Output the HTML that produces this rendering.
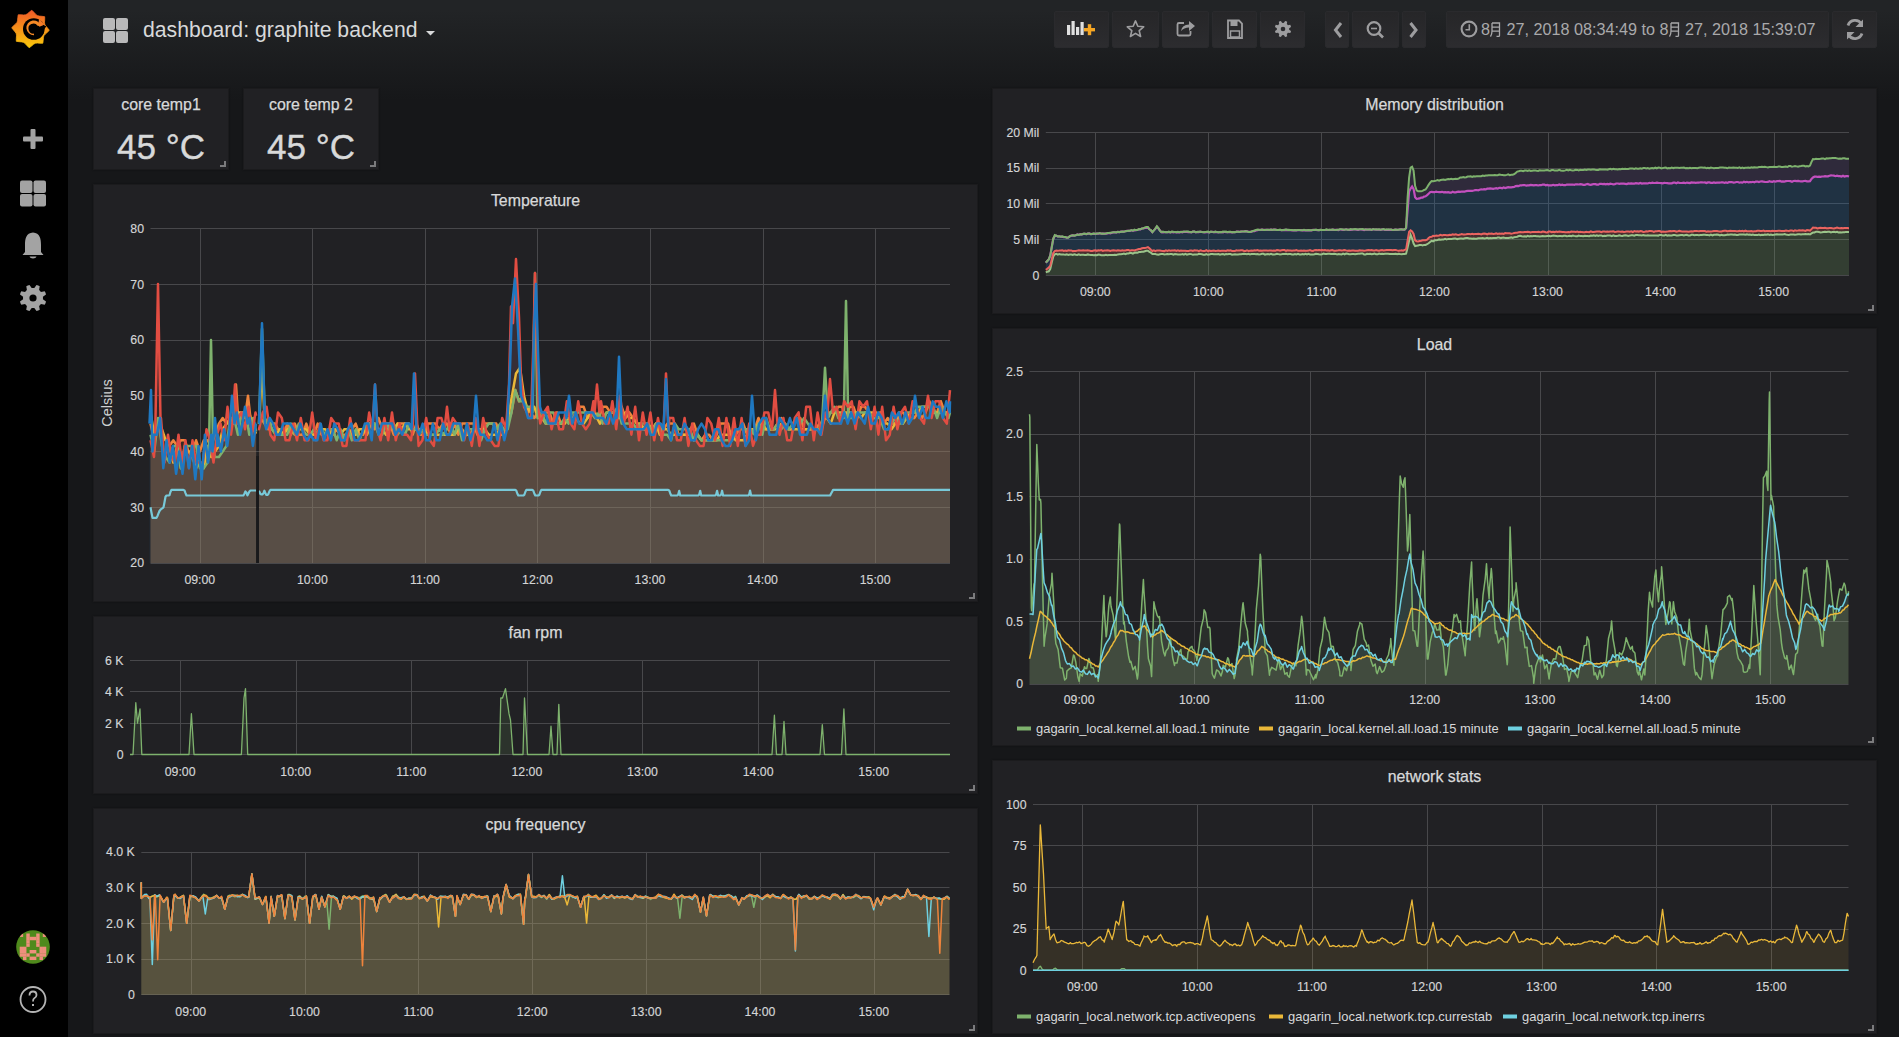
<!DOCTYPE html><html><head><meta charset="utf-8"><style>
html,body{margin:0;padding:0;width:1899px;height:1037px;overflow:hidden;background:#161719;font-family:"Liberation Sans", sans-serif;color:#d8d9da}
#bg{position:absolute;left:68px;top:0;width:1831px;height:1037px;background:linear-gradient(180deg,#222426 10px,#161719 100px)}
#side{position:absolute;left:0;top:0;width:68px;height:1037px;background:#000}
.panel{position:absolute;background:#212124;border:1px solid #1b1b1d;box-sizing:border-box;box-shadow:0 0 2px rgba(0,0,0,0.35)}
.ptitle{position:absolute;text-align:center;font-size:15.9px;line-height:20px;color:#d8d9da;-webkit-text-stroke:0.25px #d8d9da;white-space:nowrap}
.rh{position:absolute;width:6px;height:6px;box-sizing:border-box;border-right:2px solid #7b7b7d;border-bottom:2px solid #7b7b7d}
.btn{position:absolute;top:11px;height:37px;box-sizing:border-box;background:linear-gradient(180deg,#262628,#2c2c2f);border:1px solid #2a2a2d;border-radius:2px}
svg{position:absolute;left:0;top:0}
.tk{font-family:"Liberation Sans", sans-serif;font-size:12.3px;fill:#d4d5d6;stroke:#d4d5d6;stroke-width:0.15px}
.lg{font-family:"Liberation Sans", sans-serif;font-size:12.95px;fill:#d8d9da}
</style></head><body>
<div id="bg"></div>
<div id="side"></div>

<svg width="1899" height="1037" style="z-index:1">
<defs><linearGradient id="lg1" x1="0" y1="0" x2="0" y2="1"><stop offset="0" stop-color="#F05A28"/><stop offset="1" stop-color="#FBCA0A"/></linearGradient></defs>
<polygon points="31.8,10.2 33.9,12.3 35.6,14.2 37.2,15.6 39.2,16.1 41.8,16.3 44.7,16.7 44.7,19.6 44.5,22.2 44.7,24.2 45.8,26.0 47.5,28.0 49.3,30.3 47.2,32.4 45.3,34.1 43.9,35.7 43.4,37.7 43.2,40.3 42.8,43.2 39.9,43.2 37.3,43.0 35.3,43.2 33.5,44.3 31.5,46.0 29.2,47.8 27.1,45.7 25.4,43.8 23.8,42.4 21.8,41.9 19.2,41.7 16.3,41.3 16.3,38.4 16.5,35.8 16.3,33.8 15.2,32.0 13.5,30.0 11.7,27.7 13.8,25.6 15.7,23.9 17.1,22.3 17.6,20.3 17.8,17.7 18.2,14.8 21.1,14.8 23.7,15.0 25.7,14.8 27.5,13.7 29.5,12.0" fill="url(#lg1)" stroke="url(#lg1)" stroke-width="0.8" stroke-linejoin="round"/>
<circle cx="33.8" cy="29.0" r="10.8" fill="#000"/>
<path d="M39.2 18.8 L44.5 24.7 L39.4 26.8 L38.0 24.8 Z" fill="#F37A2A"/>
<path d="M41.0 26.1 A7.4 7.4 0 1 0 34.0 35.2 L34.0 33.6 A5 5 0 1 1 37.6 25.8 Z" fill="#F68A26"/>
<path d="M42.9 24.8 L46.3 26.3 L43.8 29.9 Z" fill="#000"/>
<rect x="23" y="136.5" width="20" height="5" rx="1" fill="#a3a3a3"/><rect x="30.5" y="129" width="5" height="20" rx="1" fill="#a3a3a3"/>
<rect x="20.0" y="180.5" width="12.5" height="12.5" rx="2" fill="#a3a3a3"/>
<rect x="33.5" y="180.5" width="12.5" height="12.5" rx="2" fill="#a3a3a3"/>
<rect x="20.0" y="194.0" width="12.5" height="12.5" rx="2" fill="#a3a3a3"/>
<rect x="33.5" y="194.0" width="12.5" height="12.5" rx="2" fill="#a3a3a3"/>
<path d="M33 232.5 C26 233 25 239 25 245 L25 252 L22.5 255 L43.5 255 L41 252 L41 245 C41 239 40 233 33 232.5 Z" fill="#a3a3a3"/>
<path d="M29.5 256.5 L36.5 256.5 C36 259 30 259 29.5 256.5 Z" fill="#a3a3a3"/>
<polygon points="45.5,303.2 44.7,304.8 40.9,304.1 40.1,305.1 39.1,305.9 39.8,309.7 38.2,310.5 36.5,311.0 34.3,307.9 33.0,308.0 31.7,307.9 29.5,311.0 27.8,310.5 26.2,309.7 26.9,305.9 25.9,305.1 25.1,304.1 21.3,304.8 20.5,303.2 20.0,301.5 23.1,299.3 23.0,298.0 23.1,296.7 20.0,294.5 20.5,292.8 21.3,291.2 25.1,291.9 25.9,290.9 26.9,290.1 26.3,286.3 27.8,285.5 29.5,285.0 31.7,288.1 33.0,288.0 34.3,288.1 36.5,285.0 38.2,285.5 39.7,286.3 39.1,290.1 40.1,290.9 40.9,291.9 44.7,291.2 45.5,292.8 46.0,294.5 42.9,296.7 43.0,298.0 42.9,299.3 46.0,301.5" fill="#a3a3a3"/>
<circle cx="33" cy="298" r="3.6" fill="#000"/>
<defs><clipPath id="avc"><circle cx="33" cy="947" r="16.8"/></clipPath></defs>
<circle cx="33" cy="947" r="16.8" fill="#4f8a1c"/>
<g clip-path="url(#avc)">
<rect x="19.70" y="933.50" width="3.45" height="3.45" fill="#ee8f7c"/>
<rect x="26.30" y="933.50" width="3.45" height="3.45" fill="#ee8f7c"/>
<rect x="36.20" y="933.50" width="3.45" height="3.45" fill="#ee8f7c"/>
<rect x="42.80" y="933.50" width="3.45" height="3.45" fill="#ee8f7c"/>
<rect x="26.30" y="936.80" width="3.45" height="3.45" fill="#ee8f7c"/>
<rect x="29.60" y="936.80" width="3.45" height="3.45" fill="#ee8f7c"/>
<rect x="32.90" y="936.80" width="3.45" height="3.45" fill="#ee8f7c"/>
<rect x="36.20" y="936.80" width="3.45" height="3.45" fill="#ee8f7c"/>
<rect x="26.30" y="940.10" width="3.45" height="3.45" fill="#ee8f7c"/>
<rect x="36.20" y="940.10" width="3.45" height="3.45" fill="#ee8f7c"/>
<rect x="26.30" y="943.40" width="3.45" height="3.45" fill="#ee8f7c"/>
<rect x="36.20" y="943.40" width="3.45" height="3.45" fill="#ee8f7c"/>
<rect x="19.70" y="946.70" width="3.45" height="3.45" fill="#ee8f7c"/>
<rect x="23.00" y="946.70" width="3.45" height="3.45" fill="#ee8f7c"/>
<rect x="39.50" y="946.70" width="3.45" height="3.45" fill="#ee8f7c"/>
<rect x="42.80" y="946.70" width="3.45" height="3.45" fill="#ee8f7c"/>
<rect x="19.70" y="950.00" width="3.45" height="3.45" fill="#ee8f7c"/>
<rect x="23.00" y="950.00" width="3.45" height="3.45" fill="#ee8f7c"/>
<rect x="29.60" y="950.00" width="3.45" height="3.45" fill="#ee8f7c"/>
<rect x="32.90" y="950.00" width="3.45" height="3.45" fill="#ee8f7c"/>
<rect x="39.50" y="950.00" width="3.45" height="3.45" fill="#ee8f7c"/>
<rect x="42.80" y="950.00" width="3.45" height="3.45" fill="#ee8f7c"/>
<rect x="19.70" y="953.30" width="3.45" height="3.45" fill="#ee8f7c"/>
<rect x="23.00" y="953.30" width="3.45" height="3.45" fill="#ee8f7c"/>
<rect x="26.30" y="953.30" width="3.45" height="3.45" fill="#ee8f7c"/>
<rect x="36.20" y="953.30" width="3.45" height="3.45" fill="#ee8f7c"/>
<rect x="39.50" y="953.30" width="3.45" height="3.45" fill="#ee8f7c"/>
<rect x="42.80" y="953.30" width="3.45" height="3.45" fill="#ee8f7c"/>
<rect x="23.00" y="956.60" width="3.45" height="3.45" fill="#ee8f7c"/>
<rect x="29.60" y="956.60" width="3.45" height="3.45" fill="#ee8f7c"/>
<rect x="32.90" y="956.60" width="3.45" height="3.45" fill="#ee8f7c"/>
<rect x="39.50" y="956.60" width="3.45" height="3.45" fill="#ee8f7c"/>
</g>
<circle cx="33" cy="999.5" r="12.5" fill="none" stroke="#b4b4b4" stroke-width="1.8"/>
<path d="M29.5 995.5 Q29.5 991.5 33 991.5 Q36.5 991.5 36.5 995 Q36.5 997.2 34.3 998.3 Q33 999 33 1001.5" fill="none" stroke="#b4b4b4" stroke-width="1.8"/><rect x="32" y="1004" width="2" height="2" fill="#b4b4b4"/>
<rect x="103.0" y="18.0" width="12" height="12" rx="2" fill="#b9b9ba"/>
<rect x="116.0" y="18.0" width="12" height="12" rx="2" fill="#b9b9ba"/>
<rect x="103.0" y="31.0" width="12" height="12" rx="2" fill="#b9b9ba"/>
<rect x="116.0" y="31.0" width="12" height="12" rx="2" fill="#b9b9ba"/>
</svg>
<div style="position:absolute;left:143px;top:17px;font-size:21.2px;line-height:26px;color:#d8d9da;white-space:nowrap">dashboard: graphite backend</div>
<svg width="1899" height="60" style="z-index:2"><path d="M426 31 L435 31 L430.5 35.5 Z" fill="#d8d9da"/></svg>
<div class="btn" style="left:1054px;width:55px"></div>
<div class="btn" style="left:1112px;width:47px"></div>
<div class="btn" style="left:1162px;width:47px"></div>
<div class="btn" style="left:1212px;width:45px"></div>
<div class="btn" style="left:1260px;width:45px"></div>
<div class="btn" style="left:1325px;width:24px"></div>
<div class="btn" style="left:1352px;width:47px"></div>
<div class="btn" style="left:1402px;width:24px"></div>
<div class="btn" style="left:1446px;width:383px"></div>
<div class="btn" style="left:1832px;width:45px"></div>
<svg width="1899" height="60" style="z-index:3">
<rect x="1067" y="25" width="3.2" height="10" fill="#e0e0e0"/><rect x="1071.5" y="21" width="3.2" height="14" fill="#e0e0e0"/><rect x="1076" y="27" width="3.2" height="8" fill="#e0e0e0"/><rect x="1080.5" y="22" width="3.2" height="13" fill="#e0e0e0"/>
<rect x="1084" y="28" width="11" height="3.4" fill="#f5a623"/><rect x="1087.8" y="24.2" width="3.4" height="11" fill="#f5a623"/>
<polygon points="1135.5,20.9 1137.8,26.3 1143.7,26.8 1139.2,30.7 1140.6,36.5 1135.5,33.4 1130.4,36.5 1131.8,30.7 1127.3,26.8 1133.2,26.3" fill="none" stroke="#9d9d9f" stroke-width="1.6" stroke-linejoin="round"/>
<path d="M1184 23 L1179 23 Q1177.5 23 1177.5 24.5 L1177.5 34 Q1177.5 35.5 1179 35.5 L1189 35.5 Q1190.5 35.5 1190.5 34 L1190.5 31" fill="none" stroke="#9d9d9f" stroke-width="1.8"/>
<path d="M1181 31 Q1182 24.5 1189 24.5 L1189 21 L1195 26 L1189 31 L1189 27.5 Q1184 27.5 1181 31 Z" fill="#9d9d9f"/>
<path d="M1228 20.5 L1239 20.5 L1242 23.5 L1242 38 L1228 38 Z" fill="none" stroke="#9d9d9f" stroke-width="1.8"/>
<rect x="1230.5" y="21" width="7" height="5" fill="#9d9d9f"/><rect x="1230.5" y="31" width="9" height="6" fill="none" stroke="#9d9d9f" stroke-width="1.5"/>
<polygon points="1290.7,32.2 1290.2,33.1 1287.9,32.8 1287.4,33.4 1286.8,33.9 1287.2,36.2 1286.2,36.7 1285.1,37.0 1283.8,35.1 1283.0,35.2 1282.2,35.1 1280.9,37.0 1279.8,36.7 1278.8,36.2 1279.2,33.9 1278.6,33.4 1278.1,32.8 1275.8,33.1 1275.3,32.2 1275.0,31.1 1276.9,29.8 1276.8,29.0 1276.9,28.2 1275.0,26.9 1275.3,25.8 1275.8,24.8 1278.1,25.2 1278.6,24.6 1279.2,24.1 1278.8,21.8 1279.8,21.3 1280.9,21.0 1282.2,22.9 1283.0,22.8 1283.8,22.9 1285.1,21.0 1286.2,21.3 1287.2,21.8 1286.8,24.1 1287.4,24.6 1287.9,25.2 1290.2,24.8 1290.7,25.8 1291.0,26.9 1289.1,28.2 1289.2,29.0 1289.1,29.8 1291.0,31.1" fill="#9d9d9f"/><circle cx="1283" cy="29" r="2.3" fill="#29292c"/>
<path d="M1341 23 L1335.5 30 L1341 37" fill="none" stroke="#9d9d9f" stroke-width="3"/>
<path d="M1410.5 23 L1416 30 L1410.5 37" fill="none" stroke="#9d9d9f" stroke-width="3"/>
<circle cx="1374" cy="28.5" r="6.3" fill="none" stroke="#9d9d9f" stroke-width="2.2"/><path d="M1378.5 33 L1383 37.5" stroke="#9d9d9f" stroke-width="2.6"/><path d="M1371 28.5 L1377 28.5" stroke="#9d9d9f" stroke-width="1.6"/>
<circle cx="1469" cy="29" r="7.4" fill="none" stroke="#9d9d9f" stroke-width="2.1"/><path d="M1469.3 24.2 L1469.3 29.8 L1465.5 29.8" fill="none" stroke="#9d9d9f" stroke-width="1.6"/>
<path d="M1848 25.5 A7.5 7.5 0 0 1 1861.5 24" fill="none" stroke="#9d9d9f" stroke-width="2.8"/><path d="M1863 19.5 L1863 27 L1855.5 27 Z" fill="#9d9d9f"/>
<path d="M1862 33.5 A7.5 7.5 0 0 1 1848.5 35" fill="none" stroke="#9d9d9f" stroke-width="2.8"/><path d="M1847 39.5 L1847 32 L1854.5 32 Z" fill="#9d9d9f"/>
</svg>
<div style="position:absolute;left:1481px;top:20px;font-size:16.2px;line-height:18px;color:#a9a9ab;white-space:nowrap;z-index:4">8<svg width="11" height="15" viewBox="0 0 11 15" style="position:relative;display:inline-block;vertical-align:-2px;margin:0 1px 0 0"><path d="M2 1 L9.5 1 L9.5 13.5 Q9.5 14.5 8 14.5 L6.5 14.5 M2 1 L2 9 Q2 12.5 0.5 14.5 M2 5.2 L9.5 5.2 M2 9.2 L9.5 9.2" fill="none" stroke="#a9a9ab" stroke-width="1.3"/></svg> 27, 2018 08:34:49 to 8<svg width="11" height="15" viewBox="0 0 11 15" style="position:relative;display:inline-block;vertical-align:-2px;margin:0 1px 0 0"><path d="M2 1 L9.5 1 L9.5 13.5 Q9.5 14.5 8 14.5 L6.5 14.5 M2 1 L2 9 Q2 12.5 0.5 14.5 M2 5.2 L9.5 5.2 M2 9.2 L9.5 9.2" fill="none" stroke="#a9a9ab" stroke-width="1.3"/></svg> 27, 2018 15:39:07</div>
<div class="panel" style="left:93px;top:88px;width:136px;height:82px"></div>
<div class="ptitle" style="left:93px;top:94.6px;width:136px">core temp1</div>
<div class="rh" style="left:220px;top:161px"></div>
<div class="panel" style="left:243px;top:88px;width:136px;height:82px"></div>
<div class="ptitle" style="left:243px;top:94.6px;width:136px">core temp 2</div>
<div class="rh" style="left:370px;top:161px"></div>
<div style="position:absolute;left:93px;top:126px;width:136px;text-align:center;font-size:35px;line-height:42px;color:#d8d9da;white-space:nowrap;-webkit-text-stroke:0.4px #d8d9da">45 °C</div>
<div style="position:absolute;left:243px;top:126px;width:136px;text-align:center;font-size:35px;line-height:42px;color:#d8d9da;white-space:nowrap;-webkit-text-stroke:0.4px #d8d9da">45 °C</div>
<div class="panel" style="left:93px;top:184px;width:885px;height:418px"></div>
<div class="ptitle" style="left:93px;top:190.6px;width:885px">Temperature</div>
<div class="rh" style="left:969px;top:593px"></div>
<div class="panel" style="left:93px;top:616px;width:885px;height:178px"></div>
<div class="ptitle" style="left:93px;top:622.6px;width:885px">fan rpm</div>
<div class="rh" style="left:969px;top:785px"></div>
<div class="panel" style="left:93px;top:808px;width:885px;height:226px"></div>
<div class="ptitle" style="left:93px;top:814.6px;width:885px">cpu frequency</div>
<div class="rh" style="left:969px;top:1025px"></div>
<div class="panel" style="left:992px;top:88px;width:885px;height:226px"></div>
<div class="ptitle" style="left:992px;top:94.6px;width:885px">Memory distribution</div>
<div class="rh" style="left:1868px;top:305px"></div>
<div class="panel" style="left:992px;top:328px;width:885px;height:418px"></div>
<div class="ptitle" style="left:992px;top:334.6px;width:885px">Load</div>
<div class="rh" style="left:1868px;top:737px"></div>
<div class="panel" style="left:992px;top:760px;width:885px;height:274px"></div>
<div class="ptitle" style="left:992px;top:766.6px;width:885px">network stats</div>
<div class="rh" style="left:1868px;top:1025px"></div>
<svg width="1899" height="1037" style="z-index:5">
<path d="M150.5 228.5 H950.0" stroke="#48484b" stroke-width="1"/>
<path d="M150.5 284.5 H950.0" stroke="#48484b" stroke-width="1"/>
<path d="M150.5 340.5 H950.0" stroke="#48484b" stroke-width="1"/>
<path d="M150.5 395.5 H950.0" stroke="#48484b" stroke-width="1"/>
<path d="M150.5 451.5 H950.0" stroke="#48484b" stroke-width="1"/>
<path d="M150.5 507.5 H950.0" stroke="#48484b" stroke-width="1"/>
<path d="M150.5 563.5 H950.0" stroke="#48484b" stroke-width="1"/>
<path d="M200.5 228.4 V563.0" stroke="#48484b" stroke-width="1"/>
<path d="M312.5 228.4 V563.0" stroke="#48484b" stroke-width="1"/>
<path d="M425.5 228.4 V563.0" stroke="#48484b" stroke-width="1"/>
<path d="M537.5 228.4 V563.0" stroke="#48484b" stroke-width="1"/>
<path d="M650.5 228.4 V563.0" stroke="#48484b" stroke-width="1"/>
<path d="M763.5 228.4 V563.0" stroke="#48484b" stroke-width="1"/>
<path d="M875.5 228.4 V563.0" stroke="#48484b" stroke-width="1"/>
<path d="M150.5 563.0 L150.5 423.6 L154.3 440.3 L158.1 423.6 L161.9 434.7 L165.7 440.3 L169.5 445.9 L173.3 440.3 L177.1 445.9 L180.9 440.3 L184.7 440.3 L188.5 451.5 L192.3 451.5 L196.1 440.3 L199.9 451.5 L203.7 440.3 L207.5 440.3 L211.3 445.9 L215.1 434.7 L218.9 423.6 L222.7 418.0 L226.5 423.6 L230.3 423.6 L233.5 423.6 L236.0 384.5 L238.5 423.6 L241.7 412.4 L245.0 418.0 L248.0 395.7 L251.0 423.6 L253.1 429.2 L256.2 424.6 L256.2 563.0 Z" fill="#EF843C" fill-opacity="0.1"/>
<path d="M258.9 563.0 L258.9 420.6 L260.7 418.0 L264.5 423.6 L268.3 429.2 L272.0 423.6 L275.0 423.6 L278.0 429.2 L279.7 429.2 L283.5 434.7 L287.3 423.6 L291.1 434.7 L294.9 423.6 L298.7 434.7 L302.5 434.7 L306.3 423.6 L310.1 434.7 L313.9 434.7 L317.7 423.6 L321.5 434.7 L325.3 434.7 L329.1 429.2 L332.9 434.7 L336.7 429.2 L340.5 434.7 L344.3 434.7 L348.1 434.7 L351.9 429.2 L355.7 423.6 L359.5 434.7 L363.3 434.7 L367.1 423.6 L370.9 423.6 L374.7 429.2 L378.5 418.0 L382.3 429.2 L386.1 423.6 L389.9 423.6 L393.7 434.7 L397.5 423.6 L401.3 423.6 L405.1 423.6 L408.9 423.6 L412.7 434.7 L416.5 423.6 L420.3 434.7 L424.1 434.7 L427.9 423.6 L431.7 423.6 L435.5 423.6 L439.3 429.2 L443.1 423.6 L446.9 423.6 L450.7 434.7 L454.5 423.6 L458.3 434.7 L462.1 423.6 L465.9 423.6 L469.7 423.6 L473.5 423.6 L477.3 434.7 L481.1 434.7 L484.9 423.6 L488.7 423.6 L492.5 423.6 L496.3 423.6 L500.1 434.7 L503.9 434.7 L507.7 423.6 L511.5 412.4 L515.3 390.1 L519.1 401.3 L522.9 395.7 L526.7 406.8 L530.5 412.4 L534.3 418.0 L538.1 412.4 L541.9 418.0 L545.7 412.4 L549.5 412.4 L553.3 423.6 L557.1 412.4 L560.9 423.6 L564.7 423.6 L568.5 418.0 L572.3 418.0 L576.1 412.4 L579.9 406.8 L583.7 406.8 L587.5 418.0 L591.3 412.4 L595.1 418.0 L598.9 418.0 L602.7 406.8 L606.5 406.8 L610.3 412.4 L614.1 412.4 L617.9 418.0 L621.7 406.8 L625.5 418.0 L629.3 412.4 L633.1 418.0 L636.9 423.6 L640.7 429.2 L644.5 429.2 L648.3 429.2 L652.1 429.2 L655.9 423.6 L659.7 429.2 L663.5 429.2 L667.3 423.6 L671.1 423.6 L674.9 423.6 L678.7 434.7 L682.5 434.7 L686.3 434.7 L690.1 429.2 L693.9 423.6 L697.7 434.7 L701.5 440.3 L705.3 434.7 L709.1 434.7 L712.9 440.3 L716.7 434.7 L720.5 423.6 L724.3 423.6 L728.1 423.6 L731.9 440.3 L735.7 434.7 L739.5 429.2 L743.3 423.6 L747.1 434.7 L750.9 434.7 L754.7 429.2 L758.5 418.0 L762.3 429.2 L766.1 429.2 L769.9 429.2 L773.7 429.2 L777.5 423.6 L781.3 418.0 L785.1 429.2 L788.9 429.2 L792.7 429.2 L796.5 418.0 L800.3 418.0 L804.1 429.2 L807.9 429.2 L811.7 429.2 L815.5 429.2 L819.3 423.6 L823.1 423.6 L826.9 412.4 L830.7 412.4 L834.5 412.4 L838.3 406.8 L842.1 406.8 L845.9 418.0 L849.7 406.8 L853.5 406.8 L857.3 418.0 L861.1 406.8 L864.9 406.8 L868.7 412.4 L872.5 418.0 L876.3 418.0 L880.1 412.4 L883.9 423.6 L887.7 418.0 L891.5 423.6 L895.3 423.6 L899.1 412.4 L902.9 412.4 L906.7 418.0 L910.5 418.0 L914.3 418.0 L918.1 412.4 L921.9 418.0 L925.7 412.4 L929.5 401.3 L933.3 412.4 L937.1 412.4 L940.9 401.3 L944.7 412.4 L948.5 412.4 L950.0 412.4 L950.0 563.0 Z" fill="#EF843C" fill-opacity="0.1"/>
<path d="M150.5 563.0 L150.5 412.4 L154.3 434.7 L158.1 429.2 L161.9 429.2 L165.7 440.3 L169.5 445.9 L173.3 462.6 L177.1 445.9 L180.9 468.2 L184.7 451.5 L188.5 451.5 L192.3 457.0 L196.1 468.2 L199.9 462.6 L203.7 468.2 L207.5 445.9 L211.3 457.0 L215.1 451.5 L218.9 445.9 L222.7 429.2 L226.5 423.6 L230.3 418.0 L234.1 423.6 L237.9 412.4 L241.7 412.4 L245.5 418.0 L249.3 412.4 L253.1 429.2 L256.2 433.7 L256.2 563.0 Z" fill="#EAB839" fill-opacity="0.1"/>
<path d="M258.9 563.0 L258.9 424.1 L259.0 423.6 L262.0 367.8 L265.0 423.6 L268.3 423.6 L272.1 429.2 L275.9 434.7 L279.7 429.2 L283.5 434.7 L287.3 429.2 L291.1 429.2 L294.9 434.7 L298.7 429.2 L302.5 429.2 L306.3 429.2 L310.1 434.7 L313.9 434.7 L317.7 434.7 L321.5 429.2 L325.3 429.2 L329.1 434.7 L332.9 429.2 L336.7 429.2 L340.5 434.7 L344.3 429.2 L348.1 429.2 L351.9 434.7 L355.7 434.7 L359.5 429.2 L363.3 429.2 L367.1 434.7 L370.9 423.6 L374.7 423.6 L378.5 429.2 L382.3 429.2 L386.1 434.7 L389.9 423.6 L393.7 429.2 L397.5 423.6 L401.3 429.2 L405.1 423.6 L408.9 429.2 L412.7 429.2 L416.5 429.2 L420.3 429.2 L424.1 429.2 L427.9 434.7 L431.7 434.7 L435.5 434.7 L439.3 434.7 L443.1 434.7 L446.9 434.7 L450.7 434.7 L454.5 434.7 L458.3 429.2 L462.1 429.2 L465.9 434.7 L469.7 434.7 L473.5 429.2 L477.3 429.2 L481.1 429.2 L484.9 429.2 L488.7 434.7 L492.5 434.7 L496.3 434.7 L500.1 429.2 L503.9 429.2 L506.0 429.2 L512.0 395.7 L516.0 373.4 L520.0 367.8 L524.0 395.7 L528.0 412.4 L530.5 406.8 L534.3 406.8 L538.1 418.0 L541.9 418.0 L545.7 423.6 L549.5 423.6 L553.3 423.6 L557.1 423.6 L560.9 423.6 L564.7 423.6 L568.5 418.0 L572.3 418.0 L576.1 418.0 L579.9 423.6 L583.7 423.6 L587.5 418.0 L591.3 412.4 L595.1 412.4 L597.0 418.0 L600.0 423.6 L603.0 418.0 L606.5 412.4 L610.3 412.4 L614.1 412.4 L617.9 418.0 L621.7 418.0 L625.5 412.4 L629.3 418.0 L633.1 418.0 L636.9 423.6 L640.7 423.6 L644.5 429.2 L648.3 423.6 L652.1 429.2 L655.9 423.6 L659.7 434.7 L663.5 429.2 L667.3 429.2 L671.1 434.7 L674.9 434.7 L678.7 434.7 L682.5 434.7 L686.3 434.7 L690.1 434.7 L693.9 440.3 L697.7 434.7 L701.5 440.3 L705.3 440.3 L709.1 440.3 L712.9 440.3 L716.7 440.3 L720.5 434.7 L724.3 434.7 L728.1 434.7 L731.9 434.7 L735.7 440.3 L739.5 440.3 L743.3 440.3 L747.1 434.7 L750.9 429.2 L754.7 429.2 L758.5 423.6 L762.3 423.6 L766.1 429.2 L769.9 429.2 L773.7 429.2 L777.5 429.2 L781.3 423.6 L785.1 423.6 L788.9 429.2 L792.7 429.2 L796.5 429.2 L800.3 429.2 L804.1 429.2 L807.9 429.2 L811.7 429.2 L815.5 429.2 L819.3 429.2 L823.1 418.0 L826.9 418.0 L830.7 423.6 L834.5 412.4 L838.3 412.4 L842.1 412.4 L845.9 412.4 L849.7 412.4 L853.5 412.4 L857.3 412.4 L861.1 418.0 L864.9 412.4 L868.7 412.4 L872.5 412.4 L876.3 412.4 L880.1 418.0 L883.9 423.6 L887.7 423.6 L891.5 429.2 L895.3 423.6 L899.1 418.0 L902.9 423.6 L906.7 418.0 L910.5 412.4 L914.3 412.4 L918.1 412.4 L921.9 406.8 L925.7 406.8 L929.5 406.8 L933.3 412.4 L937.1 412.4 L940.9 412.4 L944.7 412.4 L948.5 412.4 L950.0 412.4 L950.0 563.0 Z" fill="#EAB839" fill-opacity="0.1"/>
<path d="M150.5 563.0 L150.5 434.7 L154.3 451.5 L158.1 418.0 L161.9 445.9 L165.7 457.0 L169.5 462.6 L173.3 445.9 L177.1 445.9 L180.9 468.2 L184.7 445.9 L188.5 445.9 L192.3 445.9 L196.1 445.9 L199.9 468.2 L203.7 468.2 L207.5 462.6 L208.8 457.0 L211.0 339.9 L213.2 451.5 L215.1 457.0 L218.9 457.0 L222.7 451.5 L226.5 445.9 L230.3 418.0 L234.1 418.0 L237.9 434.7 L241.7 412.4 L245.5 412.4 L249.3 434.7 L253.1 418.0 L256.2 431.6 L256.2 563.0 Z" fill="#7EB26D" fill-opacity="0.1"/>
<path d="M258.9 563.0 L258.9 424.1 L259.0 423.6 L262.0 328.8 L265.0 423.6 L268.3 418.0 L272.1 429.2 L275.9 434.7 L279.7 434.7 L283.5 434.7 L287.3 434.7 L291.1 423.6 L294.9 434.7 L298.7 423.6 L302.5 429.2 L306.3 434.7 L310.1 434.7 L313.9 429.2 L317.7 434.7 L321.5 429.2 L325.3 434.7 L329.1 429.2 L332.9 429.2 L336.7 440.3 L340.5 429.2 L344.3 440.3 L348.1 429.2 L351.9 440.3 L355.7 429.2 L359.5 440.3 L363.3 429.2 L367.1 423.6 L370.9 423.6 L374.7 423.6 L378.5 434.7 L382.3 434.7 L386.1 423.6 L389.9 429.2 L393.7 423.6 L397.5 434.7 L401.3 429.2 L405.1 434.7 L408.9 423.6 L412.7 429.2 L416.5 429.2 L420.3 429.2 L424.1 434.7 L427.9 434.7 L431.7 434.7 L435.5 434.7 L439.3 429.2 L443.1 434.7 L446.9 429.2 L450.7 423.6 L454.5 434.7 L458.3 423.6 L462.1 440.3 L465.9 434.7 L469.7 429.2 L473.5 429.2 L477.3 429.2 L481.1 440.3 L484.9 429.2 L488.7 423.6 L492.5 423.6 L496.3 429.2 L500.1 423.6 L503.9 429.2 L507.7 429.2 L511.5 412.4 L515.3 390.1 L519.1 401.3 L522.9 401.3 L526.7 406.8 L530.5 406.8 L532.5 412.4 L535.0 273.0 L537.5 418.0 L538.1 412.4 L541.9 412.4 L545.7 423.6 L549.5 412.4 L553.3 412.4 L557.1 423.6 L560.9 423.6 L564.7 418.0 L568.5 423.6 L572.3 412.4 L576.1 412.4 L579.9 412.4 L583.7 412.4 L587.5 412.4 L591.3 412.4 L595.1 418.0 L598.9 412.4 L602.7 423.6 L606.5 412.4 L610.3 412.4 L614.1 412.4 L617.9 406.8 L621.7 423.6 L625.5 423.6 L629.3 423.6 L633.1 423.6 L636.9 429.2 L640.7 423.6 L644.5 423.6 L648.3 423.6 L652.1 434.7 L655.9 423.6 L659.7 423.6 L663.5 434.7 L667.3 434.7 L671.1 440.3 L674.9 423.6 L678.7 429.2 L682.5 429.2 L686.3 429.2 L690.1 429.2 L693.9 440.3 L697.7 434.7 L701.5 440.3 L705.3 440.3 L709.1 440.3 L712.9 440.3 L716.7 440.3 L720.5 440.3 L724.3 440.3 L728.1 440.3 L731.9 440.3 L735.7 429.2 L739.5 429.2 L743.3 429.2 L747.1 429.2 L750.9 429.2 L754.7 434.7 L758.5 423.6 L762.3 434.7 L766.1 418.0 L769.9 429.2 L773.7 429.2 L777.5 423.6 L781.3 429.2 L785.1 423.6 L788.9 429.2 L792.7 423.6 L796.5 418.0 L800.3 423.6 L804.1 418.0 L807.9 423.6 L811.7 429.2 L815.5 429.2 L819.3 429.2 L822.0 423.6 L825.0 367.8 L828.0 418.0 L830.7 412.4 L834.5 406.8 L838.3 418.0 L842.1 412.4 L843.8 418.0 L846.0 300.9 L848.2 418.0 L849.7 418.0 L853.5 418.0 L857.3 412.4 L861.1 412.4 L864.9 412.4 L868.7 412.4 L872.5 418.0 L876.3 418.0 L880.1 418.0 L883.9 429.2 L887.7 429.2 L891.5 423.6 L895.3 418.0 L899.1 423.6 L902.9 423.6 L906.7 412.4 L910.5 412.4 L914.3 412.4 L918.1 406.8 L921.9 406.8 L925.7 406.8 L929.5 406.8 L933.3 406.8 L937.1 418.0 L940.9 406.8 L944.7 412.4 L948.5 418.0 L950.0 412.4 L950.0 563.0 Z" fill="#7EB26D" fill-opacity="0.1"/>
<path d="M150.5 563.0 L150.5 440.3 L154.0 457.0 L155.2 434.7 L158.0 284.1 L160.8 434.7 L161.0 418.0 L164.5 462.6 L168.0 434.7 L171.5 457.0 L175.0 462.6 L178.5 434.7 L182.0 462.6 L185.5 440.3 L189.0 468.2 L192.5 440.3 L196.0 462.6 L199.5 462.6 L203.0 462.6 L206.5 429.2 L210.0 440.3 L213.5 462.6 L217.0 434.7 L220.5 423.6 L224.0 440.3 L227.5 406.8 L231.0 434.7 L232.5 423.6 L235.0 384.5 L237.5 423.6 L238.0 418.0 L241.5 412.4 L245.0 429.2 L248.5 406.8 L252.0 434.7 L255.5 412.4 L256.2 415.8 L256.2 563.0 Z" fill="#E24D42" fill-opacity="0.13"/>
<path d="M258.9 563.0 L258.9 428.7 L259.0 429.2 L262.8 412.4 L266.6 406.8 L270.4 434.7 L274.2 440.3 L278.0 412.4 L281.8 418.0 L285.6 440.3 L289.4 440.3 L293.2 423.6 L297.0 440.3 L300.8 418.0 L304.6 440.3 L308.4 440.3 L312.2 412.4 L316.0 440.3 L319.8 423.6 L323.6 440.3 L327.4 440.3 L331.2 418.0 L335.0 423.6 L338.8 423.6 L342.6 445.9 L346.4 445.9 L350.2 418.0 L354.0 440.3 L357.8 440.3 L361.6 440.3 L365.4 440.3 L369.2 412.4 L372.5 429.2 L375.0 384.5 L377.5 429.2 L380.6 440.3 L384.4 418.0 L388.2 440.3 L392.0 412.4 L395.8 440.3 L399.6 423.6 L403.4 434.7 L407.2 434.7 L411.0 440.3 L412.5 429.2 L415.0 373.4 L417.5 429.2 L418.6 445.9 L422.4 440.3 L426.2 418.0 L430.0 440.3 L433.8 445.9 L437.6 418.0 L441.4 418.0 L444.5 429.2 L447.0 406.8 L449.5 429.2 L452.8 418.0 L456.6 423.6 L460.4 423.6 L464.2 440.3 L468.0 423.6 L471.8 445.9 L475.6 418.0 L479.4 445.9 L483.2 418.0 L487.0 434.7 L490.8 440.3 L494.6 445.9 L498.4 445.9 L502.2 418.0 L506.0 429.2 L509.0 384.5 L511.0 306.5 L513.0 323.2 L516.0 259.1 L519.0 317.6 L521.0 379.0 L524.0 406.8 L527.0 412.4 L528.8 418.0 L531.0 418.0 L533.5 339.9 L535.0 273.0 L537.0 351.1 L539.0 412.4 L540.2 423.6 L544.0 412.4 L547.8 406.8 L551.6 429.2 L555.4 412.4 L559.2 429.2 L563.0 429.2 L566.8 401.3 L570.6 423.6 L574.4 429.2 L578.2 401.3 L582.0 423.6 L585.8 429.2 L589.6 423.6 L593.4 401.3 L594.5 412.4 L597.0 384.5 L599.5 412.4 L601.0 401.3 L604.8 423.6 L608.6 423.6 L612.4 401.3 L616.2 429.2 L620.0 395.7 L623.8 423.6 L627.6 406.8 L631.4 434.7 L635.2 406.8 L639.0 440.3 L642.8 412.4 L646.6 434.7 L650.4 412.4 L654.2 440.3 L658.0 418.0 L661.8 440.3 L663.5 429.2 L666.0 373.4 L668.5 429.2 L669.4 418.0 L673.2 418.0 L677.0 440.3 L680.8 440.3 L684.6 418.0 L688.4 445.9 L692.2 423.6 L696.0 440.3 L699.8 445.9 L703.6 445.9 L707.4 418.0 L711.2 423.6 L715.0 440.3 L718.8 418.0 L722.6 445.9 L726.4 418.0 L730.2 445.9 L734.0 418.0 L737.8 445.9 L741.6 418.0 L745.4 445.9 L749.2 423.6 L753.0 445.9 L756.8 434.7 L760.6 434.7 L764.4 412.4 L768.2 412.4 L772.0 429.2 L772.5 423.6 L775.0 390.1 L777.5 423.6 L779.6 434.7 L783.4 418.0 L787.2 440.3 L791.0 440.3 L794.8 418.0 L798.6 412.4 L802.4 440.3 L806.2 406.8 L810.0 406.8 L813.8 440.3 L817.6 412.4 L821.4 434.7 L825.2 412.4 L827.0 418.0 L830.0 379.0 L833.0 412.4 L836.6 406.8 L840.4 423.6 L844.2 401.3 L848.0 406.8 L851.8 401.3 L855.6 429.2 L859.4 401.3 L863.2 406.8 L867.0 401.3 L870.8 429.2 L874.6 406.8 L878.4 434.7 L882.2 406.8 L886.0 440.3 L889.8 434.7 L893.6 406.8 L897.4 429.2 L901.2 412.4 L905.0 406.8 L908.8 423.6 L912.6 401.3 L916.4 406.8 L920.2 418.0 L924.0 423.6 L925.5 412.4 L928.0 395.7 L930.5 412.4 L931.6 418.0 L935.4 401.3 L939.2 401.3 L943.0 418.0 L946.8 423.6 L950.0 390.1 L950.0 563.0 Z" fill="#E24D42" fill-opacity="0.13"/>
<path d="M149.5 563.0 L149.5 423.6 L151.0 390.1 L152.5 451.5 L153.7 434.7 L156.9 434.7 L160.1 418.0 L163.3 468.2 L166.5 440.3 L169.7 462.6 L172.9 445.9 L176.1 473.8 L179.3 451.5 L182.5 473.8 L185.7 445.9 L188.9 468.2 L192.1 445.9 L195.3 479.3 L198.5 445.9 L201.7 479.3 L204.9 434.7 L208.1 462.6 L211.3 434.7 L212.5 451.5 L215.0 418.0 L217.5 445.9 L217.7 434.7 L220.9 451.5 L224.1 429.2 L227.3 445.9 L229.5 429.2 L232.0 395.7 L234.5 423.6 L236.9 412.4 L240.1 434.7 L242.5 423.6 L245.0 406.8 L247.5 423.6 L249.7 418.0 L252.9 445.9 L256.1 423.6 L256.2 423.6 L256.2 563.0 Z" fill="#1F78C1" fill-opacity="0.1"/>
<path d="M258.9 563.0 L258.9 423.6 L259.0 423.6 L262.0 323.2 L265.0 423.6 L266.3 429.2 L269.7 418.0 L273.1 423.6 L276.5 434.7 L279.9 434.7 L283.3 423.6 L286.7 423.6 L290.1 423.6 L293.5 429.2 L296.9 434.7 L300.3 423.6 L303.7 434.7 L307.1 440.3 L310.5 434.7 L313.9 440.3 L317.3 440.3 L320.7 423.6 L324.1 440.3 L327.5 429.2 L330.9 440.3 L334.3 423.6 L337.7 429.2 L341.1 440.3 L344.5 440.3 L347.9 429.2 L351.3 423.6 L354.7 440.3 L358.1 440.3 L361.5 434.7 L364.9 423.6 L368.3 423.6 L371.7 440.3 L372.5 429.2 L375.0 384.5 L377.5 429.2 L378.5 434.7 L381.9 423.6 L385.3 423.6 L388.7 423.6 L392.1 423.6 L395.5 434.7 L398.9 429.2 L402.3 434.7 L405.7 423.6 L409.1 423.6 L411.5 429.2 L414.0 373.4 L416.5 429.2 L419.3 434.7 L422.7 423.6 L426.1 440.3 L429.5 440.3 L432.9 423.6 L436.3 440.3 L439.7 440.3 L443.1 423.6 L446.5 434.7 L449.9 434.7 L453.3 423.6 L456.7 423.6 L460.1 423.6 L463.5 440.3 L466.9 423.6 L470.3 440.3 L473.5 429.2 L476.0 395.7 L478.5 429.2 L480.5 434.7 L483.9 434.7 L487.3 440.3 L490.7 440.3 L494.1 423.6 L497.5 440.3 L500.9 423.6 L504.3 440.3 L507.0 429.2 L510.0 367.8 L512.0 306.5 L515.0 278.6 L518.0 328.8 L521.0 395.7 L525.0 406.8 L528.0 418.0 L528.1 418.0 L531.5 418.0 L532.0 418.0 L534.0 328.8 L536.0 284.1 L538.0 351.1 L540.0 406.8 L541.7 412.4 L545.1 412.4 L548.5 423.6 L551.9 423.6 L555.3 423.6 L558.7 412.4 L562.1 412.4 L565.5 412.4 L566.5 418.0 L569.0 395.7 L571.5 418.0 L572.3 423.6 L575.7 412.4 L579.1 423.6 L582.5 423.6 L585.9 412.4 L589.3 412.4 L592.7 412.4 L596.1 418.0 L599.5 418.0 L602.9 418.0 L606.3 423.6 L609.7 412.4 L613.1 423.6 L616.5 412.4 L616.5 418.0 L619.0 356.7 L621.5 418.0 L623.3 423.6 L626.7 429.2 L630.1 429.2 L633.5 429.2 L636.9 429.2 L640.3 429.2 L643.7 429.2 L647.1 423.6 L650.5 434.7 L653.9 434.7 L657.3 423.6 L660.7 423.6 L663.5 429.2 L666.0 379.0 L668.5 429.2 L670.9 440.3 L674.3 423.6 L677.7 434.7 L681.1 434.7 L684.5 423.6 L687.9 429.2 L691.3 440.3 L694.7 440.3 L698.1 429.2 L701.5 423.6 L704.9 429.2 L708.3 440.3 L711.7 440.3 L715.1 429.2 L718.5 429.2 L721.9 440.3 L725.3 445.9 L728.7 445.9 L732.1 440.3 L735.5 429.2 L738.9 429.2 L742.3 423.6 L745.7 445.9 L749.1 440.3 L749.5 434.7 L752.0 395.7 L754.5 429.2 L755.9 440.3 L759.3 423.6 L762.7 418.0 L766.1 418.0 L769.5 434.7 L772.9 434.7 L776.3 434.7 L779.7 418.0 L783.1 423.6 L786.5 429.2 L789.9 418.0 L793.3 429.2 L796.7 418.0 L800.1 434.7 L803.5 434.7 L806.9 434.7 L810.3 423.6 L813.7 429.2 L817.1 429.2 L820.5 434.7 L822.5 423.6 L825.0 395.7 L827.5 418.0 L830.7 423.6 L834.1 423.6 L837.5 423.6 L840.9 423.6 L844.3 412.4 L847.7 423.6 L851.1 412.4 L854.5 423.6 L857.9 412.4 L861.3 418.0 L864.7 423.6 L868.1 406.8 L871.5 423.6 L874.9 423.6 L878.3 412.4 L881.7 418.0 L885.1 429.2 L888.5 429.2 L891.9 412.4 L895.3 418.0 L898.7 412.4 L902.1 423.6 L905.5 412.4 L908.9 423.6 L912.3 418.0 L912.5 418.0 L915.0 395.7 L917.5 412.4 L919.1 418.0 L922.5 406.8 L925.9 418.0 L929.3 418.0 L932.7 401.3 L936.1 406.8 L939.5 406.8 L942.9 418.0 L946.3 401.3 L949.7 412.4 L950.0 401.3 L950.0 563.0 Z" fill="#1F78C1" fill-opacity="0.1"/>
<path d="M150.5 563.0 L150.5 507.2 L151.5 512.8 L152.5 517.8 L153.5 517.8 L154.5 517.8 L155.5 517.8 L156.5 517.8 L157.5 515.9 L158.5 513.4 L159.5 511.0 L160.5 509.6 L161.5 508.8 L162.5 508.1 L163.5 507.3 L164.5 502.3 L165.5 496.7 L166.5 495.5 L167.5 495.5 L168.5 495.5 L169.5 495.2 L170.5 491.7 L171.5 489.9 L172.5 489.9 L173.5 489.9 L174.5 489.9 L175.5 489.9 L176.5 489.9 L177.5 489.9 L178.5 489.9 L179.5 489.9 L180.5 489.9 L181.5 489.9 L182.5 489.9 L183.5 489.9 L184.5 490.4 L185.5 493.1 L186.5 495.5 L187.5 495.5 L188.5 495.5 L189.5 495.5 L190.5 495.5 L191.5 495.5 L192.5 495.5 L193.5 495.5 L194.5 495.5 L195.5 495.5 L196.5 495.5 L197.5 495.5 L198.5 495.5 L199.5 495.5 L200.5 495.5 L201.5 495.5 L202.5 495.5 L203.5 495.5 L204.5 495.5 L205.5 495.5 L206.5 495.5 L207.5 495.5 L208.5 495.5 L209.5 495.5 L210.5 495.5 L211.5 495.5 L212.5 495.5 L213.5 495.5 L214.5 495.5 L215.5 495.5 L216.5 495.5 L217.5 495.5 L218.5 495.5 L219.5 495.5 L220.5 495.5 L221.5 495.5 L222.5 495.5 L223.5 495.5 L224.5 495.5 L225.5 495.5 L226.5 495.5 L227.5 495.5 L228.5 495.5 L229.5 495.5 L230.4 495.5 L231.4 495.5 L232.4 495.5 L233.4 495.5 L234.4 495.5 L235.4 495.5 L236.4 495.5 L237.4 495.5 L238.4 495.5 L239.4 495.5 L240.4 495.5 L241.4 495.5 L242.4 495.5 L243.4 495.5 L244.4 493.7 L245.4 491.4 L246.4 492.5 L247.4 495.4 L248.4 493.5 L249.4 491.6 L250.4 490.5 L251.4 490.5 L252.4 490.5 L253.4 490.5 L254.4 490.5 L255.4 490.5 L256.2 490.5 L256.2 563.0 Z" fill="#6ED0E0" fill-opacity="0.04"/>
<path d="M258.9 563.0 L258.9 491.0 L259.4 491.6 L260.4 494.0 L261.4 494.4 L262.4 494.4 L263.4 493.3 L264.4 490.7 L265.4 493.3 L266.4 495.0 L267.4 495.0 L268.4 493.9 L269.4 491.4 L270.4 489.9 L271.4 489.9 L272.4 489.9 L273.4 489.9 L274.4 489.9 L275.4 489.9 L276.4 489.9 L277.4 489.9 L278.4 489.9 L279.4 489.9 L280.4 489.9 L281.4 489.9 L282.4 489.9 L283.4 489.9 L284.4 489.9 L285.4 489.9 L286.4 489.9 L287.4 489.9 L288.4 489.9 L289.4 489.9 L290.4 489.9 L291.4 489.9 L292.4 489.9 L293.4 489.9 L294.4 489.9 L295.4 489.9 L296.4 489.9 L297.4 489.9 L298.4 489.9 L299.4 489.9 L300.4 489.9 L301.4 489.9 L302.4 489.9 L303.4 489.9 L304.4 489.9 L305.4 489.9 L306.4 489.9 L307.4 489.9 L308.4 489.9 L309.4 489.9 L310.4 489.9 L311.4 489.9 L312.4 489.9 L313.4 489.9 L314.4 489.9 L315.4 489.9 L316.4 489.9 L317.4 489.9 L318.4 489.9 L319.4 489.9 L320.4 489.9 L321.4 489.9 L322.4 489.9 L323.4 489.9 L324.4 489.9 L325.4 489.9 L326.4 489.9 L327.4 489.9 L328.4 489.9 L329.4 489.9 L330.4 489.9 L331.4 489.9 L332.4 489.9 L333.4 489.9 L334.4 489.9 L335.4 489.9 L336.4 489.9 L337.4 489.9 L338.4 489.9 L339.4 489.9 L340.4 489.9 L341.4 489.9 L342.4 489.9 L343.4 489.9 L344.4 489.9 L345.4 489.9 L346.4 489.9 L347.4 489.9 L348.4 489.9 L349.4 489.9 L350.4 489.9 L351.4 489.9 L352.4 489.9 L353.4 489.9 L354.4 489.9 L355.4 489.9 L356.4 489.9 L357.4 489.9 L358.4 489.9 L359.4 489.9 L360.4 489.9 L361.4 489.9 L362.4 489.9 L363.4 489.9 L364.4 489.9 L365.4 489.9 L366.4 489.9 L367.4 489.9 L368.4 489.9 L369.4 489.9 L370.4 489.9 L371.4 489.9 L372.4 489.9 L373.4 489.9 L374.4 489.9 L375.4 489.9 L376.4 489.9 L377.4 489.9 L378.4 489.9 L379.4 489.9 L380.4 489.9 L381.4 489.9 L382.4 489.9 L383.4 489.9 L384.4 489.9 L385.4 489.9 L386.4 489.9 L387.4 489.9 L388.4 489.9 L389.4 489.9 L390.4 489.9 L391.3 489.9 L392.3 489.9 L393.3 489.9 L394.3 489.9 L395.3 489.9 L396.3 489.9 L397.3 489.9 L398.3 489.9 L399.3 489.9 L400.3 489.9 L401.3 489.9 L402.3 489.9 L403.3 489.9 L404.3 489.9 L405.3 489.9 L406.3 489.9 L407.3 489.9 L408.3 489.9 L409.3 489.9 L410.3 489.9 L411.3 489.9 L412.3 489.9 L413.3 489.9 L414.3 489.9 L415.3 489.9 L416.3 489.9 L417.3 489.9 L418.3 489.9 L419.3 489.9 L420.3 489.9 L421.3 489.9 L422.3 489.9 L423.3 489.9 L424.3 489.9 L425.3 489.9 L426.3 489.9 L427.3 489.9 L428.3 489.9 L429.3 489.9 L430.3 489.9 L431.3 489.9 L432.3 489.9 L433.3 489.9 L434.3 489.9 L435.3 489.9 L436.3 489.9 L437.3 489.9 L438.3 489.9 L439.3 489.9 L440.3 489.9 L441.3 489.9 L442.3 489.9 L443.3 489.9 L444.3 489.9 L445.3 489.9 L446.3 489.9 L447.3 489.9 L448.3 489.9 L449.3 489.9 L450.3 489.9 L451.3 489.9 L452.3 489.9 L453.3 489.9 L454.3 489.9 L455.3 489.9 L456.3 489.9 L457.3 489.9 L458.3 489.9 L459.3 489.9 L460.3 489.9 L461.3 489.9 L462.3 489.9 L463.3 489.9 L464.3 489.9 L465.3 489.9 L466.3 489.9 L467.3 489.9 L468.3 489.9 L469.3 489.9 L470.3 489.9 L471.3 489.9 L472.3 489.9 L473.3 489.9 L474.3 489.9 L475.3 489.9 L476.3 489.9 L477.3 489.9 L478.3 489.9 L479.3 489.9 L480.3 489.9 L481.3 489.9 L482.3 489.9 L483.3 489.9 L484.3 489.9 L485.3 489.9 L486.3 489.9 L487.3 489.9 L488.3 489.9 L489.3 489.9 L490.3 489.9 L491.3 489.9 L492.3 489.9 L493.3 489.9 L494.3 489.9 L495.3 489.9 L496.3 489.9 L497.3 489.9 L498.3 489.9 L499.3 489.9 L500.3 489.9 L501.3 489.9 L502.3 489.9 L503.3 489.9 L504.3 489.9 L505.3 489.9 L506.3 489.9 L507.3 489.9 L508.3 489.9 L509.3 489.9 L510.3 489.9 L511.3 489.9 L512.3 489.9 L513.3 489.9 L514.3 489.9 L515.3 489.9 L516.3 490.7 L517.3 493.5 L518.3 495.5 L519.3 495.5 L520.3 495.5 L521.3 495.5 L522.3 495.5 L523.3 495.5 L524.3 494.8 L525.3 492.0 L526.3 489.9 L527.3 489.9 L528.3 489.9 L529.3 489.9 L530.3 489.9 L531.3 489.9 L532.3 489.9 L533.3 490.7 L534.3 493.5 L535.3 495.5 L536.3 495.5 L537.3 495.5 L538.3 495.5 L539.3 494.8 L540.3 492.0 L541.3 489.9 L542.3 489.9 L543.3 489.9 L544.3 489.9 L545.3 489.9 L546.3 489.9 L547.3 489.9 L548.3 489.9 L549.3 489.9 L550.2 489.9 L551.2 489.9 L552.2 489.9 L553.2 489.9 L554.2 489.9 L555.2 489.9 L556.2 489.9 L557.2 489.9 L558.2 489.9 L559.2 489.9 L560.2 489.9 L561.2 489.9 L562.2 489.9 L563.2 489.9 L564.2 489.9 L565.2 489.9 L566.2 489.9 L567.2 489.9 L568.2 489.9 L569.2 489.9 L570.2 489.9 L571.2 489.9 L572.2 489.9 L573.2 489.9 L574.2 489.9 L575.2 489.9 L576.2 489.9 L577.2 489.9 L578.2 489.9 L579.2 489.9 L580.2 489.9 L581.2 489.9 L582.2 489.9 L583.2 489.9 L584.2 489.9 L585.2 489.9 L586.2 489.9 L587.2 489.9 L588.2 489.9 L589.2 489.9 L590.2 489.9 L591.2 489.9 L592.2 489.9 L593.2 489.9 L594.2 489.9 L595.2 489.9 L596.2 489.9 L597.2 489.9 L598.2 489.9 L599.2 489.9 L600.2 489.9 L601.2 489.9 L602.2 489.9 L603.2 489.9 L604.2 489.9 L605.2 489.9 L606.2 489.9 L607.2 489.9 L608.2 489.9 L609.2 489.9 L610.2 489.9 L611.2 489.9 L612.2 489.9 L613.2 489.9 L614.2 489.9 L615.2 489.9 L616.2 489.9 L617.2 489.9 L618.2 489.9 L619.2 489.9 L620.2 489.9 L621.2 489.9 L622.2 489.9 L623.2 489.9 L624.2 489.9 L625.2 489.9 L626.2 489.9 L627.2 489.9 L628.2 489.9 L629.2 489.9 L630.2 489.9 L631.2 489.9 L632.2 489.9 L633.2 489.9 L634.2 489.9 L635.2 489.9 L636.2 489.9 L637.2 489.9 L638.2 489.9 L639.2 489.9 L640.2 489.9 L641.2 489.9 L642.2 489.9 L643.2 489.9 L644.2 489.9 L645.2 489.9 L646.2 489.9 L647.2 489.9 L648.2 489.9 L649.2 489.9 L650.2 489.9 L651.2 489.9 L652.2 489.9 L653.2 489.9 L654.2 489.9 L655.2 489.9 L656.2 489.9 L657.2 489.9 L658.2 489.9 L659.2 489.9 L660.2 489.9 L661.2 489.9 L662.2 489.9 L663.2 489.9 L664.2 489.9 L665.2 489.9 L666.2 489.9 L667.2 489.9 L668.2 489.9 L669.2 490.4 L670.2 493.2 L671.2 495.5 L672.2 495.5 L673.2 495.5 L674.2 495.5 L675.2 495.5 L676.2 495.5 L677.2 495.5 L678.2 494.6 L679.2 490.9 L680.2 495.5 L681.2 495.5 L682.2 495.5 L683.2 495.5 L684.2 495.5 L685.2 495.5 L686.2 495.5 L687.2 495.5 L688.2 495.5 L689.2 495.5 L690.2 495.5 L691.2 495.5 L692.2 495.5 L693.2 495.5 L694.2 495.5 L695.2 495.5 L696.2 495.5 L697.2 495.5 L698.2 495.5 L699.2 494.6 L700.2 490.8 L701.2 495.5 L702.2 495.5 L703.2 495.5 L704.2 495.5 L705.2 495.5 L706.2 495.5 L707.2 495.5 L708.2 495.5 L709.2 495.5 L710.1 495.5 L711.1 495.5 L712.1 495.5 L713.1 495.5 L714.1 495.5 L715.1 495.5 L716.1 494.7 L717.1 490.8 L718.1 495.5 L719.1 495.5 L720.1 495.5 L721.1 494.7 L722.1 490.7 L723.1 495.5 L724.1 495.5 L725.1 495.5 L726.1 495.5 L727.1 495.5 L728.1 495.5 L729.1 495.5 L730.1 495.5 L731.1 495.5 L732.1 495.5 L733.1 495.5 L734.1 495.5 L735.1 495.5 L736.1 495.5 L737.1 495.5 L738.1 495.5 L739.1 495.5 L740.1 495.5 L741.1 495.5 L742.1 495.5 L743.1 495.5 L744.1 495.5 L745.1 495.5 L746.1 495.5 L747.1 495.5 L748.1 495.5 L749.1 494.8 L750.1 490.6 L751.1 495.5 L752.1 495.5 L753.1 495.5 L754.1 495.5 L755.1 495.5 L756.1 495.5 L757.1 495.5 L758.1 495.5 L759.1 495.5 L760.1 495.5 L761.1 495.5 L762.1 495.5 L763.1 495.5 L764.1 495.5 L765.1 495.5 L766.1 495.5 L767.1 495.5 L768.1 495.5 L769.1 495.5 L770.1 495.5 L771.1 495.5 L772.1 495.5 L773.1 495.5 L774.1 495.5 L775.1 495.5 L776.1 495.5 L777.1 495.5 L778.1 495.5 L779.1 495.5 L780.1 495.5 L781.1 495.5 L782.1 495.5 L783.1 495.5 L784.1 495.5 L785.1 495.5 L786.1 495.5 L787.1 495.5 L788.1 495.5 L789.1 495.5 L790.1 495.5 L791.1 495.5 L792.1 495.5 L793.1 495.5 L794.1 495.5 L795.1 495.5 L796.1 495.5 L797.1 495.5 L798.1 495.5 L799.1 495.5 L800.1 495.5 L801.1 495.5 L802.1 495.5 L803.1 495.5 L804.1 495.5 L805.1 495.5 L806.1 495.5 L807.1 495.5 L808.1 495.5 L809.1 495.5 L810.1 495.5 L811.1 495.5 L812.1 495.5 L813.1 495.5 L814.1 495.5 L815.1 495.5 L816.1 495.5 L817.1 495.5 L818.1 495.5 L819.1 495.5 L820.1 495.5 L821.1 495.5 L822.1 495.5 L823.1 495.5 L824.1 495.5 L825.1 495.5 L826.1 495.5 L827.1 495.5 L828.1 495.5 L829.1 495.5 L830.1 495.4 L831.1 493.5 L832.1 491.7 L833.1 489.9 L834.1 489.9 L835.1 489.9 L836.1 489.9 L837.1 489.9 L838.1 489.9 L839.1 489.9 L840.1 489.9 L841.1 489.9 L842.1 489.9 L843.1 489.9 L844.1 489.9 L845.1 489.9 L846.1 489.9 L847.1 489.9 L848.1 489.9 L849.1 489.9 L850.1 489.9 L851.1 489.9 L852.1 489.9 L853.1 489.9 L854.1 489.9 L855.1 489.9 L856.1 489.9 L857.1 489.9 L858.1 489.9 L859.1 489.9 L860.1 489.9 L861.1 489.9 L862.1 489.9 L863.1 489.9 L864.1 489.9 L865.1 489.9 L866.1 489.9 L867.1 489.9 L868.1 489.9 L869.1 489.9 L870.0 489.9 L871.0 489.9 L872.0 489.9 L873.0 489.9 L874.0 489.9 L875.0 489.9 L876.0 489.9 L877.0 489.9 L878.0 489.9 L879.0 489.9 L880.0 489.9 L881.0 489.9 L882.0 489.9 L883.0 489.9 L884.0 489.9 L885.0 489.9 L886.0 489.9 L887.0 489.9 L888.0 489.9 L889.0 489.9 L890.0 489.9 L891.0 489.9 L892.0 489.9 L893.0 489.9 L894.0 489.9 L895.0 489.9 L896.0 489.9 L897.0 489.9 L898.0 489.9 L899.0 489.9 L900.0 489.9 L901.0 489.9 L902.0 489.9 L903.0 489.9 L904.0 489.9 L905.0 489.9 L906.0 489.9 L907.0 489.9 L908.0 489.9 L909.0 489.9 L910.0 489.9 L911.0 489.9 L912.0 489.9 L913.0 489.9 L914.0 489.9 L915.0 489.9 L916.0 489.9 L917.0 489.9 L918.0 489.9 L919.0 489.9 L920.0 489.9 L921.0 489.9 L922.0 489.9 L923.0 489.9 L924.0 489.9 L925.0 489.9 L926.0 489.9 L927.0 489.9 L928.0 489.9 L929.0 489.9 L930.0 489.9 L931.0 489.9 L932.0 489.9 L933.0 489.9 L934.0 489.9 L935.0 489.9 L936.0 489.9 L937.0 489.9 L938.0 489.9 L939.0 489.9 L940.0 489.9 L941.0 489.9 L942.0 489.9 L943.0 489.9 L944.0 489.9 L945.0 489.9 L946.0 489.9 L947.0 489.9 L948.0 489.9 L949.0 489.9 L950.0 489.9 L950.0 563.0 Z" fill="#6ED0E0" fill-opacity="0.04"/>
<path d="M150.5 507.2 L151.5 512.8 L152.5 517.8 L153.5 517.8 L154.5 517.8 L155.5 517.8 L156.5 517.8 L157.5 515.9 L158.5 513.4 L159.5 511.0 L160.5 509.6 L161.5 508.8 L162.5 508.1 L163.5 507.3 L164.5 502.3 L165.5 496.7 L166.5 495.5 L167.5 495.5 L168.5 495.5 L169.5 495.2 L170.5 491.7 L171.5 489.9 L172.5 489.9 L173.5 489.9 L174.5 489.9 L175.5 489.9 L176.5 489.9 L177.5 489.9 L178.5 489.9 L179.5 489.9 L180.5 489.9 L181.5 489.9 L182.5 489.9 L183.5 489.9 L184.5 490.4 L185.5 493.1 L186.5 495.5 L187.5 495.5 L188.5 495.5 L189.5 495.5 L190.5 495.5 L191.5 495.5 L192.5 495.5 L193.5 495.5 L194.5 495.5 L195.5 495.5 L196.5 495.5 L197.5 495.5 L198.5 495.5 L199.5 495.5 L200.5 495.5 L201.5 495.5 L202.5 495.5 L203.5 495.5 L204.5 495.5 L205.5 495.5 L206.5 495.5 L207.5 495.5 L208.5 495.5 L209.5 495.5 L210.5 495.5 L211.5 495.5 L212.5 495.5 L213.5 495.5 L214.5 495.5 L215.5 495.5 L216.5 495.5 L217.5 495.5 L218.5 495.5 L219.5 495.5 L220.5 495.5 L221.5 495.5 L222.5 495.5 L223.5 495.5 L224.5 495.5 L225.5 495.5 L226.5 495.5 L227.5 495.5 L228.5 495.5 L229.5 495.5 L230.4 495.5 L231.4 495.5 L232.4 495.5 L233.4 495.5 L234.4 495.5 L235.4 495.5 L236.4 495.5 L237.4 495.5 L238.4 495.5 L239.4 495.5 L240.4 495.5 L241.4 495.5 L242.4 495.5 L243.4 495.5 L244.4 493.7 L245.4 491.4 L246.4 492.5 L247.4 495.4 L248.4 493.5 L249.4 491.6 L250.4 490.5 L251.4 490.5 L252.4 490.5 L253.4 490.5 L254.4 490.5 L255.4 490.5 L256.2 490.5" fill="none" stroke="#78c9d8" stroke-width="2.2" stroke-linejoin="round"/>
<path d="M258.9 491.0 L259.4 491.6 L260.4 494.0 L261.4 494.4 L262.4 494.4 L263.4 493.3 L264.4 490.7 L265.4 493.3 L266.4 495.0 L267.4 495.0 L268.4 493.9 L269.4 491.4 L270.4 489.9 L271.4 489.9 L272.4 489.9 L273.4 489.9 L274.4 489.9 L275.4 489.9 L276.4 489.9 L277.4 489.9 L278.4 489.9 L279.4 489.9 L280.4 489.9 L281.4 489.9 L282.4 489.9 L283.4 489.9 L284.4 489.9 L285.4 489.9 L286.4 489.9 L287.4 489.9 L288.4 489.9 L289.4 489.9 L290.4 489.9 L291.4 489.9 L292.4 489.9 L293.4 489.9 L294.4 489.9 L295.4 489.9 L296.4 489.9 L297.4 489.9 L298.4 489.9 L299.4 489.9 L300.4 489.9 L301.4 489.9 L302.4 489.9 L303.4 489.9 L304.4 489.9 L305.4 489.9 L306.4 489.9 L307.4 489.9 L308.4 489.9 L309.4 489.9 L310.4 489.9 L311.4 489.9 L312.4 489.9 L313.4 489.9 L314.4 489.9 L315.4 489.9 L316.4 489.9 L317.4 489.9 L318.4 489.9 L319.4 489.9 L320.4 489.9 L321.4 489.9 L322.4 489.9 L323.4 489.9 L324.4 489.9 L325.4 489.9 L326.4 489.9 L327.4 489.9 L328.4 489.9 L329.4 489.9 L330.4 489.9 L331.4 489.9 L332.4 489.9 L333.4 489.9 L334.4 489.9 L335.4 489.9 L336.4 489.9 L337.4 489.9 L338.4 489.9 L339.4 489.9 L340.4 489.9 L341.4 489.9 L342.4 489.9 L343.4 489.9 L344.4 489.9 L345.4 489.9 L346.4 489.9 L347.4 489.9 L348.4 489.9 L349.4 489.9 L350.4 489.9 L351.4 489.9 L352.4 489.9 L353.4 489.9 L354.4 489.9 L355.4 489.9 L356.4 489.9 L357.4 489.9 L358.4 489.9 L359.4 489.9 L360.4 489.9 L361.4 489.9 L362.4 489.9 L363.4 489.9 L364.4 489.9 L365.4 489.9 L366.4 489.9 L367.4 489.9 L368.4 489.9 L369.4 489.9 L370.4 489.9 L371.4 489.9 L372.4 489.9 L373.4 489.9 L374.4 489.9 L375.4 489.9 L376.4 489.9 L377.4 489.9 L378.4 489.9 L379.4 489.9 L380.4 489.9 L381.4 489.9 L382.4 489.9 L383.4 489.9 L384.4 489.9 L385.4 489.9 L386.4 489.9 L387.4 489.9 L388.4 489.9 L389.4 489.9 L390.4 489.9 L391.3 489.9 L392.3 489.9 L393.3 489.9 L394.3 489.9 L395.3 489.9 L396.3 489.9 L397.3 489.9 L398.3 489.9 L399.3 489.9 L400.3 489.9 L401.3 489.9 L402.3 489.9 L403.3 489.9 L404.3 489.9 L405.3 489.9 L406.3 489.9 L407.3 489.9 L408.3 489.9 L409.3 489.9 L410.3 489.9 L411.3 489.9 L412.3 489.9 L413.3 489.9 L414.3 489.9 L415.3 489.9 L416.3 489.9 L417.3 489.9 L418.3 489.9 L419.3 489.9 L420.3 489.9 L421.3 489.9 L422.3 489.9 L423.3 489.9 L424.3 489.9 L425.3 489.9 L426.3 489.9 L427.3 489.9 L428.3 489.9 L429.3 489.9 L430.3 489.9 L431.3 489.9 L432.3 489.9 L433.3 489.9 L434.3 489.9 L435.3 489.9 L436.3 489.9 L437.3 489.9 L438.3 489.9 L439.3 489.9 L440.3 489.9 L441.3 489.9 L442.3 489.9 L443.3 489.9 L444.3 489.9 L445.3 489.9 L446.3 489.9 L447.3 489.9 L448.3 489.9 L449.3 489.9 L450.3 489.9 L451.3 489.9 L452.3 489.9 L453.3 489.9 L454.3 489.9 L455.3 489.9 L456.3 489.9 L457.3 489.9 L458.3 489.9 L459.3 489.9 L460.3 489.9 L461.3 489.9 L462.3 489.9 L463.3 489.9 L464.3 489.9 L465.3 489.9 L466.3 489.9 L467.3 489.9 L468.3 489.9 L469.3 489.9 L470.3 489.9 L471.3 489.9 L472.3 489.9 L473.3 489.9 L474.3 489.9 L475.3 489.9 L476.3 489.9 L477.3 489.9 L478.3 489.9 L479.3 489.9 L480.3 489.9 L481.3 489.9 L482.3 489.9 L483.3 489.9 L484.3 489.9 L485.3 489.9 L486.3 489.9 L487.3 489.9 L488.3 489.9 L489.3 489.9 L490.3 489.9 L491.3 489.9 L492.3 489.9 L493.3 489.9 L494.3 489.9 L495.3 489.9 L496.3 489.9 L497.3 489.9 L498.3 489.9 L499.3 489.9 L500.3 489.9 L501.3 489.9 L502.3 489.9 L503.3 489.9 L504.3 489.9 L505.3 489.9 L506.3 489.9 L507.3 489.9 L508.3 489.9 L509.3 489.9 L510.3 489.9 L511.3 489.9 L512.3 489.9 L513.3 489.9 L514.3 489.9 L515.3 489.9 L516.3 490.7 L517.3 493.5 L518.3 495.5 L519.3 495.5 L520.3 495.5 L521.3 495.5 L522.3 495.5 L523.3 495.5 L524.3 494.8 L525.3 492.0 L526.3 489.9 L527.3 489.9 L528.3 489.9 L529.3 489.9 L530.3 489.9 L531.3 489.9 L532.3 489.9 L533.3 490.7 L534.3 493.5 L535.3 495.5 L536.3 495.5 L537.3 495.5 L538.3 495.5 L539.3 494.8 L540.3 492.0 L541.3 489.9 L542.3 489.9 L543.3 489.9 L544.3 489.9 L545.3 489.9 L546.3 489.9 L547.3 489.9 L548.3 489.9 L549.3 489.9 L550.2 489.9 L551.2 489.9 L552.2 489.9 L553.2 489.9 L554.2 489.9 L555.2 489.9 L556.2 489.9 L557.2 489.9 L558.2 489.9 L559.2 489.9 L560.2 489.9 L561.2 489.9 L562.2 489.9 L563.2 489.9 L564.2 489.9 L565.2 489.9 L566.2 489.9 L567.2 489.9 L568.2 489.9 L569.2 489.9 L570.2 489.9 L571.2 489.9 L572.2 489.9 L573.2 489.9 L574.2 489.9 L575.2 489.9 L576.2 489.9 L577.2 489.9 L578.2 489.9 L579.2 489.9 L580.2 489.9 L581.2 489.9 L582.2 489.9 L583.2 489.9 L584.2 489.9 L585.2 489.9 L586.2 489.9 L587.2 489.9 L588.2 489.9 L589.2 489.9 L590.2 489.9 L591.2 489.9 L592.2 489.9 L593.2 489.9 L594.2 489.9 L595.2 489.9 L596.2 489.9 L597.2 489.9 L598.2 489.9 L599.2 489.9 L600.2 489.9 L601.2 489.9 L602.2 489.9 L603.2 489.9 L604.2 489.9 L605.2 489.9 L606.2 489.9 L607.2 489.9 L608.2 489.9 L609.2 489.9 L610.2 489.9 L611.2 489.9 L612.2 489.9 L613.2 489.9 L614.2 489.9 L615.2 489.9 L616.2 489.9 L617.2 489.9 L618.2 489.9 L619.2 489.9 L620.2 489.9 L621.2 489.9 L622.2 489.9 L623.2 489.9 L624.2 489.9 L625.2 489.9 L626.2 489.9 L627.2 489.9 L628.2 489.9 L629.2 489.9 L630.2 489.9 L631.2 489.9 L632.2 489.9 L633.2 489.9 L634.2 489.9 L635.2 489.9 L636.2 489.9 L637.2 489.9 L638.2 489.9 L639.2 489.9 L640.2 489.9 L641.2 489.9 L642.2 489.9 L643.2 489.9 L644.2 489.9 L645.2 489.9 L646.2 489.9 L647.2 489.9 L648.2 489.9 L649.2 489.9 L650.2 489.9 L651.2 489.9 L652.2 489.9 L653.2 489.9 L654.2 489.9 L655.2 489.9 L656.2 489.9 L657.2 489.9 L658.2 489.9 L659.2 489.9 L660.2 489.9 L661.2 489.9 L662.2 489.9 L663.2 489.9 L664.2 489.9 L665.2 489.9 L666.2 489.9 L667.2 489.9 L668.2 489.9 L669.2 490.4 L670.2 493.2 L671.2 495.5 L672.2 495.5 L673.2 495.5 L674.2 495.5 L675.2 495.5 L676.2 495.5 L677.2 495.5 L678.2 494.6 L679.2 490.9 L680.2 495.5 L681.2 495.5 L682.2 495.5 L683.2 495.5 L684.2 495.5 L685.2 495.5 L686.2 495.5 L687.2 495.5 L688.2 495.5 L689.2 495.5 L690.2 495.5 L691.2 495.5 L692.2 495.5 L693.2 495.5 L694.2 495.5 L695.2 495.5 L696.2 495.5 L697.2 495.5 L698.2 495.5 L699.2 494.6 L700.2 490.8 L701.2 495.5 L702.2 495.5 L703.2 495.5 L704.2 495.5 L705.2 495.5 L706.2 495.5 L707.2 495.5 L708.2 495.5 L709.2 495.5 L710.1 495.5 L711.1 495.5 L712.1 495.5 L713.1 495.5 L714.1 495.5 L715.1 495.5 L716.1 494.7 L717.1 490.8 L718.1 495.5 L719.1 495.5 L720.1 495.5 L721.1 494.7 L722.1 490.7 L723.1 495.5 L724.1 495.5 L725.1 495.5 L726.1 495.5 L727.1 495.5 L728.1 495.5 L729.1 495.5 L730.1 495.5 L731.1 495.5 L732.1 495.5 L733.1 495.5 L734.1 495.5 L735.1 495.5 L736.1 495.5 L737.1 495.5 L738.1 495.5 L739.1 495.5 L740.1 495.5 L741.1 495.5 L742.1 495.5 L743.1 495.5 L744.1 495.5 L745.1 495.5 L746.1 495.5 L747.1 495.5 L748.1 495.5 L749.1 494.8 L750.1 490.6 L751.1 495.5 L752.1 495.5 L753.1 495.5 L754.1 495.5 L755.1 495.5 L756.1 495.5 L757.1 495.5 L758.1 495.5 L759.1 495.5 L760.1 495.5 L761.1 495.5 L762.1 495.5 L763.1 495.5 L764.1 495.5 L765.1 495.5 L766.1 495.5 L767.1 495.5 L768.1 495.5 L769.1 495.5 L770.1 495.5 L771.1 495.5 L772.1 495.5 L773.1 495.5 L774.1 495.5 L775.1 495.5 L776.1 495.5 L777.1 495.5 L778.1 495.5 L779.1 495.5 L780.1 495.5 L781.1 495.5 L782.1 495.5 L783.1 495.5 L784.1 495.5 L785.1 495.5 L786.1 495.5 L787.1 495.5 L788.1 495.5 L789.1 495.5 L790.1 495.5 L791.1 495.5 L792.1 495.5 L793.1 495.5 L794.1 495.5 L795.1 495.5 L796.1 495.5 L797.1 495.5 L798.1 495.5 L799.1 495.5 L800.1 495.5 L801.1 495.5 L802.1 495.5 L803.1 495.5 L804.1 495.5 L805.1 495.5 L806.1 495.5 L807.1 495.5 L808.1 495.5 L809.1 495.5 L810.1 495.5 L811.1 495.5 L812.1 495.5 L813.1 495.5 L814.1 495.5 L815.1 495.5 L816.1 495.5 L817.1 495.5 L818.1 495.5 L819.1 495.5 L820.1 495.5 L821.1 495.5 L822.1 495.5 L823.1 495.5 L824.1 495.5 L825.1 495.5 L826.1 495.5 L827.1 495.5 L828.1 495.5 L829.1 495.5 L830.1 495.4 L831.1 493.5 L832.1 491.7 L833.1 489.9 L834.1 489.9 L835.1 489.9 L836.1 489.9 L837.1 489.9 L838.1 489.9 L839.1 489.9 L840.1 489.9 L841.1 489.9 L842.1 489.9 L843.1 489.9 L844.1 489.9 L845.1 489.9 L846.1 489.9 L847.1 489.9 L848.1 489.9 L849.1 489.9 L850.1 489.9 L851.1 489.9 L852.1 489.9 L853.1 489.9 L854.1 489.9 L855.1 489.9 L856.1 489.9 L857.1 489.9 L858.1 489.9 L859.1 489.9 L860.1 489.9 L861.1 489.9 L862.1 489.9 L863.1 489.9 L864.1 489.9 L865.1 489.9 L866.1 489.9 L867.1 489.9 L868.1 489.9 L869.1 489.9 L870.0 489.9 L871.0 489.9 L872.0 489.9 L873.0 489.9 L874.0 489.9 L875.0 489.9 L876.0 489.9 L877.0 489.9 L878.0 489.9 L879.0 489.9 L880.0 489.9 L881.0 489.9 L882.0 489.9 L883.0 489.9 L884.0 489.9 L885.0 489.9 L886.0 489.9 L887.0 489.9 L888.0 489.9 L889.0 489.9 L890.0 489.9 L891.0 489.9 L892.0 489.9 L893.0 489.9 L894.0 489.9 L895.0 489.9 L896.0 489.9 L897.0 489.9 L898.0 489.9 L899.0 489.9 L900.0 489.9 L901.0 489.9 L902.0 489.9 L903.0 489.9 L904.0 489.9 L905.0 489.9 L906.0 489.9 L907.0 489.9 L908.0 489.9 L909.0 489.9 L910.0 489.9 L911.0 489.9 L912.0 489.9 L913.0 489.9 L914.0 489.9 L915.0 489.9 L916.0 489.9 L917.0 489.9 L918.0 489.9 L919.0 489.9 L920.0 489.9 L921.0 489.9 L922.0 489.9 L923.0 489.9 L924.0 489.9 L925.0 489.9 L926.0 489.9 L927.0 489.9 L928.0 489.9 L929.0 489.9 L930.0 489.9 L931.0 489.9 L932.0 489.9 L933.0 489.9 L934.0 489.9 L935.0 489.9 L936.0 489.9 L937.0 489.9 L938.0 489.9 L939.0 489.9 L940.0 489.9 L941.0 489.9 L942.0 489.9 L943.0 489.9 L944.0 489.9 L945.0 489.9 L946.0 489.9 L947.0 489.9 L948.0 489.9 L949.0 489.9 L950.0 489.9" fill="none" stroke="#78c9d8" stroke-width="2.2" stroke-linejoin="round"/>
<path d="M150.5 423.6 L154.3 440.3 L158.1 423.6 L161.9 434.7 L165.7 440.3 L169.5 445.9 L173.3 440.3 L177.1 445.9 L180.9 440.3 L184.7 440.3 L188.5 451.5 L192.3 451.5 L196.1 440.3 L199.9 451.5 L203.7 440.3 L207.5 440.3 L211.3 445.9 L215.1 434.7 L218.9 423.6 L222.7 418.0 L226.5 423.6 L230.3 423.6 L233.5 423.6 L236.0 384.5 L238.5 423.6 L241.7 412.4 L245.0 418.0 L248.0 395.7 L251.0 423.6 L253.1 429.2 L256.2 424.6" fill="none" stroke="#EF843C" stroke-width="2.5" stroke-linejoin="round" stroke-linecap="butt"/>
<path d="M258.9 420.6 L260.7 418.0 L264.5 423.6 L268.3 429.2 L272.0 423.6 L275.0 423.6 L278.0 429.2 L279.7 429.2 L283.5 434.7 L287.3 423.6 L291.1 434.7 L294.9 423.6 L298.7 434.7 L302.5 434.7 L306.3 423.6 L310.1 434.7 L313.9 434.7 L317.7 423.6 L321.5 434.7 L325.3 434.7 L329.1 429.2 L332.9 434.7 L336.7 429.2 L340.5 434.7 L344.3 434.7 L348.1 434.7 L351.9 429.2 L355.7 423.6 L359.5 434.7 L363.3 434.7 L367.1 423.6 L370.9 423.6 L374.7 429.2 L378.5 418.0 L382.3 429.2 L386.1 423.6 L389.9 423.6 L393.7 434.7 L397.5 423.6 L401.3 423.6 L405.1 423.6 L408.9 423.6 L412.7 434.7 L416.5 423.6 L420.3 434.7 L424.1 434.7 L427.9 423.6 L431.7 423.6 L435.5 423.6 L439.3 429.2 L443.1 423.6 L446.9 423.6 L450.7 434.7 L454.5 423.6 L458.3 434.7 L462.1 423.6 L465.9 423.6 L469.7 423.6 L473.5 423.6 L477.3 434.7 L481.1 434.7 L484.9 423.6 L488.7 423.6 L492.5 423.6 L496.3 423.6 L500.1 434.7 L503.9 434.7 L507.7 423.6 L511.5 412.4 L515.3 390.1 L519.1 401.3 L522.9 395.7 L526.7 406.8 L530.5 412.4 L534.3 418.0 L538.1 412.4 L541.9 418.0 L545.7 412.4 L549.5 412.4 L553.3 423.6 L557.1 412.4 L560.9 423.6 L564.7 423.6 L568.5 418.0 L572.3 418.0 L576.1 412.4 L579.9 406.8 L583.7 406.8 L587.5 418.0 L591.3 412.4 L595.1 418.0 L598.9 418.0 L602.7 406.8 L606.5 406.8 L610.3 412.4 L614.1 412.4 L617.9 418.0 L621.7 406.8 L625.5 418.0 L629.3 412.4 L633.1 418.0 L636.9 423.6 L640.7 429.2 L644.5 429.2 L648.3 429.2 L652.1 429.2 L655.9 423.6 L659.7 429.2 L663.5 429.2 L667.3 423.6 L671.1 423.6 L674.9 423.6 L678.7 434.7 L682.5 434.7 L686.3 434.7 L690.1 429.2 L693.9 423.6 L697.7 434.7 L701.5 440.3 L705.3 434.7 L709.1 434.7 L712.9 440.3 L716.7 434.7 L720.5 423.6 L724.3 423.6 L728.1 423.6 L731.9 440.3 L735.7 434.7 L739.5 429.2 L743.3 423.6 L747.1 434.7 L750.9 434.7 L754.7 429.2 L758.5 418.0 L762.3 429.2 L766.1 429.2 L769.9 429.2 L773.7 429.2 L777.5 423.6 L781.3 418.0 L785.1 429.2 L788.9 429.2 L792.7 429.2 L796.5 418.0 L800.3 418.0 L804.1 429.2 L807.9 429.2 L811.7 429.2 L815.5 429.2 L819.3 423.6 L823.1 423.6 L826.9 412.4 L830.7 412.4 L834.5 412.4 L838.3 406.8 L842.1 406.8 L845.9 418.0 L849.7 406.8 L853.5 406.8 L857.3 418.0 L861.1 406.8 L864.9 406.8 L868.7 412.4 L872.5 418.0 L876.3 418.0 L880.1 412.4 L883.9 423.6 L887.7 418.0 L891.5 423.6 L895.3 423.6 L899.1 412.4 L902.9 412.4 L906.7 418.0 L910.5 418.0 L914.3 418.0 L918.1 412.4 L921.9 418.0 L925.7 412.4 L929.5 401.3 L933.3 412.4 L937.1 412.4 L940.9 401.3 L944.7 412.4 L948.5 412.4 L950.0 412.4" fill="none" stroke="#EF843C" stroke-width="2.5" stroke-linejoin="round" stroke-linecap="butt"/>
<path d="M150.5 412.4 L154.3 434.7 L158.1 429.2 L161.9 429.2 L165.7 440.3 L169.5 445.9 L173.3 462.6 L177.1 445.9 L180.9 468.2 L184.7 451.5 L188.5 451.5 L192.3 457.0 L196.1 468.2 L199.9 462.6 L203.7 468.2 L207.5 445.9 L211.3 457.0 L215.1 451.5 L218.9 445.9 L222.7 429.2 L226.5 423.6 L230.3 418.0 L234.1 423.6 L237.9 412.4 L241.7 412.4 L245.5 418.0 L249.3 412.4 L253.1 429.2 L256.2 433.7" fill="none" stroke="#EAB839" stroke-width="2.5" stroke-linejoin="round" stroke-linecap="butt"/>
<path d="M258.9 424.1 L259.0 423.6 L262.0 367.8 L265.0 423.6 L268.3 423.6 L272.1 429.2 L275.9 434.7 L279.7 429.2 L283.5 434.7 L287.3 429.2 L291.1 429.2 L294.9 434.7 L298.7 429.2 L302.5 429.2 L306.3 429.2 L310.1 434.7 L313.9 434.7 L317.7 434.7 L321.5 429.2 L325.3 429.2 L329.1 434.7 L332.9 429.2 L336.7 429.2 L340.5 434.7 L344.3 429.2 L348.1 429.2 L351.9 434.7 L355.7 434.7 L359.5 429.2 L363.3 429.2 L367.1 434.7 L370.9 423.6 L374.7 423.6 L378.5 429.2 L382.3 429.2 L386.1 434.7 L389.9 423.6 L393.7 429.2 L397.5 423.6 L401.3 429.2 L405.1 423.6 L408.9 429.2 L412.7 429.2 L416.5 429.2 L420.3 429.2 L424.1 429.2 L427.9 434.7 L431.7 434.7 L435.5 434.7 L439.3 434.7 L443.1 434.7 L446.9 434.7 L450.7 434.7 L454.5 434.7 L458.3 429.2 L462.1 429.2 L465.9 434.7 L469.7 434.7 L473.5 429.2 L477.3 429.2 L481.1 429.2 L484.9 429.2 L488.7 434.7 L492.5 434.7 L496.3 434.7 L500.1 429.2 L503.9 429.2 L506.0 429.2 L512.0 395.7 L516.0 373.4 L520.0 367.8 L524.0 395.7 L528.0 412.4 L530.5 406.8 L534.3 406.8 L538.1 418.0 L541.9 418.0 L545.7 423.6 L549.5 423.6 L553.3 423.6 L557.1 423.6 L560.9 423.6 L564.7 423.6 L568.5 418.0 L572.3 418.0 L576.1 418.0 L579.9 423.6 L583.7 423.6 L587.5 418.0 L591.3 412.4 L595.1 412.4 L597.0 418.0 L600.0 423.6 L603.0 418.0 L606.5 412.4 L610.3 412.4 L614.1 412.4 L617.9 418.0 L621.7 418.0 L625.5 412.4 L629.3 418.0 L633.1 418.0 L636.9 423.6 L640.7 423.6 L644.5 429.2 L648.3 423.6 L652.1 429.2 L655.9 423.6 L659.7 434.7 L663.5 429.2 L667.3 429.2 L671.1 434.7 L674.9 434.7 L678.7 434.7 L682.5 434.7 L686.3 434.7 L690.1 434.7 L693.9 440.3 L697.7 434.7 L701.5 440.3 L705.3 440.3 L709.1 440.3 L712.9 440.3 L716.7 440.3 L720.5 434.7 L724.3 434.7 L728.1 434.7 L731.9 434.7 L735.7 440.3 L739.5 440.3 L743.3 440.3 L747.1 434.7 L750.9 429.2 L754.7 429.2 L758.5 423.6 L762.3 423.6 L766.1 429.2 L769.9 429.2 L773.7 429.2 L777.5 429.2 L781.3 423.6 L785.1 423.6 L788.9 429.2 L792.7 429.2 L796.5 429.2 L800.3 429.2 L804.1 429.2 L807.9 429.2 L811.7 429.2 L815.5 429.2 L819.3 429.2 L823.1 418.0 L826.9 418.0 L830.7 423.6 L834.5 412.4 L838.3 412.4 L842.1 412.4 L845.9 412.4 L849.7 412.4 L853.5 412.4 L857.3 412.4 L861.1 418.0 L864.9 412.4 L868.7 412.4 L872.5 412.4 L876.3 412.4 L880.1 418.0 L883.9 423.6 L887.7 423.6 L891.5 429.2 L895.3 423.6 L899.1 418.0 L902.9 423.6 L906.7 418.0 L910.5 412.4 L914.3 412.4 L918.1 412.4 L921.9 406.8 L925.7 406.8 L929.5 406.8 L933.3 412.4 L937.1 412.4 L940.9 412.4 L944.7 412.4 L948.5 412.4 L950.0 412.4" fill="none" stroke="#EAB839" stroke-width="2.5" stroke-linejoin="round" stroke-linecap="butt"/>
<path d="M150.5 434.7 L154.3 451.5 L158.1 418.0 L161.9 445.9 L165.7 457.0 L169.5 462.6 L173.3 445.9 L177.1 445.9 L180.9 468.2 L184.7 445.9 L188.5 445.9 L192.3 445.9 L196.1 445.9 L199.9 468.2 L203.7 468.2 L207.5 462.6 L208.8 457.0 L211.0 339.9 L213.2 451.5 L215.1 457.0 L218.9 457.0 L222.7 451.5 L226.5 445.9 L230.3 418.0 L234.1 418.0 L237.9 434.7 L241.7 412.4 L245.5 412.4 L249.3 434.7 L253.1 418.0 L256.2 431.6" fill="none" stroke="#7EB26D" stroke-width="2.5" stroke-linejoin="round" stroke-linecap="butt"/>
<path d="M258.9 424.1 L259.0 423.6 L262.0 328.8 L265.0 423.6 L268.3 418.0 L272.1 429.2 L275.9 434.7 L279.7 434.7 L283.5 434.7 L287.3 434.7 L291.1 423.6 L294.9 434.7 L298.7 423.6 L302.5 429.2 L306.3 434.7 L310.1 434.7 L313.9 429.2 L317.7 434.7 L321.5 429.2 L325.3 434.7 L329.1 429.2 L332.9 429.2 L336.7 440.3 L340.5 429.2 L344.3 440.3 L348.1 429.2 L351.9 440.3 L355.7 429.2 L359.5 440.3 L363.3 429.2 L367.1 423.6 L370.9 423.6 L374.7 423.6 L378.5 434.7 L382.3 434.7 L386.1 423.6 L389.9 429.2 L393.7 423.6 L397.5 434.7 L401.3 429.2 L405.1 434.7 L408.9 423.6 L412.7 429.2 L416.5 429.2 L420.3 429.2 L424.1 434.7 L427.9 434.7 L431.7 434.7 L435.5 434.7 L439.3 429.2 L443.1 434.7 L446.9 429.2 L450.7 423.6 L454.5 434.7 L458.3 423.6 L462.1 440.3 L465.9 434.7 L469.7 429.2 L473.5 429.2 L477.3 429.2 L481.1 440.3 L484.9 429.2 L488.7 423.6 L492.5 423.6 L496.3 429.2 L500.1 423.6 L503.9 429.2 L507.7 429.2 L511.5 412.4 L515.3 390.1 L519.1 401.3 L522.9 401.3 L526.7 406.8 L530.5 406.8 L532.5 412.4 L535.0 273.0 L537.5 418.0 L538.1 412.4 L541.9 412.4 L545.7 423.6 L549.5 412.4 L553.3 412.4 L557.1 423.6 L560.9 423.6 L564.7 418.0 L568.5 423.6 L572.3 412.4 L576.1 412.4 L579.9 412.4 L583.7 412.4 L587.5 412.4 L591.3 412.4 L595.1 418.0 L598.9 412.4 L602.7 423.6 L606.5 412.4 L610.3 412.4 L614.1 412.4 L617.9 406.8 L621.7 423.6 L625.5 423.6 L629.3 423.6 L633.1 423.6 L636.9 429.2 L640.7 423.6 L644.5 423.6 L648.3 423.6 L652.1 434.7 L655.9 423.6 L659.7 423.6 L663.5 434.7 L667.3 434.7 L671.1 440.3 L674.9 423.6 L678.7 429.2 L682.5 429.2 L686.3 429.2 L690.1 429.2 L693.9 440.3 L697.7 434.7 L701.5 440.3 L705.3 440.3 L709.1 440.3 L712.9 440.3 L716.7 440.3 L720.5 440.3 L724.3 440.3 L728.1 440.3 L731.9 440.3 L735.7 429.2 L739.5 429.2 L743.3 429.2 L747.1 429.2 L750.9 429.2 L754.7 434.7 L758.5 423.6 L762.3 434.7 L766.1 418.0 L769.9 429.2 L773.7 429.2 L777.5 423.6 L781.3 429.2 L785.1 423.6 L788.9 429.2 L792.7 423.6 L796.5 418.0 L800.3 423.6 L804.1 418.0 L807.9 423.6 L811.7 429.2 L815.5 429.2 L819.3 429.2 L822.0 423.6 L825.0 367.8 L828.0 418.0 L830.7 412.4 L834.5 406.8 L838.3 418.0 L842.1 412.4 L843.8 418.0 L846.0 300.9 L848.2 418.0 L849.7 418.0 L853.5 418.0 L857.3 412.4 L861.1 412.4 L864.9 412.4 L868.7 412.4 L872.5 418.0 L876.3 418.0 L880.1 418.0 L883.9 429.2 L887.7 429.2 L891.5 423.6 L895.3 418.0 L899.1 423.6 L902.9 423.6 L906.7 412.4 L910.5 412.4 L914.3 412.4 L918.1 406.8 L921.9 406.8 L925.7 406.8 L929.5 406.8 L933.3 406.8 L937.1 418.0 L940.9 406.8 L944.7 412.4 L948.5 418.0 L950.0 412.4" fill="none" stroke="#7EB26D" stroke-width="2.5" stroke-linejoin="round" stroke-linecap="butt"/>
<path d="M150.5 440.3 L154.0 457.0 L155.2 434.7 L158.0 284.1 L160.8 434.7 L161.0 418.0 L164.5 462.6 L168.0 434.7 L171.5 457.0 L175.0 462.6 L178.5 434.7 L182.0 462.6 L185.5 440.3 L189.0 468.2 L192.5 440.3 L196.0 462.6 L199.5 462.6 L203.0 462.6 L206.5 429.2 L210.0 440.3 L213.5 462.6 L217.0 434.7 L220.5 423.6 L224.0 440.3 L227.5 406.8 L231.0 434.7 L232.5 423.6 L235.0 384.5 L237.5 423.6 L238.0 418.0 L241.5 412.4 L245.0 429.2 L248.5 406.8 L252.0 434.7 L255.5 412.4 L256.2 415.8" fill="none" stroke="#E24D42" stroke-width="2.5" stroke-linejoin="round" stroke-linecap="butt"/>
<path d="M258.9 428.7 L259.0 429.2 L262.8 412.4 L266.6 406.8 L270.4 434.7 L274.2 440.3 L278.0 412.4 L281.8 418.0 L285.6 440.3 L289.4 440.3 L293.2 423.6 L297.0 440.3 L300.8 418.0 L304.6 440.3 L308.4 440.3 L312.2 412.4 L316.0 440.3 L319.8 423.6 L323.6 440.3 L327.4 440.3 L331.2 418.0 L335.0 423.6 L338.8 423.6 L342.6 445.9 L346.4 445.9 L350.2 418.0 L354.0 440.3 L357.8 440.3 L361.6 440.3 L365.4 440.3 L369.2 412.4 L372.5 429.2 L375.0 384.5 L377.5 429.2 L380.6 440.3 L384.4 418.0 L388.2 440.3 L392.0 412.4 L395.8 440.3 L399.6 423.6 L403.4 434.7 L407.2 434.7 L411.0 440.3 L412.5 429.2 L415.0 373.4 L417.5 429.2 L418.6 445.9 L422.4 440.3 L426.2 418.0 L430.0 440.3 L433.8 445.9 L437.6 418.0 L441.4 418.0 L444.5 429.2 L447.0 406.8 L449.5 429.2 L452.8 418.0 L456.6 423.6 L460.4 423.6 L464.2 440.3 L468.0 423.6 L471.8 445.9 L475.6 418.0 L479.4 445.9 L483.2 418.0 L487.0 434.7 L490.8 440.3 L494.6 445.9 L498.4 445.9 L502.2 418.0 L506.0 429.2 L509.0 384.5 L511.0 306.5 L513.0 323.2 L516.0 259.1 L519.0 317.6 L521.0 379.0 L524.0 406.8 L527.0 412.4 L528.8 418.0 L531.0 418.0 L533.5 339.9 L535.0 273.0 L537.0 351.1 L539.0 412.4 L540.2 423.6 L544.0 412.4 L547.8 406.8 L551.6 429.2 L555.4 412.4 L559.2 429.2 L563.0 429.2 L566.8 401.3 L570.6 423.6 L574.4 429.2 L578.2 401.3 L582.0 423.6 L585.8 429.2 L589.6 423.6 L593.4 401.3 L594.5 412.4 L597.0 384.5 L599.5 412.4 L601.0 401.3 L604.8 423.6 L608.6 423.6 L612.4 401.3 L616.2 429.2 L620.0 395.7 L623.8 423.6 L627.6 406.8 L631.4 434.7 L635.2 406.8 L639.0 440.3 L642.8 412.4 L646.6 434.7 L650.4 412.4 L654.2 440.3 L658.0 418.0 L661.8 440.3 L663.5 429.2 L666.0 373.4 L668.5 429.2 L669.4 418.0 L673.2 418.0 L677.0 440.3 L680.8 440.3 L684.6 418.0 L688.4 445.9 L692.2 423.6 L696.0 440.3 L699.8 445.9 L703.6 445.9 L707.4 418.0 L711.2 423.6 L715.0 440.3 L718.8 418.0 L722.6 445.9 L726.4 418.0 L730.2 445.9 L734.0 418.0 L737.8 445.9 L741.6 418.0 L745.4 445.9 L749.2 423.6 L753.0 445.9 L756.8 434.7 L760.6 434.7 L764.4 412.4 L768.2 412.4 L772.0 429.2 L772.5 423.6 L775.0 390.1 L777.5 423.6 L779.6 434.7 L783.4 418.0 L787.2 440.3 L791.0 440.3 L794.8 418.0 L798.6 412.4 L802.4 440.3 L806.2 406.8 L810.0 406.8 L813.8 440.3 L817.6 412.4 L821.4 434.7 L825.2 412.4 L827.0 418.0 L830.0 379.0 L833.0 412.4 L836.6 406.8 L840.4 423.6 L844.2 401.3 L848.0 406.8 L851.8 401.3 L855.6 429.2 L859.4 401.3 L863.2 406.8 L867.0 401.3 L870.8 429.2 L874.6 406.8 L878.4 434.7 L882.2 406.8 L886.0 440.3 L889.8 434.7 L893.6 406.8 L897.4 429.2 L901.2 412.4 L905.0 406.8 L908.8 423.6 L912.6 401.3 L916.4 406.8 L920.2 418.0 L924.0 423.6 L925.5 412.4 L928.0 395.7 L930.5 412.4 L931.6 418.0 L935.4 401.3 L939.2 401.3 L943.0 418.0 L946.8 423.6 L950.0 390.1" fill="none" stroke="#E24D42" stroke-width="2.5" stroke-linejoin="round" stroke-linecap="butt"/>
<path d="M149.5 423.6 L151.0 390.1 L152.5 451.5 L153.7 434.7 L156.9 434.7 L160.1 418.0 L163.3 468.2 L166.5 440.3 L169.7 462.6 L172.9 445.9 L176.1 473.8 L179.3 451.5 L182.5 473.8 L185.7 445.9 L188.9 468.2 L192.1 445.9 L195.3 479.3 L198.5 445.9 L201.7 479.3 L204.9 434.7 L208.1 462.6 L211.3 434.7 L212.5 451.5 L215.0 418.0 L217.5 445.9 L217.7 434.7 L220.9 451.5 L224.1 429.2 L227.3 445.9 L229.5 429.2 L232.0 395.7 L234.5 423.6 L236.9 412.4 L240.1 434.7 L242.5 423.6 L245.0 406.8 L247.5 423.6 L249.7 418.0 L252.9 445.9 L256.1 423.6 L256.2 423.6" fill="none" stroke="#1F78C1" stroke-width="2.5" stroke-linejoin="round" stroke-linecap="butt"/>
<path d="M258.9 423.6 L259.0 423.6 L262.0 323.2 L265.0 423.6 L266.3 429.2 L269.7 418.0 L273.1 423.6 L276.5 434.7 L279.9 434.7 L283.3 423.6 L286.7 423.6 L290.1 423.6 L293.5 429.2 L296.9 434.7 L300.3 423.6 L303.7 434.7 L307.1 440.3 L310.5 434.7 L313.9 440.3 L317.3 440.3 L320.7 423.6 L324.1 440.3 L327.5 429.2 L330.9 440.3 L334.3 423.6 L337.7 429.2 L341.1 440.3 L344.5 440.3 L347.9 429.2 L351.3 423.6 L354.7 440.3 L358.1 440.3 L361.5 434.7 L364.9 423.6 L368.3 423.6 L371.7 440.3 L372.5 429.2 L375.0 384.5 L377.5 429.2 L378.5 434.7 L381.9 423.6 L385.3 423.6 L388.7 423.6 L392.1 423.6 L395.5 434.7 L398.9 429.2 L402.3 434.7 L405.7 423.6 L409.1 423.6 L411.5 429.2 L414.0 373.4 L416.5 429.2 L419.3 434.7 L422.7 423.6 L426.1 440.3 L429.5 440.3 L432.9 423.6 L436.3 440.3 L439.7 440.3 L443.1 423.6 L446.5 434.7 L449.9 434.7 L453.3 423.6 L456.7 423.6 L460.1 423.6 L463.5 440.3 L466.9 423.6 L470.3 440.3 L473.5 429.2 L476.0 395.7 L478.5 429.2 L480.5 434.7 L483.9 434.7 L487.3 440.3 L490.7 440.3 L494.1 423.6 L497.5 440.3 L500.9 423.6 L504.3 440.3 L507.0 429.2 L510.0 367.8 L512.0 306.5 L515.0 278.6 L518.0 328.8 L521.0 395.7 L525.0 406.8 L528.0 418.0 L528.1 418.0 L531.5 418.0 L532.0 418.0 L534.0 328.8 L536.0 284.1 L538.0 351.1 L540.0 406.8 L541.7 412.4 L545.1 412.4 L548.5 423.6 L551.9 423.6 L555.3 423.6 L558.7 412.4 L562.1 412.4 L565.5 412.4 L566.5 418.0 L569.0 395.7 L571.5 418.0 L572.3 423.6 L575.7 412.4 L579.1 423.6 L582.5 423.6 L585.9 412.4 L589.3 412.4 L592.7 412.4 L596.1 418.0 L599.5 418.0 L602.9 418.0 L606.3 423.6 L609.7 412.4 L613.1 423.6 L616.5 412.4 L616.5 418.0 L619.0 356.7 L621.5 418.0 L623.3 423.6 L626.7 429.2 L630.1 429.2 L633.5 429.2 L636.9 429.2 L640.3 429.2 L643.7 429.2 L647.1 423.6 L650.5 434.7 L653.9 434.7 L657.3 423.6 L660.7 423.6 L663.5 429.2 L666.0 379.0 L668.5 429.2 L670.9 440.3 L674.3 423.6 L677.7 434.7 L681.1 434.7 L684.5 423.6 L687.9 429.2 L691.3 440.3 L694.7 440.3 L698.1 429.2 L701.5 423.6 L704.9 429.2 L708.3 440.3 L711.7 440.3 L715.1 429.2 L718.5 429.2 L721.9 440.3 L725.3 445.9 L728.7 445.9 L732.1 440.3 L735.5 429.2 L738.9 429.2 L742.3 423.6 L745.7 445.9 L749.1 440.3 L749.5 434.7 L752.0 395.7 L754.5 429.2 L755.9 440.3 L759.3 423.6 L762.7 418.0 L766.1 418.0 L769.5 434.7 L772.9 434.7 L776.3 434.7 L779.7 418.0 L783.1 423.6 L786.5 429.2 L789.9 418.0 L793.3 429.2 L796.7 418.0 L800.1 434.7 L803.5 434.7 L806.9 434.7 L810.3 423.6 L813.7 429.2 L817.1 429.2 L820.5 434.7 L822.5 423.6 L825.0 395.7 L827.5 418.0 L830.7 423.6 L834.1 423.6 L837.5 423.6 L840.9 423.6 L844.3 412.4 L847.7 423.6 L851.1 412.4 L854.5 423.6 L857.9 412.4 L861.3 418.0 L864.7 423.6 L868.1 406.8 L871.5 423.6 L874.9 423.6 L878.3 412.4 L881.7 418.0 L885.1 429.2 L888.5 429.2 L891.9 412.4 L895.3 418.0 L898.7 412.4 L902.1 423.6 L905.5 412.4 L908.9 423.6 L912.3 418.0 L912.5 418.0 L915.0 395.7 L917.5 412.4 L919.1 418.0 L922.5 406.8 L925.9 418.0 L929.3 418.0 L932.7 401.3 L936.1 406.8 L939.5 406.8 L942.9 418.0 L946.3 401.3 L949.7 412.4 L950.0 401.3" fill="none" stroke="#1F78C1" stroke-width="2.5" stroke-linejoin="round" stroke-linecap="butt"/>
<rect x="256.2" y="456" width="2.7" height="107" fill="#19191b"/>
<text x="144.0" y="232.8" text-anchor="end" class="tk">80</text>
<text x="144.0" y="288.5" text-anchor="end" class="tk">70</text>
<text x="144.0" y="344.3" text-anchor="end" class="tk">60</text>
<text x="144.0" y="400.1" text-anchor="end" class="tk">50</text>
<text x="144.0" y="455.9" text-anchor="end" class="tk">40</text>
<text x="144.0" y="511.6" text-anchor="end" class="tk">30</text>
<text x="144.0" y="567.4" text-anchor="end" class="tk">20</text>
<text x="199.8" y="583.7" text-anchor="middle" class="tk">09:00</text>
<text x="312.4" y="583.7" text-anchor="middle" class="tk">10:00</text>
<text x="424.9" y="583.7" text-anchor="middle" class="tk">11:00</text>
<text x="537.5" y="583.7" text-anchor="middle" class="tk">12:00</text>
<text x="650.0" y="583.7" text-anchor="middle" class="tk">13:00</text>
<text x="762.5" y="583.7" text-anchor="middle" class="tk">14:00</text>
<text x="875.1" y="583.7" text-anchor="middle" class="tk">15:00</text>
<text x="0" y="0" transform="translate(111.5 403) rotate(-90)" text-anchor="middle" style="font-family:'Liberation Sans';font-size:14.5px;fill:#d0d1d2">Celsius</text>
<path d="M130.0 660.5 H950.0" stroke="#48484b" stroke-width="1"/>
<path d="M130.0 691.5 H950.0" stroke="#48484b" stroke-width="1"/>
<path d="M130.0 723.5 H950.0" stroke="#48484b" stroke-width="1"/>
<path d="M130.0 754.5 H950.0" stroke="#48484b" stroke-width="1"/>
<path d="M180.5 660.3 V754.5" stroke="#48484b" stroke-width="1"/>
<path d="M296.5 660.3 V754.5" stroke="#48484b" stroke-width="1"/>
<path d="M411.5 660.3 V754.5" stroke="#48484b" stroke-width="1"/>
<path d="M527.5 660.3 V754.5" stroke="#48484b" stroke-width="1"/>
<path d="M642.5 660.3 V754.5" stroke="#48484b" stroke-width="1"/>
<path d="M758.5 660.3 V754.5" stroke="#48484b" stroke-width="1"/>
<path d="M874.5 660.3 V754.5" stroke="#48484b" stroke-width="1"/>
<path d="M130.0 754.5 L130.0 754.5 L133.0 754.5 L135.8 702.7 L137.5 723.1 L140.0 709.0 L141.8 754.5 L189.0 754.5 L191.4 713.7 L194.0 754.5 L241.4 754.5 L244.0 698.0 L245.5 688.6 L247.7 754.5 L499.5 754.5 L500.8 698.0 L502.5 698.0 L505.5 688.6 L509.0 713.7 L510.5 720.0 L513.0 754.5 L517.0 754.5 L523.0 754.5 L524.5 698.0 L527.5 754.5 L549.0 754.5 L551.0 726.2 L553.0 754.5 L557.0 754.5 L558.8 704.3 L561.0 754.5 L772.0 754.5 L774.4 715.2 L776.5 754.5 L782.0 754.5 L784.0 721.5 L786.0 754.5 L820.0 754.5 L822.3 724.7 L824.5 754.5 L841.5 754.5 L843.9 709.0 L846.0 754.5 L950.0 754.5 L950.0 754.5 Z" fill="#7EB26D" fill-opacity="0.12"/>
<path d="M130.0 754.5 L133.0 754.5 L135.8 702.7 L137.5 723.1 L140.0 709.0 L141.8 754.5 L189.0 754.5 L191.4 713.7 L194.0 754.5 L241.4 754.5 L244.0 698.0 L245.5 688.6 L247.7 754.5 L499.5 754.5 L500.8 698.0 L502.5 698.0 L505.5 688.6 L509.0 713.7 L510.5 720.0 L513.0 754.5 L517.0 754.5 L523.0 754.5 L524.5 698.0 L527.5 754.5 L549.0 754.5 L551.0 726.2 L553.0 754.5 L557.0 754.5 L558.8 704.3 L561.0 754.5 L772.0 754.5 L774.4 715.2 L776.5 754.5 L782.0 754.5 L784.0 721.5 L786.0 754.5 L820.0 754.5 L822.3 724.7 L824.5 754.5 L841.5 754.5 L843.9 709.0 L846.0 754.5 L950.0 754.5" fill="none" stroke="#7EB26D" stroke-width="1.3" stroke-linejoin="round"/>
<text x="123.5" y="664.7" text-anchor="end" class="tk">6 K</text>
<text x="123.5" y="696.1" text-anchor="end" class="tk">4 K</text>
<text x="123.5" y="727.5" text-anchor="end" class="tk">2 K</text>
<text x="123.5" y="758.9" text-anchor="end" class="tk">0</text>
<text x="180.1" y="775.8" text-anchor="middle" class="tk">09:00</text>
<text x="295.7" y="775.8" text-anchor="middle" class="tk">10:00</text>
<text x="411.3" y="775.8" text-anchor="middle" class="tk">11:00</text>
<text x="526.9" y="775.8" text-anchor="middle" class="tk">12:00</text>
<text x="642.5" y="775.8" text-anchor="middle" class="tk">13:00</text>
<text x="758.1" y="775.8" text-anchor="middle" class="tk">14:00</text>
<text x="873.7" y="775.8" text-anchor="middle" class="tk">15:00</text>
<path d="M141.3 852.5 H949.5" stroke="#48484b" stroke-width="1"/>
<path d="M141.3 887.5 H949.5" stroke="#48484b" stroke-width="1"/>
<path d="M141.3 923.5 H949.5" stroke="#48484b" stroke-width="1"/>
<path d="M141.3 959.5 H949.5" stroke="#48484b" stroke-width="1"/>
<path d="M141.3 994.5 H949.5" stroke="#48484b" stroke-width="1"/>
<path d="M191.5 851.9 V994.7" stroke="#48484b" stroke-width="1"/>
<path d="M305.5 851.9 V994.7" stroke="#48484b" stroke-width="1"/>
<path d="M418.5 851.9 V994.7" stroke="#48484b" stroke-width="1"/>
<path d="M532.5 851.9 V994.7" stroke="#48484b" stroke-width="1"/>
<path d="M646.5 851.9 V994.7" stroke="#48484b" stroke-width="1"/>
<path d="M760.5 851.9 V994.7" stroke="#48484b" stroke-width="1"/>
<path d="M874.5 851.9 V994.7" stroke="#48484b" stroke-width="1"/>
<path d="M141.3 994.7 L141.3 882.2 L141.3 898.3 L144.5 895.5 L146.5 895.6 L149.1 898.3 L151.7 896.4 L154.3 895.3 L156.9 896.9 L159.5 895.8 L160.4 896.9 L163.6 902.2 L166.8 897.8 L167.3 898.5 L167.5 898.4 L170.7 930.4 L173.9 895.4 L175.1 894.8 L177.7 898.4 L180.3 897.5 L182.9 895.6 L183.5 895.4 L186.7 923.3 L189.9 895.9 L190.7 895.9 L193.3 896.0 L195.7 897.7 L198.9 901.0 L202.1 896.3 L203.7 894.3 L206.3 896.3 L208.9 897.8 L211.5 897.9 L214.1 897.0 L216.7 895.4 L219.3 898.3 L221.6 897.3 L224.8 909.2 L228.0 895.9 L229.7 895.3 L232.3 895.5 L234.9 896.8 L237.5 895.7 L240.1 895.7 L242.6 894.2 L245.2 896.4 L247.8 897.2 L248.7 896.9 L251.9 873.9 L255.1 898.9 L255.6 898.8 L258.2 897.5 L259.3 896.7 L262.5 904.5 L265.7 897.1 L265.9 897.0 L269.1 923.3 L271.1 896.3 L274.3 916.3 L277.5 896.1 L279.0 896.5 L281.6 896.0 L281.7 896.0 L284.9 918.6 L288.1 894.6 L289.4 894.4 L291.8 896.2 L295.0 919.8 L298.2 897.6 L299.8 897.8 L302.4 899.3 L305.0 896.2 L306.4 896.0 L309.6 923.3 L312.8 897.1 L312.8 897.2 L315.4 894.8 L315.8 894.9 L319.0 909.2 L321.7 897.1 L324.9 906.9 L326.7 899.9 L329.1 929.2 L331.5 897.0 L333.6 896.2 L336.2 898.6 L337.0 898.5 L340.2 909.2 L343.4 896.3 L344.0 896.6 L346.6 897.9 L349.2 896.4 L351.8 897.9 L354.4 896.5 L357.0 897.2 L359.6 897.8 L362.2 896.0 L364.8 895.7 L367.4 896.2 L370.0 897.8 L372.6 897.8 L373.5 897.0 L376.7 911.6 L379.9 897.4 L380.4 898.0 L383.0 895.8 L385.6 894.4 L386.4 895.1 L389.6 902.2 L392.8 896.1 L393.4 896.4 L396.0 894.6 L398.6 897.1 L401.2 898.3 L403.8 897.0 L406.4 899.4 L409.0 898.9 L411.6 898.6 L414.2 894.2 L416.8 894.5 L419.4 898.9 L422.0 897.4 L424.1 896.9 L427.3 901.0 L430.5 895.3 L432.4 896.6 L435.0 897.2 L437.6 899.0 L440.2 896.2 L442.8 896.5 L445.3 897.6 L447.9 897.4 L450.5 897.0 L452.3 896.3 L455.5 916.3 L457.0 895.9 L460.2 904.5 L463.4 895.2 L463.5 895.2 L466.1 894.6 L468.7 899.4 L471.3 895.5 L473.9 895.1 L476.5 897.6 L479.1 896.3 L481.7 898.4 L484.3 897.3 L486.9 895.6 L487.6 895.8 L490.8 911.6 L494.0 896.0 L494.7 896.2 L497.3 896.0 L498.2 896.0 L501.4 913.9 L502.9 898.7 L506.1 884.5 L509.3 896.3 L510.3 897.1 L512.9 898.8 L515.5 895.9 L518.1 894.7 L520.4 894.3 L523.6 924.3 L524.8 898.7 L525.3 899.0 L528.5 874.6 L531.7 896.8 L533.7 896.7 L536.3 896.4 L538.9 895.6 L541.5 897.6 L544.1 895.4 L546.7 899.3 L549.3 894.8 L551.9 899.2 L554.5 898.3 L557.1 897.8 L559.7 896.6 L562.3 895.6 L564.9 896.1 L567.5 894.4 L570.1 894.4 L572.7 897.5 L575.3 896.7 L577.4 896.3 L580.6 907.3 L583.8 896.5 L585.7 897.4 L588.3 894.2 L590.9 897.2 L593.5 896.6 L596.1 895.5 L598.7 898.2 L601.3 898.7 L603.9 894.6 L606.5 897.4 L609.1 896.7 L611.7 895.2 L614.3 898.0 L616.9 896.5 L619.5 897.8 L622.1 897.3 L624.7 897.2 L627.3 896.6 L629.9 897.9 L632.5 898.7 L635.1 894.8 L637.7 896.2 L640.3 897.2 L642.9 898.2 L645.5 896.1 L648.0 897.3 L650.6 899.4 L653.2 897.8 L655.8 897.8 L658.4 895.2 L661.0 896.4 L663.6 897.2 L666.2 897.9 L668.8 898.7 L671.4 899.1 L674.0 895.5 L676.6 897.9 L677.5 897.6 L679.9 918.2 L682.3 895.2 L684.4 897.1 L687.0 896.9 L689.6 896.5 L692.2 898.6 L694.8 894.5 L697.3 897.4 L700.5 912.2 L703.3 897.7 L706.5 915.8 L709.7 896.3 L710.4 895.8 L713.0 896.3 L715.6 895.8 L718.2 897.8 L720.8 896.5 L723.4 896.1 L726.0 895.7 L728.6 894.4 L731.2 895.8 L733.8 897.9 L735.5 896.2 L738.8 904.9 L742.0 897.7 L744.2 899.0 L746.8 896.2 L749.4 895.4 L751.4 895.4 L753.8 907.3 L756.2 895.5 L757.2 895.5 L759.8 897.6 L762.4 898.5 L765.0 897.0 L767.6 895.0 L770.2 897.2 L772.8 895.6 L775.4 896.9 L778.0 897.0 L780.6 898.1 L783.2 894.7 L785.8 896.3 L788.4 898.5 L791.0 896.8 L793.6 899.2 L796.2 899.2 L798.8 895.3 L801.4 896.9 L804.0 895.7 L806.6 895.8 L809.2 899.3 L811.8 899.1 L814.4 896.8 L817.0 898.1 L819.6 897.2 L822.2 895.0 L824.8 896.8 L827.4 897.4 L830.0 898.2 L832.6 895.7 L835.2 894.5 L837.8 896.3 L840.4 899.2 L843.0 894.5 L845.6 898.4 L848.2 896.7 L850.7 897.2 L853.3 897.6 L855.9 895.8 L858.5 895.5 L861.1 897.9 L863.7 897.1 L866.3 897.6 L868.9 896.8 L870.5 898.3 L873.7 907.3 L876.9 898.7 L877.7 898.0 L880.9 904.9 L884.1 897.4 L884.5 897.5 L887.1 897.9 L889.7 898.6 L892.3 897.0 L894.9 894.3 L897.5 896.5 L900.1 899.3 L902.7 897.5 L904.4 897.1 L907.6 889.2 L910.8 895.2 L913.1 895.3 L915.7 894.5 L918.3 897.0 L920.9 899.5 L923.5 895.5 L926.1 897.0 L928.7 898.7 L931.3 898.6 L933.9 897.3 L936.5 898.2 L939.1 899.1 L941.7 898.7 L944.3 898.6 L946.9 896.2 L949.5 898.3 L949.5 994.7 Z" fill="#7EB26D" fill-opacity="0.1"/>
<path d="M141.3 994.7 L141.3 882.2 L141.3 897.0 L144.5 895.4 L146.5 895.3 L149.1 897.6 L151.7 896.4 L154.3 895.6 L156.9 896.7 L159.5 895.1 L160.4 896.4 L163.6 902.2 L166.8 897.2 L167.3 897.8 L167.5 897.6 L170.7 930.4 L173.9 895.6 L175.1 894.3 L177.7 898.1 L180.3 897.1 L182.9 895.7 L183.5 895.4 L186.7 923.3 L189.9 896.4 L190.7 896.6 L193.3 896.8 L195.7 897.8 L198.9 901.0 L202.1 896.4 L203.7 895.1 L206.3 895.5 L208.9 899.5 L211.5 898.4 L214.1 897.0 L216.7 895.7 L219.3 898.0 L221.6 897.7 L224.8 909.2 L228.0 896.6 L229.7 895.9 L232.3 895.1 L234.9 895.6 L237.5 895.3 L240.1 896.8 L242.6 894.6 L245.2 896.7 L247.8 897.1 L248.7 897.3 L251.9 873.9 L255.1 899.2 L255.6 899.1 L258.2 898.1 L259.3 897.4 L262.5 904.5 L265.7 896.4 L265.9 896.3 L269.1 923.3 L271.1 897.4 L274.3 916.3 L277.5 896.3 L279.0 896.9 L281.6 894.9 L281.7 895.0 L284.9 918.6 L288.1 895.0 L289.4 894.9 L291.8 896.9 L295.0 919.8 L298.2 896.5 L299.8 896.1 L302.4 899.1 L305.0 897.8 L306.4 896.4 L309.6 923.3 L312.8 897.0 L312.8 897.0 L315.4 895.5 L315.8 895.4 L319.0 909.2 L321.7 896.7 L324.9 906.9 L328.1 894.9 L328.4 894.5 L331.0 896.3 L333.6 896.6 L336.2 899.4 L337.0 899.1 L340.2 909.2 L343.4 895.9 L344.0 895.8 L346.6 898.0 L349.2 896.1 L351.8 899.2 L354.4 896.7 L357.0 897.4 L359.6 899.0 L362.2 897.2 L364.8 896.9 L367.4 897.0 L370.0 898.5 L372.6 899.5 L373.5 898.3 L376.7 911.6 L379.9 898.5 L380.4 899.4 L383.0 896.2 L385.6 894.9 L386.4 895.4 L389.6 902.2 L392.8 896.2 L393.4 896.3 L396.0 894.3 L398.6 898.1 L401.2 899.2 L403.8 896.9 L406.4 899.3 L409.0 897.9 L411.6 898.2 L414.2 894.7 L416.8 895.0 L419.4 898.1 L422.0 896.8 L424.1 896.1 L427.3 901.0 L430.5 896.3 L432.4 897.3 L435.0 897.6 L436.2 897.9 L438.6 926.9 L441.0 897.5 L442.8 896.9 L445.3 897.3 L447.9 896.7 L450.5 895.6 L452.3 896.4 L455.5 916.3 L457.0 896.2 L460.2 904.5 L463.4 895.0 L463.5 895.0 L466.1 895.2 L468.7 899.3 L471.3 894.8 L473.9 895.2 L476.5 896.5 L479.1 896.7 L481.7 896.7 L484.3 897.2 L486.9 897.0 L487.6 896.7 L490.8 911.6 L494.0 896.6 L494.7 897.1 L497.3 895.7 L498.2 896.2 L501.4 913.9 L502.9 897.9 L506.1 884.5 L509.3 897.0 L510.3 897.6 L512.9 898.0 L515.5 895.4 L518.1 894.4 L520.4 894.3 L523.6 924.3 L524.8 897.8 L525.3 897.9 L528.5 874.6 L531.7 896.4 L533.7 896.2 L536.3 897.0 L538.9 894.8 L541.5 896.9 L544.1 895.7 L546.7 898.1 L549.3 894.5 L551.9 898.4 L554.5 899.0 L557.1 897.0 L559.7 896.1 L562.3 896.5 L564.8 897.5 L567.2 904.9 L569.6 895.6 L570.1 895.6 L572.7 896.0 L575.3 897.5 L577.4 896.4 L580.6 907.3 L583.8 896.6 L584.2 896.7 L586.6 923.1 L589.0 895.4 L590.9 897.2 L593.5 896.5 L596.1 895.3 L598.7 898.5 L601.3 898.3 L603.9 895.8 L606.5 897.2 L609.1 896.9 L611.7 895.2 L614.3 898.4 L616.9 896.2 L619.5 897.8 L622.1 896.9 L624.7 898.0 L627.3 897.0 L629.9 898.3 L632.5 899.0 L635.1 895.1 L637.7 897.0 L640.3 896.1 L642.9 898.2 L645.5 897.0 L648.0 897.3 L650.6 898.3 L653.2 897.8 L655.8 896.9 L658.4 894.3 L661.0 895.4 L663.6 897.4 L666.2 898.1 L668.8 898.6 L671.4 898.9 L674.0 894.2 L676.6 897.9 L679.2 896.8 L681.8 895.1 L684.4 897.4 L687.0 896.7 L689.6 896.4 L692.2 897.9 L694.8 895.0 L697.3 896.3 L700.5 912.2 L703.3 897.7 L706.5 915.8 L709.7 895.2 L710.4 894.6 L713.0 896.7 L715.6 896.1 L718.2 897.1 L720.8 897.0 L723.4 896.1 L726.0 896.1 L728.6 895.1 L731.2 896.6 L733.8 899.4 L735.5 897.6 L738.8 904.9 L742.0 898.2 L744.2 899.0 L746.8 896.8 L749.4 895.5 L752.0 895.4 L754.6 895.7 L757.2 895.8 L759.8 897.4 L762.4 898.9 L765.0 896.8 L767.6 895.9 L770.2 897.8 L772.8 894.2 L775.4 896.5 L778.0 897.3 L780.6 898.5 L783.2 894.5 L785.8 897.0 L788.4 897.9 L791.0 897.2 L793.6 899.5 L796.2 899.1 L798.8 895.0 L801.4 896.9 L804.0 897.0 L806.6 895.5 L809.2 898.1 L811.8 898.4 L814.4 896.4 L817.0 899.0 L819.6 897.2 L822.2 895.9 L824.8 896.6 L827.4 897.2 L830.0 899.3 L832.6 894.5 L835.2 895.4 L837.8 895.6 L840.4 898.8 L843.0 894.7 L845.6 898.4 L848.2 897.7 L850.7 897.5 L853.3 896.8 L855.9 895.3 L858.5 895.8 L861.1 898.1 L863.7 896.7 L866.3 897.2 L868.9 897.0 L870.5 898.5 L873.7 907.3 L876.9 899.2 L877.7 898.9 L880.9 904.9 L884.1 896.3 L884.5 896.0 L887.1 897.6 L889.7 897.8 L892.3 896.4 L894.9 895.5 L897.5 895.7 L900.1 897.8 L902.7 897.0 L904.4 896.9 L907.6 889.2 L910.8 895.1 L913.1 895.8 L915.7 894.9 L918.3 895.5 L920.9 899.2 L923.5 896.7 L926.1 896.9 L928.7 897.9 L931.3 898.1 L933.9 897.4 L936.5 898.8 L939.1 898.2 L941.7 899.2 L944.3 899.3 L946.9 896.9 L949.5 899.4 L949.5 994.7 Z" fill="#EAB839" fill-opacity="0.1"/>
<path d="M141.3 994.7 L141.3 882.2 L141.3 898.4 L144.5 894.4 L146.5 894.2 L149.1 898.5 L149.9 897.8 L152.3 964.5 L154.7 894.7 L156.9 896.4 L159.5 894.8 L160.4 896.4 L163.6 902.2 L166.8 898.6 L167.3 899.5 L167.5 899.2 L170.7 930.4 L173.9 896.4 L175.1 895.9 L177.7 897.9 L180.3 898.4 L182.9 896.5 L183.5 896.0 L186.7 923.3 L189.9 896.2 L190.7 896.3 L193.3 895.8 L195.7 897.0 L198.9 901.0 L202.1 897.0 L202.9 896.4 L205.3 913.9 L207.7 898.2 L208.9 899.5 L211.5 898.8 L214.1 898.0 L216.7 895.3 L219.3 898.2 L221.6 897.8 L224.8 909.2 L228.0 897.2 L229.7 897.0 L232.3 895.4 L234.9 895.5 L237.5 896.8 L240.1 896.5 L242.6 894.5 L245.2 895.4 L247.8 897.7 L248.7 897.1 L251.9 873.9 L255.1 898.8 L255.6 898.7 L258.2 897.6 L259.3 897.0 L262.5 904.5 L265.7 897.7 L265.9 897.6 L269.1 923.3 L271.1 896.6 L274.3 916.3 L277.5 895.4 L279.0 896.3 L281.6 895.2 L281.7 895.2 L284.9 918.6 L288.1 895.3 L289.4 895.1 L291.8 895.4 L295.0 919.8 L298.2 897.1 L299.8 896.8 L302.4 898.5 L305.0 897.7 L306.4 896.7 L309.6 923.3 L312.8 896.7 L312.8 896.7 L315.4 894.4 L315.8 894.6 L319.0 909.2 L321.7 896.2 L324.9 906.9 L328.1 895.1 L328.4 894.8 L331.0 896.6 L333.6 896.3 L336.2 897.8 L337.0 898.1 L340.2 909.2 L343.4 896.5 L344.0 896.4 L346.6 898.1 L349.2 897.2 L351.8 897.9 L354.4 896.0 L357.0 898.2 L359.6 899.4 L362.2 896.8 L364.8 896.8 L367.4 896.2 L370.0 898.7 L372.6 898.8 L373.5 897.9 L376.7 911.6 L379.9 898.0 L380.4 898.6 L383.0 896.6 L385.6 895.4 L386.4 895.8 L389.6 902.2 L392.8 897.1 L393.4 897.5 L396.0 895.3 L398.6 898.4 L401.2 897.8 L403.8 896.9 L406.4 898.9 L409.0 898.4 L411.6 898.1 L414.2 895.4 L416.8 895.0 L419.4 898.3 L422.0 896.8 L424.1 897.0 L427.3 901.0 L430.5 895.0 L432.4 896.4 L435.0 897.2 L437.6 899.3 L440.2 896.3 L442.8 896.5 L445.3 896.2 L447.9 897.5 L450.5 895.6 L452.3 895.8 L455.5 916.3 L457.0 896.2 L460.2 904.5 L463.4 894.4 L463.5 894.3 L466.1 894.9 L468.7 899.3 L471.3 894.3 L473.9 894.6 L476.5 896.9 L479.1 896.0 L481.7 898.0 L484.3 897.3 L486.9 896.1 L487.6 896.2 L490.8 911.6 L494.0 896.0 L494.7 896.5 L497.3 894.3 L498.2 895.3 L501.4 913.9 L502.9 897.9 L506.1 884.5 L509.3 895.8 L510.3 896.1 L512.9 898.7 L515.5 896.4 L518.1 894.3 L520.4 895.0 L523.6 924.3 L524.8 898.1 L525.3 898.6 L528.5 874.6 L531.7 896.7 L533.7 897.8 L536.3 897.5 L538.9 894.6 L541.5 896.9 L544.1 895.5 L546.7 898.4 L549.3 895.8 L551.9 899.2 L554.5 897.8 L557.1 896.7 L559.7 897.1 L560.0 897.0 L562.4 875.8 L564.8 897.4 L564.9 897.4 L567.5 895.8 L570.1 895.2 L572.7 896.6 L575.3 898.2 L577.4 897.2 L580.6 907.3 L583.8 896.4 L585.7 896.3 L588.3 895.7 L590.9 896.9 L593.5 897.2 L596.1 896.7 L598.7 899.5 L601.3 898.1 L603.9 894.9 L606.5 898.3 L609.1 897.4 L611.7 894.9 L614.3 897.9 L616.9 896.3 L619.5 897.0 L622.1 896.1 L624.7 897.4 L627.3 895.7 L629.9 898.7 L632.5 899.5 L635.1 894.5 L637.7 897.0 L640.3 897.5 L642.9 897.8 L645.5 896.2 L648.0 898.1 L650.6 897.8 L653.2 897.7 L655.8 897.9 L658.4 895.6 L661.0 896.8 L663.6 896.2 L666.2 896.8 L668.8 898.1 L671.4 898.7 L674.0 895.9 L676.6 898.3 L679.2 896.7 L681.8 895.3 L684.4 898.0 L687.0 896.6 L689.6 897.7 L692.2 899.5 L694.8 895.5 L697.3 897.5 L700.5 912.2 L703.3 897.3 L706.5 915.8 L709.7 895.1 L710.4 894.6 L713.0 896.1 L715.6 896.9 L718.2 896.5 L720.8 895.3 L723.4 896.6 L726.0 895.5 L728.6 895.0 L731.2 895.9 L733.8 898.1 L735.5 896.8 L738.8 904.9 L742.0 897.6 L744.2 899.2 L746.8 895.8 L749.4 895.2 L752.0 895.8 L754.6 897.0 L757.2 894.9 L759.8 896.8 L762.4 899.5 L765.0 896.2 L767.6 894.6 L770.2 896.2 L772.8 894.6 L775.4 896.5 L778.0 896.9 L780.6 897.9 L783.2 896.0 L785.8 897.5 L788.4 898.0 L791.0 897.6 L793.0 898.9 L795.4 950.9 L797.8 895.9 L798.8 894.3 L801.4 897.3 L804.0 896.0 L806.6 895.8 L809.2 898.8 L811.8 898.6 L814.4 896.4 L817.0 897.9 L819.6 897.9 L822.2 895.7 L824.8 897.2 L827.4 897.3 L830.0 898.3 L832.6 894.2 L835.2 894.3 L837.8 895.5 L840.4 898.6 L843.0 895.6 L845.6 898.2 L848.2 896.8 L850.7 897.8 L853.3 897.1 L855.9 894.2 L858.5 896.9 L861.1 898.8 L863.7 896.5 L866.3 897.1 L868.9 897.9 L870.5 898.8 L871.3 901.0 L873.7 909.7 L876.1 900.7 L876.9 898.4 L877.7 898.2 L880.9 904.9 L884.1 896.8 L884.5 896.7 L887.1 898.3 L889.7 898.8 L892.3 896.7 L894.9 894.7 L897.5 896.8 L900.1 899.2 L902.7 896.4 L904.4 897.2 L907.6 889.2 L910.8 895.2 L913.1 895.3 L915.7 894.6 L918.3 896.3 L920.9 898.4 L923.5 896.7 L926.1 896.7 L926.5 897.1 L928.9 936.4 L931.3 898.8 L933.9 897.1 L936.5 898.5 L939.1 898.0 L941.7 899.1 L944.3 897.8 L946.9 896.4 L949.5 898.3 L949.5 994.7 Z" fill="#6ED0E0" fill-opacity="0.1"/>
<path d="M141.3 994.7 L141.3 882.2 L141.3 898.4 L144.5 895.9 L146.5 895.8 L149.1 896.8 L149.9 896.9 L152.3 939.8 L154.7 895.2 L155.3 895.5 L157.7 959.8 L160.1 895.3 L160.4 895.7 L163.6 902.2 L166.8 897.6 L167.3 898.2 L167.5 898.0 L170.7 930.4 L173.9 895.1 L175.1 894.4 L177.7 898.0 L180.3 897.5 L182.9 896.2 L183.5 896.0 L186.7 923.3 L189.9 895.2 L190.7 895.4 L193.3 896.7 L195.7 897.7 L198.9 901.0 L202.1 897.0 L203.7 895.9 L206.3 895.9 L208.9 899.1 L211.5 898.4 L214.1 897.7 L216.7 895.4 L219.3 898.3 L221.6 896.3 L224.8 909.2 L228.0 896.9 L229.7 896.3 L232.3 895.0 L234.9 896.4 L237.5 895.6 L240.1 895.6 L242.6 894.8 L245.2 896.7 L247.8 897.0 L248.7 896.8 L251.9 873.9 L255.1 897.9 L255.6 897.8 L258.2 897.2 L259.3 896.8 L262.5 904.5 L265.7 896.8 L265.9 896.7 L269.1 923.3 L271.1 896.5 L274.3 916.3 L277.5 895.9 L279.0 896.3 L281.6 894.7 L281.7 894.7 L284.9 918.6 L288.1 895.5 L289.4 895.5 L291.8 896.6 L295.0 919.8 L298.2 897.7 L299.8 897.6 L302.4 898.8 L305.0 897.7 L306.4 896.0 L309.6 923.3 L312.8 896.1 L312.8 896.1 L315.4 894.9 L315.8 894.8 L319.0 909.2 L321.7 897.0 L324.9 906.9 L328.1 896.0 L328.4 895.6 L331.0 897.7 L333.6 897.0 L336.2 899.5 L337.0 899.4 L340.2 909.2 L343.4 896.8 L344.0 897.0 L346.6 898.4 L349.2 896.3 L351.8 897.9 L354.4 896.1 L357.0 897.0 L359.6 899.4 L360.1 899.1 L362.5 965.7 L364.9 895.6 L367.4 895.5 L370.0 898.7 L372.6 898.1 L373.5 897.1 L376.7 911.6 L379.9 897.7 L380.4 898.2 L383.0 896.0 L385.6 895.8 L386.4 896.1 L389.6 902.2 L392.8 897.0 L393.4 897.6 L396.0 895.7 L398.6 898.3 L401.2 899.0 L403.8 896.7 L406.4 899.0 L409.0 899.3 L411.6 898.9 L414.2 894.6 L416.8 894.7 L419.4 898.5 L422.0 898.1 L424.1 896.6 L427.3 901.0 L430.5 895.8 L432.4 896.2 L435.0 897.8 L437.6 898.4 L440.2 897.0 L442.8 897.5 L445.3 896.4 L447.9 898.4 L450.5 895.4 L452.3 896.0 L455.5 916.3 L457.0 895.4 L460.2 904.5 L463.4 895.1 L463.5 895.0 L466.1 895.0 L468.7 899.1 L471.3 894.2 L473.9 894.9 L476.5 897.4 L479.1 895.5 L481.7 898.3 L484.3 896.3 L486.9 896.5 L487.6 896.4 L490.8 911.6 L494.0 896.3 L494.7 896.7 L497.3 894.3 L498.2 895.4 L501.4 913.9 L502.9 898.3 L506.1 884.5 L509.3 896.3 L510.3 897.0 L512.9 898.7 L515.5 895.8 L518.1 895.8 L520.4 894.5 L523.6 924.3 L524.8 898.9 L525.3 899.1 L528.5 874.6 L531.7 896.8 L533.7 897.2 L536.3 897.1 L538.9 894.7 L541.5 896.6 L544.1 895.9 L546.7 898.3 L549.3 895.9 L551.9 898.4 L554.5 898.5 L557.1 896.7 L559.7 897.5 L562.3 896.1 L564.9 897.0 L567.5 894.7 L570.1 894.7 L572.7 896.1 L575.3 897.1 L577.4 896.6 L580.6 907.3 L583.8 896.7 L585.7 896.2 L588.3 895.0 L590.9 896.2 L593.5 897.0 L596.1 896.1 L598.7 899.3 L601.3 898.2 L603.9 895.7 L606.5 897.1 L609.1 897.8 L611.7 895.3 L614.3 896.8 L616.9 897.4 L619.5 897.2 L622.1 896.6 L624.7 897.0 L627.3 896.8 L629.9 897.9 L632.5 899.1 L635.1 894.9 L637.7 897.2 L640.3 896.5 L642.9 896.8 L645.5 896.9 L648.0 897.9 L650.6 898.1 L653.2 897.7 L655.8 898.3 L658.4 894.5 L661.0 895.3 L663.6 897.1 L666.2 896.9 L668.8 899.1 L671.4 898.6 L674.0 895.5 L676.6 897.7 L679.2 897.4 L681.8 895.7 L684.4 897.8 L687.0 897.0 L689.6 896.6 L692.2 898.0 L694.8 894.4 L697.3 897.3 L700.5 912.2 L703.3 897.0 L706.5 915.8 L709.7 895.7 L710.4 895.2 L713.0 897.5 L715.6 896.1 L718.2 896.6 L720.8 896.4 L723.4 897.3 L726.0 896.9 L728.6 894.8 L731.2 896.9 L733.8 899.5 L735.5 897.9 L738.8 904.9 L742.0 897.6 L744.2 899.2 L746.8 896.8 L749.4 894.3 L752.0 894.9 L754.6 896.6 L757.2 895.6 L759.8 897.7 L762.4 898.1 L765.0 896.0 L767.6 894.3 L770.2 896.6 L772.8 895.0 L775.4 897.5 L778.0 897.8 L780.6 898.5 L783.2 894.6 L785.8 896.5 L788.4 899.0 L791.0 897.5 L793.0 898.0 L795.4 949.7 L797.8 896.7 L798.8 895.2 L801.4 898.4 L804.0 896.2 L806.6 895.3 L809.2 898.5 L811.8 898.9 L814.4 896.9 L817.0 899.5 L819.6 897.9 L822.2 895.0 L824.8 896.1 L827.4 898.2 L830.0 898.5 L832.6 894.9 L835.2 894.3 L837.8 895.3 L840.4 898.5 L843.0 896.0 L845.6 899.1 L848.2 897.3 L850.7 897.9 L853.3 896.5 L855.9 894.5 L858.5 896.4 L861.1 897.9 L863.7 897.0 L866.3 897.6 L868.9 897.7 L870.5 897.9 L873.7 907.3 L876.9 898.5 L877.7 898.0 L880.9 904.9 L884.1 896.7 L884.5 896.5 L887.1 897.8 L889.7 899.1 L892.3 896.4 L894.9 895.2 L897.5 895.6 L900.1 898.4 L902.7 897.7 L904.4 897.4 L907.6 889.2 L910.8 895.1 L913.1 895.2 L915.7 895.6 L918.3 895.8 L920.9 899.5 L923.5 895.3 L926.1 897.4 L928.7 898.8 L931.3 899.4 L933.9 897.0 L936.5 899.0 L937.4 899.2 L939.8 953.3 L942.2 898.8 L944.3 898.0 L946.9 896.9 L949.5 899.5 L949.5 994.7 Z" fill="#EF843C" fill-opacity="0.13"/>
<path d="M141.3 882.2 L141.3 898.3 L144.5 895.5 L146.5 895.6 L149.1 898.3 L151.7 896.4 L154.3 895.3 L156.9 896.9 L159.5 895.8 L160.4 896.9 L163.6 902.2 L166.8 897.8 L167.3 898.5 L167.5 898.4 L170.7 930.4 L173.9 895.4 L175.1 894.8 L177.7 898.4 L180.3 897.5 L182.9 895.6 L183.5 895.4 L186.7 923.3 L189.9 895.9 L190.7 895.9 L193.3 896.0 L195.7 897.7 L198.9 901.0 L202.1 896.3 L203.7 894.3 L206.3 896.3 L208.9 897.8 L211.5 897.9 L214.1 897.0 L216.7 895.4 L219.3 898.3 L221.6 897.3 L224.8 909.2 L228.0 895.9 L229.7 895.3 L232.3 895.5 L234.9 896.8 L237.5 895.7 L240.1 895.7 L242.6 894.2 L245.2 896.4 L247.8 897.2 L248.7 896.9 L251.9 873.9 L255.1 898.9 L255.6 898.8 L258.2 897.5 L259.3 896.7 L262.5 904.5 L265.7 897.1 L265.9 897.0 L269.1 923.3 L271.1 896.3 L274.3 916.3 L277.5 896.1 L279.0 896.5 L281.6 896.0 L281.7 896.0 L284.9 918.6 L288.1 894.6 L289.4 894.4 L291.8 896.2 L295.0 919.8 L298.2 897.6 L299.8 897.8 L302.4 899.3 L305.0 896.2 L306.4 896.0 L309.6 923.3 L312.8 897.1 L312.8 897.2 L315.4 894.8 L315.8 894.9 L319.0 909.2 L321.7 897.1 L324.9 906.9 L326.7 899.9 L329.1 929.2 L331.5 897.0 L333.6 896.2 L336.2 898.6 L337.0 898.5 L340.2 909.2 L343.4 896.3 L344.0 896.6 L346.6 897.9 L349.2 896.4 L351.8 897.9 L354.4 896.5 L357.0 897.2 L359.6 897.8 L362.2 896.0 L364.8 895.7 L367.4 896.2 L370.0 897.8 L372.6 897.8 L373.5 897.0 L376.7 911.6 L379.9 897.4 L380.4 898.0 L383.0 895.8 L385.6 894.4 L386.4 895.1 L389.6 902.2 L392.8 896.1 L393.4 896.4 L396.0 894.6 L398.6 897.1 L401.2 898.3 L403.8 897.0 L406.4 899.4 L409.0 898.9 L411.6 898.6 L414.2 894.2 L416.8 894.5 L419.4 898.9 L422.0 897.4 L424.1 896.9 L427.3 901.0 L430.5 895.3 L432.4 896.6 L435.0 897.2 L437.6 899.0 L440.2 896.2 L442.8 896.5 L445.3 897.6 L447.9 897.4 L450.5 897.0 L452.3 896.3 L455.5 916.3 L457.0 895.9 L460.2 904.5 L463.4 895.2 L463.5 895.2 L466.1 894.6 L468.7 899.4 L471.3 895.5 L473.9 895.1 L476.5 897.6 L479.1 896.3 L481.7 898.4 L484.3 897.3 L486.9 895.6 L487.6 895.8 L490.8 911.6 L494.0 896.0 L494.7 896.2 L497.3 896.0 L498.2 896.0 L501.4 913.9 L502.9 898.7 L506.1 884.5 L509.3 896.3 L510.3 897.1 L512.9 898.8 L515.5 895.9 L518.1 894.7 L520.4 894.3 L523.6 924.3 L524.8 898.7 L525.3 899.0 L528.5 874.6 L531.7 896.8 L533.7 896.7 L536.3 896.4 L538.9 895.6 L541.5 897.6 L544.1 895.4 L546.7 899.3 L549.3 894.8 L551.9 899.2 L554.5 898.3 L557.1 897.8 L559.7 896.6 L562.3 895.6 L564.9 896.1 L567.5 894.4 L570.1 894.4 L572.7 897.5 L575.3 896.7 L577.4 896.3 L580.6 907.3 L583.8 896.5 L585.7 897.4 L588.3 894.2 L590.9 897.2 L593.5 896.6 L596.1 895.5 L598.7 898.2 L601.3 898.7 L603.9 894.6 L606.5 897.4 L609.1 896.7 L611.7 895.2 L614.3 898.0 L616.9 896.5 L619.5 897.8 L622.1 897.3 L624.7 897.2 L627.3 896.6 L629.9 897.9 L632.5 898.7 L635.1 894.8 L637.7 896.2 L640.3 897.2 L642.9 898.2 L645.5 896.1 L648.0 897.3 L650.6 899.4 L653.2 897.8 L655.8 897.8 L658.4 895.2 L661.0 896.4 L663.6 897.2 L666.2 897.9 L668.8 898.7 L671.4 899.1 L674.0 895.5 L676.6 897.9 L677.5 897.6 L679.9 918.2 L682.3 895.2 L684.4 897.1 L687.0 896.9 L689.6 896.5 L692.2 898.6 L694.8 894.5 L697.3 897.4 L700.5 912.2 L703.3 897.7 L706.5 915.8 L709.7 896.3 L710.4 895.8 L713.0 896.3 L715.6 895.8 L718.2 897.8 L720.8 896.5 L723.4 896.1 L726.0 895.7 L728.6 894.4 L731.2 895.8 L733.8 897.9 L735.5 896.2 L738.8 904.9 L742.0 897.7 L744.2 899.0 L746.8 896.2 L749.4 895.4 L751.4 895.4 L753.8 907.3 L756.2 895.5 L757.2 895.5 L759.8 897.6 L762.4 898.5 L765.0 897.0 L767.6 895.0 L770.2 897.2 L772.8 895.6 L775.4 896.9 L778.0 897.0 L780.6 898.1 L783.2 894.7 L785.8 896.3 L788.4 898.5 L791.0 896.8 L793.6 899.2 L796.2 899.2 L798.8 895.3 L801.4 896.9 L804.0 895.7 L806.6 895.8 L809.2 899.3 L811.8 899.1 L814.4 896.8 L817.0 898.1 L819.6 897.2 L822.2 895.0 L824.8 896.8 L827.4 897.4 L830.0 898.2 L832.6 895.7 L835.2 894.5 L837.8 896.3 L840.4 899.2 L843.0 894.5 L845.6 898.4 L848.2 896.7 L850.7 897.2 L853.3 897.6 L855.9 895.8 L858.5 895.5 L861.1 897.9 L863.7 897.1 L866.3 897.6 L868.9 896.8 L870.5 898.3 L873.7 907.3 L876.9 898.7 L877.7 898.0 L880.9 904.9 L884.1 897.4 L884.5 897.5 L887.1 897.9 L889.7 898.6 L892.3 897.0 L894.9 894.3 L897.5 896.5 L900.1 899.3 L902.7 897.5 L904.4 897.1 L907.6 889.2 L910.8 895.2 L913.1 895.3 L915.7 894.5 L918.3 897.0 L920.9 899.5 L923.5 895.5 L926.1 897.0 L928.7 898.7 L931.3 898.6 L933.9 897.3 L936.5 898.2 L939.1 899.1 L941.7 898.7 L944.3 898.6 L946.9 896.2 L949.5 898.3" fill="none" stroke="#7EB26D" stroke-width="1.5" stroke-linejoin="round"/>
<path d="M141.3 882.2 L141.3 897.0 L144.5 895.4 L146.5 895.3 L149.1 897.6 L151.7 896.4 L154.3 895.6 L156.9 896.7 L159.5 895.1 L160.4 896.4 L163.6 902.2 L166.8 897.2 L167.3 897.8 L167.5 897.6 L170.7 930.4 L173.9 895.6 L175.1 894.3 L177.7 898.1 L180.3 897.1 L182.9 895.7 L183.5 895.4 L186.7 923.3 L189.9 896.4 L190.7 896.6 L193.3 896.8 L195.7 897.8 L198.9 901.0 L202.1 896.4 L203.7 895.1 L206.3 895.5 L208.9 899.5 L211.5 898.4 L214.1 897.0 L216.7 895.7 L219.3 898.0 L221.6 897.7 L224.8 909.2 L228.0 896.6 L229.7 895.9 L232.3 895.1 L234.9 895.6 L237.5 895.3 L240.1 896.8 L242.6 894.6 L245.2 896.7 L247.8 897.1 L248.7 897.3 L251.9 873.9 L255.1 899.2 L255.6 899.1 L258.2 898.1 L259.3 897.4 L262.5 904.5 L265.7 896.4 L265.9 896.3 L269.1 923.3 L271.1 897.4 L274.3 916.3 L277.5 896.3 L279.0 896.9 L281.6 894.9 L281.7 895.0 L284.9 918.6 L288.1 895.0 L289.4 894.9 L291.8 896.9 L295.0 919.8 L298.2 896.5 L299.8 896.1 L302.4 899.1 L305.0 897.8 L306.4 896.4 L309.6 923.3 L312.8 897.0 L312.8 897.0 L315.4 895.5 L315.8 895.4 L319.0 909.2 L321.7 896.7 L324.9 906.9 L328.1 894.9 L328.4 894.5 L331.0 896.3 L333.6 896.6 L336.2 899.4 L337.0 899.1 L340.2 909.2 L343.4 895.9 L344.0 895.8 L346.6 898.0 L349.2 896.1 L351.8 899.2 L354.4 896.7 L357.0 897.4 L359.6 899.0 L362.2 897.2 L364.8 896.9 L367.4 897.0 L370.0 898.5 L372.6 899.5 L373.5 898.3 L376.7 911.6 L379.9 898.5 L380.4 899.4 L383.0 896.2 L385.6 894.9 L386.4 895.4 L389.6 902.2 L392.8 896.2 L393.4 896.3 L396.0 894.3 L398.6 898.1 L401.2 899.2 L403.8 896.9 L406.4 899.3 L409.0 897.9 L411.6 898.2 L414.2 894.7 L416.8 895.0 L419.4 898.1 L422.0 896.8 L424.1 896.1 L427.3 901.0 L430.5 896.3 L432.4 897.3 L435.0 897.6 L436.2 897.9 L438.6 926.9 L441.0 897.5 L442.8 896.9 L445.3 897.3 L447.9 896.7 L450.5 895.6 L452.3 896.4 L455.5 916.3 L457.0 896.2 L460.2 904.5 L463.4 895.0 L463.5 895.0 L466.1 895.2 L468.7 899.3 L471.3 894.8 L473.9 895.2 L476.5 896.5 L479.1 896.7 L481.7 896.7 L484.3 897.2 L486.9 897.0 L487.6 896.7 L490.8 911.6 L494.0 896.6 L494.7 897.1 L497.3 895.7 L498.2 896.2 L501.4 913.9 L502.9 897.9 L506.1 884.5 L509.3 897.0 L510.3 897.6 L512.9 898.0 L515.5 895.4 L518.1 894.4 L520.4 894.3 L523.6 924.3 L524.8 897.8 L525.3 897.9 L528.5 874.6 L531.7 896.4 L533.7 896.2 L536.3 897.0 L538.9 894.8 L541.5 896.9 L544.1 895.7 L546.7 898.1 L549.3 894.5 L551.9 898.4 L554.5 899.0 L557.1 897.0 L559.7 896.1 L562.3 896.5 L564.8 897.5 L567.2 904.9 L569.6 895.6 L570.1 895.6 L572.7 896.0 L575.3 897.5 L577.4 896.4 L580.6 907.3 L583.8 896.6 L584.2 896.7 L586.6 923.1 L589.0 895.4 L590.9 897.2 L593.5 896.5 L596.1 895.3 L598.7 898.5 L601.3 898.3 L603.9 895.8 L606.5 897.2 L609.1 896.9 L611.7 895.2 L614.3 898.4 L616.9 896.2 L619.5 897.8 L622.1 896.9 L624.7 898.0 L627.3 897.0 L629.9 898.3 L632.5 899.0 L635.1 895.1 L637.7 897.0 L640.3 896.1 L642.9 898.2 L645.5 897.0 L648.0 897.3 L650.6 898.3 L653.2 897.8 L655.8 896.9 L658.4 894.3 L661.0 895.4 L663.6 897.4 L666.2 898.1 L668.8 898.6 L671.4 898.9 L674.0 894.2 L676.6 897.9 L679.2 896.8 L681.8 895.1 L684.4 897.4 L687.0 896.7 L689.6 896.4 L692.2 897.9 L694.8 895.0 L697.3 896.3 L700.5 912.2 L703.3 897.7 L706.5 915.8 L709.7 895.2 L710.4 894.6 L713.0 896.7 L715.6 896.1 L718.2 897.1 L720.8 897.0 L723.4 896.1 L726.0 896.1 L728.6 895.1 L731.2 896.6 L733.8 899.4 L735.5 897.6 L738.8 904.9 L742.0 898.2 L744.2 899.0 L746.8 896.8 L749.4 895.5 L752.0 895.4 L754.6 895.7 L757.2 895.8 L759.8 897.4 L762.4 898.9 L765.0 896.8 L767.6 895.9 L770.2 897.8 L772.8 894.2 L775.4 896.5 L778.0 897.3 L780.6 898.5 L783.2 894.5 L785.8 897.0 L788.4 897.9 L791.0 897.2 L793.6 899.5 L796.2 899.1 L798.8 895.0 L801.4 896.9 L804.0 897.0 L806.6 895.5 L809.2 898.1 L811.8 898.4 L814.4 896.4 L817.0 899.0 L819.6 897.2 L822.2 895.9 L824.8 896.6 L827.4 897.2 L830.0 899.3 L832.6 894.5 L835.2 895.4 L837.8 895.6 L840.4 898.8 L843.0 894.7 L845.6 898.4 L848.2 897.7 L850.7 897.5 L853.3 896.8 L855.9 895.3 L858.5 895.8 L861.1 898.1 L863.7 896.7 L866.3 897.2 L868.9 897.0 L870.5 898.5 L873.7 907.3 L876.9 899.2 L877.7 898.9 L880.9 904.9 L884.1 896.3 L884.5 896.0 L887.1 897.6 L889.7 897.8 L892.3 896.4 L894.9 895.5 L897.5 895.7 L900.1 897.8 L902.7 897.0 L904.4 896.9 L907.6 889.2 L910.8 895.1 L913.1 895.8 L915.7 894.9 L918.3 895.5 L920.9 899.2 L923.5 896.7 L926.1 896.9 L928.7 897.9 L931.3 898.1 L933.9 897.4 L936.5 898.8 L939.1 898.2 L941.7 899.2 L944.3 899.3 L946.9 896.9 L949.5 899.4" fill="none" stroke="#EAB839" stroke-width="1.5" stroke-linejoin="round"/>
<path d="M141.3 882.2 L141.3 898.4 L144.5 894.4 L146.5 894.2 L149.1 898.5 L149.9 897.8 L152.3 964.5 L154.7 894.7 L156.9 896.4 L159.5 894.8 L160.4 896.4 L163.6 902.2 L166.8 898.6 L167.3 899.5 L167.5 899.2 L170.7 930.4 L173.9 896.4 L175.1 895.9 L177.7 897.9 L180.3 898.4 L182.9 896.5 L183.5 896.0 L186.7 923.3 L189.9 896.2 L190.7 896.3 L193.3 895.8 L195.7 897.0 L198.9 901.0 L202.1 897.0 L202.9 896.4 L205.3 913.9 L207.7 898.2 L208.9 899.5 L211.5 898.8 L214.1 898.0 L216.7 895.3 L219.3 898.2 L221.6 897.8 L224.8 909.2 L228.0 897.2 L229.7 897.0 L232.3 895.4 L234.9 895.5 L237.5 896.8 L240.1 896.5 L242.6 894.5 L245.2 895.4 L247.8 897.7 L248.7 897.1 L251.9 873.9 L255.1 898.8 L255.6 898.7 L258.2 897.6 L259.3 897.0 L262.5 904.5 L265.7 897.7 L265.9 897.6 L269.1 923.3 L271.1 896.6 L274.3 916.3 L277.5 895.4 L279.0 896.3 L281.6 895.2 L281.7 895.2 L284.9 918.6 L288.1 895.3 L289.4 895.1 L291.8 895.4 L295.0 919.8 L298.2 897.1 L299.8 896.8 L302.4 898.5 L305.0 897.7 L306.4 896.7 L309.6 923.3 L312.8 896.7 L312.8 896.7 L315.4 894.4 L315.8 894.6 L319.0 909.2 L321.7 896.2 L324.9 906.9 L328.1 895.1 L328.4 894.8 L331.0 896.6 L333.6 896.3 L336.2 897.8 L337.0 898.1 L340.2 909.2 L343.4 896.5 L344.0 896.4 L346.6 898.1 L349.2 897.2 L351.8 897.9 L354.4 896.0 L357.0 898.2 L359.6 899.4 L362.2 896.8 L364.8 896.8 L367.4 896.2 L370.0 898.7 L372.6 898.8 L373.5 897.9 L376.7 911.6 L379.9 898.0 L380.4 898.6 L383.0 896.6 L385.6 895.4 L386.4 895.8 L389.6 902.2 L392.8 897.1 L393.4 897.5 L396.0 895.3 L398.6 898.4 L401.2 897.8 L403.8 896.9 L406.4 898.9 L409.0 898.4 L411.6 898.1 L414.2 895.4 L416.8 895.0 L419.4 898.3 L422.0 896.8 L424.1 897.0 L427.3 901.0 L430.5 895.0 L432.4 896.4 L435.0 897.2 L437.6 899.3 L440.2 896.3 L442.8 896.5 L445.3 896.2 L447.9 897.5 L450.5 895.6 L452.3 895.8 L455.5 916.3 L457.0 896.2 L460.2 904.5 L463.4 894.4 L463.5 894.3 L466.1 894.9 L468.7 899.3 L471.3 894.3 L473.9 894.6 L476.5 896.9 L479.1 896.0 L481.7 898.0 L484.3 897.3 L486.9 896.1 L487.6 896.2 L490.8 911.6 L494.0 896.0 L494.7 896.5 L497.3 894.3 L498.2 895.3 L501.4 913.9 L502.9 897.9 L506.1 884.5 L509.3 895.8 L510.3 896.1 L512.9 898.7 L515.5 896.4 L518.1 894.3 L520.4 895.0 L523.6 924.3 L524.8 898.1 L525.3 898.6 L528.5 874.6 L531.7 896.7 L533.7 897.8 L536.3 897.5 L538.9 894.6 L541.5 896.9 L544.1 895.5 L546.7 898.4 L549.3 895.8 L551.9 899.2 L554.5 897.8 L557.1 896.7 L559.7 897.1 L560.0 897.0 L562.4 875.8 L564.8 897.4 L564.9 897.4 L567.5 895.8 L570.1 895.2 L572.7 896.6 L575.3 898.2 L577.4 897.2 L580.6 907.3 L583.8 896.4 L585.7 896.3 L588.3 895.7 L590.9 896.9 L593.5 897.2 L596.1 896.7 L598.7 899.5 L601.3 898.1 L603.9 894.9 L606.5 898.3 L609.1 897.4 L611.7 894.9 L614.3 897.9 L616.9 896.3 L619.5 897.0 L622.1 896.1 L624.7 897.4 L627.3 895.7 L629.9 898.7 L632.5 899.5 L635.1 894.5 L637.7 897.0 L640.3 897.5 L642.9 897.8 L645.5 896.2 L648.0 898.1 L650.6 897.8 L653.2 897.7 L655.8 897.9 L658.4 895.6 L661.0 896.8 L663.6 896.2 L666.2 896.8 L668.8 898.1 L671.4 898.7 L674.0 895.9 L676.6 898.3 L679.2 896.7 L681.8 895.3 L684.4 898.0 L687.0 896.6 L689.6 897.7 L692.2 899.5 L694.8 895.5 L697.3 897.5 L700.5 912.2 L703.3 897.3 L706.5 915.8 L709.7 895.1 L710.4 894.6 L713.0 896.1 L715.6 896.9 L718.2 896.5 L720.8 895.3 L723.4 896.6 L726.0 895.5 L728.6 895.0 L731.2 895.9 L733.8 898.1 L735.5 896.8 L738.8 904.9 L742.0 897.6 L744.2 899.2 L746.8 895.8 L749.4 895.2 L752.0 895.8 L754.6 897.0 L757.2 894.9 L759.8 896.8 L762.4 899.5 L765.0 896.2 L767.6 894.6 L770.2 896.2 L772.8 894.6 L775.4 896.5 L778.0 896.9 L780.6 897.9 L783.2 896.0 L785.8 897.5 L788.4 898.0 L791.0 897.6 L793.0 898.9 L795.4 950.9 L797.8 895.9 L798.8 894.3 L801.4 897.3 L804.0 896.0 L806.6 895.8 L809.2 898.8 L811.8 898.6 L814.4 896.4 L817.0 897.9 L819.6 897.9 L822.2 895.7 L824.8 897.2 L827.4 897.3 L830.0 898.3 L832.6 894.2 L835.2 894.3 L837.8 895.5 L840.4 898.6 L843.0 895.6 L845.6 898.2 L848.2 896.8 L850.7 897.8 L853.3 897.1 L855.9 894.2 L858.5 896.9 L861.1 898.8 L863.7 896.5 L866.3 897.1 L868.9 897.9 L870.5 898.8 L871.3 901.0 L873.7 909.7 L876.1 900.7 L876.9 898.4 L877.7 898.2 L880.9 904.9 L884.1 896.8 L884.5 896.7 L887.1 898.3 L889.7 898.8 L892.3 896.7 L894.9 894.7 L897.5 896.8 L900.1 899.2 L902.7 896.4 L904.4 897.2 L907.6 889.2 L910.8 895.2 L913.1 895.3 L915.7 894.6 L918.3 896.3 L920.9 898.4 L923.5 896.7 L926.1 896.7 L926.5 897.1 L928.9 936.4 L931.3 898.8 L933.9 897.1 L936.5 898.5 L939.1 898.0 L941.7 899.1 L944.3 897.8 L946.9 896.4 L949.5 898.3" fill="none" stroke="#6ED0E0" stroke-width="1.5" stroke-linejoin="round"/>
<path d="M141.3 882.2 L141.3 898.4 L144.5 895.9 L146.5 895.8 L149.1 896.8 L149.9 896.9 L152.3 939.8 L154.7 895.2 L155.3 895.5 L157.7 959.8 L160.1 895.3 L160.4 895.7 L163.6 902.2 L166.8 897.6 L167.3 898.2 L167.5 898.0 L170.7 930.4 L173.9 895.1 L175.1 894.4 L177.7 898.0 L180.3 897.5 L182.9 896.2 L183.5 896.0 L186.7 923.3 L189.9 895.2 L190.7 895.4 L193.3 896.7 L195.7 897.7 L198.9 901.0 L202.1 897.0 L203.7 895.9 L206.3 895.9 L208.9 899.1 L211.5 898.4 L214.1 897.7 L216.7 895.4 L219.3 898.3 L221.6 896.3 L224.8 909.2 L228.0 896.9 L229.7 896.3 L232.3 895.0 L234.9 896.4 L237.5 895.6 L240.1 895.6 L242.6 894.8 L245.2 896.7 L247.8 897.0 L248.7 896.8 L251.9 873.9 L255.1 897.9 L255.6 897.8 L258.2 897.2 L259.3 896.8 L262.5 904.5 L265.7 896.8 L265.9 896.7 L269.1 923.3 L271.1 896.5 L274.3 916.3 L277.5 895.9 L279.0 896.3 L281.6 894.7 L281.7 894.7 L284.9 918.6 L288.1 895.5 L289.4 895.5 L291.8 896.6 L295.0 919.8 L298.2 897.7 L299.8 897.6 L302.4 898.8 L305.0 897.7 L306.4 896.0 L309.6 923.3 L312.8 896.1 L312.8 896.1 L315.4 894.9 L315.8 894.8 L319.0 909.2 L321.7 897.0 L324.9 906.9 L328.1 896.0 L328.4 895.6 L331.0 897.7 L333.6 897.0 L336.2 899.5 L337.0 899.4 L340.2 909.2 L343.4 896.8 L344.0 897.0 L346.6 898.4 L349.2 896.3 L351.8 897.9 L354.4 896.1 L357.0 897.0 L359.6 899.4 L360.1 899.1 L362.5 965.7 L364.9 895.6 L367.4 895.5 L370.0 898.7 L372.6 898.1 L373.5 897.1 L376.7 911.6 L379.9 897.7 L380.4 898.2 L383.0 896.0 L385.6 895.8 L386.4 896.1 L389.6 902.2 L392.8 897.0 L393.4 897.6 L396.0 895.7 L398.6 898.3 L401.2 899.0 L403.8 896.7 L406.4 899.0 L409.0 899.3 L411.6 898.9 L414.2 894.6 L416.8 894.7 L419.4 898.5 L422.0 898.1 L424.1 896.6 L427.3 901.0 L430.5 895.8 L432.4 896.2 L435.0 897.8 L437.6 898.4 L440.2 897.0 L442.8 897.5 L445.3 896.4 L447.9 898.4 L450.5 895.4 L452.3 896.0 L455.5 916.3 L457.0 895.4 L460.2 904.5 L463.4 895.1 L463.5 895.0 L466.1 895.0 L468.7 899.1 L471.3 894.2 L473.9 894.9 L476.5 897.4 L479.1 895.5 L481.7 898.3 L484.3 896.3 L486.9 896.5 L487.6 896.4 L490.8 911.6 L494.0 896.3 L494.7 896.7 L497.3 894.3 L498.2 895.4 L501.4 913.9 L502.9 898.3 L506.1 884.5 L509.3 896.3 L510.3 897.0 L512.9 898.7 L515.5 895.8 L518.1 895.8 L520.4 894.5 L523.6 924.3 L524.8 898.9 L525.3 899.1 L528.5 874.6 L531.7 896.8 L533.7 897.2 L536.3 897.1 L538.9 894.7 L541.5 896.6 L544.1 895.9 L546.7 898.3 L549.3 895.9 L551.9 898.4 L554.5 898.5 L557.1 896.7 L559.7 897.5 L562.3 896.1 L564.9 897.0 L567.5 894.7 L570.1 894.7 L572.7 896.1 L575.3 897.1 L577.4 896.6 L580.6 907.3 L583.8 896.7 L585.7 896.2 L588.3 895.0 L590.9 896.2 L593.5 897.0 L596.1 896.1 L598.7 899.3 L601.3 898.2 L603.9 895.7 L606.5 897.1 L609.1 897.8 L611.7 895.3 L614.3 896.8 L616.9 897.4 L619.5 897.2 L622.1 896.6 L624.7 897.0 L627.3 896.8 L629.9 897.9 L632.5 899.1 L635.1 894.9 L637.7 897.2 L640.3 896.5 L642.9 896.8 L645.5 896.9 L648.0 897.9 L650.6 898.1 L653.2 897.7 L655.8 898.3 L658.4 894.5 L661.0 895.3 L663.6 897.1 L666.2 896.9 L668.8 899.1 L671.4 898.6 L674.0 895.5 L676.6 897.7 L679.2 897.4 L681.8 895.7 L684.4 897.8 L687.0 897.0 L689.6 896.6 L692.2 898.0 L694.8 894.4 L697.3 897.3 L700.5 912.2 L703.3 897.0 L706.5 915.8 L709.7 895.7 L710.4 895.2 L713.0 897.5 L715.6 896.1 L718.2 896.6 L720.8 896.4 L723.4 897.3 L726.0 896.9 L728.6 894.8 L731.2 896.9 L733.8 899.5 L735.5 897.9 L738.8 904.9 L742.0 897.6 L744.2 899.2 L746.8 896.8 L749.4 894.3 L752.0 894.9 L754.6 896.6 L757.2 895.6 L759.8 897.7 L762.4 898.1 L765.0 896.0 L767.6 894.3 L770.2 896.6 L772.8 895.0 L775.4 897.5 L778.0 897.8 L780.6 898.5 L783.2 894.6 L785.8 896.5 L788.4 899.0 L791.0 897.5 L793.0 898.0 L795.4 949.7 L797.8 896.7 L798.8 895.2 L801.4 898.4 L804.0 896.2 L806.6 895.3 L809.2 898.5 L811.8 898.9 L814.4 896.9 L817.0 899.5 L819.6 897.9 L822.2 895.0 L824.8 896.1 L827.4 898.2 L830.0 898.5 L832.6 894.9 L835.2 894.3 L837.8 895.3 L840.4 898.5 L843.0 896.0 L845.6 899.1 L848.2 897.3 L850.7 897.9 L853.3 896.5 L855.9 894.5 L858.5 896.4 L861.1 897.9 L863.7 897.0 L866.3 897.6 L868.9 897.7 L870.5 897.9 L873.7 907.3 L876.9 898.5 L877.7 898.0 L880.9 904.9 L884.1 896.7 L884.5 896.5 L887.1 897.8 L889.7 899.1 L892.3 896.4 L894.9 895.2 L897.5 895.6 L900.1 898.4 L902.7 897.7 L904.4 897.4 L907.6 889.2 L910.8 895.1 L913.1 895.2 L915.7 895.6 L918.3 895.8 L920.9 899.5 L923.5 895.3 L926.1 897.4 L928.7 898.8 L931.3 899.4 L933.9 897.0 L936.5 899.0 L937.4 899.2 L939.8 953.3 L942.2 898.8 L944.3 898.0 L946.9 896.9 L949.5 899.5" fill="none" stroke="#EF843C" stroke-width="1.5" stroke-linejoin="round"/>
<text x="134.8" y="856.3" text-anchor="end" class="tk">4.0 K</text>
<text x="134.8" y="892.0" text-anchor="end" class="tk">3.0 K</text>
<text x="134.8" y="927.7" text-anchor="end" class="tk">2.0 K</text>
<text x="134.8" y="963.4" text-anchor="end" class="tk">1.0 K</text>
<text x="134.8" y="999.1" text-anchor="end" class="tk">0</text>
<text x="190.7" y="1016.0" text-anchor="middle" class="tk">09:00</text>
<text x="304.5" y="1016.0" text-anchor="middle" class="tk">10:00</text>
<text x="418.4" y="1016.0" text-anchor="middle" class="tk">11:00</text>
<text x="532.2" y="1016.0" text-anchor="middle" class="tk">12:00</text>
<text x="646.1" y="1016.0" text-anchor="middle" class="tk">13:00</text>
<text x="760.0" y="1016.0" text-anchor="middle" class="tk">14:00</text>
<text x="873.8" y="1016.0" text-anchor="middle" class="tk">15:00</text>
<path d="M1045.8 132.5 H1849.0" stroke="#48484b" stroke-width="1"/>
<path d="M1045.8 168.5 H1849.0" stroke="#48484b" stroke-width="1"/>
<path d="M1045.8 203.5 H1849.0" stroke="#48484b" stroke-width="1"/>
<path d="M1045.8 239.5 H1849.0" stroke="#48484b" stroke-width="1"/>
<path d="M1045.8 275.5 H1849.0" stroke="#48484b" stroke-width="1"/>
<path d="M1095.5 132.1 V275.1" stroke="#48484b" stroke-width="1"/>
<path d="M1208.5 132.1 V275.1" stroke="#48484b" stroke-width="1"/>
<path d="M1321.5 132.1 V275.1" stroke="#48484b" stroke-width="1"/>
<path d="M1434.5 132.1 V275.1" stroke="#48484b" stroke-width="1"/>
<path d="M1548.5 132.1 V275.1" stroke="#48484b" stroke-width="1"/>
<path d="M1661.5 132.1 V275.1" stroke="#48484b" stroke-width="1"/>
<path d="M1774.5 132.1 V275.1" stroke="#48484b" stroke-width="1"/>
<path d="M1045.8 275.1 L1045.8 272.4 L1047.3 271.7 L1048.8 271.3 L1050.3 268.9 L1051.8 262.3 L1053.3 256.5 L1054.8 254.4 L1056.3 253.9 L1057.8 254.6 L1059.3 254.1 L1060.8 254.4 L1062.3 254.4 L1063.8 254.6 L1065.3 254.7 L1066.8 254.4 L1068.3 254.9 L1069.8 254.5 L1071.3 254.6 L1072.8 255.0 L1074.3 254.4 L1075.8 254.8 L1077.3 255.0 L1078.8 254.3 L1080.3 254.9 L1081.8 254.8 L1083.3 254.7 L1084.8 255.0 L1086.3 255.0 L1087.8 254.4 L1089.3 254.7 L1090.8 254.9 L1092.3 255.0 L1093.8 255.2 L1095.3 255.1 L1096.8 255.2 L1098.3 254.5 L1099.8 254.8 L1101.3 255.3 L1102.8 255.3 L1104.4 255.2 L1105.9 254.8 L1107.4 255.2 L1108.9 255.0 L1110.4 255.1 L1111.9 255.0 L1113.4 255.1 L1114.9 254.8 L1116.4 254.9 L1117.9 254.4 L1119.4 254.3 L1120.9 254.3 L1122.4 254.1 L1123.9 253.5 L1125.4 254.2 L1126.9 253.5 L1128.4 253.5 L1129.9 253.0 L1131.4 253.0 L1132.9 253.6 L1134.4 252.8 L1135.9 252.6 L1137.4 252.8 L1138.9 252.0 L1140.4 252.1 L1141.9 251.8 L1143.4 251.8 L1144.9 251.2 L1146.4 250.8 L1147.9 250.7 L1149.4 251.9 L1150.9 252.7 L1152.4 254.0 L1153.9 254.0 L1155.4 254.1 L1156.9 254.6 L1158.4 254.7 L1159.9 254.2 L1161.4 254.1 L1162.9 254.1 L1164.4 254.4 L1165.9 254.3 L1167.4 254.0 L1168.9 254.3 L1170.4 254.1 L1171.9 254.0 L1173.4 254.6 L1174.9 254.0 L1176.4 254.3 L1177.9 254.6 L1179.4 254.4 L1180.9 254.6 L1182.4 254.1 L1183.9 254.7 L1185.4 253.9 L1186.9 254.7 L1188.4 254.2 L1189.9 253.9 L1191.4 254.1 L1192.9 254.8 L1194.4 254.5 L1195.9 254.5 L1197.4 254.6 L1198.9 253.9 L1200.4 254.1 L1201.9 254.3 L1203.4 254.7 L1204.9 254.7 L1206.4 254.0 L1207.9 254.8 L1209.4 254.4 L1210.9 254.1 L1212.4 253.9 L1213.9 254.2 L1215.4 254.3 L1216.9 254.3 L1218.5 254.1 L1220.0 254.7 L1221.5 254.3 L1223.0 254.1 L1224.5 254.6 L1226.0 254.1 L1227.5 254.2 L1229.0 254.0 L1230.5 254.1 L1232.0 254.7 L1233.5 254.4 L1235.0 254.3 L1236.5 254.4 L1238.0 254.4 L1239.5 254.3 L1241.0 254.2 L1242.5 254.0 L1244.0 253.8 L1245.5 253.9 L1247.0 254.2 L1248.5 253.8 L1250.0 254.4 L1251.5 254.1 L1253.0 254.0 L1254.5 254.1 L1256.0 254.2 L1257.5 254.0 L1259.0 254.5 L1260.5 254.2 L1262.0 253.8 L1263.5 253.8 L1265.0 254.6 L1266.5 254.3 L1268.0 254.0 L1269.5 254.4 L1271.0 253.8 L1272.5 254.5 L1274.0 254.6 L1275.5 254.3 L1277.0 253.8 L1278.5 254.1 L1280.0 254.5 L1281.5 254.3 L1283.0 253.9 L1284.5 253.9 L1286.0 253.8 L1287.5 254.2 L1289.0 253.9 L1290.5 254.1 L1292.0 254.5 L1293.5 254.5 L1295.0 254.1 L1296.5 254.4 L1298.0 253.8 L1299.5 254.5 L1301.0 254.4 L1302.5 254.1 L1304.0 254.5 L1305.5 253.9 L1307.0 254.5 L1308.5 253.9 L1310.0 254.5 L1311.5 254.4 L1313.0 254.5 L1314.5 254.3 L1316.0 253.7 L1317.5 253.9 L1319.0 254.2 L1320.5 254.4 L1322.0 254.2 L1323.5 253.6 L1325.0 253.9 L1326.5 253.9 L1328.0 253.8 L1329.5 253.8 L1331.0 254.1 L1332.5 253.9 L1334.1 253.8 L1335.6 253.9 L1337.1 254.4 L1338.6 254.1 L1340.1 254.2 L1341.6 254.4 L1343.1 253.6 L1344.6 254.3 L1346.1 253.6 L1347.6 253.7 L1349.1 254.2 L1350.6 254.2 L1352.1 254.1 L1353.6 254.0 L1355.1 254.2 L1356.6 253.9 L1358.1 253.7 L1359.6 253.7 L1361.1 253.6 L1362.6 253.5 L1364.1 254.4 L1365.6 254.4 L1367.1 253.8 L1368.6 253.9 L1370.1 253.7 L1371.6 254.2 L1373.1 253.9 L1374.6 253.6 L1376.1 254.3 L1377.6 254.3 L1379.1 253.5 L1380.6 253.9 L1382.1 253.7 L1383.6 254.0 L1385.1 253.8 L1386.6 253.7 L1388.1 253.7 L1389.6 254.0 L1391.1 253.9 L1392.6 253.9 L1394.1 254.0 L1395.6 253.8 L1397.1 254.3 L1398.6 253.8 L1400.1 254.1 L1401.6 254.2 L1403.1 254.0 L1404.6 253.9 L1406.1 253.7 L1407.6 247.4 L1409.1 240.7 L1410.6 234.7 L1412.1 238.6 L1413.6 243.5 L1415.1 246.1 L1416.6 245.7 L1418.1 245.4 L1419.6 245.1 L1421.1 244.9 L1422.6 245.4 L1424.1 244.9 L1425.6 244.9 L1427.1 244.2 L1428.6 243.3 L1430.1 242.0 L1431.6 240.9 L1433.1 241.3 L1434.6 240.3 L1436.1 240.3 L1437.6 240.0 L1439.1 239.4 L1440.6 239.7 L1442.1 239.4 L1443.6 239.4 L1445.1 238.9 L1446.6 239.4 L1448.2 238.9 L1449.7 239.1 L1451.2 239.1 L1452.7 238.7 L1454.2 238.6 L1455.7 238.6 L1457.2 239.1 L1458.7 238.8 L1460.2 238.6 L1461.7 238.6 L1463.2 238.7 L1464.7 238.3 L1466.2 238.1 L1467.7 238.1 L1469.2 238.5 L1470.7 238.5 L1472.2 238.8 L1473.7 238.5 L1475.2 238.7 L1476.7 238.8 L1478.2 238.3 L1479.7 238.2 L1481.2 238.2 L1482.7 238.1 L1484.2 238.4 L1485.7 238.2 L1487.2 237.8 L1488.7 238.5 L1490.2 238.1 L1491.7 238.3 L1493.2 238.1 L1494.7 238.1 L1496.2 238.1 L1497.7 237.6 L1499.2 237.6 L1500.7 238.1 L1502.2 237.8 L1503.7 237.5 L1505.2 238.1 L1506.7 238.0 L1508.2 238.0 L1509.7 237.7 L1511.2 237.4 L1512.7 238.0 L1514.2 237.2 L1515.7 237.1 L1517.2 236.7 L1518.7 236.0 L1520.2 235.8 L1521.7 236.3 L1523.2 236.5 L1524.7 236.3 L1526.2 236.6 L1527.7 235.9 L1529.2 236.4 L1530.7 236.1 L1532.2 236.2 L1533.7 236.0 L1535.2 235.9 L1536.7 236.2 L1538.2 236.2 L1539.7 236.5 L1541.2 236.2 L1542.7 236.1 L1544.2 236.2 L1545.7 236.2 L1547.2 236.0 L1548.7 235.8 L1550.2 236.2 L1551.7 235.9 L1553.2 235.6 L1554.7 235.7 L1556.2 235.9 L1557.7 236.2 L1559.2 236.1 L1560.7 236.0 L1562.3 236.2 L1563.8 235.8 L1565.3 235.8 L1566.8 236.2 L1568.3 236.1 L1569.8 235.8 L1571.3 236.2 L1572.8 235.5 L1574.3 235.9 L1575.8 236.2 L1577.3 236.2 L1578.8 235.6 L1580.3 236.1 L1581.8 235.9 L1583.3 236.2 L1584.8 235.7 L1586.3 235.9 L1587.8 235.9 L1589.3 236.2 L1590.8 235.6 L1592.3 235.7 L1593.8 235.4 L1595.3 235.9 L1596.8 235.3 L1598.3 236.0 L1599.8 235.4 L1601.3 235.4 L1602.8 236.1 L1604.3 235.7 L1605.8 235.9 L1607.3 235.5 L1608.8 235.4 L1610.3 235.5 L1611.8 236.1 L1613.3 235.3 L1614.8 236.0 L1616.3 235.9 L1617.8 235.7 L1619.3 235.4 L1620.8 235.8 L1622.3 235.9 L1623.8 235.6 L1625.3 235.3 L1626.8 235.6 L1628.3 235.9 L1629.8 235.6 L1631.3 235.2 L1632.8 235.2 L1634.3 235.6 L1635.8 235.1 L1637.3 235.0 L1638.8 235.3 L1640.3 235.2 L1641.8 235.4 L1643.3 235.0 L1644.8 235.5 L1646.3 235.6 L1647.8 235.2 L1649.3 235.4 L1650.8 235.4 L1652.3 235.6 L1653.8 235.4 L1655.3 235.5 L1656.8 235.4 L1658.3 235.6 L1659.8 234.9 L1661.3 234.9 L1662.8 235.6 L1664.3 235.6 L1665.8 234.8 L1667.3 235.6 L1668.8 235.3 L1670.3 235.6 L1671.8 235.4 L1673.3 235.1 L1674.8 234.9 L1676.3 235.4 L1677.9 235.4 L1679.4 235.2 L1680.9 235.0 L1682.4 235.0 L1683.9 235.5 L1685.4 235.1 L1686.9 234.9 L1688.4 235.6 L1689.9 235.6 L1691.4 234.8 L1692.9 234.8 L1694.4 235.3 L1695.9 235.0 L1697.4 235.1 L1698.9 235.2 L1700.4 234.9 L1701.9 235.1 L1703.4 234.8 L1704.9 234.8 L1706.4 235.1 L1707.9 234.9 L1709.4 235.4 L1710.9 234.7 L1712.4 235.4 L1713.9 234.8 L1715.4 234.8 L1716.9 234.6 L1718.4 234.8 L1719.9 235.4 L1721.4 234.8 L1722.9 235.2 L1724.4 235.3 L1725.9 235.1 L1727.4 234.6 L1728.9 234.8 L1730.4 234.6 L1731.9 234.6 L1733.4 234.7 L1734.9 234.6 L1736.4 235.0 L1737.9 234.9 L1739.4 234.6 L1740.9 234.6 L1742.4 234.5 L1743.9 234.4 L1745.4 234.7 L1746.9 234.4 L1748.4 234.8 L1749.9 234.5 L1751.4 235.0 L1752.9 234.5 L1754.4 235.1 L1755.9 235.1 L1757.4 235.1 L1758.9 234.5 L1760.4 235.1 L1761.9 234.7 L1763.4 235.0 L1764.9 234.6 L1766.4 234.7 L1767.9 234.4 L1769.4 234.9 L1770.9 234.5 L1772.4 235.0 L1773.9 234.8 L1775.4 234.5 L1776.9 234.2 L1778.4 234.4 L1779.9 234.5 L1781.4 234.5 L1782.9 234.6 L1784.4 234.1 L1785.9 234.5 L1787.4 234.8 L1788.9 234.9 L1790.4 234.6 L1792.0 234.6 L1793.5 234.5 L1795.0 234.8 L1796.5 234.6 L1798.0 234.3 L1799.5 234.3 L1801.0 234.6 L1802.5 234.3 L1804.0 234.3 L1805.5 234.0 L1807.0 234.3 L1808.5 234.1 L1810.0 234.5 L1811.5 233.4 L1813.0 232.6 L1814.5 232.5 L1816.0 231.7 L1817.5 231.8 L1819.0 232.0 L1820.5 232.4 L1822.0 232.2 L1823.5 231.9 L1825.0 231.8 L1826.5 231.9 L1828.0 231.8 L1829.5 231.8 L1831.0 232.4 L1832.5 231.9 L1834.0 231.8 L1835.5 232.2 L1837.0 231.8 L1838.5 232.4 L1840.0 232.3 L1841.5 232.5 L1843.0 232.3 L1844.5 232.3 L1846.0 231.9 L1847.5 232.1 L1849.0 232.0 L1849.0 275.1 Z" fill="#7EB26D" fill-opacity="0.2"/>
<path d="M1045.8 269.9 L1047.3 268.8 L1048.8 267.5 L1050.3 265.6 L1051.8 258.9 L1053.3 253.0 L1054.8 251.0 L1056.3 250.5 L1057.8 250.7 L1059.3 250.6 L1060.8 250.4 L1062.3 250.3 L1063.8 250.9 L1065.3 250.6 L1066.8 251.0 L1068.3 250.3 L1069.8 250.5 L1071.3 250.4 L1072.8 251.1 L1074.3 250.9 L1075.8 251.0 L1077.3 250.6 L1078.8 250.3 L1080.3 250.5 L1081.8 250.4 L1083.3 250.2 L1084.8 250.6 L1086.3 250.4 L1087.8 250.2 L1089.3 250.6 L1090.8 250.9 L1092.3 250.9 L1093.8 250.5 L1095.3 250.2 L1096.8 250.8 L1098.3 250.2 L1099.8 250.5 L1101.3 250.1 L1102.8 250.9 L1104.4 250.5 L1105.9 250.4 L1107.4 250.3 L1108.9 250.5 L1110.4 250.9 L1111.9 250.4 L1113.4 250.2 L1114.9 250.4 L1116.4 250.8 L1117.9 250.3 L1119.4 250.5 L1120.9 250.8 L1122.4 250.2 L1123.9 250.6 L1125.4 250.4 L1126.9 250.0 L1128.4 249.9 L1129.9 250.7 L1131.4 250.3 L1132.9 250.3 L1134.4 250.5 L1135.9 249.9 L1137.4 249.5 L1138.9 249.0 L1140.4 249.0 L1141.9 248.3 L1143.4 248.1 L1144.9 248.1 L1146.4 247.6 L1147.9 247.1 L1149.4 248.2 L1150.9 249.8 L1152.4 251.0 L1153.9 250.4 L1155.4 251.2 L1156.9 250.4 L1158.4 250.5 L1159.9 250.4 L1161.4 250.7 L1162.9 250.9 L1164.4 251.1 L1165.9 250.4 L1167.4 250.9 L1168.9 250.4 L1170.4 250.8 L1171.9 250.5 L1173.4 250.6 L1174.9 250.3 L1176.4 250.9 L1177.9 250.4 L1179.4 251.0 L1180.9 250.6 L1182.4 250.8 L1183.9 250.8 L1185.4 250.7 L1186.9 251.0 L1188.4 251.1 L1189.9 250.5 L1191.4 250.6 L1192.9 251.0 L1194.4 250.4 L1195.9 250.6 L1197.4 250.6 L1198.9 251.1 L1200.4 250.4 L1201.9 250.8 L1203.4 250.9 L1204.9 250.9 L1206.4 250.2 L1207.9 251.1 L1209.4 250.5 L1210.9 251.0 L1212.4 250.8 L1213.9 250.6 L1215.4 251.0 L1216.9 250.8 L1218.5 250.5 L1220.0 250.9 L1221.5 250.7 L1223.0 250.8 L1224.5 250.7 L1226.0 250.9 L1227.5 250.3 L1229.0 250.6 L1230.5 250.2 L1232.0 250.9 L1233.5 250.9 L1235.0 250.9 L1236.5 250.2 L1238.0 250.6 L1239.5 250.6 L1241.0 250.3 L1242.5 250.3 L1244.0 251.0 L1245.5 250.9 L1247.0 250.4 L1248.5 250.9 L1250.0 250.7 L1251.5 250.5 L1253.0 250.7 L1254.5 250.3 L1256.0 250.4 L1257.5 250.1 L1259.0 250.7 L1260.5 250.6 L1262.0 250.8 L1263.5 250.6 L1265.0 250.5 L1266.5 250.4 L1268.0 250.8 L1269.5 250.4 L1271.0 250.6 L1272.5 250.8 L1274.0 250.5 L1275.5 250.7 L1277.0 250.1 L1278.5 250.3 L1280.0 250.8 L1281.5 250.2 L1283.0 250.1 L1284.5 250.1 L1286.0 250.8 L1287.5 250.2 L1289.0 250.5 L1290.5 250.5 L1292.0 250.8 L1293.5 250.5 L1295.0 250.5 L1296.5 250.1 L1298.0 250.8 L1299.5 250.7 L1301.0 250.6 L1302.5 250.8 L1304.0 250.6 L1305.5 250.7 L1307.0 250.8 L1308.5 250.6 L1310.0 250.0 L1311.5 250.8 L1313.0 250.9 L1314.5 250.2 L1316.0 250.1 L1317.5 250.3 L1319.0 250.1 L1320.5 250.3 L1322.0 250.1 L1323.5 250.2 L1325.0 250.0 L1326.5 250.4 L1328.0 250.3 L1329.5 250.7 L1331.0 250.3 L1332.5 250.1 L1334.1 250.8 L1335.6 250.8 L1337.1 250.6 L1338.6 250.2 L1340.1 250.3 L1341.6 250.4 L1343.1 250.3 L1344.6 250.0 L1346.1 250.4 L1347.6 250.7 L1349.1 250.6 L1350.6 250.7 L1352.1 250.6 L1353.6 250.6 L1355.1 250.7 L1356.6 250.8 L1358.1 250.7 L1359.6 250.3 L1361.1 250.5 L1362.6 250.5 L1364.1 250.7 L1365.6 250.6 L1367.1 250.3 L1368.6 250.1 L1370.1 250.2 L1371.6 250.1 L1373.1 250.5 L1374.6 250.6 L1376.1 250.1 L1377.6 250.4 L1379.1 250.7 L1380.6 250.2 L1382.1 250.0 L1383.6 250.4 L1385.1 250.2 L1386.6 250.0 L1388.1 250.1 L1389.6 249.9 L1391.1 250.0 L1392.6 250.3 L1394.1 250.0 L1395.6 249.9 L1397.1 250.4 L1398.6 250.7 L1400.1 250.6 L1401.6 250.2 L1403.1 250.7 L1404.6 249.9 L1406.1 249.4 L1407.6 240.5 L1409.1 231.7 L1410.6 230.3 L1412.1 231.5 L1413.6 234.0 L1415.1 240.3 L1416.6 241.2 L1418.1 241.4 L1419.6 241.0 L1421.1 240.7 L1422.6 240.2 L1424.1 240.3 L1425.6 240.2 L1427.1 239.6 L1428.6 238.0 L1430.1 236.9 L1431.6 236.8 L1433.1 235.9 L1434.6 236.1 L1436.1 235.6 L1437.6 235.8 L1439.1 235.5 L1440.6 234.9 L1442.1 235.4 L1443.6 235.0 L1445.1 234.9 L1446.6 235.3 L1448.2 235.2 L1449.7 234.7 L1451.2 235.0 L1452.7 234.4 L1454.2 234.7 L1455.7 234.2 L1457.2 234.7 L1458.7 234.9 L1460.2 234.6 L1461.7 234.0 L1463.2 234.4 L1464.7 234.4 L1466.2 234.3 L1467.7 234.0 L1469.2 234.1 L1470.7 234.2 L1472.2 233.8 L1473.7 234.3 L1475.2 233.9 L1476.7 233.9 L1478.2 233.7 L1479.7 233.9 L1481.2 234.4 L1482.7 233.8 L1484.2 233.6 L1485.7 233.8 L1487.2 234.3 L1488.7 233.5 L1490.2 233.7 L1491.7 233.5 L1493.2 233.9 L1494.7 233.7 L1496.2 233.4 L1497.7 234.0 L1499.2 233.5 L1500.7 233.8 L1502.2 233.5 L1503.7 233.9 L1505.2 233.1 L1506.7 233.2 L1508.2 233.3 L1509.7 233.2 L1511.2 233.7 L1512.7 233.4 L1514.2 233.0 L1515.7 232.7 L1517.2 232.7 L1518.7 232.2 L1520.2 232.1 L1521.7 232.3 L1523.2 232.2 L1524.7 232.0 L1526.2 232.0 L1527.7 231.8 L1529.2 232.0 L1530.7 232.4 L1532.2 231.9 L1533.7 231.9 L1535.2 232.1 L1536.7 232.1 L1538.2 231.7 L1539.7 232.0 L1541.2 232.2 L1542.7 231.6 L1544.2 231.7 L1545.7 232.2 L1547.2 232.4 L1548.7 231.6 L1550.2 231.6 L1551.7 232.1 L1553.2 231.8 L1554.7 232.1 L1556.2 231.5 L1557.7 231.9 L1559.2 231.6 L1560.7 231.8 L1562.3 232.1 L1563.8 231.9 L1565.3 232.2 L1566.8 232.2 L1568.3 232.0 L1569.8 232.2 L1571.3 231.6 L1572.8 231.8 L1574.3 231.7 L1575.8 232.0 L1577.3 231.5 L1578.8 232.2 L1580.3 231.7 L1581.8 232.1 L1583.3 232.2 L1584.8 232.2 L1586.3 231.7 L1587.8 232.1 L1589.3 232.2 L1590.8 231.4 L1592.3 232.0 L1593.8 232.0 L1595.3 231.7 L1596.8 231.5 L1598.3 231.4 L1599.8 231.6 L1601.3 232.1 L1602.8 231.6 L1604.3 231.5 L1605.8 231.8 L1607.3 231.6 L1608.8 231.8 L1610.3 231.6 L1611.8 231.5 L1613.3 231.2 L1614.8 231.9 L1616.3 231.8 L1617.8 231.4 L1619.3 231.6 L1620.8 231.7 L1622.3 231.6 L1623.8 232.0 L1625.3 231.8 L1626.8 231.4 L1628.3 231.4 L1629.8 231.7 L1631.3 231.3 L1632.8 232.0 L1634.3 231.1 L1635.8 231.5 L1637.3 231.3 L1638.8 231.6 L1640.3 231.1 L1641.8 231.3 L1643.3 231.9 L1644.8 231.8 L1646.3 231.2 L1647.8 231.4 L1649.3 231.1 L1650.8 231.1 L1652.3 231.2 L1653.8 231.9 L1655.3 231.3 L1656.8 231.2 L1658.3 231.0 L1659.8 231.1 L1661.3 231.9 L1662.8 231.6 L1664.3 231.8 L1665.8 231.7 L1667.3 231.6 L1668.8 231.2 L1670.3 231.1 L1671.8 231.2 L1673.3 231.0 L1674.8 231.1 L1676.3 231.6 L1677.9 231.3 L1679.4 230.9 L1680.9 231.2 L1682.4 231.6 L1683.9 231.6 L1685.4 231.5 L1686.9 231.5 L1688.4 231.7 L1689.9 231.4 L1691.4 231.2 L1692.9 231.4 L1694.4 231.1 L1695.9 230.9 L1697.4 231.1 L1698.9 231.2 L1700.4 230.9 L1701.9 230.9 L1703.4 231.0 L1704.9 231.1 L1706.4 231.6 L1707.9 231.2 L1709.4 231.5 L1710.9 231.4 L1712.4 231.3 L1713.9 231.0 L1715.4 231.1 L1716.9 231.0 L1718.4 231.3 L1719.9 231.5 L1721.4 231.4 L1722.9 231.0 L1724.4 230.8 L1725.9 230.7 L1727.4 231.2 L1728.9 230.9 L1730.4 230.7 L1731.9 231.0 L1733.4 230.9 L1734.9 230.9 L1736.4 231.3 L1737.9 231.2 L1739.4 230.9 L1740.9 231.3 L1742.4 230.8 L1743.9 231.5 L1745.4 230.7 L1746.9 231.2 L1748.4 231.3 L1749.9 231.3 L1751.4 231.0 L1752.9 231.4 L1754.4 231.2 L1755.9 231.2 L1757.4 230.7 L1758.9 230.7 L1760.4 231.0 L1761.9 231.1 L1763.4 230.6 L1764.9 231.2 L1766.4 230.9 L1767.9 231.0 L1769.4 231.0 L1770.9 231.3 L1772.4 230.8 L1773.9 231.0 L1775.4 231.1 L1776.9 231.1 L1778.4 230.8 L1779.9 230.7 L1781.4 230.9 L1782.9 231.0 L1784.4 231.0 L1785.9 230.5 L1787.4 230.8 L1788.9 230.9 L1790.4 230.5 L1792.0 230.4 L1793.5 231.1 L1795.0 230.3 L1796.5 230.7 L1798.0 230.5 L1799.5 230.2 L1801.0 230.4 L1802.5 230.3 L1804.0 230.5 L1805.5 230.9 L1807.0 230.1 L1808.5 230.3 L1810.0 230.6 L1811.5 229.1 L1813.0 227.6 L1814.5 227.8 L1816.0 227.8 L1817.5 228.4 L1819.0 228.0 L1820.5 227.8 L1822.0 228.0 L1823.5 228.0 L1825.0 227.7 L1826.5 228.2 L1828.0 228.2 L1829.5 228.0 L1831.0 228.1 L1832.5 228.3 L1834.0 228.4 L1835.5 228.1 L1837.0 227.6 L1838.5 228.0 L1840.0 228.2 L1841.5 227.9 L1843.0 228.2 L1844.5 227.9 L1846.0 228.1 L1847.5 228.1 L1849.0 228.2 L1849.0 232.0 L1847.5 232.1 L1846.0 231.9 L1844.5 232.3 L1843.0 232.3 L1841.5 232.5 L1840.0 232.3 L1838.5 232.4 L1837.0 231.8 L1835.5 232.2 L1834.0 231.8 L1832.5 231.9 L1831.0 232.4 L1829.5 231.8 L1828.0 231.8 L1826.5 231.9 L1825.0 231.8 L1823.5 231.9 L1822.0 232.2 L1820.5 232.4 L1819.0 232.0 L1817.5 231.8 L1816.0 231.7 L1814.5 232.5 L1813.0 232.6 L1811.5 233.4 L1810.0 234.5 L1808.5 234.1 L1807.0 234.3 L1805.5 234.0 L1804.0 234.3 L1802.5 234.3 L1801.0 234.6 L1799.5 234.3 L1798.0 234.3 L1796.5 234.6 L1795.0 234.8 L1793.5 234.5 L1792.0 234.6 L1790.4 234.6 L1788.9 234.9 L1787.4 234.8 L1785.9 234.5 L1784.4 234.1 L1782.9 234.6 L1781.4 234.5 L1779.9 234.5 L1778.4 234.4 L1776.9 234.2 L1775.4 234.5 L1773.9 234.8 L1772.4 235.0 L1770.9 234.5 L1769.4 234.9 L1767.9 234.4 L1766.4 234.7 L1764.9 234.6 L1763.4 235.0 L1761.9 234.7 L1760.4 235.1 L1758.9 234.5 L1757.4 235.1 L1755.9 235.1 L1754.4 235.1 L1752.9 234.5 L1751.4 235.0 L1749.9 234.5 L1748.4 234.8 L1746.9 234.4 L1745.4 234.7 L1743.9 234.4 L1742.4 234.5 L1740.9 234.6 L1739.4 234.6 L1737.9 234.9 L1736.4 235.0 L1734.9 234.6 L1733.4 234.7 L1731.9 234.6 L1730.4 234.6 L1728.9 234.8 L1727.4 234.6 L1725.9 235.1 L1724.4 235.3 L1722.9 235.2 L1721.4 234.8 L1719.9 235.4 L1718.4 234.8 L1716.9 234.6 L1715.4 234.8 L1713.9 234.8 L1712.4 235.4 L1710.9 234.7 L1709.4 235.4 L1707.9 234.9 L1706.4 235.1 L1704.9 234.8 L1703.4 234.8 L1701.9 235.1 L1700.4 234.9 L1698.9 235.2 L1697.4 235.1 L1695.9 235.0 L1694.4 235.3 L1692.9 234.8 L1691.4 234.8 L1689.9 235.6 L1688.4 235.6 L1686.9 234.9 L1685.4 235.1 L1683.9 235.5 L1682.4 235.0 L1680.9 235.0 L1679.4 235.2 L1677.9 235.4 L1676.3 235.4 L1674.8 234.9 L1673.3 235.1 L1671.8 235.4 L1670.3 235.6 L1668.8 235.3 L1667.3 235.6 L1665.8 234.8 L1664.3 235.6 L1662.8 235.6 L1661.3 234.9 L1659.8 234.9 L1658.3 235.6 L1656.8 235.4 L1655.3 235.5 L1653.8 235.4 L1652.3 235.6 L1650.8 235.4 L1649.3 235.4 L1647.8 235.2 L1646.3 235.6 L1644.8 235.5 L1643.3 235.0 L1641.8 235.4 L1640.3 235.2 L1638.8 235.3 L1637.3 235.0 L1635.8 235.1 L1634.3 235.6 L1632.8 235.2 L1631.3 235.2 L1629.8 235.6 L1628.3 235.9 L1626.8 235.6 L1625.3 235.3 L1623.8 235.6 L1622.3 235.9 L1620.8 235.8 L1619.3 235.4 L1617.8 235.7 L1616.3 235.9 L1614.8 236.0 L1613.3 235.3 L1611.8 236.1 L1610.3 235.5 L1608.8 235.4 L1607.3 235.5 L1605.8 235.9 L1604.3 235.7 L1602.8 236.1 L1601.3 235.4 L1599.8 235.4 L1598.3 236.0 L1596.8 235.3 L1595.3 235.9 L1593.8 235.4 L1592.3 235.7 L1590.8 235.6 L1589.3 236.2 L1587.8 235.9 L1586.3 235.9 L1584.8 235.7 L1583.3 236.2 L1581.8 235.9 L1580.3 236.1 L1578.8 235.6 L1577.3 236.2 L1575.8 236.2 L1574.3 235.9 L1572.8 235.5 L1571.3 236.2 L1569.8 235.8 L1568.3 236.1 L1566.8 236.2 L1565.3 235.8 L1563.8 235.8 L1562.3 236.2 L1560.7 236.0 L1559.2 236.1 L1557.7 236.2 L1556.2 235.9 L1554.7 235.7 L1553.2 235.6 L1551.7 235.9 L1550.2 236.2 L1548.7 235.8 L1547.2 236.0 L1545.7 236.2 L1544.2 236.2 L1542.7 236.1 L1541.2 236.2 L1539.7 236.5 L1538.2 236.2 L1536.7 236.2 L1535.2 235.9 L1533.7 236.0 L1532.2 236.2 L1530.7 236.1 L1529.2 236.4 L1527.7 235.9 L1526.2 236.6 L1524.7 236.3 L1523.2 236.5 L1521.7 236.3 L1520.2 235.8 L1518.7 236.0 L1517.2 236.7 L1515.7 237.1 L1514.2 237.2 L1512.7 238.0 L1511.2 237.4 L1509.7 237.7 L1508.2 238.0 L1506.7 238.0 L1505.2 238.1 L1503.7 237.5 L1502.2 237.8 L1500.7 238.1 L1499.2 237.6 L1497.7 237.6 L1496.2 238.1 L1494.7 238.1 L1493.2 238.1 L1491.7 238.3 L1490.2 238.1 L1488.7 238.5 L1487.2 237.8 L1485.7 238.2 L1484.2 238.4 L1482.7 238.1 L1481.2 238.2 L1479.7 238.2 L1478.2 238.3 L1476.7 238.8 L1475.2 238.7 L1473.7 238.5 L1472.2 238.8 L1470.7 238.5 L1469.2 238.5 L1467.7 238.1 L1466.2 238.1 L1464.7 238.3 L1463.2 238.7 L1461.7 238.6 L1460.2 238.6 L1458.7 238.8 L1457.2 239.1 L1455.7 238.6 L1454.2 238.6 L1452.7 238.7 L1451.2 239.1 L1449.7 239.1 L1448.2 238.9 L1446.6 239.4 L1445.1 238.9 L1443.6 239.4 L1442.1 239.4 L1440.6 239.7 L1439.1 239.4 L1437.6 240.0 L1436.1 240.3 L1434.6 240.3 L1433.1 241.3 L1431.6 240.9 L1430.1 242.0 L1428.6 243.3 L1427.1 244.2 L1425.6 244.9 L1424.1 244.9 L1422.6 245.4 L1421.1 244.9 L1419.6 245.1 L1418.1 245.4 L1416.6 245.7 L1415.1 246.1 L1413.6 243.5 L1412.1 238.6 L1410.6 234.7 L1409.1 240.7 L1407.6 247.4 L1406.1 253.7 L1404.6 253.9 L1403.1 254.0 L1401.6 254.2 L1400.1 254.1 L1398.6 253.8 L1397.1 254.3 L1395.6 253.8 L1394.1 254.0 L1392.6 253.9 L1391.1 253.9 L1389.6 254.0 L1388.1 253.7 L1386.6 253.7 L1385.1 253.8 L1383.6 254.0 L1382.1 253.7 L1380.6 253.9 L1379.1 253.5 L1377.6 254.3 L1376.1 254.3 L1374.6 253.6 L1373.1 253.9 L1371.6 254.2 L1370.1 253.7 L1368.6 253.9 L1367.1 253.8 L1365.6 254.4 L1364.1 254.4 L1362.6 253.5 L1361.1 253.6 L1359.6 253.7 L1358.1 253.7 L1356.6 253.9 L1355.1 254.2 L1353.6 254.0 L1352.1 254.1 L1350.6 254.2 L1349.1 254.2 L1347.6 253.7 L1346.1 253.6 L1344.6 254.3 L1343.1 253.6 L1341.6 254.4 L1340.1 254.2 L1338.6 254.1 L1337.1 254.4 L1335.6 253.9 L1334.1 253.8 L1332.5 253.9 L1331.0 254.1 L1329.5 253.8 L1328.0 253.8 L1326.5 253.9 L1325.0 253.9 L1323.5 253.6 L1322.0 254.2 L1320.5 254.4 L1319.0 254.2 L1317.5 253.9 L1316.0 253.7 L1314.5 254.3 L1313.0 254.5 L1311.5 254.4 L1310.0 254.5 L1308.5 253.9 L1307.0 254.5 L1305.5 253.9 L1304.0 254.5 L1302.5 254.1 L1301.0 254.4 L1299.5 254.5 L1298.0 253.8 L1296.5 254.4 L1295.0 254.1 L1293.5 254.5 L1292.0 254.5 L1290.5 254.1 L1289.0 253.9 L1287.5 254.2 L1286.0 253.8 L1284.5 253.9 L1283.0 253.9 L1281.5 254.3 L1280.0 254.5 L1278.5 254.1 L1277.0 253.8 L1275.5 254.3 L1274.0 254.6 L1272.5 254.5 L1271.0 253.8 L1269.5 254.4 L1268.0 254.0 L1266.5 254.3 L1265.0 254.6 L1263.5 253.8 L1262.0 253.8 L1260.5 254.2 L1259.0 254.5 L1257.5 254.0 L1256.0 254.2 L1254.5 254.1 L1253.0 254.0 L1251.5 254.1 L1250.0 254.4 L1248.5 253.8 L1247.0 254.2 L1245.5 253.9 L1244.0 253.8 L1242.5 254.0 L1241.0 254.2 L1239.5 254.3 L1238.0 254.4 L1236.5 254.4 L1235.0 254.3 L1233.5 254.4 L1232.0 254.7 L1230.5 254.1 L1229.0 254.0 L1227.5 254.2 L1226.0 254.1 L1224.5 254.6 L1223.0 254.1 L1221.5 254.3 L1220.0 254.7 L1218.5 254.1 L1216.9 254.3 L1215.4 254.3 L1213.9 254.2 L1212.4 253.9 L1210.9 254.1 L1209.4 254.4 L1207.9 254.8 L1206.4 254.0 L1204.9 254.7 L1203.4 254.7 L1201.9 254.3 L1200.4 254.1 L1198.9 253.9 L1197.4 254.6 L1195.9 254.5 L1194.4 254.5 L1192.9 254.8 L1191.4 254.1 L1189.9 253.9 L1188.4 254.2 L1186.9 254.7 L1185.4 253.9 L1183.9 254.7 L1182.4 254.1 L1180.9 254.6 L1179.4 254.4 L1177.9 254.6 L1176.4 254.3 L1174.9 254.0 L1173.4 254.6 L1171.9 254.0 L1170.4 254.1 L1168.9 254.3 L1167.4 254.0 L1165.9 254.3 L1164.4 254.4 L1162.9 254.1 L1161.4 254.1 L1159.9 254.2 L1158.4 254.7 L1156.9 254.6 L1155.4 254.1 L1153.9 254.0 L1152.4 254.0 L1150.9 252.7 L1149.4 251.9 L1147.9 250.7 L1146.4 250.8 L1144.9 251.2 L1143.4 251.8 L1141.9 251.8 L1140.4 252.1 L1138.9 252.0 L1137.4 252.8 L1135.9 252.6 L1134.4 252.8 L1132.9 253.6 L1131.4 253.0 L1129.9 253.0 L1128.4 253.5 L1126.9 253.5 L1125.4 254.2 L1123.9 253.5 L1122.4 254.1 L1120.9 254.3 L1119.4 254.3 L1117.9 254.4 L1116.4 254.9 L1114.9 254.8 L1113.4 255.1 L1111.9 255.0 L1110.4 255.1 L1108.9 255.0 L1107.4 255.2 L1105.9 254.8 L1104.4 255.2 L1102.8 255.3 L1101.3 255.3 L1099.8 254.8 L1098.3 254.5 L1096.8 255.2 L1095.3 255.1 L1093.8 255.2 L1092.3 255.0 L1090.8 254.9 L1089.3 254.7 L1087.8 254.4 L1086.3 255.0 L1084.8 255.0 L1083.3 254.7 L1081.8 254.8 L1080.3 254.9 L1078.8 254.3 L1077.3 255.0 L1075.8 254.8 L1074.3 254.4 L1072.8 255.0 L1071.3 254.6 L1069.8 254.5 L1068.3 254.9 L1066.8 254.4 L1065.3 254.7 L1063.8 254.6 L1062.3 254.4 L1060.8 254.4 L1059.3 254.1 L1057.8 254.6 L1056.3 253.9 L1054.8 254.4 L1053.3 256.5 L1051.8 262.3 L1050.3 268.9 L1048.8 271.3 L1047.3 271.7 L1045.8 272.4 Z" fill="#EA6460" fill-opacity="0.2"/>
<path d="M1045.8 262.7 L1047.3 261.0 L1048.8 259.3 L1050.3 255.4 L1051.8 246.8 L1053.3 238.6 L1054.8 235.9 L1056.3 235.7 L1057.8 236.4 L1059.3 236.3 L1060.8 236.7 L1062.3 236.8 L1063.8 237.2 L1065.3 237.1 L1066.8 237.7 L1068.3 237.5 L1069.8 236.4 L1071.3 235.6 L1072.8 235.3 L1074.3 235.6 L1075.8 235.3 L1077.3 234.5 L1078.8 234.9 L1080.3 234.2 L1081.8 234.4 L1083.3 233.9 L1084.8 233.9 L1086.3 234.1 L1087.8 233.7 L1089.3 233.5 L1090.8 234.1 L1092.3 233.9 L1093.8 233.9 L1095.3 233.9 L1096.8 233.7 L1098.3 233.6 L1099.8 233.3 L1101.3 233.7 L1102.8 233.5 L1104.4 233.7 L1105.9 233.6 L1107.4 233.3 L1108.9 233.0 L1110.4 233.3 L1111.9 232.8 L1113.4 232.4 L1114.9 232.3 L1116.4 232.4 L1117.9 231.9 L1119.4 232.1 L1120.9 231.7 L1122.4 231.5 L1123.9 231.7 L1125.4 231.3 L1126.9 230.9 L1128.4 230.8 L1129.9 230.8 L1131.4 230.3 L1132.9 230.7 L1134.4 230.5 L1135.9 230.1 L1137.4 230.0 L1138.9 229.3 L1140.4 229.3 L1141.9 228.5 L1143.4 228.3 L1144.9 228.0 L1146.4 227.8 L1147.9 227.6 L1149.4 229.3 L1150.9 230.4 L1152.4 232.1 L1153.9 230.4 L1155.4 228.6 L1156.9 226.7 L1158.4 228.4 L1159.9 230.6 L1161.4 232.1 L1162.9 232.3 L1164.4 232.1 L1165.9 232.2 L1167.4 232.2 L1168.9 232.1 L1170.4 232.3 L1171.9 231.9 L1173.4 232.3 L1174.9 232.0 L1176.4 232.3 L1177.9 232.2 L1179.4 232.3 L1180.9 231.9 L1182.4 232.3 L1183.9 231.7 L1185.4 232.0 L1186.9 231.9 L1188.4 232.2 L1189.9 232.1 L1191.4 232.3 L1192.9 231.7 L1194.4 231.6 L1195.9 232.3 L1197.4 231.9 L1198.9 232.1 L1200.4 231.7 L1201.9 232.0 L1203.4 232.2 L1204.9 232.3 L1206.4 232.2 L1207.9 232.2 L1209.4 232.3 L1210.9 231.8 L1212.4 231.9 L1213.9 232.2 L1215.4 231.9 L1216.9 232.1 L1218.5 232.3 L1220.0 232.0 L1221.5 232.2 L1223.0 232.3 L1224.5 231.8 L1226.0 232.2 L1227.5 232.2 L1229.0 232.0 L1230.5 232.2 L1232.0 232.3 L1233.5 232.1 L1235.0 232.2 L1236.5 231.7 L1238.0 231.7 L1239.5 231.9 L1241.0 231.6 L1242.5 231.5 L1244.0 231.5 L1245.5 231.2 L1247.0 231.4 L1248.5 231.9 L1250.0 231.9 L1251.5 231.6 L1253.0 231.0 L1254.5 231.1 L1256.0 230.5 L1257.5 230.2 L1259.0 229.8 L1260.5 229.9 L1262.0 229.6 L1263.5 229.9 L1265.0 229.9 L1266.5 229.8 L1268.0 229.8 L1269.5 229.9 L1271.0 229.6 L1272.5 229.9 L1274.0 229.5 L1275.5 229.7 L1277.0 230.0 L1278.5 230.0 L1280.0 230.0 L1281.5 230.2 L1283.0 230.2 L1284.5 229.9 L1286.0 230.1 L1287.5 229.9 L1289.0 230.1 L1290.5 230.1 L1292.0 230.3 L1293.5 230.3 L1295.0 230.1 L1296.5 230.3 L1298.0 230.2 L1299.5 230.1 L1301.0 230.2 L1302.5 230.3 L1304.0 230.3 L1305.5 230.3 L1307.0 230.4 L1308.5 230.1 L1310.0 230.3 L1311.5 230.3 L1313.0 229.9 L1314.5 229.9 L1316.0 230.0 L1317.5 230.2 L1319.0 230.2 L1320.5 229.9 L1322.0 230.0 L1323.5 230.0 L1325.0 230.0 L1326.5 229.8 L1328.0 230.0 L1329.5 229.8 L1331.0 230.0 L1332.5 229.6 L1334.1 229.8 L1335.6 229.9 L1337.1 229.8 L1338.6 230.0 L1340.1 229.3 L1341.6 229.7 L1343.1 229.8 L1344.6 229.7 L1346.1 229.3 L1347.6 229.7 L1349.1 229.8 L1350.6 229.9 L1352.1 229.7 L1353.6 229.5 L1355.1 229.5 L1356.6 229.6 L1358.1 229.9 L1359.6 229.4 L1361.1 229.3 L1362.6 229.6 L1364.1 230.0 L1365.6 229.4 L1367.1 229.6 L1368.6 229.6 L1370.1 229.6 L1371.6 229.9 L1373.1 229.3 L1374.6 229.5 L1376.1 229.6 L1377.6 229.7 L1379.1 229.7 L1380.6 229.8 L1382.1 229.4 L1383.6 229.5 L1385.1 229.8 L1386.6 230.0 L1388.1 229.6 L1389.6 229.9 L1391.1 229.7 L1392.6 230.0 L1394.1 229.8 L1395.6 229.7 L1397.1 229.8 L1398.6 229.7 L1400.1 229.4 L1401.6 229.3 L1403.1 229.6 L1404.6 229.6 L1406.1 228.0 L1407.6 209.9 L1409.1 191.4 L1410.6 188.6 L1412.1 186.5 L1413.6 189.1 L1415.1 197.3 L1416.6 198.8 L1418.1 198.7 L1419.6 198.4 L1421.1 197.7 L1422.6 197.7 L1424.1 196.6 L1425.6 196.3 L1427.1 195.1 L1428.6 193.7 L1430.1 192.3 L1431.6 191.8 L1433.1 192.1 L1434.6 192.2 L1436.1 191.6 L1437.6 192.0 L1439.1 192.2 L1440.6 192.1 L1442.1 191.8 L1443.6 192.3 L1445.1 192.1 L1446.6 192.3 L1448.2 192.2 L1449.7 192.6 L1451.2 192.6 L1452.7 191.8 L1454.2 192.4 L1455.7 192.4 L1457.2 191.9 L1458.7 191.6 L1460.2 191.8 L1461.7 191.5 L1463.2 191.7 L1464.7 191.7 L1466.2 191.1 L1467.7 190.8 L1469.2 190.9 L1470.7 190.9 L1472.2 190.8 L1473.7 190.5 L1475.2 190.1 L1476.7 190.0 L1478.2 190.3 L1479.7 189.8 L1481.2 189.3 L1482.7 189.5 L1484.2 189.1 L1485.7 189.4 L1487.2 188.7 L1488.7 188.7 L1490.2 188.4 L1491.7 188.6 L1493.2 188.9 L1494.7 188.5 L1496.2 188.2 L1497.7 188.6 L1499.2 187.8 L1500.7 187.9 L1502.2 188.3 L1503.7 187.4 L1505.2 188.0 L1506.7 187.6 L1508.2 187.2 L1509.7 187.3 L1511.2 187.4 L1512.7 187.2 L1514.2 187.0 L1515.7 186.1 L1517.2 185.8 L1518.7 186.0 L1520.2 185.3 L1521.7 185.3 L1523.2 185.0 L1524.7 185.1 L1526.2 185.7 L1527.7 185.4 L1529.2 185.3 L1530.7 184.8 L1532.2 185.1 L1533.7 185.4 L1535.2 185.1 L1536.7 185.2 L1538.2 185.5 L1539.7 185.2 L1541.2 185.2 L1542.7 184.6 L1544.2 184.6 L1545.7 185.3 L1547.2 184.9 L1548.7 185.3 L1550.2 185.3 L1551.7 185.3 L1553.2 184.8 L1554.7 185.3 L1556.2 185.1 L1557.7 185.2 L1559.2 184.5 L1560.7 185.1 L1562.3 184.7 L1563.8 185.2 L1565.3 185.2 L1566.8 184.5 L1568.3 184.6 L1569.8 184.5 L1571.3 184.6 L1572.8 184.5 L1574.3 184.8 L1575.8 184.3 L1577.3 184.3 L1578.8 184.5 L1580.3 184.2 L1581.8 184.4 L1583.3 184.9 L1584.8 184.8 L1586.3 184.2 L1587.8 184.0 L1589.3 184.7 L1590.8 184.8 L1592.3 184.4 L1593.8 184.0 L1595.3 184.1 L1596.8 184.6 L1598.3 184.6 L1599.8 183.8 L1601.3 183.9 L1602.8 184.1 L1604.3 183.9 L1605.8 184.3 L1607.3 183.9 L1608.8 184.3 L1610.3 183.7 L1611.8 184.0 L1613.3 184.4 L1614.8 184.1 L1616.3 183.5 L1617.8 183.5 L1619.3 183.9 L1620.8 183.7 L1622.3 183.6 L1623.8 183.7 L1625.3 183.8 L1626.8 184.1 L1628.3 183.4 L1629.8 183.7 L1631.3 183.4 L1632.8 183.6 L1634.3 183.7 L1635.8 183.2 L1637.3 183.4 L1638.8 183.6 L1640.3 183.0 L1641.8 183.6 L1643.3 183.3 L1644.8 183.3 L1646.3 183.4 L1647.8 183.5 L1649.3 182.8 L1650.8 183.2 L1652.3 182.7 L1653.8 183.0 L1655.3 183.0 L1656.8 182.6 L1658.3 182.9 L1659.8 183.0 L1661.3 183.1 L1662.8 183.3 L1664.3 182.8 L1665.8 183.0 L1667.3 183.1 L1668.8 183.3 L1670.3 183.3 L1671.8 183.3 L1673.3 182.7 L1674.8 182.6 L1676.3 183.3 L1677.9 182.5 L1679.4 182.8 L1680.9 183.0 L1682.4 182.9 L1683.9 182.7 L1685.4 183.2 L1686.9 182.6 L1688.4 182.8 L1689.9 183.1 L1691.4 182.4 L1692.9 182.6 L1694.4 182.7 L1695.9 182.8 L1697.4 182.5 L1698.9 182.7 L1700.4 182.3 L1701.9 182.3 L1703.4 182.5 L1704.9 182.4 L1706.4 183.1 L1707.9 182.4 L1709.4 182.4 L1710.9 182.9 L1712.4 182.8 L1713.9 182.4 L1715.4 182.9 L1716.9 182.7 L1718.4 182.5 L1719.9 182.7 L1721.4 182.3 L1722.9 182.3 L1724.4 182.9 L1725.9 182.5 L1727.4 182.9 L1728.9 182.2 L1730.4 182.2 L1731.9 182.1 L1733.4 182.7 L1734.9 182.5 L1736.4 182.0 L1737.9 182.0 L1739.4 182.7 L1740.9 182.3 L1742.4 182.6 L1743.9 181.8 L1745.4 182.3 L1746.9 181.8 L1748.4 182.3 L1749.9 182.2 L1751.4 182.2 L1752.9 181.8 L1754.4 182.4 L1755.9 181.6 L1757.4 181.5 L1758.9 182.0 L1760.4 181.5 L1761.9 181.4 L1763.4 181.7 L1764.9 181.9 L1766.4 182.0 L1767.9 181.9 L1769.4 181.2 L1770.9 181.7 L1772.4 181.8 L1773.9 181.2 L1775.4 181.7 L1776.9 181.2 L1778.4 181.2 L1779.9 180.9 L1781.4 181.5 L1782.9 181.3 L1784.4 181.6 L1785.9 181.2 L1787.4 181.0 L1788.9 181.0 L1790.4 181.1 L1792.0 181.7 L1793.5 181.0 L1795.0 180.9 L1796.5 181.1 L1798.0 180.9 L1799.5 181.2 L1801.0 181.4 L1802.5 181.4 L1804.0 181.0 L1805.5 180.9 L1807.0 181.3 L1808.5 181.4 L1810.0 181.2 L1811.5 178.9 L1813.0 177.5 L1814.5 176.7 L1816.0 176.7 L1817.5 176.8 L1819.0 176.7 L1820.5 176.9 L1822.0 176.5 L1823.5 176.5 L1825.0 176.1 L1826.5 176.4 L1828.0 176.3 L1829.5 175.7 L1831.0 175.4 L1832.5 175.5 L1834.0 175.7 L1835.5 176.2 L1837.0 175.7 L1838.5 176.1 L1840.0 176.2 L1841.5 176.5 L1843.0 175.8 L1844.5 176.5 L1846.0 176.2 L1847.5 176.0 L1849.0 176.5 L1849.0 228.2 L1847.5 228.1 L1846.0 228.1 L1844.5 227.9 L1843.0 228.2 L1841.5 227.9 L1840.0 228.2 L1838.5 228.0 L1837.0 227.6 L1835.5 228.1 L1834.0 228.4 L1832.5 228.3 L1831.0 228.1 L1829.5 228.0 L1828.0 228.2 L1826.5 228.2 L1825.0 227.7 L1823.5 228.0 L1822.0 228.0 L1820.5 227.8 L1819.0 228.0 L1817.5 228.4 L1816.0 227.8 L1814.5 227.8 L1813.0 227.6 L1811.5 229.1 L1810.0 230.6 L1808.5 230.3 L1807.0 230.1 L1805.5 230.9 L1804.0 230.5 L1802.5 230.3 L1801.0 230.4 L1799.5 230.2 L1798.0 230.5 L1796.5 230.7 L1795.0 230.3 L1793.5 231.1 L1792.0 230.4 L1790.4 230.5 L1788.9 230.9 L1787.4 230.8 L1785.9 230.5 L1784.4 231.0 L1782.9 231.0 L1781.4 230.9 L1779.9 230.7 L1778.4 230.8 L1776.9 231.1 L1775.4 231.1 L1773.9 231.0 L1772.4 230.8 L1770.9 231.3 L1769.4 231.0 L1767.9 231.0 L1766.4 230.9 L1764.9 231.2 L1763.4 230.6 L1761.9 231.1 L1760.4 231.0 L1758.9 230.7 L1757.4 230.7 L1755.9 231.2 L1754.4 231.2 L1752.9 231.4 L1751.4 231.0 L1749.9 231.3 L1748.4 231.3 L1746.9 231.2 L1745.4 230.7 L1743.9 231.5 L1742.4 230.8 L1740.9 231.3 L1739.4 230.9 L1737.9 231.2 L1736.4 231.3 L1734.9 230.9 L1733.4 230.9 L1731.9 231.0 L1730.4 230.7 L1728.9 230.9 L1727.4 231.2 L1725.9 230.7 L1724.4 230.8 L1722.9 231.0 L1721.4 231.4 L1719.9 231.5 L1718.4 231.3 L1716.9 231.0 L1715.4 231.1 L1713.9 231.0 L1712.4 231.3 L1710.9 231.4 L1709.4 231.5 L1707.9 231.2 L1706.4 231.6 L1704.9 231.1 L1703.4 231.0 L1701.9 230.9 L1700.4 230.9 L1698.9 231.2 L1697.4 231.1 L1695.9 230.9 L1694.4 231.1 L1692.9 231.4 L1691.4 231.2 L1689.9 231.4 L1688.4 231.7 L1686.9 231.5 L1685.4 231.5 L1683.9 231.6 L1682.4 231.6 L1680.9 231.2 L1679.4 230.9 L1677.9 231.3 L1676.3 231.6 L1674.8 231.1 L1673.3 231.0 L1671.8 231.2 L1670.3 231.1 L1668.8 231.2 L1667.3 231.6 L1665.8 231.7 L1664.3 231.8 L1662.8 231.6 L1661.3 231.9 L1659.8 231.1 L1658.3 231.0 L1656.8 231.2 L1655.3 231.3 L1653.8 231.9 L1652.3 231.2 L1650.8 231.1 L1649.3 231.1 L1647.8 231.4 L1646.3 231.2 L1644.8 231.8 L1643.3 231.9 L1641.8 231.3 L1640.3 231.1 L1638.8 231.6 L1637.3 231.3 L1635.8 231.5 L1634.3 231.1 L1632.8 232.0 L1631.3 231.3 L1629.8 231.7 L1628.3 231.4 L1626.8 231.4 L1625.3 231.8 L1623.8 232.0 L1622.3 231.6 L1620.8 231.7 L1619.3 231.6 L1617.8 231.4 L1616.3 231.8 L1614.8 231.9 L1613.3 231.2 L1611.8 231.5 L1610.3 231.6 L1608.8 231.8 L1607.3 231.6 L1605.8 231.8 L1604.3 231.5 L1602.8 231.6 L1601.3 232.1 L1599.8 231.6 L1598.3 231.4 L1596.8 231.5 L1595.3 231.7 L1593.8 232.0 L1592.3 232.0 L1590.8 231.4 L1589.3 232.2 L1587.8 232.1 L1586.3 231.7 L1584.8 232.2 L1583.3 232.2 L1581.8 232.1 L1580.3 231.7 L1578.8 232.2 L1577.3 231.5 L1575.8 232.0 L1574.3 231.7 L1572.8 231.8 L1571.3 231.6 L1569.8 232.2 L1568.3 232.0 L1566.8 232.2 L1565.3 232.2 L1563.8 231.9 L1562.3 232.1 L1560.7 231.8 L1559.2 231.6 L1557.7 231.9 L1556.2 231.5 L1554.7 232.1 L1553.2 231.8 L1551.7 232.1 L1550.2 231.6 L1548.7 231.6 L1547.2 232.4 L1545.7 232.2 L1544.2 231.7 L1542.7 231.6 L1541.2 232.2 L1539.7 232.0 L1538.2 231.7 L1536.7 232.1 L1535.2 232.1 L1533.7 231.9 L1532.2 231.9 L1530.7 232.4 L1529.2 232.0 L1527.7 231.8 L1526.2 232.0 L1524.7 232.0 L1523.2 232.2 L1521.7 232.3 L1520.2 232.1 L1518.7 232.2 L1517.2 232.7 L1515.7 232.7 L1514.2 233.0 L1512.7 233.4 L1511.2 233.7 L1509.7 233.2 L1508.2 233.3 L1506.7 233.2 L1505.2 233.1 L1503.7 233.9 L1502.2 233.5 L1500.7 233.8 L1499.2 233.5 L1497.7 234.0 L1496.2 233.4 L1494.7 233.7 L1493.2 233.9 L1491.7 233.5 L1490.2 233.7 L1488.7 233.5 L1487.2 234.3 L1485.7 233.8 L1484.2 233.6 L1482.7 233.8 L1481.2 234.4 L1479.7 233.9 L1478.2 233.7 L1476.7 233.9 L1475.2 233.9 L1473.7 234.3 L1472.2 233.8 L1470.7 234.2 L1469.2 234.1 L1467.7 234.0 L1466.2 234.3 L1464.7 234.4 L1463.2 234.4 L1461.7 234.0 L1460.2 234.6 L1458.7 234.9 L1457.2 234.7 L1455.7 234.2 L1454.2 234.7 L1452.7 234.4 L1451.2 235.0 L1449.7 234.7 L1448.2 235.2 L1446.6 235.3 L1445.1 234.9 L1443.6 235.0 L1442.1 235.4 L1440.6 234.9 L1439.1 235.5 L1437.6 235.8 L1436.1 235.6 L1434.6 236.1 L1433.1 235.9 L1431.6 236.8 L1430.1 236.9 L1428.6 238.0 L1427.1 239.6 L1425.6 240.2 L1424.1 240.3 L1422.6 240.2 L1421.1 240.7 L1419.6 241.0 L1418.1 241.4 L1416.6 241.2 L1415.1 240.3 L1413.6 234.0 L1412.1 231.5 L1410.6 230.3 L1409.1 231.7 L1407.6 240.5 L1406.1 249.4 L1404.6 249.9 L1403.1 250.7 L1401.6 250.2 L1400.1 250.6 L1398.6 250.7 L1397.1 250.4 L1395.6 249.9 L1394.1 250.0 L1392.6 250.3 L1391.1 250.0 L1389.6 249.9 L1388.1 250.1 L1386.6 250.0 L1385.1 250.2 L1383.6 250.4 L1382.1 250.0 L1380.6 250.2 L1379.1 250.7 L1377.6 250.4 L1376.1 250.1 L1374.6 250.6 L1373.1 250.5 L1371.6 250.1 L1370.1 250.2 L1368.6 250.1 L1367.1 250.3 L1365.6 250.6 L1364.1 250.7 L1362.6 250.5 L1361.1 250.5 L1359.6 250.3 L1358.1 250.7 L1356.6 250.8 L1355.1 250.7 L1353.6 250.6 L1352.1 250.6 L1350.6 250.7 L1349.1 250.6 L1347.6 250.7 L1346.1 250.4 L1344.6 250.0 L1343.1 250.3 L1341.6 250.4 L1340.1 250.3 L1338.6 250.2 L1337.1 250.6 L1335.6 250.8 L1334.1 250.8 L1332.5 250.1 L1331.0 250.3 L1329.5 250.7 L1328.0 250.3 L1326.5 250.4 L1325.0 250.0 L1323.5 250.2 L1322.0 250.1 L1320.5 250.3 L1319.0 250.1 L1317.5 250.3 L1316.0 250.1 L1314.5 250.2 L1313.0 250.9 L1311.5 250.8 L1310.0 250.0 L1308.5 250.6 L1307.0 250.8 L1305.5 250.7 L1304.0 250.6 L1302.5 250.8 L1301.0 250.6 L1299.5 250.7 L1298.0 250.8 L1296.5 250.1 L1295.0 250.5 L1293.5 250.5 L1292.0 250.8 L1290.5 250.5 L1289.0 250.5 L1287.5 250.2 L1286.0 250.8 L1284.5 250.1 L1283.0 250.1 L1281.5 250.2 L1280.0 250.8 L1278.5 250.3 L1277.0 250.1 L1275.5 250.7 L1274.0 250.5 L1272.5 250.8 L1271.0 250.6 L1269.5 250.4 L1268.0 250.8 L1266.5 250.4 L1265.0 250.5 L1263.5 250.6 L1262.0 250.8 L1260.5 250.6 L1259.0 250.7 L1257.5 250.1 L1256.0 250.4 L1254.5 250.3 L1253.0 250.7 L1251.5 250.5 L1250.0 250.7 L1248.5 250.9 L1247.0 250.4 L1245.5 250.9 L1244.0 251.0 L1242.5 250.3 L1241.0 250.3 L1239.5 250.6 L1238.0 250.6 L1236.5 250.2 L1235.0 250.9 L1233.5 250.9 L1232.0 250.9 L1230.5 250.2 L1229.0 250.6 L1227.5 250.3 L1226.0 250.9 L1224.5 250.7 L1223.0 250.8 L1221.5 250.7 L1220.0 250.9 L1218.5 250.5 L1216.9 250.8 L1215.4 251.0 L1213.9 250.6 L1212.4 250.8 L1210.9 251.0 L1209.4 250.5 L1207.9 251.1 L1206.4 250.2 L1204.9 250.9 L1203.4 250.9 L1201.9 250.8 L1200.4 250.4 L1198.9 251.1 L1197.4 250.6 L1195.9 250.6 L1194.4 250.4 L1192.9 251.0 L1191.4 250.6 L1189.9 250.5 L1188.4 251.1 L1186.9 251.0 L1185.4 250.7 L1183.9 250.8 L1182.4 250.8 L1180.9 250.6 L1179.4 251.0 L1177.9 250.4 L1176.4 250.9 L1174.9 250.3 L1173.4 250.6 L1171.9 250.5 L1170.4 250.8 L1168.9 250.4 L1167.4 250.9 L1165.9 250.4 L1164.4 251.1 L1162.9 250.9 L1161.4 250.7 L1159.9 250.4 L1158.4 250.5 L1156.9 250.4 L1155.4 251.2 L1153.9 250.4 L1152.4 251.0 L1150.9 249.8 L1149.4 248.2 L1147.9 247.1 L1146.4 247.6 L1144.9 248.1 L1143.4 248.1 L1141.9 248.3 L1140.4 249.0 L1138.9 249.0 L1137.4 249.5 L1135.9 249.9 L1134.4 250.5 L1132.9 250.3 L1131.4 250.3 L1129.9 250.7 L1128.4 249.9 L1126.9 250.0 L1125.4 250.4 L1123.9 250.6 L1122.4 250.2 L1120.9 250.8 L1119.4 250.5 L1117.9 250.3 L1116.4 250.8 L1114.9 250.4 L1113.4 250.2 L1111.9 250.4 L1110.4 250.9 L1108.9 250.5 L1107.4 250.3 L1105.9 250.4 L1104.4 250.5 L1102.8 250.9 L1101.3 250.1 L1099.8 250.5 L1098.3 250.2 L1096.8 250.8 L1095.3 250.2 L1093.8 250.5 L1092.3 250.9 L1090.8 250.9 L1089.3 250.6 L1087.8 250.2 L1086.3 250.4 L1084.8 250.6 L1083.3 250.2 L1081.8 250.4 L1080.3 250.5 L1078.8 250.3 L1077.3 250.6 L1075.8 251.0 L1074.3 250.9 L1072.8 251.1 L1071.3 250.4 L1069.8 250.5 L1068.3 250.3 L1066.8 251.0 L1065.3 250.6 L1063.8 250.9 L1062.3 250.3 L1060.8 250.4 L1059.3 250.6 L1057.8 250.7 L1056.3 250.5 L1054.8 251.0 L1053.3 253.0 L1051.8 258.9 L1050.3 265.6 L1048.8 267.5 L1047.3 268.8 L1045.8 269.9 Z" fill="#1F78C1" fill-opacity="0.2"/>
<path d="M1045.8 262.7 L1047.3 261.0 L1048.8 259.3 L1050.3 255.4 L1051.8 246.8 L1053.3 238.6 L1054.8 235.1 L1056.3 235.7 L1057.8 236.4 L1059.3 236.3 L1060.8 236.7 L1062.3 236.2 L1063.8 236.9 L1065.3 237.0 L1066.8 237.7 L1068.3 237.5 L1069.8 236.2 L1071.3 235.6 L1072.8 235.2 L1074.3 235.6 L1075.8 235.3 L1077.3 234.5 L1078.8 234.9 L1080.3 234.2 L1081.8 234.4 L1083.3 233.8 L1084.8 233.5 L1086.3 234.1 L1087.8 233.5 L1089.3 233.4 L1090.8 234.1 L1092.3 233.9 L1093.8 233.4 L1095.3 233.9 L1096.8 233.5 L1098.3 233.6 L1099.8 233.1 L1101.3 233.7 L1102.8 233.5 L1104.4 233.7 L1105.9 233.6 L1107.4 233.0 L1108.9 233.0 L1110.4 232.7 L1111.9 232.5 L1113.4 232.3 L1114.9 232.3 L1116.4 232.4 L1117.9 231.7 L1119.4 232.1 L1120.9 231.7 L1122.4 231.5 L1123.9 231.7 L1125.4 231.2 L1126.9 230.9 L1128.4 230.8 L1129.9 230.8 L1131.4 230.1 L1132.9 230.7 L1134.4 229.6 L1135.9 230.1 L1137.4 230.0 L1138.9 229.0 L1140.4 229.3 L1141.9 228.5 L1143.4 228.3 L1144.9 227.4 L1146.4 227.1 L1147.9 227.1 L1149.4 229.3 L1150.9 230.1 L1152.4 232.1 L1153.9 230.4 L1155.4 228.6 L1156.9 226.2 L1158.4 228.0 L1159.9 230.6 L1161.4 232.1 L1162.9 231.5 L1164.4 232.1 L1165.9 232.2 L1167.4 232.2 L1168.9 231.5 L1170.4 232.3 L1171.9 231.5 L1173.4 231.8 L1174.9 232.0 L1176.4 232.3 L1177.9 231.8 L1179.4 232.3 L1180.9 231.9 L1182.4 231.7 L1183.9 231.7 L1185.4 231.6 L1186.9 231.5 L1188.4 231.6 L1189.9 232.1 L1191.4 232.3 L1192.9 231.6 L1194.4 231.5 L1195.9 232.3 L1197.4 231.9 L1198.9 231.8 L1200.4 231.7 L1201.9 232.0 L1203.4 232.2 L1204.9 231.9 L1206.4 231.8 L1207.9 231.5 L1209.4 232.3 L1210.9 231.5 L1212.4 231.9 L1213.9 232.2 L1215.4 231.6 L1216.9 232.1 L1218.5 232.3 L1220.0 232.0 L1221.5 232.2 L1223.0 231.5 L1224.5 231.8 L1226.0 231.6 L1227.5 232.2 L1229.0 231.7 L1230.5 231.8 L1232.0 232.3 L1233.5 232.1 L1235.0 232.2 L1236.5 231.7 L1238.0 231.7 L1239.5 231.9 L1241.0 231.6 L1242.5 231.4 L1244.0 231.5 L1245.5 231.2 L1247.0 231.4 L1248.5 231.9 L1250.0 231.9 L1251.5 231.5 L1253.0 231.0 L1254.5 230.5 L1256.0 229.9 L1257.5 229.6 L1259.0 229.8 L1260.5 229.9 L1262.0 229.5 L1263.5 229.9 L1265.0 229.9 L1266.5 229.8 L1268.0 229.8 L1269.5 229.9 L1271.0 229.6 L1272.5 229.9 L1274.0 229.5 L1275.5 229.7 L1277.0 230.0 L1278.5 229.9 L1280.0 229.6 L1281.5 230.2 L1283.0 230.0 L1284.5 229.9 L1286.0 229.4 L1287.5 229.9 L1289.0 229.7 L1290.5 230.1 L1292.0 229.9 L1293.5 230.2 L1295.0 230.1 L1296.5 230.3 L1298.0 229.9 L1299.5 230.1 L1301.0 230.2 L1302.5 230.3 L1304.0 229.8 L1305.5 230.3 L1307.0 230.3 L1308.5 230.1 L1310.0 230.3 L1311.5 230.3 L1313.0 229.9 L1314.5 229.9 L1316.0 229.5 L1317.5 230.1 L1319.0 230.2 L1320.5 229.8 L1322.0 230.0 L1323.5 230.0 L1325.0 230.0 L1326.5 229.4 L1328.0 230.0 L1329.5 229.8 L1331.0 229.8 L1332.5 229.6 L1334.1 229.8 L1335.6 229.9 L1337.1 229.8 L1338.6 229.8 L1340.1 229.2 L1341.6 229.3 L1343.1 229.5 L1344.6 229.7 L1346.1 229.3 L1347.6 229.7 L1349.1 229.7 L1350.6 229.1 L1352.1 229.5 L1353.6 229.3 L1355.1 229.1 L1356.6 229.2 L1358.1 229.4 L1359.6 229.3 L1361.1 229.3 L1362.6 229.1 L1364.1 229.5 L1365.6 229.4 L1367.1 229.6 L1368.6 229.6 L1370.1 229.3 L1371.6 229.9 L1373.1 229.1 L1374.6 229.5 L1376.1 229.3 L1377.6 229.5 L1379.1 229.2 L1380.6 229.8 L1382.1 229.4 L1383.6 229.1 L1385.1 229.6 L1386.6 229.2 L1388.1 229.6 L1389.6 229.4 L1391.1 229.6 L1392.6 230.0 L1394.1 229.8 L1395.6 229.5 L1397.1 229.8 L1398.6 229.7 L1400.1 229.4 L1401.6 229.2 L1403.1 229.6 L1404.6 229.6 L1406.1 227.9 L1407.6 197.9 L1409.1 177.6 L1410.6 167.6 L1412.1 166.7 L1413.6 170.7 L1415.1 185.8 L1416.6 190.3 L1418.1 191.3 L1419.6 191.3 L1421.1 191.2 L1422.6 190.9 L1424.1 190.0 L1425.6 189.5 L1427.1 187.3 L1428.6 184.8 L1430.1 182.7 L1431.6 181.0 L1433.1 181.3 L1434.6 181.1 L1436.1 180.6 L1437.6 180.1 L1439.1 180.6 L1440.6 180.0 L1442.1 179.7 L1443.6 179.5 L1445.1 180.0 L1446.6 179.4 L1448.2 179.1 L1449.7 179.2 L1451.2 178.8 L1452.7 179.2 L1454.2 178.9 L1455.7 178.7 L1457.2 178.9 L1458.7 178.6 L1460.2 177.5 L1461.7 177.6 L1463.2 177.0 L1464.7 177.5 L1466.2 177.2 L1467.7 176.6 L1469.2 176.6 L1470.7 176.4 L1472.2 177.0 L1473.7 176.3 L1475.2 176.5 L1476.7 176.3 L1478.2 176.3 L1479.7 176.2 L1481.2 176.2 L1482.7 175.5 L1484.2 176.0 L1485.7 175.5 L1487.2 175.6 L1488.7 175.3 L1490.2 175.2 L1491.7 175.3 L1493.2 175.2 L1494.7 175.0 L1496.2 175.3 L1497.7 175.2 L1499.2 174.6 L1500.7 174.8 L1502.2 174.9 L1503.7 175.3 L1505.2 175.3 L1506.7 174.9 L1508.2 174.4 L1509.7 175.1 L1511.2 174.7 L1512.7 174.8 L1514.2 174.2 L1515.7 172.9 L1517.2 171.6 L1518.7 171.2 L1520.2 170.7 L1521.7 170.7 L1523.2 171.1 L1524.7 170.5 L1526.2 170.6 L1527.7 171.0 L1529.2 170.3 L1530.7 171.0 L1532.2 170.8 L1533.7 170.6 L1535.2 170.4 L1536.7 170.8 L1538.2 170.9 L1539.7 170.2 L1541.2 170.5 L1542.7 170.6 L1544.2 170.5 L1545.7 170.3 L1547.2 170.1 L1548.7 170.5 L1550.2 170.7 L1551.7 170.0 L1553.2 170.1 L1554.7 170.6 L1556.2 170.6 L1557.7 170.5 L1559.2 169.9 L1560.7 170.5 L1562.3 170.7 L1563.8 170.7 L1565.3 170.4 L1566.8 169.8 L1568.3 170.5 L1569.8 169.9 L1571.3 170.3 L1572.8 170.5 L1574.3 170.3 L1575.8 169.7 L1577.3 169.9 L1578.8 170.4 L1580.3 169.7 L1581.8 170.1 L1583.3 169.9 L1584.8 169.6 L1586.3 170.0 L1587.8 169.5 L1589.3 169.5 L1590.8 169.7 L1592.3 169.4 L1593.8 169.4 L1595.3 169.8 L1596.8 169.9 L1598.3 170.0 L1599.8 169.3 L1601.3 169.5 L1602.8 169.4 L1604.3 169.6 L1605.8 169.4 L1607.3 169.8 L1608.8 169.3 L1610.3 168.9 L1611.8 169.5 L1613.3 168.9 L1614.8 169.3 L1616.3 169.2 L1617.8 169.5 L1619.3 169.1 L1620.8 169.2 L1622.3 168.8 L1623.8 169.0 L1625.3 168.7 L1626.8 169.1 L1628.3 168.9 L1629.8 168.5 L1631.3 168.5 L1632.8 168.6 L1634.3 168.9 L1635.8 168.4 L1637.3 168.8 L1638.8 168.7 L1640.3 168.2 L1641.8 168.6 L1643.3 168.1 L1644.8 168.1 L1646.3 168.5 L1647.8 168.1 L1649.3 168.6 L1650.8 168.2 L1652.3 168.0 L1653.8 168.4 L1655.3 167.7 L1656.8 168.3 L1658.3 167.6 L1659.8 167.7 L1661.3 168.4 L1662.8 168.1 L1664.3 167.7 L1665.8 167.6 L1667.3 168.4 L1668.8 168.1 L1670.3 168.2 L1671.8 167.6 L1673.3 168.1 L1674.8 167.8 L1676.3 167.7 L1677.9 167.8 L1679.4 168.0 L1680.9 167.8 L1682.4 167.8 L1683.9 167.6 L1685.4 168.2 L1686.9 168.1 L1688.4 168.2 L1689.9 167.9 L1691.4 168.3 L1692.9 168.0 L1694.4 168.0 L1695.9 168.0 L1697.4 168.2 L1698.9 167.8 L1700.4 167.6 L1701.9 167.5 L1703.4 167.7 L1704.9 167.5 L1706.4 168.3 L1707.9 167.9 L1709.4 168.2 L1710.9 167.5 L1712.4 167.9 L1713.9 168.3 L1715.4 168.0 L1716.9 167.9 L1718.4 167.9 L1719.9 167.6 L1721.4 167.6 L1722.9 167.6 L1724.4 167.8 L1725.9 167.8 L1727.4 168.3 L1728.9 167.6 L1730.4 167.7 L1731.9 167.7 L1733.4 167.6 L1734.9 167.8 L1736.4 167.7 L1737.9 167.9 L1739.4 167.4 L1740.9 168.2 L1742.4 167.6 L1743.9 168.1 L1745.4 167.8 L1746.9 167.8 L1748.4 167.6 L1749.9 168.0 L1751.4 167.2 L1752.9 167.6 L1754.4 167.3 L1755.9 167.6 L1757.4 167.6 L1758.9 167.0 L1760.4 167.0 L1761.9 166.8 L1763.4 167.0 L1764.9 166.8 L1766.4 167.1 L1767.9 167.5 L1769.4 167.0 L1770.9 166.9 L1772.4 167.0 L1773.9 166.8 L1775.4 167.1 L1776.9 167.1 L1778.4 166.6 L1779.9 166.6 L1781.4 166.9 L1782.9 167.1 L1784.4 166.8 L1785.9 166.6 L1787.4 167.0 L1788.9 166.1 L1790.4 166.1 L1792.0 166.7 L1793.5 166.4 L1795.0 166.0 L1796.5 166.4 L1798.0 166.8 L1799.5 166.3 L1801.0 166.1 L1802.5 165.8 L1804.0 165.8 L1805.5 166.5 L1807.0 166.1 L1808.5 166.4 L1810.0 165.6 L1811.5 161.9 L1813.0 159.0 L1814.5 159.2 L1816.0 158.8 L1817.5 158.9 L1819.0 159.0 L1820.5 158.8 L1822.0 158.5 L1823.5 158.4 L1825.0 159.1 L1826.5 158.3 L1828.0 158.5 L1829.5 158.3 L1831.0 158.3 L1832.5 157.9 L1834.0 158.1 L1835.5 158.0 L1837.0 158.4 L1838.5 158.8 L1840.0 158.6 L1841.5 158.8 L1843.0 158.3 L1844.5 158.2 L1846.0 158.7 L1847.5 158.7 L1849.0 158.8 L1849.0 176.5 L1847.5 176.0 L1846.0 176.2 L1844.5 176.5 L1843.0 175.8 L1841.5 176.5 L1840.0 176.2 L1838.5 176.1 L1837.0 175.7 L1835.5 176.2 L1834.0 175.7 L1832.5 175.5 L1831.0 175.4 L1829.5 175.7 L1828.0 176.3 L1826.5 176.4 L1825.0 176.1 L1823.5 176.5 L1822.0 176.5 L1820.5 176.9 L1819.0 176.7 L1817.5 176.8 L1816.0 176.7 L1814.5 176.7 L1813.0 177.5 L1811.5 178.9 L1810.0 181.2 L1808.5 181.4 L1807.0 181.3 L1805.5 180.9 L1804.0 181.0 L1802.5 181.4 L1801.0 181.4 L1799.5 181.2 L1798.0 180.9 L1796.5 181.1 L1795.0 180.9 L1793.5 181.0 L1792.0 181.7 L1790.4 181.1 L1788.9 181.0 L1787.4 181.0 L1785.9 181.2 L1784.4 181.6 L1782.9 181.3 L1781.4 181.5 L1779.9 180.9 L1778.4 181.2 L1776.9 181.2 L1775.4 181.7 L1773.9 181.2 L1772.4 181.8 L1770.9 181.7 L1769.4 181.2 L1767.9 181.9 L1766.4 182.0 L1764.9 181.9 L1763.4 181.7 L1761.9 181.4 L1760.4 181.5 L1758.9 182.0 L1757.4 181.5 L1755.9 181.6 L1754.4 182.4 L1752.9 181.8 L1751.4 182.2 L1749.9 182.2 L1748.4 182.3 L1746.9 181.8 L1745.4 182.3 L1743.9 181.8 L1742.4 182.6 L1740.9 182.3 L1739.4 182.7 L1737.9 182.0 L1736.4 182.0 L1734.9 182.5 L1733.4 182.7 L1731.9 182.1 L1730.4 182.2 L1728.9 182.2 L1727.4 182.9 L1725.9 182.5 L1724.4 182.9 L1722.9 182.3 L1721.4 182.3 L1719.9 182.7 L1718.4 182.5 L1716.9 182.7 L1715.4 182.9 L1713.9 182.4 L1712.4 182.8 L1710.9 182.9 L1709.4 182.4 L1707.9 182.4 L1706.4 183.1 L1704.9 182.4 L1703.4 182.5 L1701.9 182.3 L1700.4 182.3 L1698.9 182.7 L1697.4 182.5 L1695.9 182.8 L1694.4 182.7 L1692.9 182.6 L1691.4 182.4 L1689.9 183.1 L1688.4 182.8 L1686.9 182.6 L1685.4 183.2 L1683.9 182.7 L1682.4 182.9 L1680.9 183.0 L1679.4 182.8 L1677.9 182.5 L1676.3 183.3 L1674.8 182.6 L1673.3 182.7 L1671.8 183.3 L1670.3 183.3 L1668.8 183.3 L1667.3 183.1 L1665.8 183.0 L1664.3 182.8 L1662.8 183.3 L1661.3 183.1 L1659.8 183.0 L1658.3 182.9 L1656.8 182.6 L1655.3 183.0 L1653.8 183.0 L1652.3 182.7 L1650.8 183.2 L1649.3 182.8 L1647.8 183.5 L1646.3 183.4 L1644.8 183.3 L1643.3 183.3 L1641.8 183.6 L1640.3 183.0 L1638.8 183.6 L1637.3 183.4 L1635.8 183.2 L1634.3 183.7 L1632.8 183.6 L1631.3 183.4 L1629.8 183.7 L1628.3 183.4 L1626.8 184.1 L1625.3 183.8 L1623.8 183.7 L1622.3 183.6 L1620.8 183.7 L1619.3 183.9 L1617.8 183.5 L1616.3 183.5 L1614.8 184.1 L1613.3 184.4 L1611.8 184.0 L1610.3 183.7 L1608.8 184.3 L1607.3 183.9 L1605.8 184.3 L1604.3 183.9 L1602.8 184.1 L1601.3 183.9 L1599.8 183.8 L1598.3 184.6 L1596.8 184.6 L1595.3 184.1 L1593.8 184.0 L1592.3 184.4 L1590.8 184.8 L1589.3 184.7 L1587.8 184.0 L1586.3 184.2 L1584.8 184.8 L1583.3 184.9 L1581.8 184.4 L1580.3 184.2 L1578.8 184.5 L1577.3 184.3 L1575.8 184.3 L1574.3 184.8 L1572.8 184.5 L1571.3 184.6 L1569.8 184.5 L1568.3 184.6 L1566.8 184.5 L1565.3 185.2 L1563.8 185.2 L1562.3 184.7 L1560.7 185.1 L1559.2 184.5 L1557.7 185.2 L1556.2 185.1 L1554.7 185.3 L1553.2 184.8 L1551.7 185.3 L1550.2 185.3 L1548.7 185.3 L1547.2 184.9 L1545.7 185.3 L1544.2 184.6 L1542.7 184.6 L1541.2 185.2 L1539.7 185.2 L1538.2 185.5 L1536.7 185.2 L1535.2 185.1 L1533.7 185.4 L1532.2 185.1 L1530.7 184.8 L1529.2 185.3 L1527.7 185.4 L1526.2 185.7 L1524.7 185.1 L1523.2 185.0 L1521.7 185.3 L1520.2 185.3 L1518.7 186.0 L1517.2 185.8 L1515.7 186.1 L1514.2 187.0 L1512.7 187.2 L1511.2 187.4 L1509.7 187.3 L1508.2 187.2 L1506.7 187.6 L1505.2 188.0 L1503.7 187.4 L1502.2 188.3 L1500.7 187.9 L1499.2 187.8 L1497.7 188.6 L1496.2 188.2 L1494.7 188.5 L1493.2 188.9 L1491.7 188.6 L1490.2 188.4 L1488.7 188.7 L1487.2 188.7 L1485.7 189.4 L1484.2 189.1 L1482.7 189.5 L1481.2 189.3 L1479.7 189.8 L1478.2 190.3 L1476.7 190.0 L1475.2 190.1 L1473.7 190.5 L1472.2 190.8 L1470.7 190.9 L1469.2 190.9 L1467.7 190.8 L1466.2 191.1 L1464.7 191.7 L1463.2 191.7 L1461.7 191.5 L1460.2 191.8 L1458.7 191.6 L1457.2 191.9 L1455.7 192.4 L1454.2 192.4 L1452.7 191.8 L1451.2 192.6 L1449.7 192.6 L1448.2 192.2 L1446.6 192.3 L1445.1 192.1 L1443.6 192.3 L1442.1 191.8 L1440.6 192.1 L1439.1 192.2 L1437.6 192.0 L1436.1 191.6 L1434.6 192.2 L1433.1 192.1 L1431.6 191.8 L1430.1 192.3 L1428.6 193.7 L1427.1 195.1 L1425.6 196.3 L1424.1 196.6 L1422.6 197.7 L1421.1 197.7 L1419.6 198.4 L1418.1 198.7 L1416.6 198.8 L1415.1 197.3 L1413.6 189.1 L1412.1 186.5 L1410.6 188.6 L1409.1 191.4 L1407.6 209.9 L1406.1 228.0 L1404.6 229.6 L1403.1 229.6 L1401.6 229.3 L1400.1 229.4 L1398.6 229.7 L1397.1 229.8 L1395.6 229.7 L1394.1 229.8 L1392.6 230.0 L1391.1 229.7 L1389.6 229.9 L1388.1 229.6 L1386.6 230.0 L1385.1 229.8 L1383.6 229.5 L1382.1 229.4 L1380.6 229.8 L1379.1 229.7 L1377.6 229.7 L1376.1 229.6 L1374.6 229.5 L1373.1 229.3 L1371.6 229.9 L1370.1 229.6 L1368.6 229.6 L1367.1 229.6 L1365.6 229.4 L1364.1 230.0 L1362.6 229.6 L1361.1 229.3 L1359.6 229.4 L1358.1 229.9 L1356.6 229.6 L1355.1 229.5 L1353.6 229.5 L1352.1 229.7 L1350.6 229.9 L1349.1 229.8 L1347.6 229.7 L1346.1 229.3 L1344.6 229.7 L1343.1 229.8 L1341.6 229.7 L1340.1 229.3 L1338.6 230.0 L1337.1 229.8 L1335.6 229.9 L1334.1 229.8 L1332.5 229.6 L1331.0 230.0 L1329.5 229.8 L1328.0 230.0 L1326.5 229.8 L1325.0 230.0 L1323.5 230.0 L1322.0 230.0 L1320.5 229.9 L1319.0 230.2 L1317.5 230.2 L1316.0 230.0 L1314.5 229.9 L1313.0 229.9 L1311.5 230.3 L1310.0 230.3 L1308.5 230.1 L1307.0 230.4 L1305.5 230.3 L1304.0 230.3 L1302.5 230.3 L1301.0 230.2 L1299.5 230.1 L1298.0 230.2 L1296.5 230.3 L1295.0 230.1 L1293.5 230.3 L1292.0 230.3 L1290.5 230.1 L1289.0 230.1 L1287.5 229.9 L1286.0 230.1 L1284.5 229.9 L1283.0 230.2 L1281.5 230.2 L1280.0 230.0 L1278.5 230.0 L1277.0 230.0 L1275.5 229.7 L1274.0 229.5 L1272.5 229.9 L1271.0 229.6 L1269.5 229.9 L1268.0 229.8 L1266.5 229.8 L1265.0 229.9 L1263.5 229.9 L1262.0 229.6 L1260.5 229.9 L1259.0 229.8 L1257.5 230.2 L1256.0 230.5 L1254.5 231.1 L1253.0 231.0 L1251.5 231.6 L1250.0 231.9 L1248.5 231.9 L1247.0 231.4 L1245.5 231.2 L1244.0 231.5 L1242.5 231.5 L1241.0 231.6 L1239.5 231.9 L1238.0 231.7 L1236.5 231.7 L1235.0 232.2 L1233.5 232.1 L1232.0 232.3 L1230.5 232.2 L1229.0 232.0 L1227.5 232.2 L1226.0 232.2 L1224.5 231.8 L1223.0 232.3 L1221.5 232.2 L1220.0 232.0 L1218.5 232.3 L1216.9 232.1 L1215.4 231.9 L1213.9 232.2 L1212.4 231.9 L1210.9 231.8 L1209.4 232.3 L1207.9 232.2 L1206.4 232.2 L1204.9 232.3 L1203.4 232.2 L1201.9 232.0 L1200.4 231.7 L1198.9 232.1 L1197.4 231.9 L1195.9 232.3 L1194.4 231.6 L1192.9 231.7 L1191.4 232.3 L1189.9 232.1 L1188.4 232.2 L1186.9 231.9 L1185.4 232.0 L1183.9 231.7 L1182.4 232.3 L1180.9 231.9 L1179.4 232.3 L1177.9 232.2 L1176.4 232.3 L1174.9 232.0 L1173.4 232.3 L1171.9 231.9 L1170.4 232.3 L1168.9 232.1 L1167.4 232.2 L1165.9 232.2 L1164.4 232.1 L1162.9 232.3 L1161.4 232.1 L1159.9 230.6 L1158.4 228.4 L1156.9 226.7 L1155.4 228.6 L1153.9 230.4 L1152.4 232.1 L1150.9 230.4 L1149.4 229.3 L1147.9 227.6 L1146.4 227.8 L1144.9 228.0 L1143.4 228.3 L1141.9 228.5 L1140.4 229.3 L1138.9 229.3 L1137.4 230.0 L1135.9 230.1 L1134.4 230.5 L1132.9 230.7 L1131.4 230.3 L1129.9 230.8 L1128.4 230.8 L1126.9 230.9 L1125.4 231.3 L1123.9 231.7 L1122.4 231.5 L1120.9 231.7 L1119.4 232.1 L1117.9 231.9 L1116.4 232.4 L1114.9 232.3 L1113.4 232.4 L1111.9 232.8 L1110.4 233.3 L1108.9 233.0 L1107.4 233.3 L1105.9 233.6 L1104.4 233.7 L1102.8 233.5 L1101.3 233.7 L1099.8 233.3 L1098.3 233.6 L1096.8 233.7 L1095.3 233.9 L1093.8 233.9 L1092.3 233.9 L1090.8 234.1 L1089.3 233.5 L1087.8 233.7 L1086.3 234.1 L1084.8 233.9 L1083.3 233.9 L1081.8 234.4 L1080.3 234.2 L1078.8 234.9 L1077.3 234.5 L1075.8 235.3 L1074.3 235.6 L1072.8 235.3 L1071.3 235.6 L1069.8 236.4 L1068.3 237.5 L1066.8 237.7 L1065.3 237.1 L1063.8 237.2 L1062.3 236.8 L1060.8 236.7 L1059.3 236.3 L1057.8 236.4 L1056.3 235.7 L1054.8 235.9 L1053.3 238.6 L1051.8 246.8 L1050.3 255.4 L1048.8 259.3 L1047.3 261.0 L1045.8 262.7 Z" fill="#2f2a3b"/>
<path d="M1045.8 272.4 L1047.3 271.7 L1048.8 271.3 L1050.3 268.9 L1051.8 262.3 L1053.3 256.5 L1054.8 254.4 L1056.3 253.9 L1057.8 254.6 L1059.3 254.1 L1060.8 254.4 L1062.3 254.4 L1063.8 254.6 L1065.3 254.7 L1066.8 254.4 L1068.3 254.9 L1069.8 254.5 L1071.3 254.6 L1072.8 255.0 L1074.3 254.4 L1075.8 254.8 L1077.3 255.0 L1078.8 254.3 L1080.3 254.9 L1081.8 254.8 L1083.3 254.7 L1084.8 255.0 L1086.3 255.0 L1087.8 254.4 L1089.3 254.7 L1090.8 254.9 L1092.3 255.0 L1093.8 255.2 L1095.3 255.1 L1096.8 255.2 L1098.3 254.5 L1099.8 254.8 L1101.3 255.3 L1102.8 255.3 L1104.4 255.2 L1105.9 254.8 L1107.4 255.2 L1108.9 255.0 L1110.4 255.1 L1111.9 255.0 L1113.4 255.1 L1114.9 254.8 L1116.4 254.9 L1117.9 254.4 L1119.4 254.3 L1120.9 254.3 L1122.4 254.1 L1123.9 253.5 L1125.4 254.2 L1126.9 253.5 L1128.4 253.5 L1129.9 253.0 L1131.4 253.0 L1132.9 253.6 L1134.4 252.8 L1135.9 252.6 L1137.4 252.8 L1138.9 252.0 L1140.4 252.1 L1141.9 251.8 L1143.4 251.8 L1144.9 251.2 L1146.4 250.8 L1147.9 250.7 L1149.4 251.9 L1150.9 252.7 L1152.4 254.0 L1153.9 254.0 L1155.4 254.1 L1156.9 254.6 L1158.4 254.7 L1159.9 254.2 L1161.4 254.1 L1162.9 254.1 L1164.4 254.4 L1165.9 254.3 L1167.4 254.0 L1168.9 254.3 L1170.4 254.1 L1171.9 254.0 L1173.4 254.6 L1174.9 254.0 L1176.4 254.3 L1177.9 254.6 L1179.4 254.4 L1180.9 254.6 L1182.4 254.1 L1183.9 254.7 L1185.4 253.9 L1186.9 254.7 L1188.4 254.2 L1189.9 253.9 L1191.4 254.1 L1192.9 254.8 L1194.4 254.5 L1195.9 254.5 L1197.4 254.6 L1198.9 253.9 L1200.4 254.1 L1201.9 254.3 L1203.4 254.7 L1204.9 254.7 L1206.4 254.0 L1207.9 254.8 L1209.4 254.4 L1210.9 254.1 L1212.4 253.9 L1213.9 254.2 L1215.4 254.3 L1216.9 254.3 L1218.5 254.1 L1220.0 254.7 L1221.5 254.3 L1223.0 254.1 L1224.5 254.6 L1226.0 254.1 L1227.5 254.2 L1229.0 254.0 L1230.5 254.1 L1232.0 254.7 L1233.5 254.4 L1235.0 254.3 L1236.5 254.4 L1238.0 254.4 L1239.5 254.3 L1241.0 254.2 L1242.5 254.0 L1244.0 253.8 L1245.5 253.9 L1247.0 254.2 L1248.5 253.8 L1250.0 254.4 L1251.5 254.1 L1253.0 254.0 L1254.5 254.1 L1256.0 254.2 L1257.5 254.0 L1259.0 254.5 L1260.5 254.2 L1262.0 253.8 L1263.5 253.8 L1265.0 254.6 L1266.5 254.3 L1268.0 254.0 L1269.5 254.4 L1271.0 253.8 L1272.5 254.5 L1274.0 254.6 L1275.5 254.3 L1277.0 253.8 L1278.5 254.1 L1280.0 254.5 L1281.5 254.3 L1283.0 253.9 L1284.5 253.9 L1286.0 253.8 L1287.5 254.2 L1289.0 253.9 L1290.5 254.1 L1292.0 254.5 L1293.5 254.5 L1295.0 254.1 L1296.5 254.4 L1298.0 253.8 L1299.5 254.5 L1301.0 254.4 L1302.5 254.1 L1304.0 254.5 L1305.5 253.9 L1307.0 254.5 L1308.5 253.9 L1310.0 254.5 L1311.5 254.4 L1313.0 254.5 L1314.5 254.3 L1316.0 253.7 L1317.5 253.9 L1319.0 254.2 L1320.5 254.4 L1322.0 254.2 L1323.5 253.6 L1325.0 253.9 L1326.5 253.9 L1328.0 253.8 L1329.5 253.8 L1331.0 254.1 L1332.5 253.9 L1334.1 253.8 L1335.6 253.9 L1337.1 254.4 L1338.6 254.1 L1340.1 254.2 L1341.6 254.4 L1343.1 253.6 L1344.6 254.3 L1346.1 253.6 L1347.6 253.7 L1349.1 254.2 L1350.6 254.2 L1352.1 254.1 L1353.6 254.0 L1355.1 254.2 L1356.6 253.9 L1358.1 253.7 L1359.6 253.7 L1361.1 253.6 L1362.6 253.5 L1364.1 254.4 L1365.6 254.4 L1367.1 253.8 L1368.6 253.9 L1370.1 253.7 L1371.6 254.2 L1373.1 253.9 L1374.6 253.6 L1376.1 254.3 L1377.6 254.3 L1379.1 253.5 L1380.6 253.9 L1382.1 253.7 L1383.6 254.0 L1385.1 253.8 L1386.6 253.7 L1388.1 253.7 L1389.6 254.0 L1391.1 253.9 L1392.6 253.9 L1394.1 254.0 L1395.6 253.8 L1397.1 254.3 L1398.6 253.8 L1400.1 254.1 L1401.6 254.2 L1403.1 254.0 L1404.6 253.9 L1406.1 253.7 L1407.6 247.4 L1409.1 240.7 L1410.6 234.7 L1412.1 238.6 L1413.6 243.5 L1415.1 246.1 L1416.6 245.7 L1418.1 245.4 L1419.6 245.1 L1421.1 244.9 L1422.6 245.4 L1424.1 244.9 L1425.6 244.9 L1427.1 244.2 L1428.6 243.3 L1430.1 242.0 L1431.6 240.9 L1433.1 241.3 L1434.6 240.3 L1436.1 240.3 L1437.6 240.0 L1439.1 239.4 L1440.6 239.7 L1442.1 239.4 L1443.6 239.4 L1445.1 238.9 L1446.6 239.4 L1448.2 238.9 L1449.7 239.1 L1451.2 239.1 L1452.7 238.7 L1454.2 238.6 L1455.7 238.6 L1457.2 239.1 L1458.7 238.8 L1460.2 238.6 L1461.7 238.6 L1463.2 238.7 L1464.7 238.3 L1466.2 238.1 L1467.7 238.1 L1469.2 238.5 L1470.7 238.5 L1472.2 238.8 L1473.7 238.5 L1475.2 238.7 L1476.7 238.8 L1478.2 238.3 L1479.7 238.2 L1481.2 238.2 L1482.7 238.1 L1484.2 238.4 L1485.7 238.2 L1487.2 237.8 L1488.7 238.5 L1490.2 238.1 L1491.7 238.3 L1493.2 238.1 L1494.7 238.1 L1496.2 238.1 L1497.7 237.6 L1499.2 237.6 L1500.7 238.1 L1502.2 237.8 L1503.7 237.5 L1505.2 238.1 L1506.7 238.0 L1508.2 238.0 L1509.7 237.7 L1511.2 237.4 L1512.7 238.0 L1514.2 237.2 L1515.7 237.1 L1517.2 236.7 L1518.7 236.0 L1520.2 235.8 L1521.7 236.3 L1523.2 236.5 L1524.7 236.3 L1526.2 236.6 L1527.7 235.9 L1529.2 236.4 L1530.7 236.1 L1532.2 236.2 L1533.7 236.0 L1535.2 235.9 L1536.7 236.2 L1538.2 236.2 L1539.7 236.5 L1541.2 236.2 L1542.7 236.1 L1544.2 236.2 L1545.7 236.2 L1547.2 236.0 L1548.7 235.8 L1550.2 236.2 L1551.7 235.9 L1553.2 235.6 L1554.7 235.7 L1556.2 235.9 L1557.7 236.2 L1559.2 236.1 L1560.7 236.0 L1562.3 236.2 L1563.8 235.8 L1565.3 235.8 L1566.8 236.2 L1568.3 236.1 L1569.8 235.8 L1571.3 236.2 L1572.8 235.5 L1574.3 235.9 L1575.8 236.2 L1577.3 236.2 L1578.8 235.6 L1580.3 236.1 L1581.8 235.9 L1583.3 236.2 L1584.8 235.7 L1586.3 235.9 L1587.8 235.9 L1589.3 236.2 L1590.8 235.6 L1592.3 235.7 L1593.8 235.4 L1595.3 235.9 L1596.8 235.3 L1598.3 236.0 L1599.8 235.4 L1601.3 235.4 L1602.8 236.1 L1604.3 235.7 L1605.8 235.9 L1607.3 235.5 L1608.8 235.4 L1610.3 235.5 L1611.8 236.1 L1613.3 235.3 L1614.8 236.0 L1616.3 235.9 L1617.8 235.7 L1619.3 235.4 L1620.8 235.8 L1622.3 235.9 L1623.8 235.6 L1625.3 235.3 L1626.8 235.6 L1628.3 235.9 L1629.8 235.6 L1631.3 235.2 L1632.8 235.2 L1634.3 235.6 L1635.8 235.1 L1637.3 235.0 L1638.8 235.3 L1640.3 235.2 L1641.8 235.4 L1643.3 235.0 L1644.8 235.5 L1646.3 235.6 L1647.8 235.2 L1649.3 235.4 L1650.8 235.4 L1652.3 235.6 L1653.8 235.4 L1655.3 235.5 L1656.8 235.4 L1658.3 235.6 L1659.8 234.9 L1661.3 234.9 L1662.8 235.6 L1664.3 235.6 L1665.8 234.8 L1667.3 235.6 L1668.8 235.3 L1670.3 235.6 L1671.8 235.4 L1673.3 235.1 L1674.8 234.9 L1676.3 235.4 L1677.9 235.4 L1679.4 235.2 L1680.9 235.0 L1682.4 235.0 L1683.9 235.5 L1685.4 235.1 L1686.9 234.9 L1688.4 235.6 L1689.9 235.6 L1691.4 234.8 L1692.9 234.8 L1694.4 235.3 L1695.9 235.0 L1697.4 235.1 L1698.9 235.2 L1700.4 234.9 L1701.9 235.1 L1703.4 234.8 L1704.9 234.8 L1706.4 235.1 L1707.9 234.9 L1709.4 235.4 L1710.9 234.7 L1712.4 235.4 L1713.9 234.8 L1715.4 234.8 L1716.9 234.6 L1718.4 234.8 L1719.9 235.4 L1721.4 234.8 L1722.9 235.2 L1724.4 235.3 L1725.9 235.1 L1727.4 234.6 L1728.9 234.8 L1730.4 234.6 L1731.9 234.6 L1733.4 234.7 L1734.9 234.6 L1736.4 235.0 L1737.9 234.9 L1739.4 234.6 L1740.9 234.6 L1742.4 234.5 L1743.9 234.4 L1745.4 234.7 L1746.9 234.4 L1748.4 234.8 L1749.9 234.5 L1751.4 235.0 L1752.9 234.5 L1754.4 235.1 L1755.9 235.1 L1757.4 235.1 L1758.9 234.5 L1760.4 235.1 L1761.9 234.7 L1763.4 235.0 L1764.9 234.6 L1766.4 234.7 L1767.9 234.4 L1769.4 234.9 L1770.9 234.5 L1772.4 235.0 L1773.9 234.8 L1775.4 234.5 L1776.9 234.2 L1778.4 234.4 L1779.9 234.5 L1781.4 234.5 L1782.9 234.6 L1784.4 234.1 L1785.9 234.5 L1787.4 234.8 L1788.9 234.9 L1790.4 234.6 L1792.0 234.6 L1793.5 234.5 L1795.0 234.8 L1796.5 234.6 L1798.0 234.3 L1799.5 234.3 L1801.0 234.6 L1802.5 234.3 L1804.0 234.3 L1805.5 234.0 L1807.0 234.3 L1808.5 234.1 L1810.0 234.5 L1811.5 233.4 L1813.0 232.6 L1814.5 232.5 L1816.0 231.7 L1817.5 231.8 L1819.0 232.0 L1820.5 232.4 L1822.0 232.2 L1823.5 231.9 L1825.0 231.8 L1826.5 231.9 L1828.0 231.8 L1829.5 231.8 L1831.0 232.4 L1832.5 231.9 L1834.0 231.8 L1835.5 232.2 L1837.0 231.8 L1838.5 232.4 L1840.0 232.3 L1841.5 232.5 L1843.0 232.3 L1844.5 232.3 L1846.0 231.9 L1847.5 232.1 L1849.0 232.0" fill="none" stroke="#9AC48A" stroke-width="2"/>
<path d="M1045.8 269.9 L1047.3 268.8 L1048.8 267.5 L1050.3 265.6 L1051.8 258.9 L1053.3 253.0 L1054.8 251.0 L1056.3 250.5 L1057.8 250.7 L1059.3 250.6 L1060.8 250.4 L1062.3 250.3 L1063.8 250.9 L1065.3 250.6 L1066.8 251.0 L1068.3 250.3 L1069.8 250.5 L1071.3 250.4 L1072.8 251.1 L1074.3 250.9 L1075.8 251.0 L1077.3 250.6 L1078.8 250.3 L1080.3 250.5 L1081.8 250.4 L1083.3 250.2 L1084.8 250.6 L1086.3 250.4 L1087.8 250.2 L1089.3 250.6 L1090.8 250.9 L1092.3 250.9 L1093.8 250.5 L1095.3 250.2 L1096.8 250.8 L1098.3 250.2 L1099.8 250.5 L1101.3 250.1 L1102.8 250.9 L1104.4 250.5 L1105.9 250.4 L1107.4 250.3 L1108.9 250.5 L1110.4 250.9 L1111.9 250.4 L1113.4 250.2 L1114.9 250.4 L1116.4 250.8 L1117.9 250.3 L1119.4 250.5 L1120.9 250.8 L1122.4 250.2 L1123.9 250.6 L1125.4 250.4 L1126.9 250.0 L1128.4 249.9 L1129.9 250.7 L1131.4 250.3 L1132.9 250.3 L1134.4 250.5 L1135.9 249.9 L1137.4 249.5 L1138.9 249.0 L1140.4 249.0 L1141.9 248.3 L1143.4 248.1 L1144.9 248.1 L1146.4 247.6 L1147.9 247.1 L1149.4 248.2 L1150.9 249.8 L1152.4 251.0 L1153.9 250.4 L1155.4 251.2 L1156.9 250.4 L1158.4 250.5 L1159.9 250.4 L1161.4 250.7 L1162.9 250.9 L1164.4 251.1 L1165.9 250.4 L1167.4 250.9 L1168.9 250.4 L1170.4 250.8 L1171.9 250.5 L1173.4 250.6 L1174.9 250.3 L1176.4 250.9 L1177.9 250.4 L1179.4 251.0 L1180.9 250.6 L1182.4 250.8 L1183.9 250.8 L1185.4 250.7 L1186.9 251.0 L1188.4 251.1 L1189.9 250.5 L1191.4 250.6 L1192.9 251.0 L1194.4 250.4 L1195.9 250.6 L1197.4 250.6 L1198.9 251.1 L1200.4 250.4 L1201.9 250.8 L1203.4 250.9 L1204.9 250.9 L1206.4 250.2 L1207.9 251.1 L1209.4 250.5 L1210.9 251.0 L1212.4 250.8 L1213.9 250.6 L1215.4 251.0 L1216.9 250.8 L1218.5 250.5 L1220.0 250.9 L1221.5 250.7 L1223.0 250.8 L1224.5 250.7 L1226.0 250.9 L1227.5 250.3 L1229.0 250.6 L1230.5 250.2 L1232.0 250.9 L1233.5 250.9 L1235.0 250.9 L1236.5 250.2 L1238.0 250.6 L1239.5 250.6 L1241.0 250.3 L1242.5 250.3 L1244.0 251.0 L1245.5 250.9 L1247.0 250.4 L1248.5 250.9 L1250.0 250.7 L1251.5 250.5 L1253.0 250.7 L1254.5 250.3 L1256.0 250.4 L1257.5 250.1 L1259.0 250.7 L1260.5 250.6 L1262.0 250.8 L1263.5 250.6 L1265.0 250.5 L1266.5 250.4 L1268.0 250.8 L1269.5 250.4 L1271.0 250.6 L1272.5 250.8 L1274.0 250.5 L1275.5 250.7 L1277.0 250.1 L1278.5 250.3 L1280.0 250.8 L1281.5 250.2 L1283.0 250.1 L1284.5 250.1 L1286.0 250.8 L1287.5 250.2 L1289.0 250.5 L1290.5 250.5 L1292.0 250.8 L1293.5 250.5 L1295.0 250.5 L1296.5 250.1 L1298.0 250.8 L1299.5 250.7 L1301.0 250.6 L1302.5 250.8 L1304.0 250.6 L1305.5 250.7 L1307.0 250.8 L1308.5 250.6 L1310.0 250.0 L1311.5 250.8 L1313.0 250.9 L1314.5 250.2 L1316.0 250.1 L1317.5 250.3 L1319.0 250.1 L1320.5 250.3 L1322.0 250.1 L1323.5 250.2 L1325.0 250.0 L1326.5 250.4 L1328.0 250.3 L1329.5 250.7 L1331.0 250.3 L1332.5 250.1 L1334.1 250.8 L1335.6 250.8 L1337.1 250.6 L1338.6 250.2 L1340.1 250.3 L1341.6 250.4 L1343.1 250.3 L1344.6 250.0 L1346.1 250.4 L1347.6 250.7 L1349.1 250.6 L1350.6 250.7 L1352.1 250.6 L1353.6 250.6 L1355.1 250.7 L1356.6 250.8 L1358.1 250.7 L1359.6 250.3 L1361.1 250.5 L1362.6 250.5 L1364.1 250.7 L1365.6 250.6 L1367.1 250.3 L1368.6 250.1 L1370.1 250.2 L1371.6 250.1 L1373.1 250.5 L1374.6 250.6 L1376.1 250.1 L1377.6 250.4 L1379.1 250.7 L1380.6 250.2 L1382.1 250.0 L1383.6 250.4 L1385.1 250.2 L1386.6 250.0 L1388.1 250.1 L1389.6 249.9 L1391.1 250.0 L1392.6 250.3 L1394.1 250.0 L1395.6 249.9 L1397.1 250.4 L1398.6 250.7 L1400.1 250.6 L1401.6 250.2 L1403.1 250.7 L1404.6 249.9 L1406.1 249.4 L1407.6 240.5 L1409.1 231.7 L1410.6 230.3 L1412.1 231.5 L1413.6 234.0 L1415.1 240.3 L1416.6 241.2 L1418.1 241.4 L1419.6 241.0 L1421.1 240.7 L1422.6 240.2 L1424.1 240.3 L1425.6 240.2 L1427.1 239.6 L1428.6 238.0 L1430.1 236.9 L1431.6 236.8 L1433.1 235.9 L1434.6 236.1 L1436.1 235.6 L1437.6 235.8 L1439.1 235.5 L1440.6 234.9 L1442.1 235.4 L1443.6 235.0 L1445.1 234.9 L1446.6 235.3 L1448.2 235.2 L1449.7 234.7 L1451.2 235.0 L1452.7 234.4 L1454.2 234.7 L1455.7 234.2 L1457.2 234.7 L1458.7 234.9 L1460.2 234.6 L1461.7 234.0 L1463.2 234.4 L1464.7 234.4 L1466.2 234.3 L1467.7 234.0 L1469.2 234.1 L1470.7 234.2 L1472.2 233.8 L1473.7 234.3 L1475.2 233.9 L1476.7 233.9 L1478.2 233.7 L1479.7 233.9 L1481.2 234.4 L1482.7 233.8 L1484.2 233.6 L1485.7 233.8 L1487.2 234.3 L1488.7 233.5 L1490.2 233.7 L1491.7 233.5 L1493.2 233.9 L1494.7 233.7 L1496.2 233.4 L1497.7 234.0 L1499.2 233.5 L1500.7 233.8 L1502.2 233.5 L1503.7 233.9 L1505.2 233.1 L1506.7 233.2 L1508.2 233.3 L1509.7 233.2 L1511.2 233.7 L1512.7 233.4 L1514.2 233.0 L1515.7 232.7 L1517.2 232.7 L1518.7 232.2 L1520.2 232.1 L1521.7 232.3 L1523.2 232.2 L1524.7 232.0 L1526.2 232.0 L1527.7 231.8 L1529.2 232.0 L1530.7 232.4 L1532.2 231.9 L1533.7 231.9 L1535.2 232.1 L1536.7 232.1 L1538.2 231.7 L1539.7 232.0 L1541.2 232.2 L1542.7 231.6 L1544.2 231.7 L1545.7 232.2 L1547.2 232.4 L1548.7 231.6 L1550.2 231.6 L1551.7 232.1 L1553.2 231.8 L1554.7 232.1 L1556.2 231.5 L1557.7 231.9 L1559.2 231.6 L1560.7 231.8 L1562.3 232.1 L1563.8 231.9 L1565.3 232.2 L1566.8 232.2 L1568.3 232.0 L1569.8 232.2 L1571.3 231.6 L1572.8 231.8 L1574.3 231.7 L1575.8 232.0 L1577.3 231.5 L1578.8 232.2 L1580.3 231.7 L1581.8 232.1 L1583.3 232.2 L1584.8 232.2 L1586.3 231.7 L1587.8 232.1 L1589.3 232.2 L1590.8 231.4 L1592.3 232.0 L1593.8 232.0 L1595.3 231.7 L1596.8 231.5 L1598.3 231.4 L1599.8 231.6 L1601.3 232.1 L1602.8 231.6 L1604.3 231.5 L1605.8 231.8 L1607.3 231.6 L1608.8 231.8 L1610.3 231.6 L1611.8 231.5 L1613.3 231.2 L1614.8 231.9 L1616.3 231.8 L1617.8 231.4 L1619.3 231.6 L1620.8 231.7 L1622.3 231.6 L1623.8 232.0 L1625.3 231.8 L1626.8 231.4 L1628.3 231.4 L1629.8 231.7 L1631.3 231.3 L1632.8 232.0 L1634.3 231.1 L1635.8 231.5 L1637.3 231.3 L1638.8 231.6 L1640.3 231.1 L1641.8 231.3 L1643.3 231.9 L1644.8 231.8 L1646.3 231.2 L1647.8 231.4 L1649.3 231.1 L1650.8 231.1 L1652.3 231.2 L1653.8 231.9 L1655.3 231.3 L1656.8 231.2 L1658.3 231.0 L1659.8 231.1 L1661.3 231.9 L1662.8 231.6 L1664.3 231.8 L1665.8 231.7 L1667.3 231.6 L1668.8 231.2 L1670.3 231.1 L1671.8 231.2 L1673.3 231.0 L1674.8 231.1 L1676.3 231.6 L1677.9 231.3 L1679.4 230.9 L1680.9 231.2 L1682.4 231.6 L1683.9 231.6 L1685.4 231.5 L1686.9 231.5 L1688.4 231.7 L1689.9 231.4 L1691.4 231.2 L1692.9 231.4 L1694.4 231.1 L1695.9 230.9 L1697.4 231.1 L1698.9 231.2 L1700.4 230.9 L1701.9 230.9 L1703.4 231.0 L1704.9 231.1 L1706.4 231.6 L1707.9 231.2 L1709.4 231.5 L1710.9 231.4 L1712.4 231.3 L1713.9 231.0 L1715.4 231.1 L1716.9 231.0 L1718.4 231.3 L1719.9 231.5 L1721.4 231.4 L1722.9 231.0 L1724.4 230.8 L1725.9 230.7 L1727.4 231.2 L1728.9 230.9 L1730.4 230.7 L1731.9 231.0 L1733.4 230.9 L1734.9 230.9 L1736.4 231.3 L1737.9 231.2 L1739.4 230.9 L1740.9 231.3 L1742.4 230.8 L1743.9 231.5 L1745.4 230.7 L1746.9 231.2 L1748.4 231.3 L1749.9 231.3 L1751.4 231.0 L1752.9 231.4 L1754.4 231.2 L1755.9 231.2 L1757.4 230.7 L1758.9 230.7 L1760.4 231.0 L1761.9 231.1 L1763.4 230.6 L1764.9 231.2 L1766.4 230.9 L1767.9 231.0 L1769.4 231.0 L1770.9 231.3 L1772.4 230.8 L1773.9 231.0 L1775.4 231.1 L1776.9 231.1 L1778.4 230.8 L1779.9 230.7 L1781.4 230.9 L1782.9 231.0 L1784.4 231.0 L1785.9 230.5 L1787.4 230.8 L1788.9 230.9 L1790.4 230.5 L1792.0 230.4 L1793.5 231.1 L1795.0 230.3 L1796.5 230.7 L1798.0 230.5 L1799.5 230.2 L1801.0 230.4 L1802.5 230.3 L1804.0 230.5 L1805.5 230.9 L1807.0 230.1 L1808.5 230.3 L1810.0 230.6 L1811.5 229.1 L1813.0 227.6 L1814.5 227.8 L1816.0 227.8 L1817.5 228.4 L1819.0 228.0 L1820.5 227.8 L1822.0 228.0 L1823.5 228.0 L1825.0 227.7 L1826.5 228.2 L1828.0 228.2 L1829.5 228.0 L1831.0 228.1 L1832.5 228.3 L1834.0 228.4 L1835.5 228.1 L1837.0 227.6 L1838.5 228.0 L1840.0 228.2 L1841.5 227.9 L1843.0 228.2 L1844.5 227.9 L1846.0 228.1 L1847.5 228.1 L1849.0 228.2" fill="none" stroke="#EA6460" stroke-width="2"/>
<path d="M1045.8 262.7 L1047.3 261.0 L1048.8 259.3 L1050.3 255.4 L1051.8 246.8 L1053.3 238.6 L1054.8 235.9 L1056.3 235.7 L1057.8 236.4 L1059.3 236.3 L1060.8 236.7 L1062.3 236.8 L1063.8 237.2 L1065.3 237.1 L1066.8 237.7 L1068.3 237.5 L1069.8 236.4 L1071.3 235.6 L1072.8 235.3 L1074.3 235.6 L1075.8 235.3 L1077.3 234.5 L1078.8 234.9 L1080.3 234.2 L1081.8 234.4 L1083.3 233.9 L1084.8 233.9 L1086.3 234.1 L1087.8 233.7 L1089.3 233.5 L1090.8 234.1 L1092.3 233.9 L1093.8 233.9 L1095.3 233.9 L1096.8 233.7 L1098.3 233.6 L1099.8 233.3 L1101.3 233.7 L1102.8 233.5 L1104.4 233.7 L1105.9 233.6 L1107.4 233.3 L1108.9 233.0 L1110.4 233.3 L1111.9 232.8 L1113.4 232.4 L1114.9 232.3 L1116.4 232.4 L1117.9 231.9 L1119.4 232.1 L1120.9 231.7 L1122.4 231.5 L1123.9 231.7 L1125.4 231.3 L1126.9 230.9 L1128.4 230.8 L1129.9 230.8 L1131.4 230.3 L1132.9 230.7 L1134.4 230.5 L1135.9 230.1 L1137.4 230.0 L1138.9 229.3 L1140.4 229.3 L1141.9 228.5 L1143.4 228.3 L1144.9 228.0 L1146.4 227.8 L1147.9 227.6 L1149.4 229.3 L1150.9 230.4 L1152.4 232.1 L1153.9 230.4 L1155.4 228.6 L1156.9 226.7 L1158.4 228.4 L1159.9 230.6 L1161.4 232.1 L1162.9 232.3 L1164.4 232.1 L1165.9 232.2 L1167.4 232.2 L1168.9 232.1 L1170.4 232.3 L1171.9 231.9 L1173.4 232.3 L1174.9 232.0 L1176.4 232.3 L1177.9 232.2 L1179.4 232.3 L1180.9 231.9 L1182.4 232.3 L1183.9 231.7 L1185.4 232.0 L1186.9 231.9 L1188.4 232.2 L1189.9 232.1 L1191.4 232.3 L1192.9 231.7 L1194.4 231.6 L1195.9 232.3 L1197.4 231.9 L1198.9 232.1 L1200.4 231.7 L1201.9 232.0 L1203.4 232.2 L1204.9 232.3 L1206.4 232.2 L1207.9 232.2 L1209.4 232.3 L1210.9 231.8 L1212.4 231.9 L1213.9 232.2 L1215.4 231.9 L1216.9 232.1 L1218.5 232.3 L1220.0 232.0 L1221.5 232.2 L1223.0 232.3 L1224.5 231.8 L1226.0 232.2 L1227.5 232.2 L1229.0 232.0 L1230.5 232.2 L1232.0 232.3 L1233.5 232.1 L1235.0 232.2 L1236.5 231.7 L1238.0 231.7 L1239.5 231.9 L1241.0 231.6 L1242.5 231.5 L1244.0 231.5 L1245.5 231.2 L1247.0 231.4 L1248.5 231.9 L1250.0 231.9 L1251.5 231.6 L1253.0 231.0 L1254.5 231.1 L1256.0 230.5 L1257.5 230.2 L1259.0 229.8 L1260.5 229.9 L1262.0 229.6 L1263.5 229.9 L1265.0 229.9 L1266.5 229.8 L1268.0 229.8 L1269.5 229.9 L1271.0 229.6 L1272.5 229.9 L1274.0 229.5 L1275.5 229.7 L1277.0 230.0 L1278.5 230.0 L1280.0 230.0 L1281.5 230.2 L1283.0 230.2 L1284.5 229.9 L1286.0 230.1 L1287.5 229.9 L1289.0 230.1 L1290.5 230.1 L1292.0 230.3 L1293.5 230.3 L1295.0 230.1 L1296.5 230.3 L1298.0 230.2 L1299.5 230.1 L1301.0 230.2 L1302.5 230.3 L1304.0 230.3 L1305.5 230.3 L1307.0 230.4 L1308.5 230.1 L1310.0 230.3 L1311.5 230.3 L1313.0 229.9 L1314.5 229.9 L1316.0 230.0 L1317.5 230.2 L1319.0 230.2 L1320.5 229.9 L1322.0 230.0 L1323.5 230.0 L1325.0 230.0 L1326.5 229.8 L1328.0 230.0 L1329.5 229.8 L1331.0 230.0 L1332.5 229.6 L1334.1 229.8 L1335.6 229.9 L1337.1 229.8 L1338.6 230.0 L1340.1 229.3 L1341.6 229.7 L1343.1 229.8 L1344.6 229.7 L1346.1 229.3 L1347.6 229.7 L1349.1 229.8 L1350.6 229.9 L1352.1 229.7 L1353.6 229.5 L1355.1 229.5 L1356.6 229.6 L1358.1 229.9 L1359.6 229.4 L1361.1 229.3 L1362.6 229.6 L1364.1 230.0 L1365.6 229.4 L1367.1 229.6 L1368.6 229.6 L1370.1 229.6 L1371.6 229.9 L1373.1 229.3 L1374.6 229.5 L1376.1 229.6 L1377.6 229.7 L1379.1 229.7 L1380.6 229.8 L1382.1 229.4 L1383.6 229.5 L1385.1 229.8 L1386.6 230.0 L1388.1 229.6 L1389.6 229.9 L1391.1 229.7 L1392.6 230.0 L1394.1 229.8 L1395.6 229.7 L1397.1 229.8 L1398.6 229.7 L1400.1 229.4 L1401.6 229.3 L1403.1 229.6 L1404.6 229.6 L1406.1 228.0 L1407.6 209.9 L1409.1 191.4 L1410.6 188.6 L1412.1 186.5 L1413.6 189.1 L1415.1 197.3 L1416.6 198.8 L1418.1 198.7 L1419.6 198.4 L1421.1 197.7 L1422.6 197.7 L1424.1 196.6 L1425.6 196.3 L1427.1 195.1 L1428.6 193.7 L1430.1 192.3 L1431.6 191.8 L1433.1 192.1 L1434.6 192.2 L1436.1 191.6 L1437.6 192.0 L1439.1 192.2 L1440.6 192.1 L1442.1 191.8 L1443.6 192.3 L1445.1 192.1 L1446.6 192.3 L1448.2 192.2 L1449.7 192.6 L1451.2 192.6 L1452.7 191.8 L1454.2 192.4 L1455.7 192.4 L1457.2 191.9 L1458.7 191.6 L1460.2 191.8 L1461.7 191.5 L1463.2 191.7 L1464.7 191.7 L1466.2 191.1 L1467.7 190.8 L1469.2 190.9 L1470.7 190.9 L1472.2 190.8 L1473.7 190.5 L1475.2 190.1 L1476.7 190.0 L1478.2 190.3 L1479.7 189.8 L1481.2 189.3 L1482.7 189.5 L1484.2 189.1 L1485.7 189.4 L1487.2 188.7 L1488.7 188.7 L1490.2 188.4 L1491.7 188.6 L1493.2 188.9 L1494.7 188.5 L1496.2 188.2 L1497.7 188.6 L1499.2 187.8 L1500.7 187.9 L1502.2 188.3 L1503.7 187.4 L1505.2 188.0 L1506.7 187.6 L1508.2 187.2 L1509.7 187.3 L1511.2 187.4 L1512.7 187.2 L1514.2 187.0 L1515.7 186.1 L1517.2 185.8 L1518.7 186.0 L1520.2 185.3 L1521.7 185.3 L1523.2 185.0 L1524.7 185.1 L1526.2 185.7 L1527.7 185.4 L1529.2 185.3 L1530.7 184.8 L1532.2 185.1 L1533.7 185.4 L1535.2 185.1 L1536.7 185.2 L1538.2 185.5 L1539.7 185.2 L1541.2 185.2 L1542.7 184.6 L1544.2 184.6 L1545.7 185.3 L1547.2 184.9 L1548.7 185.3 L1550.2 185.3 L1551.7 185.3 L1553.2 184.8 L1554.7 185.3 L1556.2 185.1 L1557.7 185.2 L1559.2 184.5 L1560.7 185.1 L1562.3 184.7 L1563.8 185.2 L1565.3 185.2 L1566.8 184.5 L1568.3 184.6 L1569.8 184.5 L1571.3 184.6 L1572.8 184.5 L1574.3 184.8 L1575.8 184.3 L1577.3 184.3 L1578.8 184.5 L1580.3 184.2 L1581.8 184.4 L1583.3 184.9 L1584.8 184.8 L1586.3 184.2 L1587.8 184.0 L1589.3 184.7 L1590.8 184.8 L1592.3 184.4 L1593.8 184.0 L1595.3 184.1 L1596.8 184.6 L1598.3 184.6 L1599.8 183.8 L1601.3 183.9 L1602.8 184.1 L1604.3 183.9 L1605.8 184.3 L1607.3 183.9 L1608.8 184.3 L1610.3 183.7 L1611.8 184.0 L1613.3 184.4 L1614.8 184.1 L1616.3 183.5 L1617.8 183.5 L1619.3 183.9 L1620.8 183.7 L1622.3 183.6 L1623.8 183.7 L1625.3 183.8 L1626.8 184.1 L1628.3 183.4 L1629.8 183.7 L1631.3 183.4 L1632.8 183.6 L1634.3 183.7 L1635.8 183.2 L1637.3 183.4 L1638.8 183.6 L1640.3 183.0 L1641.8 183.6 L1643.3 183.3 L1644.8 183.3 L1646.3 183.4 L1647.8 183.5 L1649.3 182.8 L1650.8 183.2 L1652.3 182.7 L1653.8 183.0 L1655.3 183.0 L1656.8 182.6 L1658.3 182.9 L1659.8 183.0 L1661.3 183.1 L1662.8 183.3 L1664.3 182.8 L1665.8 183.0 L1667.3 183.1 L1668.8 183.3 L1670.3 183.3 L1671.8 183.3 L1673.3 182.7 L1674.8 182.6 L1676.3 183.3 L1677.9 182.5 L1679.4 182.8 L1680.9 183.0 L1682.4 182.9 L1683.9 182.7 L1685.4 183.2 L1686.9 182.6 L1688.4 182.8 L1689.9 183.1 L1691.4 182.4 L1692.9 182.6 L1694.4 182.7 L1695.9 182.8 L1697.4 182.5 L1698.9 182.7 L1700.4 182.3 L1701.9 182.3 L1703.4 182.5 L1704.9 182.4 L1706.4 183.1 L1707.9 182.4 L1709.4 182.4 L1710.9 182.9 L1712.4 182.8 L1713.9 182.4 L1715.4 182.9 L1716.9 182.7 L1718.4 182.5 L1719.9 182.7 L1721.4 182.3 L1722.9 182.3 L1724.4 182.9 L1725.9 182.5 L1727.4 182.9 L1728.9 182.2 L1730.4 182.2 L1731.9 182.1 L1733.4 182.7 L1734.9 182.5 L1736.4 182.0 L1737.9 182.0 L1739.4 182.7 L1740.9 182.3 L1742.4 182.6 L1743.9 181.8 L1745.4 182.3 L1746.9 181.8 L1748.4 182.3 L1749.9 182.2 L1751.4 182.2 L1752.9 181.8 L1754.4 182.4 L1755.9 181.6 L1757.4 181.5 L1758.9 182.0 L1760.4 181.5 L1761.9 181.4 L1763.4 181.7 L1764.9 181.9 L1766.4 182.0 L1767.9 181.9 L1769.4 181.2 L1770.9 181.7 L1772.4 181.8 L1773.9 181.2 L1775.4 181.7 L1776.9 181.2 L1778.4 181.2 L1779.9 180.9 L1781.4 181.5 L1782.9 181.3 L1784.4 181.6 L1785.9 181.2 L1787.4 181.0 L1788.9 181.0 L1790.4 181.1 L1792.0 181.7 L1793.5 181.0 L1795.0 180.9 L1796.5 181.1 L1798.0 180.9 L1799.5 181.2 L1801.0 181.4 L1802.5 181.4 L1804.0 181.0 L1805.5 180.9 L1807.0 181.3 L1808.5 181.4 L1810.0 181.2 L1811.5 178.9 L1813.0 177.5 L1814.5 176.7 L1816.0 176.7 L1817.5 176.8 L1819.0 176.7 L1820.5 176.9 L1822.0 176.5 L1823.5 176.5 L1825.0 176.1 L1826.5 176.4 L1828.0 176.3 L1829.5 175.7 L1831.0 175.4 L1832.5 175.5 L1834.0 175.7 L1835.5 176.2 L1837.0 175.7 L1838.5 176.1 L1840.0 176.2 L1841.5 176.5 L1843.0 175.8 L1844.5 176.5 L1846.0 176.2 L1847.5 176.0 L1849.0 176.5" fill="none" stroke="#C250BE" stroke-width="2.2"/>
<path d="M1045.8 262.7 L1047.3 261.0 L1048.8 259.3 L1050.3 255.4 L1051.8 246.8 L1053.3 238.6 L1054.8 235.1 L1056.3 235.7 L1057.8 236.4 L1059.3 236.3 L1060.8 236.7 L1062.3 236.2 L1063.8 236.9 L1065.3 237.0 L1066.8 237.7 L1068.3 237.5 L1069.8 236.2 L1071.3 235.6 L1072.8 235.2 L1074.3 235.6 L1075.8 235.3 L1077.3 234.5 L1078.8 234.9 L1080.3 234.2 L1081.8 234.4 L1083.3 233.8 L1084.8 233.5 L1086.3 234.1 L1087.8 233.5 L1089.3 233.4 L1090.8 234.1 L1092.3 233.9 L1093.8 233.4 L1095.3 233.9 L1096.8 233.5 L1098.3 233.6 L1099.8 233.1 L1101.3 233.7 L1102.8 233.5 L1104.4 233.7 L1105.9 233.6 L1107.4 233.0 L1108.9 233.0 L1110.4 232.7 L1111.9 232.5 L1113.4 232.3 L1114.9 232.3 L1116.4 232.4 L1117.9 231.7 L1119.4 232.1 L1120.9 231.7 L1122.4 231.5 L1123.9 231.7 L1125.4 231.2 L1126.9 230.9 L1128.4 230.8 L1129.9 230.8 L1131.4 230.1 L1132.9 230.7 L1134.4 229.6 L1135.9 230.1 L1137.4 230.0 L1138.9 229.0 L1140.4 229.3 L1141.9 228.5 L1143.4 228.3 L1144.9 227.4 L1146.4 227.1 L1147.9 227.1 L1149.4 229.3 L1150.9 230.1 L1152.4 232.1 L1153.9 230.4 L1155.4 228.6 L1156.9 226.2 L1158.4 228.0 L1159.9 230.6 L1161.4 232.1 L1162.9 231.5 L1164.4 232.1 L1165.9 232.2 L1167.4 232.2 L1168.9 231.5 L1170.4 232.3 L1171.9 231.5 L1173.4 231.8 L1174.9 232.0 L1176.4 232.3 L1177.9 231.8 L1179.4 232.3 L1180.9 231.9 L1182.4 231.7 L1183.9 231.7 L1185.4 231.6 L1186.9 231.5 L1188.4 231.6 L1189.9 232.1 L1191.4 232.3 L1192.9 231.6 L1194.4 231.5 L1195.9 232.3 L1197.4 231.9 L1198.9 231.8 L1200.4 231.7 L1201.9 232.0 L1203.4 232.2 L1204.9 231.9 L1206.4 231.8 L1207.9 231.5 L1209.4 232.3 L1210.9 231.5 L1212.4 231.9 L1213.9 232.2 L1215.4 231.6 L1216.9 232.1 L1218.5 232.3 L1220.0 232.0 L1221.5 232.2 L1223.0 231.5 L1224.5 231.8 L1226.0 231.6 L1227.5 232.2 L1229.0 231.7 L1230.5 231.8 L1232.0 232.3 L1233.5 232.1 L1235.0 232.2 L1236.5 231.7 L1238.0 231.7 L1239.5 231.9 L1241.0 231.6 L1242.5 231.4 L1244.0 231.5 L1245.5 231.2 L1247.0 231.4 L1248.5 231.9 L1250.0 231.9 L1251.5 231.5 L1253.0 231.0 L1254.5 230.5 L1256.0 229.9 L1257.5 229.6 L1259.0 229.8 L1260.5 229.9 L1262.0 229.5 L1263.5 229.9 L1265.0 229.9 L1266.5 229.8 L1268.0 229.8 L1269.5 229.9 L1271.0 229.6 L1272.5 229.9 L1274.0 229.5 L1275.5 229.7 L1277.0 230.0 L1278.5 229.9 L1280.0 229.6 L1281.5 230.2 L1283.0 230.0 L1284.5 229.9 L1286.0 229.4 L1287.5 229.9 L1289.0 229.7 L1290.5 230.1 L1292.0 229.9 L1293.5 230.2 L1295.0 230.1 L1296.5 230.3 L1298.0 229.9 L1299.5 230.1 L1301.0 230.2 L1302.5 230.3 L1304.0 229.8 L1305.5 230.3 L1307.0 230.3 L1308.5 230.1 L1310.0 230.3 L1311.5 230.3 L1313.0 229.9 L1314.5 229.9 L1316.0 229.5 L1317.5 230.1 L1319.0 230.2 L1320.5 229.8 L1322.0 230.0 L1323.5 230.0 L1325.0 230.0 L1326.5 229.4 L1328.0 230.0 L1329.5 229.8 L1331.0 229.8 L1332.5 229.6 L1334.1 229.8 L1335.6 229.9 L1337.1 229.8 L1338.6 229.8 L1340.1 229.2 L1341.6 229.3 L1343.1 229.5 L1344.6 229.7 L1346.1 229.3 L1347.6 229.7 L1349.1 229.7 L1350.6 229.1 L1352.1 229.5 L1353.6 229.3 L1355.1 229.1 L1356.6 229.2 L1358.1 229.4 L1359.6 229.3 L1361.1 229.3 L1362.6 229.1 L1364.1 229.5 L1365.6 229.4 L1367.1 229.6 L1368.6 229.6 L1370.1 229.3 L1371.6 229.9 L1373.1 229.1 L1374.6 229.5 L1376.1 229.3 L1377.6 229.5 L1379.1 229.2 L1380.6 229.8 L1382.1 229.4 L1383.6 229.1 L1385.1 229.6 L1386.6 229.2 L1388.1 229.6 L1389.6 229.4 L1391.1 229.6 L1392.6 230.0 L1394.1 229.8 L1395.6 229.5 L1397.1 229.8 L1398.6 229.7 L1400.1 229.4 L1401.6 229.2 L1403.1 229.6 L1404.6 229.6 L1406.1 227.9 L1407.6 197.9 L1409.1 177.6 L1410.6 167.6 L1412.1 166.7 L1413.6 170.7 L1415.1 185.8 L1416.6 190.3 L1418.1 191.3 L1419.6 191.3 L1421.1 191.2 L1422.6 190.9 L1424.1 190.0 L1425.6 189.5 L1427.1 187.3 L1428.6 184.8 L1430.1 182.7 L1431.6 181.0 L1433.1 181.3 L1434.6 181.1 L1436.1 180.6 L1437.6 180.1 L1439.1 180.6 L1440.6 180.0 L1442.1 179.7 L1443.6 179.5 L1445.1 180.0 L1446.6 179.4 L1448.2 179.1 L1449.7 179.2 L1451.2 178.8 L1452.7 179.2 L1454.2 178.9 L1455.7 178.7 L1457.2 178.9 L1458.7 178.6 L1460.2 177.5 L1461.7 177.6 L1463.2 177.0 L1464.7 177.5 L1466.2 177.2 L1467.7 176.6 L1469.2 176.6 L1470.7 176.4 L1472.2 177.0 L1473.7 176.3 L1475.2 176.5 L1476.7 176.3 L1478.2 176.3 L1479.7 176.2 L1481.2 176.2 L1482.7 175.5 L1484.2 176.0 L1485.7 175.5 L1487.2 175.6 L1488.7 175.3 L1490.2 175.2 L1491.7 175.3 L1493.2 175.2 L1494.7 175.0 L1496.2 175.3 L1497.7 175.2 L1499.2 174.6 L1500.7 174.8 L1502.2 174.9 L1503.7 175.3 L1505.2 175.3 L1506.7 174.9 L1508.2 174.4 L1509.7 175.1 L1511.2 174.7 L1512.7 174.8 L1514.2 174.2 L1515.7 172.9 L1517.2 171.6 L1518.7 171.2 L1520.2 170.7 L1521.7 170.7 L1523.2 171.1 L1524.7 170.5 L1526.2 170.6 L1527.7 171.0 L1529.2 170.3 L1530.7 171.0 L1532.2 170.8 L1533.7 170.6 L1535.2 170.4 L1536.7 170.8 L1538.2 170.9 L1539.7 170.2 L1541.2 170.5 L1542.7 170.6 L1544.2 170.5 L1545.7 170.3 L1547.2 170.1 L1548.7 170.5 L1550.2 170.7 L1551.7 170.0 L1553.2 170.1 L1554.7 170.6 L1556.2 170.6 L1557.7 170.5 L1559.2 169.9 L1560.7 170.5 L1562.3 170.7 L1563.8 170.7 L1565.3 170.4 L1566.8 169.8 L1568.3 170.5 L1569.8 169.9 L1571.3 170.3 L1572.8 170.5 L1574.3 170.3 L1575.8 169.7 L1577.3 169.9 L1578.8 170.4 L1580.3 169.7 L1581.8 170.1 L1583.3 169.9 L1584.8 169.6 L1586.3 170.0 L1587.8 169.5 L1589.3 169.5 L1590.8 169.7 L1592.3 169.4 L1593.8 169.4 L1595.3 169.8 L1596.8 169.9 L1598.3 170.0 L1599.8 169.3 L1601.3 169.5 L1602.8 169.4 L1604.3 169.6 L1605.8 169.4 L1607.3 169.8 L1608.8 169.3 L1610.3 168.9 L1611.8 169.5 L1613.3 168.9 L1614.8 169.3 L1616.3 169.2 L1617.8 169.5 L1619.3 169.1 L1620.8 169.2 L1622.3 168.8 L1623.8 169.0 L1625.3 168.7 L1626.8 169.1 L1628.3 168.9 L1629.8 168.5 L1631.3 168.5 L1632.8 168.6 L1634.3 168.9 L1635.8 168.4 L1637.3 168.8 L1638.8 168.7 L1640.3 168.2 L1641.8 168.6 L1643.3 168.1 L1644.8 168.1 L1646.3 168.5 L1647.8 168.1 L1649.3 168.6 L1650.8 168.2 L1652.3 168.0 L1653.8 168.4 L1655.3 167.7 L1656.8 168.3 L1658.3 167.6 L1659.8 167.7 L1661.3 168.4 L1662.8 168.1 L1664.3 167.7 L1665.8 167.6 L1667.3 168.4 L1668.8 168.1 L1670.3 168.2 L1671.8 167.6 L1673.3 168.1 L1674.8 167.8 L1676.3 167.7 L1677.9 167.8 L1679.4 168.0 L1680.9 167.8 L1682.4 167.8 L1683.9 167.6 L1685.4 168.2 L1686.9 168.1 L1688.4 168.2 L1689.9 167.9 L1691.4 168.3 L1692.9 168.0 L1694.4 168.0 L1695.9 168.0 L1697.4 168.2 L1698.9 167.8 L1700.4 167.6 L1701.9 167.5 L1703.4 167.7 L1704.9 167.5 L1706.4 168.3 L1707.9 167.9 L1709.4 168.2 L1710.9 167.5 L1712.4 167.9 L1713.9 168.3 L1715.4 168.0 L1716.9 167.9 L1718.4 167.9 L1719.9 167.6 L1721.4 167.6 L1722.9 167.6 L1724.4 167.8 L1725.9 167.8 L1727.4 168.3 L1728.9 167.6 L1730.4 167.7 L1731.9 167.7 L1733.4 167.6 L1734.9 167.8 L1736.4 167.7 L1737.9 167.9 L1739.4 167.4 L1740.9 168.2 L1742.4 167.6 L1743.9 168.1 L1745.4 167.8 L1746.9 167.8 L1748.4 167.6 L1749.9 168.0 L1751.4 167.2 L1752.9 167.6 L1754.4 167.3 L1755.9 167.6 L1757.4 167.6 L1758.9 167.0 L1760.4 167.0 L1761.9 166.8 L1763.4 167.0 L1764.9 166.8 L1766.4 167.1 L1767.9 167.5 L1769.4 167.0 L1770.9 166.9 L1772.4 167.0 L1773.9 166.8 L1775.4 167.1 L1776.9 167.1 L1778.4 166.6 L1779.9 166.6 L1781.4 166.9 L1782.9 167.1 L1784.4 166.8 L1785.9 166.6 L1787.4 167.0 L1788.9 166.1 L1790.4 166.1 L1792.0 166.7 L1793.5 166.4 L1795.0 166.0 L1796.5 166.4 L1798.0 166.8 L1799.5 166.3 L1801.0 166.1 L1802.5 165.8 L1804.0 165.8 L1805.5 166.5 L1807.0 166.1 L1808.5 166.4 L1810.0 165.6 L1811.5 161.9 L1813.0 159.0 L1814.5 159.2 L1816.0 158.8 L1817.5 158.9 L1819.0 159.0 L1820.5 158.8 L1822.0 158.5 L1823.5 158.4 L1825.0 159.1 L1826.5 158.3 L1828.0 158.5 L1829.5 158.3 L1831.0 158.3 L1832.5 157.9 L1834.0 158.1 L1835.5 158.0 L1837.0 158.4 L1838.5 158.8 L1840.0 158.6 L1841.5 158.8 L1843.0 158.3 L1844.5 158.2 L1846.0 158.7 L1847.5 158.7 L1849.0 158.8" fill="none" stroke="#7EB26D" stroke-width="2"/>
<text x="1039.3" y="136.5" text-anchor="end" class="tk">20 Mil</text>
<text x="1039.3" y="172.3" text-anchor="end" class="tk">15 Mil</text>
<text x="1039.3" y="208.0" text-anchor="end" class="tk">10 Mil</text>
<text x="1039.3" y="243.8" text-anchor="end" class="tk">5 Mil</text>
<text x="1039.3" y="279.5" text-anchor="end" class="tk">0</text>
<text x="1095.3" y="295.8" text-anchor="middle" class="tk">09:00</text>
<text x="1208.3" y="295.8" text-anchor="middle" class="tk">10:00</text>
<text x="1321.4" y="295.8" text-anchor="middle" class="tk">11:00</text>
<text x="1434.4" y="295.8" text-anchor="middle" class="tk">12:00</text>
<text x="1547.5" y="295.8" text-anchor="middle" class="tk">13:00</text>
<text x="1660.5" y="295.8" text-anchor="middle" class="tk">14:00</text>
<text x="1773.6" y="295.8" text-anchor="middle" class="tk">15:00</text>
<path d="M1029.5 371.5 H1848.5" stroke="#48484b" stroke-width="1"/>
<path d="M1029.5 434.5 H1848.5" stroke="#48484b" stroke-width="1"/>
<path d="M1029.5 496.5 H1848.5" stroke="#48484b" stroke-width="1"/>
<path d="M1029.5 559.5 H1848.5" stroke="#48484b" stroke-width="1"/>
<path d="M1029.5 621.5 H1848.5" stroke="#48484b" stroke-width="1"/>
<path d="M1029.5 684.5 H1848.5" stroke="#48484b" stroke-width="1"/>
<path d="M1079.5 371.5 V684.0" stroke="#48484b" stroke-width="1"/>
<path d="M1194.5 371.5 V684.0" stroke="#48484b" stroke-width="1"/>
<path d="M1310.5 371.5 V684.0" stroke="#48484b" stroke-width="1"/>
<path d="M1425.5 371.5 V684.0" stroke="#48484b" stroke-width="1"/>
<path d="M1540.5 371.5 V684.0" stroke="#48484b" stroke-width="1"/>
<path d="M1655.5 371.5 V684.0" stroke="#48484b" stroke-width="1"/>
<path d="M1770.5 371.5 V684.0" stroke="#48484b" stroke-width="1"/>
<path d="M1029.5 684.0 L1029.5 414.3 L1029.8 417.3 L1031.4 607.8 L1031.7 610.8 L1033.9 584.3 L1034.5 582.4 L1036.1 484.5 L1036.8 444.5 L1038.3 482.1 L1039.3 500.0 L1040.5 499.4 L1040.9 503.2 L1042.7 587.6 L1044.1 646.3 L1044.9 637.8 L1047.1 623.9 L1047.3 620.9 L1049.3 594.9 L1051.5 583.3 L1052.0 573.2 L1053.7 601.9 L1055.2 636.8 L1055.9 643.6 L1058.1 649.5 L1060.0 665.4 L1060.3 667.7 L1062.5 668.3 L1064.7 680.0 L1066.4 678.2 L1066.9 671.1 L1069.1 669.0 L1071.3 667.8 L1073.5 654.9 L1074.3 655.9 L1075.7 661.7 L1077.9 677.0 L1079.1 681.3 L1080.1 673.7 L1082.3 676.1 L1084.5 666.7 L1085.5 668.6 L1086.7 668.5 L1088.9 658.4 L1090.2 662.3 L1091.2 667.6 L1093.3 668.1 L1095.5 677.1 L1097.8 674.5 L1098.2 681.3 L1100.0 665.7 L1101.4 646.4 L1102.2 628.6 L1103.9 595.5 L1104.3 609.7 L1106.1 636.8 L1106.6 634.5 L1108.8 605.8 L1110.3 597.0 L1111.0 606.3 L1113.2 615.3 L1115.4 638.5 L1115.7 636.7 L1117.6 582.7 L1119.5 524.0 L1119.8 525.2 L1122.0 587.2 L1123.6 624.0 L1124.2 621.4 L1126.4 641.8 L1128.6 656.5 L1130.0 662.3 L1130.8 661.3 L1133.0 669.8 L1135.2 666.3 L1137.4 679.0 L1138.0 675.0 L1139.6 641.3 L1141.8 603.8 L1143.4 579.6 L1144.0 592.0 L1146.2 622.0 L1147.5 646.3 L1148.4 658.7 L1150.6 666.0 L1151.6 676.6 L1152.8 634.7 L1153.9 601.8 L1155.0 607.6 L1157.2 615.4 L1158.6 617.7 L1159.4 616.5 L1161.6 641.3 L1163.8 652.8 L1165.0 655.9 L1166.0 651.0 L1168.2 648.3 L1169.8 640.0 L1170.4 637.5 L1172.6 657.0 L1174.5 665.4 L1174.8 662.9 L1177.0 663.1 L1179.2 652.2 L1180.9 649.5 L1181.4 654.9 L1183.6 656.6 L1185.8 658.9 L1187.3 659.1 L1188.0 652.2 L1190.2 647.6 L1192.0 646.4 L1192.4 648.8 L1194.6 651.2 L1196.8 659.1 L1196.8 660.6 L1199.0 646.5 L1201.2 627.2 L1203.4 618.4 L1204.1 609.8 L1205.6 612.6 L1207.8 627.5 L1209.5 627.3 L1210.0 628.9 L1212.2 673.6 L1212.7 675.0 L1214.4 678.2 L1216.6 669.9 L1218.8 671.4 L1221.0 676.0 L1222.3 671.8 L1223.2 665.2 L1225.4 667.1 L1227.7 657.7 L1228.6 659.1 L1229.8 666.4 L1232.0 663.5 L1234.2 678.6 L1235.0 675.0 L1236.4 665.5 L1236.5 659.5 L1238.7 647.9 L1240.8 624.2 L1242.7 605.0 L1243.1 602.8 L1245.3 623.3 L1247.5 631.3 L1247.5 633.6 L1249.7 654.4 L1251.9 668.5 L1252.3 675.0 L1254.1 651.6 L1256.3 609.3 L1258.5 585.7 L1260.2 554.2 L1260.7 556.9 L1262.9 611.1 L1265.0 646.4 L1265.1 651.9 L1267.3 655.6 L1269.5 675.2 L1269.8 671.8 L1271.7 667.3 L1273.9 668.6 L1276.1 670.1 L1277.7 662.3 L1278.3 658.2 L1280.5 669.6 L1282.7 664.6 L1284.9 674.2 L1287.1 672.6 L1287.3 675.0 L1289.3 677.3 L1291.5 666.3 L1293.7 662.8 L1295.9 665.9 L1296.8 659.0 L1298.1 645.3 L1300.3 630.2 L1301.6 616.2 L1302.5 622.3 L1304.7 649.5 L1306.4 675.0 L1306.9 669.5 L1309.1 670.3 L1311.3 675.0 L1313.5 679.8 L1315.7 674.5 L1315.9 678.1 L1317.9 670.1 L1320.1 648.2 L1322.3 639.3 L1324.5 617.3 L1324.8 619.3 L1326.7 628.8 L1328.9 632.4 L1331.1 647.5 L1331.8 646.3 L1333.3 646.6 L1335.5 660.1 L1337.7 662.5 L1339.8 671.8 L1339.9 675.8 L1342.1 675.9 L1344.3 667.0 L1346.5 670.7 L1348.7 662.8 L1350.9 665.4 L1350.9 670.6 L1353.1 649.5 L1355.3 645.7 L1357.5 630.9 L1359.7 624.4 L1359.8 622.5 L1361.9 624.1 L1364.2 639.2 L1366.3 643.1 L1366.8 646.3 L1368.5 645.0 L1370.8 660.0 L1373.0 666.3 L1375.2 664.1 L1376.4 671.8 L1377.3 673.6 L1379.6 666.6 L1381.8 672.3 L1384.0 670.7 L1385.9 665.4 L1386.2 659.5 L1388.4 655.0 L1390.6 643.5 L1390.7 638.4 L1392.8 661.0 L1393.9 665.3 L1395.0 630.4 L1397.2 571.3 L1399.4 498.6 L1400.2 476.1 L1401.6 483.7 L1403.4 487.3 L1403.8 481.2 L1405.0 477.7 L1406.0 504.8 L1407.5 550.9 L1408.2 545.3 L1409.8 514.4 L1410.4 535.1 L1412.6 619.3 L1413.0 630.5 L1414.8 631.0 L1417.0 646.1 L1417.7 646.3 L1419.2 617.2 L1421.4 575.6 L1423.1 551.0 L1423.6 558.4 L1425.8 622.0 L1427.3 659.0 L1428.0 658.9 L1430.2 641.7 L1432.4 632.1 L1433.6 630.4 L1434.6 623.6 L1436.8 630.1 L1439.0 629.8 L1439.8 624.1 L1441.2 637.6 L1443.4 647.4 L1445.6 675.1 L1446.1 675.0 L1447.8 664.3 L1450.0 640.2 L1452.2 631.0 L1454.1 614.5 L1454.4 617.4 L1456.6 614.4 L1458.8 622.4 L1460.5 620.9 L1461.0 628.4 L1463.2 642.6 L1465.2 655.8 L1465.4 651.1 L1467.6 622.7 L1469.8 584.4 L1471.6 562.1 L1472.0 576.6 L1474.2 624.4 L1474.8 630.4 L1476.4 603.7 L1477.0 598.7 L1478.6 620.0 L1479.5 636.8 L1480.8 626.9 L1483.0 595.1 L1485.2 579.0 L1486.5 563.7 L1487.4 579.7 L1489.1 598.6 L1489.6 587.0 L1491.3 568.5 L1491.8 573.8 L1494.0 613.5 L1495.5 633.6 L1496.2 630.9 L1498.4 642.9 L1500.2 640.0 L1500.7 638.3 L1502.8 639.2 L1503.4 636.8 L1505.0 644.6 L1507.2 664.7 L1507.5 662.2 L1509.5 563.9 L1510.1 527.1 L1511.7 570.3 L1513.0 611.3 L1513.8 599.4 L1516.1 588.1 L1516.1 582.7 L1518.3 606.8 L1519.3 620.8 L1520.5 630.7 L1522.7 631.4 L1524.9 647.7 L1527.1 647.3 L1527.3 652.7 L1529.3 666.4 L1531.5 665.6 L1533.6 678.2 L1533.7 683.3 L1535.9 666.0 L1538.1 659.8 L1540.0 655.9 L1540.3 661.9 L1542.5 655.0 L1544.7 668.7 L1546.9 664.6 L1549.1 678.9 L1549.5 675.0 L1551.3 664.3 L1553.5 658.7 L1555.7 659.0 L1557.9 648.4 L1559.1 646.4 L1560.1 646.5 L1562.3 655.0 L1564.5 669.4 L1566.7 668.5 L1568.6 678.2 L1568.9 681.4 L1571.1 671.6 L1573.3 670.8 L1575.5 673.9 L1577.7 677.7 L1578.2 675.0 L1579.9 665.8 L1582.1 660.3 L1584.3 645.7 L1586.5 645.1 L1587.1 636.8 L1588.7 640.2 L1590.9 662.1 L1593.1 664.9 L1594.1 675.0 L1595.3 672.8 L1597.5 679.3 L1599.7 670.2 L1601.9 677.7 L1603.6 675.0 L1604.1 666.7 L1606.3 660.7 L1608.5 638.2 L1610.7 629.9 L1611.6 620.9 L1612.9 638.1 L1615.1 650.5 L1616.4 665.4 L1617.3 666.6 L1619.5 652.7 L1621.7 654.9 L1623.9 649.2 L1625.9 640.0 L1626.1 637.7 L1628.3 644.0 L1630.5 649.2 L1632.3 646.3 L1632.7 650.5 L1634.9 653.0 L1637.2 671.7 L1638.6 675.0 L1639.3 670.1 L1641.5 679.8 L1643.8 669.0 L1644.8 674.9 L1646.0 657.2 L1648.2 610.9 L1649.5 592.2 L1650.3 599.2 L1652.6 607.1 L1652.7 601.7 L1654.8 576.3 L1655.9 570.0 L1657.0 588.2 L1658.5 601.7 L1659.2 590.7 L1661.4 574.8 L1661.6 566.8 L1663.6 592.7 L1665.5 620.8 L1665.8 624.5 L1668.0 613.1 L1669.6 601.7 L1670.2 602.7 L1671.8 623.9 L1672.4 613.5 L1673.4 601.7 L1674.6 611.4 L1676.8 617.2 L1678.2 630.4 L1679.0 636.4 L1681.2 648.6 L1683.4 664.1 L1684.5 665.3 L1685.6 652.2 L1687.8 638.5 L1689.3 619.2 L1690.0 629.9 L1692.2 640.7 L1694.4 668.4 L1695.7 674.9 L1696.6 672.5 L1698.8 677.3 L1701.0 679.6 L1702.0 674.9 L1703.2 659.7 L1705.4 636.5 L1706.2 625.6 L1707.6 634.7 L1709.8 655.7 L1711.6 674.8 L1712.0 678.7 L1714.2 664.2 L1716.4 657.5 L1717.9 655.8 L1718.6 648.5 L1720.8 634.1 L1723.0 609.5 L1723.3 609.7 L1725.2 607.3 L1727.4 602.8 L1727.5 597.0 L1729.6 595.2 L1731.8 600.4 L1732.2 598.6 L1734.0 613.7 L1736.2 645.6 L1737.0 652.6 L1738.4 658.6 L1740.6 661.5 L1742.8 665.6 L1743.4 671.7 L1745.0 672.4 L1747.2 671.6 L1749.4 664.2 L1749.7 668.5 L1751.6 634.8 L1753.8 585.6 L1753.9 587.4 L1756.0 619.1 L1758.2 645.0 L1760.2 674.8 L1760.4 667.3 L1762.6 521.1 L1763.4 477.7 L1764.8 476.0 L1766.6 471.3 L1767.0 483.5 L1767.9 490.4 L1769.2 401.3 L1769.5 392.0 L1771.0 499.7 L1771.4 495.2 L1773.6 506.4 L1773.7 510.2 L1775.8 575.2 L1776.8 604.9 L1778.0 616.8 L1780.2 629.6 L1781.5 643.1 L1782.5 649.6 L1784.7 658.1 L1786.3 659.0 L1786.8 655.4 L1789.1 669.5 L1791.3 665.1 L1792.7 671.7 L1793.5 674.5 L1795.7 654.2 L1797.4 652.6 L1797.9 648.8 L1800.1 617.2 L1802.3 587.8 L1803.8 570.0 L1804.5 573.1 L1806.7 567.8 L1807.0 573.1 L1808.9 589.4 L1811.1 601.2 L1811.8 608.1 L1813.3 615.7 L1815.5 620.4 L1817.7 614.3 L1818.1 620.8 L1819.9 626.3 L1822.1 645.9 L1822.9 646.2 L1824.3 612.7 L1826.5 573.2 L1827.0 560.4 L1828.7 568.2 L1830.8 582.6 L1830.9 587.8 L1833.1 606.9 L1834.0 620.8 L1835.3 617.8 L1837.5 601.3 L1839.7 589.1 L1840.4 589.0 L1841.9 590.2 L1844.1 583.1 L1845.2 585.8 L1846.3 594.0 L1848.3 595.4 L1848.5 591.2 L1848.5 684.0 Z" fill="#7EB26D" fill-opacity="0.1"/>
<path d="M1029.5 684.0 L1029.5 658.7 L1031.0 652.8 L1032.5 645.3 L1034.0 638.8 L1034.5 636.8 L1035.5 632.9 L1037.0 625.5 L1038.5 619.1 L1040.0 612.1 L1040.3 611.4 L1041.5 612.3 L1043.0 614.3 L1044.5 615.6 L1046.0 616.5 L1047.5 618.3 L1049.0 619.4 L1050.5 620.9 L1050.5 621.4 L1052.0 623.0 L1053.5 625.8 L1055.0 627.5 L1056.5 630.4 L1058.0 632.4 L1059.5 634.2 L1061.0 637.2 L1062.5 638.9 L1063.2 640.0 L1064.0 641.2 L1065.5 642.5 L1067.0 644.0 L1068.5 644.9 L1070.0 647.1 L1071.5 648.0 L1073.0 650.3 L1074.5 651.7 L1076.0 652.7 L1077.5 654.6 L1079.0 655.4 L1079.1 655.9 L1080.5 656.4 L1082.0 658.1 L1083.5 658.4 L1085.0 659.8 L1086.5 659.8 L1088.0 660.9 L1089.5 662.3 L1091.0 662.5 L1092.5 664.1 L1094.0 664.2 L1095.5 665.9 L1097.0 666.0 L1098.2 667.0 L1098.5 666.9 L1100.0 663.9 L1101.5 661.9 L1103.0 660.0 L1104.5 657.4 L1106.0 655.4 L1107.5 652.9 L1107.7 652.7 L1109.0 650.8 L1110.5 647.5 L1112.0 645.5 L1113.5 642.5 L1115.0 640.3 L1116.5 637.0 L1118.0 635.1 L1119.5 631.7 L1120.5 630.4 L1121.0 630.8 L1122.5 630.5 L1124.0 631.8 L1125.5 631.9 L1127.0 631.8 L1128.5 632.2 L1130.0 633.0 L1131.5 633.3 L1133.0 633.2 L1133.2 633.6 L1134.5 632.9 L1136.0 631.5 L1137.5 631.0 L1139.0 629.1 L1140.5 628.7 L1142.0 626.8 L1143.5 626.6 L1144.3 625.7 L1145.0 626.5 L1146.5 629.2 L1148.0 630.6 L1149.5 632.8 L1151.0 635.5 L1152.3 636.8 L1152.5 636.9 L1154.0 635.3 L1155.5 634.8 L1157.0 633.2 L1158.5 633.1 L1160.0 631.9 L1161.5 630.4 L1161.8 630.4 L1163.0 631.6 L1164.5 632.4 L1166.0 634.2 L1167.5 634.9 L1169.0 636.7 L1170.5 637.8 L1172.0 638.8 L1173.5 640.0 L1175.0 640.7 L1176.5 641.8 L1177.7 643.2 L1178.0 643.6 L1179.5 644.0 L1181.0 645.5 L1182.5 646.3 L1184.0 646.6 L1185.5 648.1 L1187.0 648.5 L1188.5 649.7 L1190.0 650.8 L1191.5 651.0 L1193.0 652.2 L1194.5 652.8 L1196.0 654.2 L1196.8 654.3 L1197.5 654.1 L1199.0 655.1 L1200.5 654.9 L1202.0 655.5 L1203.5 655.8 L1205.0 656.0 L1206.5 656.9 L1208.0 656.7 L1209.5 657.7 L1211.0 657.6 L1212.5 658.6 L1214.0 658.7 L1215.5 658.6 L1215.9 659.1 L1217.0 660.0 L1218.5 659.7 L1220.0 660.6 L1221.5 661.5 L1223.0 661.7 L1224.5 663.0 L1226.0 663.7 L1227.5 663.8 L1229.0 665.0 L1230.5 664.7 L1232.0 665.9 L1233.5 666.2 L1235.0 667.0 L1235.0 667.3 L1236.5 664.8 L1238.0 663.2 L1239.5 660.2 L1241.0 658.7 L1242.5 656.7 L1242.7 655.9 L1244.0 655.4 L1245.5 656.1 L1247.0 655.7 L1248.5 656.0 L1250.0 655.4 L1251.5 656.3 L1253.0 656.4 L1253.9 655.9 L1254.5 654.8 L1256.0 653.8 L1257.5 651.1 L1259.0 650.2 L1260.5 648.1 L1261.8 646.4 L1262.0 646.7 L1263.5 647.2 L1265.0 649.1 L1266.5 649.5 L1268.0 651.4 L1269.5 651.8 L1271.0 652.8 L1272.5 654.8 L1274.0 655.1 L1274.5 655.9 L1275.5 656.6 L1277.0 657.4 L1278.5 657.4 L1280.0 658.4 L1281.5 659.2 L1283.0 659.0 L1284.5 660.3 L1286.0 660.4 L1287.5 661.1 L1289.0 662.1 L1290.5 662.3 L1292.0 663.6 L1293.5 663.3 L1293.6 663.8 L1295.0 663.8 L1296.5 663.2 L1298.0 662.1 L1299.5 661.3 L1301.0 661.5 L1302.5 660.4 L1304.0 659.6 L1305.5 659.6 L1306.4 659.1 L1307.0 659.0 L1308.5 660.0 L1310.0 660.7 L1311.5 662.0 L1313.0 662.1 L1314.5 663.5 L1316.0 663.6 L1317.5 664.8 L1319.0 665.2 L1319.1 665.4 L1320.5 665.3 L1322.0 663.9 L1323.5 664.1 L1325.0 662.8 L1326.5 662.8 L1328.0 661.7 L1329.5 660.8 L1331.0 660.2 L1332.5 660.2 L1334.0 659.0 L1335.0 659.1 L1335.5 659.4 L1337.0 659.7 L1338.5 659.6 L1340.0 660.0 L1341.5 660.6 L1343.0 660.4 L1344.5 660.9 L1346.0 661.6 L1347.5 661.4 L1349.0 661.4 L1350.5 662.7 L1350.9 662.3 L1352.0 661.4 L1353.5 660.7 L1355.0 660.9 L1356.5 660.4 L1358.0 659.1 L1359.5 658.4 L1361.0 658.7 L1362.5 657.2 L1364.0 657.4 L1365.5 656.6 L1366.8 655.9 L1367.0 655.8 L1368.5 656.6 L1370.0 656.8 L1371.5 657.3 L1373.0 658.1 L1374.5 658.1 L1376.0 658.6 L1377.5 659.6 L1379.0 659.8 L1380.5 660.8 L1382.0 660.7 L1383.5 661.7 L1385.0 661.5 L1385.9 662.3 L1386.5 662.5 L1388.0 661.2 L1389.5 661.3 L1391.0 660.3 L1392.5 660.2 L1394.0 659.2 L1395.5 659.1 L1395.5 659.4 L1397.0 654.6 L1398.5 650.2 L1400.0 646.6 L1401.5 642.3 L1403.0 637.7 L1403.4 636.8 L1404.5 633.1 L1406.0 627.2 L1407.5 621.6 L1409.0 617.0 L1410.5 611.5 L1411.4 608.2 L1412.0 608.3 L1413.5 609.1 L1415.0 609.3 L1416.5 609.6 L1418.0 610.1 L1419.5 610.5 L1420.9 611.4 L1421.0 611.7 L1422.5 612.6 L1424.0 614.7 L1425.5 615.7 L1427.0 617.7 L1428.5 618.5 L1430.0 620.0 L1430.5 620.9 L1431.5 621.1 L1433.0 622.3 L1434.5 623.8 L1435.2 624.1 L1436.0 623.6 L1437.5 623.6 L1439.0 622.9 L1439.8 622.5 L1440.5 623.0 L1442.0 625.1 L1443.5 625.8 L1444.5 627.3 L1445.0 627.8 L1446.5 628.1 L1448.0 629.3 L1449.5 630.2 L1451.0 630.0 L1452.5 631.5 L1454.0 631.8 L1455.5 632.3 L1457.0 633.4 L1457.3 633.6 L1458.5 633.8 L1460.0 633.3 L1461.5 634.1 L1463.0 633.2 L1464.5 633.2 L1466.0 633.9 L1467.5 633.4 L1469.0 633.4 L1470.0 633.6 L1470.5 632.7 L1472.0 631.8 L1473.5 629.7 L1475.0 628.3 L1476.5 627.4 L1478.0 625.5 L1479.5 624.6 L1479.5 624.1 L1481.0 623.3 L1482.5 621.5 L1484.0 621.2 L1485.5 619.5 L1487.0 618.7 L1488.5 616.9 L1490.0 616.6 L1491.5 615.4 L1492.3 614.5 L1493.0 614.4 L1494.5 615.7 L1496.0 615.9 L1497.5 616.2 L1499.0 617.5 L1500.5 617.5 L1502.0 618.6 L1503.5 618.5 L1505.0 619.8 L1506.5 619.9 L1508.0 621.3 L1508.2 620.9 L1509.5 620.1 L1511.0 618.2 L1512.5 617.0 L1514.0 616.7 L1515.5 614.8 L1516.1 614.5 L1517.0 615.6 L1518.5 616.1 L1520.0 618.2 L1521.5 619.3 L1523.0 620.8 L1524.5 621.4 L1526.0 623.2 L1527.3 624.1 L1527.5 624.2 L1529.0 626.3 L1530.5 627.8 L1532.0 630.2 L1533.5 631.2 L1535.0 633.5 L1536.5 634.8 L1538.0 637.4 L1539.5 638.5 L1541.0 640.3 L1542.5 642.5 L1543.2 643.2 L1544.0 643.4 L1545.5 644.9 L1547.0 645.3 L1548.5 647.2 L1550.0 647.2 L1551.5 649.0 L1553.0 649.3 L1554.5 650.8 L1556.0 651.5 L1557.5 652.2 L1559.0 654.0 L1560.5 654.5 L1562.0 656.0 L1562.3 655.9 L1563.5 656.6 L1565.0 656.9 L1566.5 657.3 L1568.0 658.5 L1569.5 658.6 L1571.0 659.7 L1572.5 659.8 L1574.0 661.0 L1575.5 661.5 L1577.0 662.4 L1578.5 662.5 L1580.0 663.8 L1581.4 663.8 L1581.5 664.0 L1583.0 663.4 L1584.5 664.3 L1586.0 663.7 L1587.5 664.2 L1589.0 663.6 L1590.5 663.7 L1592.0 663.4 L1593.5 663.7 L1594.1 663.8 L1595.0 664.0 L1596.5 663.5 L1598.0 663.7 L1599.5 663.8 L1601.0 662.9 L1602.5 663.6 L1604.0 662.7 L1605.5 663.1 L1607.0 662.3 L1608.5 662.3 L1610.0 662.9 L1611.5 662.5 L1613.0 661.8 L1613.2 662.3 L1614.5 661.8 L1616.0 661.9 L1617.5 661.2 L1619.0 661.4 L1620.5 661.2 L1622.0 660.4 L1623.5 660.5 L1625.0 659.8 L1626.5 659.9 L1628.0 658.8 L1629.1 659.1 L1629.5 659.2 L1631.0 659.9 L1632.5 661.1 L1634.0 661.8 L1635.5 662.2 L1637.0 663.4 L1638.5 663.5 L1640.0 664.6 L1640.2 664.8 L1641.5 664.0 L1643.0 662.1 L1644.5 661.1 L1644.8 660.6 L1646.0 658.7 L1647.5 656.0 L1649.0 652.9 L1650.5 650.5 L1652.0 647.3 L1652.7 646.3 L1653.5 645.1 L1655.0 644.0 L1656.5 641.6 L1658.0 640.2 L1659.5 638.2 L1661.0 636.8 L1662.3 635.1 L1662.5 634.8 L1664.0 635.4 L1665.5 634.9 L1667.0 634.2 L1668.5 634.1 L1670.0 634.4 L1671.5 633.9 L1673.0 634.1 L1674.5 633.3 L1675.0 633.5 L1676.0 634.3 L1677.5 634.8 L1679.0 634.7 L1680.5 635.3 L1682.0 636.7 L1683.5 637.3 L1685.0 637.4 L1686.5 638.4 L1688.0 639.2 L1689.5 639.0 L1690.9 639.9 L1691.0 640.1 L1692.5 640.7 L1694.0 642.3 L1695.5 643.1 L1697.0 644.1 L1698.5 645.7 L1700.0 646.6 L1701.5 648.3 L1703.0 648.8 L1703.6 649.4 L1704.5 649.8 L1706.0 650.5 L1707.5 650.7 L1709.0 650.4 L1710.5 651.5 L1712.0 651.4 L1713.5 651.4 L1715.0 652.0 L1716.3 652.6 L1716.5 652.9 L1718.0 650.9 L1719.5 649.9 L1721.0 649.1 L1722.5 647.3 L1724.0 646.7 L1725.5 645.4 L1727.0 644.0 L1728.5 643.3 L1730.0 641.2 L1731.5 640.9 L1732.2 639.9 L1733.0 640.0 L1734.5 640.8 L1736.0 642.3 L1737.5 642.5 L1739.0 643.8 L1740.5 644.3 L1742.0 645.7 L1743.5 645.8 L1745.0 647.2 L1746.5 647.3 L1748.0 648.2 L1749.5 648.8 L1749.7 649.4 L1751.0 649.0 L1752.5 647.6 L1754.0 646.5 L1755.5 646.3 L1757.0 645.2 L1758.5 644.8 L1760.0 643.2 L1760.9 643.0 L1761.5 639.6 L1763.0 629.8 L1764.5 621.5 L1766.0 612.2 L1767.5 603.5 L1768.8 595.4 L1769.0 595.1 L1770.5 590.7 L1772.0 587.7 L1773.5 583.5 L1775.0 579.8 L1775.2 579.5 L1776.5 582.3 L1778.0 585.3 L1779.5 588.3 L1781.0 590.9 L1782.5 594.5 L1784.0 596.9 L1784.7 598.5 L1785.5 600.2 L1787.0 602.7 L1788.5 605.0 L1790.0 608.1 L1791.5 610.2 L1793.0 613.8 L1794.5 615.7 L1796.0 619.0 L1797.5 620.9 L1799.0 624.2 L1799.0 624.0 L1800.5 621.3 L1802.0 618.9 L1803.5 617.0 L1805.0 614.0 L1806.5 611.6 L1807.0 611.3 L1808.0 611.7 L1809.5 613.2 L1811.0 613.8 L1812.5 614.6 L1814.0 616.3 L1815.5 616.5 L1817.0 618.4 L1818.5 619.2 L1820.0 619.8 L1821.3 620.8 L1821.5 621.1 L1823.0 620.0 L1824.5 618.5 L1826.0 618.0 L1827.5 616.3 L1829.0 616.1 L1830.5 614.5 L1830.8 614.5 L1832.0 614.4 L1833.5 614.4 L1835.0 613.4 L1836.5 613.7 L1838.0 613.5 L1839.5 612.8 L1840.4 612.9 L1841.0 612.5 L1842.5 610.3 L1844.0 609.7 L1845.5 607.4 L1847.0 606.7 L1848.3 604.9 L1848.5 604.7 L1848.5 684.0 Z" fill="#EAB839" fill-opacity="0.1"/>
<path d="M1029.5 684.0 L1029.5 613.9 L1031.5 614.0 L1033.0 614.5 L1033.5 607.1 L1035.5 570.3 L1036.8 549.3 L1037.5 548.7 L1039.5 539.7 L1040.9 533.4 L1041.5 540.5 L1043.5 574.3 L1044.1 582.7 L1045.5 586.0 L1047.5 592.7 L1049.5 596.3 L1051.5 605.5 L1052.0 605.0 L1053.5 614.7 L1055.5 623.6 L1056.8 633.6 L1057.5 637.3 L1059.5 639.8 L1061.5 648.1 L1063.5 652.6 L1065.5 660.5 L1066.4 662.3 L1067.5 664.1 L1069.5 663.6 L1071.5 666.6 L1073.5 666.1 L1075.4 669.0 L1077.4 667.9 L1079.1 670.2 L1079.4 671.1 L1081.4 672.1 L1083.4 670.1 L1085.4 673.7 L1087.4 674.4 L1089.4 671.2 L1091.4 674.7 L1093.4 673.4 L1095.0 675.0 L1095.4 676.5 L1097.4 676.4 L1098.2 678.2 L1099.4 671.2 L1101.4 655.9 L1101.4 657.9 L1103.4 650.0 L1105.4 644.5 L1107.4 641.2 L1109.4 638.3 L1110.9 633.6 L1111.4 630.7 L1113.4 624.2 L1115.4 619.7 L1117.4 610.6 L1119.4 605.9 L1120.5 601.8 L1121.4 605.8 L1123.4 607.6 L1125.4 614.4 L1127.4 615.3 L1129.4 623.3 L1131.4 624.4 L1133.2 630.4 L1133.4 630.0 L1135.4 634.4 L1137.4 634.8 L1139.4 638.4 L1139.5 640.0 L1141.4 628.7 L1143.4 620.7 L1144.3 614.5 L1145.4 619.2 L1147.4 624.7 L1149.3 630.4 L1150.7 636.8 L1151.3 634.2 L1153.3 634.8 L1155.3 629.5 L1157.3 630.2 L1159.3 625.3 L1161.3 625.3 L1161.8 624.1 L1163.3 626.8 L1165.3 632.8 L1167.3 638.2 L1169.3 640.5 L1171.3 645.7 L1171.4 646.4 L1173.3 647.4 L1175.3 651.7 L1177.3 650.9 L1179.3 654.8 L1181.3 655.0 L1183.3 658.9 L1184.1 659.1 L1185.3 659.1 L1187.3 661.2 L1189.3 662.4 L1191.3 662.1 L1193.3 664.5 L1195.3 662.9 L1196.8 665.4 L1197.3 665.8 L1199.3 659.5 L1201.3 656.4 L1203.3 649.4 L1204.8 648.0 L1205.3 649.1 L1207.3 648.8 L1209.3 652.3 L1211.1 652.7 L1211.3 652.5 L1213.3 654.8 L1215.3 659.5 L1217.3 659.5 L1219.3 665.8 L1221.3 669.0 L1222.3 668.6 L1223.3 667.3 L1225.3 669.0 L1227.3 672.0 L1229.3 669.4 L1231.2 671.4 L1233.2 674.2 L1235.0 673.4 L1235.2 670.5 L1237.2 659.0 L1239.2 650.3 L1239.5 646.3 L1241.2 647.8 L1243.2 642.7 L1245.2 645.1 L1247.2 641.4 L1247.5 643.2 L1249.2 647.9 L1251.2 649.3 L1253.2 655.3 L1253.9 655.9 L1255.2 648.2 L1257.2 641.2 L1259.2 627.3 L1260.2 624.1 L1261.2 625.5 L1263.2 632.9 L1265.0 636.8 L1265.2 635.3 L1267.2 643.8 L1269.2 646.1 L1271.2 649.1 L1273.2 657.5 L1274.5 659.1 L1275.2 657.3 L1277.2 661.0 L1279.2 659.8 L1281.2 663.9 L1283.2 665.0 L1285.2 662.3 L1287.2 667.2 L1289.2 664.6 L1291.2 666.1 L1293.2 669.2 L1293.6 668.6 L1295.2 662.6 L1297.2 659.3 L1299.2 651.5 L1301.2 648.2 L1301.6 646.4 L1303.2 652.3 L1305.2 656.6 L1306.4 659.1 L1307.2 658.3 L1309.2 663.3 L1311.2 662.0 L1313.2 663.3 L1315.2 667.3 L1317.2 666.6 L1319.1 668.6 L1319.2 670.5 L1321.1 664.8 L1323.1 658.6 L1325.1 657.5 L1327.1 653.3 L1328.6 647.9 L1329.1 650.3 L1331.1 648.4 L1333.1 651.2 L1335.1 655.5 L1337.1 653.0 L1338.2 655.9 L1339.1 657.7 L1341.1 656.8 L1343.1 661.5 L1345.1 663.9 L1347.1 666.2 L1347.7 665.4 L1349.1 664.8 L1351.1 658.2 L1353.1 656.0 L1355.1 655.9 L1357.1 650.5 L1359.1 647.2 L1360.5 646.4 L1361.1 645.3 L1363.1 646.0 L1365.1 649.9 L1367.1 649.3 L1369.1 653.2 L1370.0 652.7 L1371.1 652.8 L1373.1 656.1 L1375.1 654.2 L1377.1 659.2 L1379.1 660.1 L1379.5 659.1 L1381.1 658.6 L1383.1 661.9 L1385.1 662.3 L1387.1 662.4 L1389.1 659.3 L1391.1 662.5 L1392.3 662.2 L1393.1 657.8 L1395.0 642.5 L1397.0 624.9 L1398.6 614.5 L1399.0 614.2 L1401.0 599.8 L1403.0 590.0 L1405.0 578.1 L1407.0 569.4 L1409.0 557.3 L1409.8 554.1 L1411.0 562.2 L1413.0 569.4 L1414.5 579.5 L1415.0 582.9 L1417.0 587.0 L1419.0 594.5 L1421.0 599.3 L1422.5 605.0 L1423.0 607.2 L1425.0 609.8 L1427.0 613.9 L1428.8 619.3 L1429.0 621.1 L1431.0 623.6 L1433.0 629.2 L1435.0 635.2 L1435.2 636.8 L1437.0 637.3 L1439.0 636.3 L1439.8 636.8 L1441.0 639.5 L1443.0 639.9 L1445.0 645.1 L1447.0 643.9 L1447.7 646.3 L1449.0 643.5 L1451.0 641.4 L1453.0 639.6 L1455.0 637.7 L1457.0 638.7 L1459.0 633.9 L1460.5 633.6 L1461.0 633.3 L1463.0 636.3 L1465.0 634.7 L1467.0 639.4 L1469.0 638.4 L1470.0 640.0 L1471.0 626.2 L1471.6 614.5 L1473.0 617.6 L1475.0 616.3 L1477.0 616.9 L1479.0 618.8 L1479.5 620.9 L1481.0 619.0 L1483.0 612.4 L1484.9 611.2 L1486.9 603.1 L1488.9 601.1 L1489.1 600.2 L1490.9 602.0 L1492.9 607.1 L1494.9 609.5 L1496.9 612.8 L1498.6 614.5 L1498.9 614.0 L1500.9 621.7 L1502.9 623.8 L1504.9 631.0 L1506.9 633.9 L1507.5 636.8 L1508.9 624.8 L1510.9 604.8 L1511.4 601.8 L1512.9 605.1 L1514.9 607.4 L1516.9 609.5 L1517.7 608.2 L1518.9 609.9 L1520.9 618.0 L1522.9 620.4 L1524.9 626.2 L1526.9 634.6 L1527.3 633.6 L1528.9 638.2 L1530.9 640.3 L1532.9 648.6 L1534.9 653.0 L1536.8 655.9 L1536.9 654.5 L1538.9 658.9 L1540.9 657.4 L1542.9 659.8 L1544.9 660.7 L1546.9 659.8 L1548.9 663.3 L1549.5 662.3 L1550.9 663.7 L1552.9 663.8 L1554.9 661.6 L1556.9 662.5 L1558.8 666.8 L1560.8 663.5 L1562.3 665.4 L1562.8 666.3 L1564.8 664.9 L1566.8 666.6 L1568.8 670.2 L1570.8 668.8 L1572.8 671.3 L1574.8 669.9 L1575.0 671.8 L1576.8 668.1 L1578.8 669.2 L1580.8 664.7 L1582.8 665.9 L1584.5 662.3 L1584.8 663.5 L1586.8 661.3 L1588.8 661.5 L1590.8 662.5 L1592.8 663.7 L1594.1 665.4 L1594.8 666.3 L1596.8 666.3 L1598.8 667.3 L1600.8 666.5 L1602.8 665.0 L1604.8 664.0 L1606.8 666.5 L1606.8 665.4 L1608.8 661.2 L1610.8 660.4 L1612.8 654.7 L1613.2 655.9 L1614.8 657.5 L1616.8 654.7 L1618.8 655.6 L1620.8 659.6 L1622.8 656.6 L1624.8 659.4 L1625.9 659.1 L1626.8 657.6 L1628.8 661.6 L1630.8 660.2 L1632.8 662.5 L1634.8 661.3 L1635.5 662.3 L1636.8 666.3 L1638.8 666.3 L1640.2 670.2 L1640.8 668.0 L1642.8 662.3 L1644.8 661.1 L1644.8 659.0 L1646.8 649.9 L1648.7 644.5 L1650.7 636.0 L1652.7 627.2 L1652.7 625.3 L1654.7 620.8 L1656.7 617.8 L1658.7 609.2 L1660.7 607.2 L1662.3 601.7 L1662.7 605.0 L1664.7 609.9 L1666.7 618.5 L1668.6 624.0 L1668.7 622.5 L1670.7 621.2 L1672.7 619.2 L1674.7 616.0 L1675.0 617.6 L1676.7 621.9 L1678.7 624.8 L1680.7 625.1 L1682.7 632.7 L1684.5 633.5 L1684.7 631.6 L1686.7 636.3 L1688.7 636.2 L1690.7 640.5 L1690.9 639.9 L1692.7 641.1 L1694.7 642.3 L1696.7 646.8 L1698.7 646.2 L1700.7 651.4 L1702.7 653.6 L1703.6 652.6 L1704.7 652.8 L1706.7 657.3 L1708.7 657.0 L1710.7 661.7 L1712.7 660.1 L1713.2 662.2 L1714.7 656.9 L1716.7 655.1 L1718.7 648.5 L1720.7 646.7 L1722.7 638.4 L1722.7 639.9 L1724.7 633.9 L1726.7 632.2 L1728.7 627.3 L1730.6 621.3 L1730.7 622.4 L1732.6 629.8 L1734.6 633.5 L1736.6 638.7 L1738.6 646.3 L1738.6 645.8 L1740.6 646.7 L1742.6 651.8 L1744.6 649.4 L1746.6 652.6 L1748.6 653.9 L1749.7 655.8 L1750.6 656.6 L1752.6 653.5 L1754.6 654.5 L1756.6 649.8 L1758.6 651.7 L1760.2 649.4 L1760.6 642.4 L1762.6 611.7 L1764.6 579.1 L1765.6 560.3 L1766.6 548.6 L1768.6 526.3 L1770.4 506.3 L1770.6 505.2 L1772.6 514.3 L1774.6 521.7 L1775.2 525.4 L1776.6 537.6 L1778.6 551.0 L1780.0 563.6 L1780.6 570.8 L1782.6 586.6 L1784.6 598.9 L1786.3 614.4 L1786.6 616.1 L1788.6 621.2 L1790.6 629.0 L1792.6 638.3 L1794.6 642.7 L1795.8 649.4 L1796.6 647.4 L1798.6 638.0 L1800.6 629.3 L1802.6 616.5 L1804.5 610.0 L1805.4 604.9 L1806.5 603.7 L1808.5 605.4 L1810.5 607.9 L1812.5 607.0 L1813.3 608.1 L1814.5 609.2 L1816.5 613.7 L1818.5 619.9 L1820.5 623.6 L1822.5 625.9 L1824.5 630.3 L1824.5 628.3 L1826.5 620.8 L1828.5 607.7 L1829.2 604.9 L1830.5 606.9 L1832.5 605.8 L1834.5 608.9 L1836.5 608.6 L1838.5 609.2 L1838.8 611.3 L1840.5 606.9 L1842.5 606.1 L1844.5 601.9 L1846.5 595.8 L1848.3 593.8 L1848.5 594.7 L1848.5 684.0 Z" fill="#6ED0E0" fill-opacity="0.1"/>
<path d="M1029.5 414.3 L1029.8 417.3 L1031.4 607.8 L1031.7 610.8 L1033.9 584.3 L1034.5 582.4 L1036.1 484.5 L1036.8 444.5 L1038.3 482.1 L1039.3 500.0 L1040.5 499.4 L1040.9 503.2 L1042.7 587.6 L1044.1 646.3 L1044.9 637.8 L1047.1 623.9 L1047.3 620.9 L1049.3 594.9 L1051.5 583.3 L1052.0 573.2 L1053.7 601.9 L1055.2 636.8 L1055.9 643.6 L1058.1 649.5 L1060.0 665.4 L1060.3 667.7 L1062.5 668.3 L1064.7 680.0 L1066.4 678.2 L1066.9 671.1 L1069.1 669.0 L1071.3 667.8 L1073.5 654.9 L1074.3 655.9 L1075.7 661.7 L1077.9 677.0 L1079.1 681.3 L1080.1 673.7 L1082.3 676.1 L1084.5 666.7 L1085.5 668.6 L1086.7 668.5 L1088.9 658.4 L1090.2 662.3 L1091.2 667.6 L1093.3 668.1 L1095.5 677.1 L1097.8 674.5 L1098.2 681.3 L1100.0 665.7 L1101.4 646.4 L1102.2 628.6 L1103.9 595.5 L1104.3 609.7 L1106.1 636.8 L1106.6 634.5 L1108.8 605.8 L1110.3 597.0 L1111.0 606.3 L1113.2 615.3 L1115.4 638.5 L1115.7 636.7 L1117.6 582.7 L1119.5 524.0 L1119.8 525.2 L1122.0 587.2 L1123.6 624.0 L1124.2 621.4 L1126.4 641.8 L1128.6 656.5 L1130.0 662.3 L1130.8 661.3 L1133.0 669.8 L1135.2 666.3 L1137.4 679.0 L1138.0 675.0 L1139.6 641.3 L1141.8 603.8 L1143.4 579.6 L1144.0 592.0 L1146.2 622.0 L1147.5 646.3 L1148.4 658.7 L1150.6 666.0 L1151.6 676.6 L1152.8 634.7 L1153.9 601.8 L1155.0 607.6 L1157.2 615.4 L1158.6 617.7 L1159.4 616.5 L1161.6 641.3 L1163.8 652.8 L1165.0 655.9 L1166.0 651.0 L1168.2 648.3 L1169.8 640.0 L1170.4 637.5 L1172.6 657.0 L1174.5 665.4 L1174.8 662.9 L1177.0 663.1 L1179.2 652.2 L1180.9 649.5 L1181.4 654.9 L1183.6 656.6 L1185.8 658.9 L1187.3 659.1 L1188.0 652.2 L1190.2 647.6 L1192.0 646.4 L1192.4 648.8 L1194.6 651.2 L1196.8 659.1 L1196.8 660.6 L1199.0 646.5 L1201.2 627.2 L1203.4 618.4 L1204.1 609.8 L1205.6 612.6 L1207.8 627.5 L1209.5 627.3 L1210.0 628.9 L1212.2 673.6 L1212.7 675.0 L1214.4 678.2 L1216.6 669.9 L1218.8 671.4 L1221.0 676.0 L1222.3 671.8 L1223.2 665.2 L1225.4 667.1 L1227.7 657.7 L1228.6 659.1 L1229.8 666.4 L1232.0 663.5 L1234.2 678.6 L1235.0 675.0 L1236.4 665.5 L1236.5 659.5 L1238.7 647.9 L1240.8 624.2 L1242.7 605.0 L1243.1 602.8 L1245.3 623.3 L1247.5 631.3 L1247.5 633.6 L1249.7 654.4 L1251.9 668.5 L1252.3 675.0 L1254.1 651.6 L1256.3 609.3 L1258.5 585.7 L1260.2 554.2 L1260.7 556.9 L1262.9 611.1 L1265.0 646.4 L1265.1 651.9 L1267.3 655.6 L1269.5 675.2 L1269.8 671.8 L1271.7 667.3 L1273.9 668.6 L1276.1 670.1 L1277.7 662.3 L1278.3 658.2 L1280.5 669.6 L1282.7 664.6 L1284.9 674.2 L1287.1 672.6 L1287.3 675.0 L1289.3 677.3 L1291.5 666.3 L1293.7 662.8 L1295.9 665.9 L1296.8 659.0 L1298.1 645.3 L1300.3 630.2 L1301.6 616.2 L1302.5 622.3 L1304.7 649.5 L1306.4 675.0 L1306.9 669.5 L1309.1 670.3 L1311.3 675.0 L1313.5 679.8 L1315.7 674.5 L1315.9 678.1 L1317.9 670.1 L1320.1 648.2 L1322.3 639.3 L1324.5 617.3 L1324.8 619.3 L1326.7 628.8 L1328.9 632.4 L1331.1 647.5 L1331.8 646.3 L1333.3 646.6 L1335.5 660.1 L1337.7 662.5 L1339.8 671.8 L1339.9 675.8 L1342.1 675.9 L1344.3 667.0 L1346.5 670.7 L1348.7 662.8 L1350.9 665.4 L1350.9 670.6 L1353.1 649.5 L1355.3 645.7 L1357.5 630.9 L1359.7 624.4 L1359.8 622.5 L1361.9 624.1 L1364.2 639.2 L1366.3 643.1 L1366.8 646.3 L1368.5 645.0 L1370.8 660.0 L1373.0 666.3 L1375.2 664.1 L1376.4 671.8 L1377.3 673.6 L1379.6 666.6 L1381.8 672.3 L1384.0 670.7 L1385.9 665.4 L1386.2 659.5 L1388.4 655.0 L1390.6 643.5 L1390.7 638.4 L1392.8 661.0 L1393.9 665.3 L1395.0 630.4 L1397.2 571.3 L1399.4 498.6 L1400.2 476.1 L1401.6 483.7 L1403.4 487.3 L1403.8 481.2 L1405.0 477.7 L1406.0 504.8 L1407.5 550.9 L1408.2 545.3 L1409.8 514.4 L1410.4 535.1 L1412.6 619.3 L1413.0 630.5 L1414.8 631.0 L1417.0 646.1 L1417.7 646.3 L1419.2 617.2 L1421.4 575.6 L1423.1 551.0 L1423.6 558.4 L1425.8 622.0 L1427.3 659.0 L1428.0 658.9 L1430.2 641.7 L1432.4 632.1 L1433.6 630.4 L1434.6 623.6 L1436.8 630.1 L1439.0 629.8 L1439.8 624.1 L1441.2 637.6 L1443.4 647.4 L1445.6 675.1 L1446.1 675.0 L1447.8 664.3 L1450.0 640.2 L1452.2 631.0 L1454.1 614.5 L1454.4 617.4 L1456.6 614.4 L1458.8 622.4 L1460.5 620.9 L1461.0 628.4 L1463.2 642.6 L1465.2 655.8 L1465.4 651.1 L1467.6 622.7 L1469.8 584.4 L1471.6 562.1 L1472.0 576.6 L1474.2 624.4 L1474.8 630.4 L1476.4 603.7 L1477.0 598.7 L1478.6 620.0 L1479.5 636.8 L1480.8 626.9 L1483.0 595.1 L1485.2 579.0 L1486.5 563.7 L1487.4 579.7 L1489.1 598.6 L1489.6 587.0 L1491.3 568.5 L1491.8 573.8 L1494.0 613.5 L1495.5 633.6 L1496.2 630.9 L1498.4 642.9 L1500.2 640.0 L1500.7 638.3 L1502.8 639.2 L1503.4 636.8 L1505.0 644.6 L1507.2 664.7 L1507.5 662.2 L1509.5 563.9 L1510.1 527.1 L1511.7 570.3 L1513.0 611.3 L1513.8 599.4 L1516.1 588.1 L1516.1 582.7 L1518.3 606.8 L1519.3 620.8 L1520.5 630.7 L1522.7 631.4 L1524.9 647.7 L1527.1 647.3 L1527.3 652.7 L1529.3 666.4 L1531.5 665.6 L1533.6 678.2 L1533.7 683.3 L1535.9 666.0 L1538.1 659.8 L1540.0 655.9 L1540.3 661.9 L1542.5 655.0 L1544.7 668.7 L1546.9 664.6 L1549.1 678.9 L1549.5 675.0 L1551.3 664.3 L1553.5 658.7 L1555.7 659.0 L1557.9 648.4 L1559.1 646.4 L1560.1 646.5 L1562.3 655.0 L1564.5 669.4 L1566.7 668.5 L1568.6 678.2 L1568.9 681.4 L1571.1 671.6 L1573.3 670.8 L1575.5 673.9 L1577.7 677.7 L1578.2 675.0 L1579.9 665.8 L1582.1 660.3 L1584.3 645.7 L1586.5 645.1 L1587.1 636.8 L1588.7 640.2 L1590.9 662.1 L1593.1 664.9 L1594.1 675.0 L1595.3 672.8 L1597.5 679.3 L1599.7 670.2 L1601.9 677.7 L1603.6 675.0 L1604.1 666.7 L1606.3 660.7 L1608.5 638.2 L1610.7 629.9 L1611.6 620.9 L1612.9 638.1 L1615.1 650.5 L1616.4 665.4 L1617.3 666.6 L1619.5 652.7 L1621.7 654.9 L1623.9 649.2 L1625.9 640.0 L1626.1 637.7 L1628.3 644.0 L1630.5 649.2 L1632.3 646.3 L1632.7 650.5 L1634.9 653.0 L1637.2 671.7 L1638.6 675.0 L1639.3 670.1 L1641.5 679.8 L1643.8 669.0 L1644.8 674.9 L1646.0 657.2 L1648.2 610.9 L1649.5 592.2 L1650.3 599.2 L1652.6 607.1 L1652.7 601.7 L1654.8 576.3 L1655.9 570.0 L1657.0 588.2 L1658.5 601.7 L1659.2 590.7 L1661.4 574.8 L1661.6 566.8 L1663.6 592.7 L1665.5 620.8 L1665.8 624.5 L1668.0 613.1 L1669.6 601.7 L1670.2 602.7 L1671.8 623.9 L1672.4 613.5 L1673.4 601.7 L1674.6 611.4 L1676.8 617.2 L1678.2 630.4 L1679.0 636.4 L1681.2 648.6 L1683.4 664.1 L1684.5 665.3 L1685.6 652.2 L1687.8 638.5 L1689.3 619.2 L1690.0 629.9 L1692.2 640.7 L1694.4 668.4 L1695.7 674.9 L1696.6 672.5 L1698.8 677.3 L1701.0 679.6 L1702.0 674.9 L1703.2 659.7 L1705.4 636.5 L1706.2 625.6 L1707.6 634.7 L1709.8 655.7 L1711.6 674.8 L1712.0 678.7 L1714.2 664.2 L1716.4 657.5 L1717.9 655.8 L1718.6 648.5 L1720.8 634.1 L1723.0 609.5 L1723.3 609.7 L1725.2 607.3 L1727.4 602.8 L1727.5 597.0 L1729.6 595.2 L1731.8 600.4 L1732.2 598.6 L1734.0 613.7 L1736.2 645.6 L1737.0 652.6 L1738.4 658.6 L1740.6 661.5 L1742.8 665.6 L1743.4 671.7 L1745.0 672.4 L1747.2 671.6 L1749.4 664.2 L1749.7 668.5 L1751.6 634.8 L1753.8 585.6 L1753.9 587.4 L1756.0 619.1 L1758.2 645.0 L1760.2 674.8 L1760.4 667.3 L1762.6 521.1 L1763.4 477.7 L1764.8 476.0 L1766.6 471.3 L1767.0 483.5 L1767.9 490.4 L1769.2 401.3 L1769.5 392.0 L1771.0 499.7 L1771.4 495.2 L1773.6 506.4 L1773.7 510.2 L1775.8 575.2 L1776.8 604.9 L1778.0 616.8 L1780.2 629.6 L1781.5 643.1 L1782.5 649.6 L1784.7 658.1 L1786.3 659.0 L1786.8 655.4 L1789.1 669.5 L1791.3 665.1 L1792.7 671.7 L1793.5 674.5 L1795.7 654.2 L1797.4 652.6 L1797.9 648.8 L1800.1 617.2 L1802.3 587.8 L1803.8 570.0 L1804.5 573.1 L1806.7 567.8 L1807.0 573.1 L1808.9 589.4 L1811.1 601.2 L1811.8 608.1 L1813.3 615.7 L1815.5 620.4 L1817.7 614.3 L1818.1 620.8 L1819.9 626.3 L1822.1 645.9 L1822.9 646.2 L1824.3 612.7 L1826.5 573.2 L1827.0 560.4 L1828.7 568.2 L1830.8 582.6 L1830.9 587.8 L1833.1 606.9 L1834.0 620.8 L1835.3 617.8 L1837.5 601.3 L1839.7 589.1 L1840.4 589.0 L1841.9 590.2 L1844.1 583.1 L1845.2 585.8 L1846.3 594.0 L1848.3 595.4 L1848.5 591.2" fill="none" stroke="#7EB26D" stroke-width="1.5" stroke-linejoin="round"/>
<path d="M1029.5 658.7 L1031.0 652.8 L1032.5 645.3 L1034.0 638.8 L1034.5 636.8 L1035.5 632.9 L1037.0 625.5 L1038.5 619.1 L1040.0 612.1 L1040.3 611.4 L1041.5 612.3 L1043.0 614.3 L1044.5 615.6 L1046.0 616.5 L1047.5 618.3 L1049.0 619.4 L1050.5 620.9 L1050.5 621.4 L1052.0 623.0 L1053.5 625.8 L1055.0 627.5 L1056.5 630.4 L1058.0 632.4 L1059.5 634.2 L1061.0 637.2 L1062.5 638.9 L1063.2 640.0 L1064.0 641.2 L1065.5 642.5 L1067.0 644.0 L1068.5 644.9 L1070.0 647.1 L1071.5 648.0 L1073.0 650.3 L1074.5 651.7 L1076.0 652.7 L1077.5 654.6 L1079.0 655.4 L1079.1 655.9 L1080.5 656.4 L1082.0 658.1 L1083.5 658.4 L1085.0 659.8 L1086.5 659.8 L1088.0 660.9 L1089.5 662.3 L1091.0 662.5 L1092.5 664.1 L1094.0 664.2 L1095.5 665.9 L1097.0 666.0 L1098.2 667.0 L1098.5 666.9 L1100.0 663.9 L1101.5 661.9 L1103.0 660.0 L1104.5 657.4 L1106.0 655.4 L1107.5 652.9 L1107.7 652.7 L1109.0 650.8 L1110.5 647.5 L1112.0 645.5 L1113.5 642.5 L1115.0 640.3 L1116.5 637.0 L1118.0 635.1 L1119.5 631.7 L1120.5 630.4 L1121.0 630.8 L1122.5 630.5 L1124.0 631.8 L1125.5 631.9 L1127.0 631.8 L1128.5 632.2 L1130.0 633.0 L1131.5 633.3 L1133.0 633.2 L1133.2 633.6 L1134.5 632.9 L1136.0 631.5 L1137.5 631.0 L1139.0 629.1 L1140.5 628.7 L1142.0 626.8 L1143.5 626.6 L1144.3 625.7 L1145.0 626.5 L1146.5 629.2 L1148.0 630.6 L1149.5 632.8 L1151.0 635.5 L1152.3 636.8 L1152.5 636.9 L1154.0 635.3 L1155.5 634.8 L1157.0 633.2 L1158.5 633.1 L1160.0 631.9 L1161.5 630.4 L1161.8 630.4 L1163.0 631.6 L1164.5 632.4 L1166.0 634.2 L1167.5 634.9 L1169.0 636.7 L1170.5 637.8 L1172.0 638.8 L1173.5 640.0 L1175.0 640.7 L1176.5 641.8 L1177.7 643.2 L1178.0 643.6 L1179.5 644.0 L1181.0 645.5 L1182.5 646.3 L1184.0 646.6 L1185.5 648.1 L1187.0 648.5 L1188.5 649.7 L1190.0 650.8 L1191.5 651.0 L1193.0 652.2 L1194.5 652.8 L1196.0 654.2 L1196.8 654.3 L1197.5 654.1 L1199.0 655.1 L1200.5 654.9 L1202.0 655.5 L1203.5 655.8 L1205.0 656.0 L1206.5 656.9 L1208.0 656.7 L1209.5 657.7 L1211.0 657.6 L1212.5 658.6 L1214.0 658.7 L1215.5 658.6 L1215.9 659.1 L1217.0 660.0 L1218.5 659.7 L1220.0 660.6 L1221.5 661.5 L1223.0 661.7 L1224.5 663.0 L1226.0 663.7 L1227.5 663.8 L1229.0 665.0 L1230.5 664.7 L1232.0 665.9 L1233.5 666.2 L1235.0 667.0 L1235.0 667.3 L1236.5 664.8 L1238.0 663.2 L1239.5 660.2 L1241.0 658.7 L1242.5 656.7 L1242.7 655.9 L1244.0 655.4 L1245.5 656.1 L1247.0 655.7 L1248.5 656.0 L1250.0 655.4 L1251.5 656.3 L1253.0 656.4 L1253.9 655.9 L1254.5 654.8 L1256.0 653.8 L1257.5 651.1 L1259.0 650.2 L1260.5 648.1 L1261.8 646.4 L1262.0 646.7 L1263.5 647.2 L1265.0 649.1 L1266.5 649.5 L1268.0 651.4 L1269.5 651.8 L1271.0 652.8 L1272.5 654.8 L1274.0 655.1 L1274.5 655.9 L1275.5 656.6 L1277.0 657.4 L1278.5 657.4 L1280.0 658.4 L1281.5 659.2 L1283.0 659.0 L1284.5 660.3 L1286.0 660.4 L1287.5 661.1 L1289.0 662.1 L1290.5 662.3 L1292.0 663.6 L1293.5 663.3 L1293.6 663.8 L1295.0 663.8 L1296.5 663.2 L1298.0 662.1 L1299.5 661.3 L1301.0 661.5 L1302.5 660.4 L1304.0 659.6 L1305.5 659.6 L1306.4 659.1 L1307.0 659.0 L1308.5 660.0 L1310.0 660.7 L1311.5 662.0 L1313.0 662.1 L1314.5 663.5 L1316.0 663.6 L1317.5 664.8 L1319.0 665.2 L1319.1 665.4 L1320.5 665.3 L1322.0 663.9 L1323.5 664.1 L1325.0 662.8 L1326.5 662.8 L1328.0 661.7 L1329.5 660.8 L1331.0 660.2 L1332.5 660.2 L1334.0 659.0 L1335.0 659.1 L1335.5 659.4 L1337.0 659.7 L1338.5 659.6 L1340.0 660.0 L1341.5 660.6 L1343.0 660.4 L1344.5 660.9 L1346.0 661.6 L1347.5 661.4 L1349.0 661.4 L1350.5 662.7 L1350.9 662.3 L1352.0 661.4 L1353.5 660.7 L1355.0 660.9 L1356.5 660.4 L1358.0 659.1 L1359.5 658.4 L1361.0 658.7 L1362.5 657.2 L1364.0 657.4 L1365.5 656.6 L1366.8 655.9 L1367.0 655.8 L1368.5 656.6 L1370.0 656.8 L1371.5 657.3 L1373.0 658.1 L1374.5 658.1 L1376.0 658.6 L1377.5 659.6 L1379.0 659.8 L1380.5 660.8 L1382.0 660.7 L1383.5 661.7 L1385.0 661.5 L1385.9 662.3 L1386.5 662.5 L1388.0 661.2 L1389.5 661.3 L1391.0 660.3 L1392.5 660.2 L1394.0 659.2 L1395.5 659.1 L1395.5 659.4 L1397.0 654.6 L1398.5 650.2 L1400.0 646.6 L1401.5 642.3 L1403.0 637.7 L1403.4 636.8 L1404.5 633.1 L1406.0 627.2 L1407.5 621.6 L1409.0 617.0 L1410.5 611.5 L1411.4 608.2 L1412.0 608.3 L1413.5 609.1 L1415.0 609.3 L1416.5 609.6 L1418.0 610.1 L1419.5 610.5 L1420.9 611.4 L1421.0 611.7 L1422.5 612.6 L1424.0 614.7 L1425.5 615.7 L1427.0 617.7 L1428.5 618.5 L1430.0 620.0 L1430.5 620.9 L1431.5 621.1 L1433.0 622.3 L1434.5 623.8 L1435.2 624.1 L1436.0 623.6 L1437.5 623.6 L1439.0 622.9 L1439.8 622.5 L1440.5 623.0 L1442.0 625.1 L1443.5 625.8 L1444.5 627.3 L1445.0 627.8 L1446.5 628.1 L1448.0 629.3 L1449.5 630.2 L1451.0 630.0 L1452.5 631.5 L1454.0 631.8 L1455.5 632.3 L1457.0 633.4 L1457.3 633.6 L1458.5 633.8 L1460.0 633.3 L1461.5 634.1 L1463.0 633.2 L1464.5 633.2 L1466.0 633.9 L1467.5 633.4 L1469.0 633.4 L1470.0 633.6 L1470.5 632.7 L1472.0 631.8 L1473.5 629.7 L1475.0 628.3 L1476.5 627.4 L1478.0 625.5 L1479.5 624.6 L1479.5 624.1 L1481.0 623.3 L1482.5 621.5 L1484.0 621.2 L1485.5 619.5 L1487.0 618.7 L1488.5 616.9 L1490.0 616.6 L1491.5 615.4 L1492.3 614.5 L1493.0 614.4 L1494.5 615.7 L1496.0 615.9 L1497.5 616.2 L1499.0 617.5 L1500.5 617.5 L1502.0 618.6 L1503.5 618.5 L1505.0 619.8 L1506.5 619.9 L1508.0 621.3 L1508.2 620.9 L1509.5 620.1 L1511.0 618.2 L1512.5 617.0 L1514.0 616.7 L1515.5 614.8 L1516.1 614.5 L1517.0 615.6 L1518.5 616.1 L1520.0 618.2 L1521.5 619.3 L1523.0 620.8 L1524.5 621.4 L1526.0 623.2 L1527.3 624.1 L1527.5 624.2 L1529.0 626.3 L1530.5 627.8 L1532.0 630.2 L1533.5 631.2 L1535.0 633.5 L1536.5 634.8 L1538.0 637.4 L1539.5 638.5 L1541.0 640.3 L1542.5 642.5 L1543.2 643.2 L1544.0 643.4 L1545.5 644.9 L1547.0 645.3 L1548.5 647.2 L1550.0 647.2 L1551.5 649.0 L1553.0 649.3 L1554.5 650.8 L1556.0 651.5 L1557.5 652.2 L1559.0 654.0 L1560.5 654.5 L1562.0 656.0 L1562.3 655.9 L1563.5 656.6 L1565.0 656.9 L1566.5 657.3 L1568.0 658.5 L1569.5 658.6 L1571.0 659.7 L1572.5 659.8 L1574.0 661.0 L1575.5 661.5 L1577.0 662.4 L1578.5 662.5 L1580.0 663.8 L1581.4 663.8 L1581.5 664.0 L1583.0 663.4 L1584.5 664.3 L1586.0 663.7 L1587.5 664.2 L1589.0 663.6 L1590.5 663.7 L1592.0 663.4 L1593.5 663.7 L1594.1 663.8 L1595.0 664.0 L1596.5 663.5 L1598.0 663.7 L1599.5 663.8 L1601.0 662.9 L1602.5 663.6 L1604.0 662.7 L1605.5 663.1 L1607.0 662.3 L1608.5 662.3 L1610.0 662.9 L1611.5 662.5 L1613.0 661.8 L1613.2 662.3 L1614.5 661.8 L1616.0 661.9 L1617.5 661.2 L1619.0 661.4 L1620.5 661.2 L1622.0 660.4 L1623.5 660.5 L1625.0 659.8 L1626.5 659.9 L1628.0 658.8 L1629.1 659.1 L1629.5 659.2 L1631.0 659.9 L1632.5 661.1 L1634.0 661.8 L1635.5 662.2 L1637.0 663.4 L1638.5 663.5 L1640.0 664.6 L1640.2 664.8 L1641.5 664.0 L1643.0 662.1 L1644.5 661.1 L1644.8 660.6 L1646.0 658.7 L1647.5 656.0 L1649.0 652.9 L1650.5 650.5 L1652.0 647.3 L1652.7 646.3 L1653.5 645.1 L1655.0 644.0 L1656.5 641.6 L1658.0 640.2 L1659.5 638.2 L1661.0 636.8 L1662.3 635.1 L1662.5 634.8 L1664.0 635.4 L1665.5 634.9 L1667.0 634.2 L1668.5 634.1 L1670.0 634.4 L1671.5 633.9 L1673.0 634.1 L1674.5 633.3 L1675.0 633.5 L1676.0 634.3 L1677.5 634.8 L1679.0 634.7 L1680.5 635.3 L1682.0 636.7 L1683.5 637.3 L1685.0 637.4 L1686.5 638.4 L1688.0 639.2 L1689.5 639.0 L1690.9 639.9 L1691.0 640.1 L1692.5 640.7 L1694.0 642.3 L1695.5 643.1 L1697.0 644.1 L1698.5 645.7 L1700.0 646.6 L1701.5 648.3 L1703.0 648.8 L1703.6 649.4 L1704.5 649.8 L1706.0 650.5 L1707.5 650.7 L1709.0 650.4 L1710.5 651.5 L1712.0 651.4 L1713.5 651.4 L1715.0 652.0 L1716.3 652.6 L1716.5 652.9 L1718.0 650.9 L1719.5 649.9 L1721.0 649.1 L1722.5 647.3 L1724.0 646.7 L1725.5 645.4 L1727.0 644.0 L1728.5 643.3 L1730.0 641.2 L1731.5 640.9 L1732.2 639.9 L1733.0 640.0 L1734.5 640.8 L1736.0 642.3 L1737.5 642.5 L1739.0 643.8 L1740.5 644.3 L1742.0 645.7 L1743.5 645.8 L1745.0 647.2 L1746.5 647.3 L1748.0 648.2 L1749.5 648.8 L1749.7 649.4 L1751.0 649.0 L1752.5 647.6 L1754.0 646.5 L1755.5 646.3 L1757.0 645.2 L1758.5 644.8 L1760.0 643.2 L1760.9 643.0 L1761.5 639.6 L1763.0 629.8 L1764.5 621.5 L1766.0 612.2 L1767.5 603.5 L1768.8 595.4 L1769.0 595.1 L1770.5 590.7 L1772.0 587.7 L1773.5 583.5 L1775.0 579.8 L1775.2 579.5 L1776.5 582.3 L1778.0 585.3 L1779.5 588.3 L1781.0 590.9 L1782.5 594.5 L1784.0 596.9 L1784.7 598.5 L1785.5 600.2 L1787.0 602.7 L1788.5 605.0 L1790.0 608.1 L1791.5 610.2 L1793.0 613.8 L1794.5 615.7 L1796.0 619.0 L1797.5 620.9 L1799.0 624.2 L1799.0 624.0 L1800.5 621.3 L1802.0 618.9 L1803.5 617.0 L1805.0 614.0 L1806.5 611.6 L1807.0 611.3 L1808.0 611.7 L1809.5 613.2 L1811.0 613.8 L1812.5 614.6 L1814.0 616.3 L1815.5 616.5 L1817.0 618.4 L1818.5 619.2 L1820.0 619.8 L1821.3 620.8 L1821.5 621.1 L1823.0 620.0 L1824.5 618.5 L1826.0 618.0 L1827.5 616.3 L1829.0 616.1 L1830.5 614.5 L1830.8 614.5 L1832.0 614.4 L1833.5 614.4 L1835.0 613.4 L1836.5 613.7 L1838.0 613.5 L1839.5 612.8 L1840.4 612.9 L1841.0 612.5 L1842.5 610.3 L1844.0 609.7 L1845.5 607.4 L1847.0 606.7 L1848.3 604.9 L1848.5 604.7" fill="none" stroke="#EAB839" stroke-width="1.5" stroke-linejoin="round"/>
<path d="M1029.5 613.9 L1031.5 614.0 L1033.0 614.5 L1033.5 607.1 L1035.5 570.3 L1036.8 549.3 L1037.5 548.7 L1039.5 539.7 L1040.9 533.4 L1041.5 540.5 L1043.5 574.3 L1044.1 582.7 L1045.5 586.0 L1047.5 592.7 L1049.5 596.3 L1051.5 605.5 L1052.0 605.0 L1053.5 614.7 L1055.5 623.6 L1056.8 633.6 L1057.5 637.3 L1059.5 639.8 L1061.5 648.1 L1063.5 652.6 L1065.5 660.5 L1066.4 662.3 L1067.5 664.1 L1069.5 663.6 L1071.5 666.6 L1073.5 666.1 L1075.4 669.0 L1077.4 667.9 L1079.1 670.2 L1079.4 671.1 L1081.4 672.1 L1083.4 670.1 L1085.4 673.7 L1087.4 674.4 L1089.4 671.2 L1091.4 674.7 L1093.4 673.4 L1095.0 675.0 L1095.4 676.5 L1097.4 676.4 L1098.2 678.2 L1099.4 671.2 L1101.4 655.9 L1101.4 657.9 L1103.4 650.0 L1105.4 644.5 L1107.4 641.2 L1109.4 638.3 L1110.9 633.6 L1111.4 630.7 L1113.4 624.2 L1115.4 619.7 L1117.4 610.6 L1119.4 605.9 L1120.5 601.8 L1121.4 605.8 L1123.4 607.6 L1125.4 614.4 L1127.4 615.3 L1129.4 623.3 L1131.4 624.4 L1133.2 630.4 L1133.4 630.0 L1135.4 634.4 L1137.4 634.8 L1139.4 638.4 L1139.5 640.0 L1141.4 628.7 L1143.4 620.7 L1144.3 614.5 L1145.4 619.2 L1147.4 624.7 L1149.3 630.4 L1150.7 636.8 L1151.3 634.2 L1153.3 634.8 L1155.3 629.5 L1157.3 630.2 L1159.3 625.3 L1161.3 625.3 L1161.8 624.1 L1163.3 626.8 L1165.3 632.8 L1167.3 638.2 L1169.3 640.5 L1171.3 645.7 L1171.4 646.4 L1173.3 647.4 L1175.3 651.7 L1177.3 650.9 L1179.3 654.8 L1181.3 655.0 L1183.3 658.9 L1184.1 659.1 L1185.3 659.1 L1187.3 661.2 L1189.3 662.4 L1191.3 662.1 L1193.3 664.5 L1195.3 662.9 L1196.8 665.4 L1197.3 665.8 L1199.3 659.5 L1201.3 656.4 L1203.3 649.4 L1204.8 648.0 L1205.3 649.1 L1207.3 648.8 L1209.3 652.3 L1211.1 652.7 L1211.3 652.5 L1213.3 654.8 L1215.3 659.5 L1217.3 659.5 L1219.3 665.8 L1221.3 669.0 L1222.3 668.6 L1223.3 667.3 L1225.3 669.0 L1227.3 672.0 L1229.3 669.4 L1231.2 671.4 L1233.2 674.2 L1235.0 673.4 L1235.2 670.5 L1237.2 659.0 L1239.2 650.3 L1239.5 646.3 L1241.2 647.8 L1243.2 642.7 L1245.2 645.1 L1247.2 641.4 L1247.5 643.2 L1249.2 647.9 L1251.2 649.3 L1253.2 655.3 L1253.9 655.9 L1255.2 648.2 L1257.2 641.2 L1259.2 627.3 L1260.2 624.1 L1261.2 625.5 L1263.2 632.9 L1265.0 636.8 L1265.2 635.3 L1267.2 643.8 L1269.2 646.1 L1271.2 649.1 L1273.2 657.5 L1274.5 659.1 L1275.2 657.3 L1277.2 661.0 L1279.2 659.8 L1281.2 663.9 L1283.2 665.0 L1285.2 662.3 L1287.2 667.2 L1289.2 664.6 L1291.2 666.1 L1293.2 669.2 L1293.6 668.6 L1295.2 662.6 L1297.2 659.3 L1299.2 651.5 L1301.2 648.2 L1301.6 646.4 L1303.2 652.3 L1305.2 656.6 L1306.4 659.1 L1307.2 658.3 L1309.2 663.3 L1311.2 662.0 L1313.2 663.3 L1315.2 667.3 L1317.2 666.6 L1319.1 668.6 L1319.2 670.5 L1321.1 664.8 L1323.1 658.6 L1325.1 657.5 L1327.1 653.3 L1328.6 647.9 L1329.1 650.3 L1331.1 648.4 L1333.1 651.2 L1335.1 655.5 L1337.1 653.0 L1338.2 655.9 L1339.1 657.7 L1341.1 656.8 L1343.1 661.5 L1345.1 663.9 L1347.1 666.2 L1347.7 665.4 L1349.1 664.8 L1351.1 658.2 L1353.1 656.0 L1355.1 655.9 L1357.1 650.5 L1359.1 647.2 L1360.5 646.4 L1361.1 645.3 L1363.1 646.0 L1365.1 649.9 L1367.1 649.3 L1369.1 653.2 L1370.0 652.7 L1371.1 652.8 L1373.1 656.1 L1375.1 654.2 L1377.1 659.2 L1379.1 660.1 L1379.5 659.1 L1381.1 658.6 L1383.1 661.9 L1385.1 662.3 L1387.1 662.4 L1389.1 659.3 L1391.1 662.5 L1392.3 662.2 L1393.1 657.8 L1395.0 642.5 L1397.0 624.9 L1398.6 614.5 L1399.0 614.2 L1401.0 599.8 L1403.0 590.0 L1405.0 578.1 L1407.0 569.4 L1409.0 557.3 L1409.8 554.1 L1411.0 562.2 L1413.0 569.4 L1414.5 579.5 L1415.0 582.9 L1417.0 587.0 L1419.0 594.5 L1421.0 599.3 L1422.5 605.0 L1423.0 607.2 L1425.0 609.8 L1427.0 613.9 L1428.8 619.3 L1429.0 621.1 L1431.0 623.6 L1433.0 629.2 L1435.0 635.2 L1435.2 636.8 L1437.0 637.3 L1439.0 636.3 L1439.8 636.8 L1441.0 639.5 L1443.0 639.9 L1445.0 645.1 L1447.0 643.9 L1447.7 646.3 L1449.0 643.5 L1451.0 641.4 L1453.0 639.6 L1455.0 637.7 L1457.0 638.7 L1459.0 633.9 L1460.5 633.6 L1461.0 633.3 L1463.0 636.3 L1465.0 634.7 L1467.0 639.4 L1469.0 638.4 L1470.0 640.0 L1471.0 626.2 L1471.6 614.5 L1473.0 617.6 L1475.0 616.3 L1477.0 616.9 L1479.0 618.8 L1479.5 620.9 L1481.0 619.0 L1483.0 612.4 L1484.9 611.2 L1486.9 603.1 L1488.9 601.1 L1489.1 600.2 L1490.9 602.0 L1492.9 607.1 L1494.9 609.5 L1496.9 612.8 L1498.6 614.5 L1498.9 614.0 L1500.9 621.7 L1502.9 623.8 L1504.9 631.0 L1506.9 633.9 L1507.5 636.8 L1508.9 624.8 L1510.9 604.8 L1511.4 601.8 L1512.9 605.1 L1514.9 607.4 L1516.9 609.5 L1517.7 608.2 L1518.9 609.9 L1520.9 618.0 L1522.9 620.4 L1524.9 626.2 L1526.9 634.6 L1527.3 633.6 L1528.9 638.2 L1530.9 640.3 L1532.9 648.6 L1534.9 653.0 L1536.8 655.9 L1536.9 654.5 L1538.9 658.9 L1540.9 657.4 L1542.9 659.8 L1544.9 660.7 L1546.9 659.8 L1548.9 663.3 L1549.5 662.3 L1550.9 663.7 L1552.9 663.8 L1554.9 661.6 L1556.9 662.5 L1558.8 666.8 L1560.8 663.5 L1562.3 665.4 L1562.8 666.3 L1564.8 664.9 L1566.8 666.6 L1568.8 670.2 L1570.8 668.8 L1572.8 671.3 L1574.8 669.9 L1575.0 671.8 L1576.8 668.1 L1578.8 669.2 L1580.8 664.7 L1582.8 665.9 L1584.5 662.3 L1584.8 663.5 L1586.8 661.3 L1588.8 661.5 L1590.8 662.5 L1592.8 663.7 L1594.1 665.4 L1594.8 666.3 L1596.8 666.3 L1598.8 667.3 L1600.8 666.5 L1602.8 665.0 L1604.8 664.0 L1606.8 666.5 L1606.8 665.4 L1608.8 661.2 L1610.8 660.4 L1612.8 654.7 L1613.2 655.9 L1614.8 657.5 L1616.8 654.7 L1618.8 655.6 L1620.8 659.6 L1622.8 656.6 L1624.8 659.4 L1625.9 659.1 L1626.8 657.6 L1628.8 661.6 L1630.8 660.2 L1632.8 662.5 L1634.8 661.3 L1635.5 662.3 L1636.8 666.3 L1638.8 666.3 L1640.2 670.2 L1640.8 668.0 L1642.8 662.3 L1644.8 661.1 L1644.8 659.0 L1646.8 649.9 L1648.7 644.5 L1650.7 636.0 L1652.7 627.2 L1652.7 625.3 L1654.7 620.8 L1656.7 617.8 L1658.7 609.2 L1660.7 607.2 L1662.3 601.7 L1662.7 605.0 L1664.7 609.9 L1666.7 618.5 L1668.6 624.0 L1668.7 622.5 L1670.7 621.2 L1672.7 619.2 L1674.7 616.0 L1675.0 617.6 L1676.7 621.9 L1678.7 624.8 L1680.7 625.1 L1682.7 632.7 L1684.5 633.5 L1684.7 631.6 L1686.7 636.3 L1688.7 636.2 L1690.7 640.5 L1690.9 639.9 L1692.7 641.1 L1694.7 642.3 L1696.7 646.8 L1698.7 646.2 L1700.7 651.4 L1702.7 653.6 L1703.6 652.6 L1704.7 652.8 L1706.7 657.3 L1708.7 657.0 L1710.7 661.7 L1712.7 660.1 L1713.2 662.2 L1714.7 656.9 L1716.7 655.1 L1718.7 648.5 L1720.7 646.7 L1722.7 638.4 L1722.7 639.9 L1724.7 633.9 L1726.7 632.2 L1728.7 627.3 L1730.6 621.3 L1730.7 622.4 L1732.6 629.8 L1734.6 633.5 L1736.6 638.7 L1738.6 646.3 L1738.6 645.8 L1740.6 646.7 L1742.6 651.8 L1744.6 649.4 L1746.6 652.6 L1748.6 653.9 L1749.7 655.8 L1750.6 656.6 L1752.6 653.5 L1754.6 654.5 L1756.6 649.8 L1758.6 651.7 L1760.2 649.4 L1760.6 642.4 L1762.6 611.7 L1764.6 579.1 L1765.6 560.3 L1766.6 548.6 L1768.6 526.3 L1770.4 506.3 L1770.6 505.2 L1772.6 514.3 L1774.6 521.7 L1775.2 525.4 L1776.6 537.6 L1778.6 551.0 L1780.0 563.6 L1780.6 570.8 L1782.6 586.6 L1784.6 598.9 L1786.3 614.4 L1786.6 616.1 L1788.6 621.2 L1790.6 629.0 L1792.6 638.3 L1794.6 642.7 L1795.8 649.4 L1796.6 647.4 L1798.6 638.0 L1800.6 629.3 L1802.6 616.5 L1804.5 610.0 L1805.4 604.9 L1806.5 603.7 L1808.5 605.4 L1810.5 607.9 L1812.5 607.0 L1813.3 608.1 L1814.5 609.2 L1816.5 613.7 L1818.5 619.9 L1820.5 623.6 L1822.5 625.9 L1824.5 630.3 L1824.5 628.3 L1826.5 620.8 L1828.5 607.7 L1829.2 604.9 L1830.5 606.9 L1832.5 605.8 L1834.5 608.9 L1836.5 608.6 L1838.5 609.2 L1838.8 611.3 L1840.5 606.9 L1842.5 606.1 L1844.5 601.9 L1846.5 595.8 L1848.3 593.8 L1848.5 594.7" fill="none" stroke="#6ED0E0" stroke-width="1.5" stroke-linejoin="round"/>
<text x="1023.0" y="375.9" text-anchor="end" class="tk">2.5</text>
<text x="1023.0" y="438.4" text-anchor="end" class="tk">2.0</text>
<text x="1023.0" y="500.9" text-anchor="end" class="tk">1.5</text>
<text x="1023.0" y="563.4" text-anchor="end" class="tk">1.0</text>
<text x="1023.0" y="625.9" text-anchor="end" class="tk">0.5</text>
<text x="1023.0" y="688.4" text-anchor="end" class="tk">0</text>
<text x="1079.1" y="703.9" text-anchor="middle" class="tk">09:00</text>
<text x="1194.3" y="703.9" text-anchor="middle" class="tk">10:00</text>
<text x="1309.5" y="703.9" text-anchor="middle" class="tk">11:00</text>
<text x="1424.7" y="703.9" text-anchor="middle" class="tk">12:00</text>
<text x="1539.9" y="703.9" text-anchor="middle" class="tk">13:00</text>
<text x="1655.1" y="703.9" text-anchor="middle" class="tk">14:00</text>
<text x="1770.3" y="703.9" text-anchor="middle" class="tk">15:00</text>
<rect x="1017" y="726.5" width="14" height="4" fill="#7EB26D"/>
<text x="1036" y="733" class="lg">gagarin_local.kernel.all.load.1 minute</text>
<rect x="1259" y="726.5" width="14" height="4" fill="#EAB839"/>
<text x="1278" y="733" class="lg">gagarin_local.kernel.all.load.15 minute</text>
<rect x="1508" y="726.5" width="14" height="4" fill="#6ED0E0"/>
<text x="1527" y="733" class="lg">gagarin_local.kernel.all.load.5 minute</text>
<path d="M1033.0 804.5 H1848.5" stroke="#48484b" stroke-width="1"/>
<path d="M1033.0 845.5 H1848.5" stroke="#48484b" stroke-width="1"/>
<path d="M1033.0 887.5 H1848.5" stroke="#48484b" stroke-width="1"/>
<path d="M1033.0 929.5 H1848.5" stroke="#48484b" stroke-width="1"/>
<path d="M1033.0 970.5 H1848.5" stroke="#48484b" stroke-width="1"/>
<path d="M1082.5 804.2 V970.6" stroke="#48484b" stroke-width="1"/>
<path d="M1197.5 804.2 V970.6" stroke="#48484b" stroke-width="1"/>
<path d="M1312.5 804.2 V970.6" stroke="#48484b" stroke-width="1"/>
<path d="M1427.5 804.2 V970.6" stroke="#48484b" stroke-width="1"/>
<path d="M1542.5 804.2 V970.6" stroke="#48484b" stroke-width="1"/>
<path d="M1656.5 804.2 V970.6" stroke="#48484b" stroke-width="1"/>
<path d="M1771.5 804.2 V970.6" stroke="#48484b" stroke-width="1"/>
<path d="M1033.0 970.6 L1033.0 962.7 L1034.5 959.5 L1036.0 957.1 L1036.9 955.5 L1037.5 932.0 L1039.0 874.7 L1040.3 824.8 L1040.5 827.0 L1042.0 851.0 L1043.5 873.9 L1043.5 873.7 L1045.0 905.3 L1046.2 929.0 L1046.5 928.1 L1048.0 927.3 L1048.8 926.4 L1049.5 933.0 L1050.1 939.6 L1051.0 937.8 L1052.5 935.6 L1054.0 933.9 L1054.1 934.3 L1055.5 939.4 L1056.7 942.2 L1057.0 942.8 L1058.5 942.3 L1060.0 941.8 L1060.7 940.9 L1061.5 940.5 L1063.0 941.1 L1064.5 942.1 L1066.0 942.7 L1067.5 943.3 L1069.0 943.8 L1070.5 942.6 L1071.2 943.6 L1072.0 943.7 L1073.5 943.7 L1075.0 943.2 L1076.5 942.4 L1078.0 942.8 L1079.5 941.9 L1081.0 943.5 L1082.5 943.2 L1084.0 942.4 L1084.5 942.3 L1085.5 942.9 L1087.0 945.6 L1088.4 946.2 L1088.5 946.3 L1090.0 945.4 L1091.5 943.9 L1092.4 942.3 L1093.0 941.9 L1094.5 940.7 L1096.0 940.1 L1097.5 938.7 L1099.0 937.2 L1100.3 937.0 L1100.5 936.8 L1102.0 939.8 L1103.5 940.3 L1104.3 942.2 L1105.0 939.0 L1106.5 935.2 L1108.0 929.5 L1108.2 929.1 L1109.5 932.4 L1111.0 936.3 L1112.2 939.6 L1112.5 938.0 L1114.0 932.3 L1115.5 923.7 L1116.1 921.1 L1117.0 922.2 L1118.5 924.0 L1118.8 925.1 L1120.0 919.2 L1121.5 910.5 L1122.9 902.8 L1123.3 901.3 L1124.4 914.8 L1125.9 930.7 L1126.7 939.6 L1127.4 940.1 L1128.9 941.5 L1130.4 940.7 L1131.9 941.3 L1132.0 942.3 L1133.4 942.4 L1134.9 944.3 L1136.4 944.7 L1137.9 944.7 L1139.4 945.6 L1139.9 946.2 L1140.9 943.2 L1142.4 940.3 L1143.9 937.0 L1143.9 936.0 L1145.4 936.8 L1146.9 936.7 L1147.8 935.7 L1148.4 937.5 L1149.9 939.6 L1151.4 942.6 L1151.8 942.2 L1152.9 940.5 L1154.4 940.1 L1155.8 939.6 L1155.9 940.4 L1157.4 938.3 L1158.9 935.9 L1160.4 935.3 L1160.5 934.3 L1161.9 937.0 L1163.4 940.1 L1164.9 941.7 L1165.0 942.3 L1166.4 942.1 L1167.9 943.1 L1169.4 943.0 L1170.9 944.0 L1172.4 945.6 L1173.9 944.9 L1175.4 944.7 L1176.9 946.2 L1176.9 945.3 L1178.4 944.4 L1179.9 944.5 L1181.4 942.5 L1182.2 942.3 L1182.9 941.9 L1184.4 941.8 L1185.9 943.7 L1187.4 942.8 L1188.9 942.6 L1190.4 942.5 L1191.9 942.8 L1193.4 943.2 L1194.9 944.4 L1196.4 943.6 L1197.9 943.6 L1199.4 944.7 L1200.7 944.9 L1200.9 943.3 L1202.4 938.2 L1203.9 929.9 L1205.4 924.2 L1206.9 918.0 L1207.3 915.9 L1208.4 922.4 L1209.9 932.6 L1211.2 939.6 L1211.4 939.7 L1212.9 940.5 L1214.4 942.1 L1215.9 942.6 L1217.4 944.6 L1218.9 945.5 L1219.2 946.2 L1220.4 945.8 L1221.9 944.1 L1223.4 942.0 L1224.4 940.9 L1224.9 940.3 L1226.4 941.9 L1227.9 943.0 L1229.4 944.1 L1229.7 944.9 L1230.9 944.4 L1232.4 945.6 L1233.9 944.2 L1235.4 944.0 L1236.9 945.7 L1238.4 945.0 L1239.9 945.9 L1241.4 944.7 L1241.6 944.9 L1242.9 941.0 L1244.4 935.0 L1245.9 929.7 L1247.4 924.1 L1247.7 922.4 L1248.9 926.2 L1250.4 930.1 L1251.9 935.1 L1253.4 941.1 L1254.8 944.9 L1254.9 945.6 L1256.4 943.9 L1257.9 941.0 L1259.4 939.9 L1260.9 938.4 L1262.4 936.4 L1262.7 935.7 L1263.9 937.1 L1265.4 937.6 L1266.9 938.9 L1268.4 940.0 L1269.8 940.3 L1271.3 942.6 L1272.0 942.3 L1272.8 943.6 L1274.3 942.6 L1275.8 945.1 L1277.3 944.9 L1277.3 945.7 L1278.8 943.6 L1280.3 940.9 L1281.2 940.9 L1281.8 942.6 L1283.3 943.0 L1284.8 946.7 L1285.2 946.2 L1286.3 946.4 L1287.8 945.0 L1289.3 945.0 L1290.8 945.8 L1292.3 945.5 L1293.8 945.6 L1295.3 945.8 L1295.8 944.9 L1296.8 939.8 L1298.3 933.1 L1299.8 928.7 L1300.5 925.1 L1301.3 926.4 L1302.8 932.3 L1304.3 934.9 L1305.8 940.5 L1307.3 944.6 L1307.6 944.9 L1308.8 944.2 L1310.3 941.6 L1311.8 940.4 L1312.9 938.3 L1313.3 938.1 L1314.8 940.5 L1316.3 941.4 L1317.8 944.0 L1319.3 945.2 L1319.5 944.9 L1320.8 943.1 L1322.3 941.1 L1323.8 938.1 L1325.3 936.1 L1325.3 937.0 L1326.8 940.0 L1328.3 942.8 L1329.8 946.4 L1330.1 946.2 L1331.3 946.4 L1332.8 945.5 L1334.3 945.9 L1335.8 946.7 L1337.3 946.3 L1338.8 945.2 L1340.3 946.9 L1341.8 946.9 L1343.3 946.2 L1343.3 945.4 L1344.8 946.3 L1346.3 946.0 L1347.8 946.8 L1349.3 945.8 L1350.8 945.7 L1352.3 946.2 L1353.8 947.1 L1355.3 945.4 L1356.5 946.2 L1356.8 944.5 L1358.3 940.9 L1359.8 936.8 L1361.3 931.4 L1361.8 929.8 L1362.8 932.1 L1364.3 936.5 L1365.8 939.8 L1367.1 942.3 L1367.3 941.4 L1368.8 943.0 L1370.3 941.6 L1371.8 941.9 L1373.3 942.9 L1374.8 942.1 L1375.0 942.3 L1376.3 942.2 L1377.8 940.2 L1379.3 940.8 L1380.8 938.7 L1382.3 937.9 L1382.9 938.3 L1383.8 938.8 L1385.3 939.4 L1386.8 940.8 L1388.3 942.5 L1389.8 943.0 L1391.3 942.5 L1392.8 944.1 L1393.5 944.9 L1394.3 944.6 L1395.8 943.7 L1397.3 943.4 L1398.8 942.2 L1400.3 940.6 L1401.8 940.2 L1403.3 940.7 L1404.0 939.6 L1404.8 935.7 L1406.3 929.0 L1407.8 922.0 L1409.3 913.7 L1410.8 906.3 L1412.0 900.0 L1412.3 902.6 L1413.8 914.0 L1415.3 927.2 L1416.8 938.3 L1417.2 942.2 L1418.3 943.4 L1419.8 942.7 L1421.3 944.3 L1422.8 944.7 L1424.3 944.8 L1425.2 944.9 L1425.8 944.2 L1427.3 942.2 L1427.9 942.3 L1428.8 939.6 L1430.3 933.1 L1431.8 927.9 L1433.1 922.5 L1433.2 923.8 L1433.2 923.3 L1434.8 930.2 L1436.2 937.3 L1437.2 942.3 L1437.8 942.9 L1438.4 942.3 L1439.2 940.4 L1440.8 939.7 L1441.1 938.3 L1442.2 939.0 L1443.8 940.7 L1445.2 941.6 L1446.8 943.4 L1448.2 943.6 L1449.7 945.5 L1450.4 946.3 L1451.2 945.8 L1452.7 941.8 L1454.2 940.4 L1455.7 937.3 L1457.0 935.7 L1457.2 935.5 L1458.7 936.5 L1460.2 938.0 L1461.7 941.3 L1463.2 942.6 L1464.7 944.0 L1466.2 945.5 L1466.2 944.9 L1467.7 945.2 L1469.2 943.0 L1470.7 943.2 L1472.2 942.4 L1473.7 941.9 L1475.2 942.0 L1475.5 941.0 L1476.7 941.8 L1478.2 942.6 L1479.7 941.3 L1481.2 942.7 L1482.7 943.1 L1484.2 943.7 L1485.7 943.8 L1486.0 943.6 L1487.2 943.8 L1488.7 942.2 L1490.2 942.8 L1491.7 941.2 L1493.2 940.9 L1494.7 940.9 L1496.2 940.0 L1497.7 938.6 L1499.2 937.8 L1499.3 938.3 L1500.7 938.7 L1502.2 940.1 L1503.7 941.6 L1505.2 942.1 L1506.7 941.9 L1507.2 942.3 L1508.2 940.5 L1509.7 938.9 L1511.2 935.4 L1512.7 933.3 L1513.8 931.7 L1514.2 931.6 L1515.7 934.9 L1517.2 938.6 L1518.7 941.9 L1519.1 942.3 L1520.2 942.2 L1521.7 941.2 L1523.2 941.8 L1524.7 940.7 L1526.2 939.2 L1527.7 938.6 L1529.2 939.9 L1530.7 939.4 L1531.0 938.3 L1532.2 939.8 L1533.7 939.9 L1535.2 940.1 L1536.7 940.4 L1538.2 941.5 L1539.7 942.1 L1541.2 944.3 L1541.5 943.6 L1542.7 944.4 L1544.2 944.2 L1545.7 942.9 L1547.2 943.1 L1548.7 943.2 L1550.2 944.5 L1551.7 942.9 L1552.1 943.6 L1553.2 942.9 L1554.7 940.8 L1556.2 938.6 L1557.4 937.0 L1557.7 938.3 L1559.2 938.7 L1560.7 941.0 L1562.2 942.1 L1563.7 943.8 L1564.0 944.9 L1565.2 943.9 L1566.7 944.3 L1568.2 943.8 L1569.7 943.5 L1571.2 945.3 L1572.7 943.7 L1574.2 944.8 L1575.7 944.3 L1577.2 944.2 L1578.5 943.6 L1578.7 943.9 L1580.2 944.1 L1581.7 943.6 L1583.2 942.9 L1584.7 942.2 L1586.2 942.1 L1587.7 941.8 L1589.1 941.0 L1589.2 941.1 L1590.7 941.2 L1592.2 940.8 L1593.7 942.4 L1595.2 942.0 L1596.7 941.4 L1598.2 941.8 L1599.7 943.5 L1601.2 942.5 L1602.7 943.0 L1604.2 943.9 L1604.9 943.6 L1605.7 943.8 L1607.2 941.6 L1608.7 940.6 L1610.2 939.6 L1611.7 937.6 L1613.1 938.2 L1614.6 935.4 L1615.5 935.7 L1616.1 937.0 L1617.6 936.3 L1619.1 937.3 L1620.6 939.6 L1622.1 940.5 L1623.6 940.2 L1625.1 941.8 L1626.1 942.3 L1626.6 942.3 L1628.1 942.7 L1629.6 941.7 L1631.1 942.9 L1632.6 943.3 L1634.1 942.7 L1635.6 943.1 L1636.6 942.3 L1637.1 942.9 L1638.6 940.8 L1640.1 940.8 L1641.6 939.9 L1643.1 938.4 L1644.6 936.5 L1646.1 936.6 L1647.2 935.7 L1647.6 936.9 L1649.1 937.0 L1650.6 939.0 L1652.1 940.8 L1653.6 941.5 L1655.1 941.7 L1656.6 944.2 L1657.8 944.9 L1658.1 941.9 L1659.6 931.9 L1661.1 920.3 L1662.5 909.3 L1662.6 909.4 L1664.1 921.6 L1665.6 932.1 L1667.0 942.3 L1667.1 941.9 L1668.6 941.4 L1670.1 940.0 L1671.6 938.5 L1673.1 937.0 L1673.6 935.7 L1674.6 936.8 L1676.1 938.2 L1677.6 939.2 L1679.1 940.3 L1680.6 942.5 L1681.6 942.3 L1682.1 942.0 L1683.6 941.6 L1685.1 943.0 L1686.6 942.7 L1688.1 942.9 L1689.6 943.2 L1691.1 942.6 L1692.6 942.6 L1694.1 942.5 L1695.6 944.0 L1697.1 944.4 L1697.4 943.6 L1698.6 943.9 L1700.1 942.6 L1701.6 944.2 L1703.1 943.7 L1704.6 942.9 L1706.1 941.8 L1707.6 943.3 L1709.1 942.7 L1710.6 942.5 L1710.6 942.3 L1712.1 940.3 L1713.6 940.7 L1715.1 938.2 L1716.6 938.1 L1718.1 936.4 L1719.6 935.7 L1721.1 935.8 L1722.6 934.4 L1723.8 933.1 L1724.1 933.8 L1725.6 933.2 L1727.1 933.9 L1728.6 934.8 L1730.1 934.2 L1731.6 935.5 L1731.8 935.7 L1733.1 938.3 L1734.6 939.7 L1736.1 941.8 L1737.0 942.3 L1737.6 940.5 L1739.1 937.3 L1740.6 933.5 L1741.0 931.7 L1742.1 934.1 L1743.6 936.2 L1745.1 938.4 L1746.6 940.8 L1747.6 943.6 L1748.1 944.3 L1749.6 943.9 L1751.1 942.1 L1752.6 942.6 L1754.1 941.5 L1755.6 941.5 L1757.1 941.5 L1758.6 940.0 L1760.0 940.1 L1760.8 939.7 L1761.5 939.3 L1763.0 940.1 L1764.5 939.5 L1766.0 940.2 L1767.5 940.6 L1769.0 942.1 L1770.5 940.9 L1772.0 942.4 L1773.5 941.4 L1774.0 942.3 L1775.0 942.8 L1776.5 940.4 L1778.0 939.5 L1779.5 939.0 L1781.0 939.7 L1782.5 938.4 L1784.0 938.1 L1784.6 937.0 L1785.5 937.6 L1787.0 937.9 L1788.5 939.3 L1790.0 940.6 L1791.5 942.6 L1792.5 942.3 L1793.0 939.4 L1794.5 933.1 L1796.0 927.8 L1796.5 925.1 L1797.5 927.7 L1799.0 934.3 L1800.5 937.9 L1801.8 942.3 L1802.0 941.9 L1803.5 939.1 L1805.0 936.6 L1806.5 931.9 L1807.0 931.7 L1808.0 934.0 L1809.5 935.0 L1811.0 938.5 L1812.5 939.5 L1813.7 942.3 L1814.0 942.3 L1815.5 938.9 L1817.0 936.7 L1818.5 934.1 L1818.9 934.4 L1820.0 935.6 L1821.5 937.9 L1823.0 941.5 L1824.2 942.3 L1824.5 942.0 L1826.0 938.8 L1827.5 937.4 L1829.0 933.0 L1830.5 930.4 L1830.8 930.4 L1832.0 934.9 L1833.5 939.3 L1834.8 942.3 L1835.0 942.6 L1836.5 942.7 L1838.0 940.3 L1839.5 941.5 L1841.0 940.6 L1842.5 940.1 L1842.7 939.7 L1844.0 932.8 L1845.5 922.5 L1847.0 913.9 L1847.2 913.3 L1848.5 916.4 L1848.5 970.6 Z" fill="#EAB839" fill-opacity="0.1"/>
<path d="M1033.0 970.1 L1034.5 970.1 L1036.0 970.1 L1036.9 970.1 L1037.5 969.8 L1039.0 967.3 L1040.3 966.2 L1040.5 966.4 L1042.0 968.9 L1043.5 970.1 L1043.5 970.1 L1045.0 970.1 L1046.2 970.1 L1046.5 970.1 L1048.0 970.1 L1048.8 970.1 L1049.5 970.1 L1050.1 970.1 L1051.0 970.1 L1052.5 970.1 L1054.0 968.6 L1054.1 968.5 L1055.5 968.1 L1056.7 969.3 L1057.0 969.6 L1058.5 970.1 L1060.0 970.1 L1060.7 970.1 L1061.5 970.1 L1063.0 970.1 L1064.5 970.1 L1066.0 970.1 L1067.5 970.1 L1069.0 970.1 L1070.5 970.1 L1071.2 970.1 L1072.0 970.1 L1073.5 970.1 L1075.0 970.1 L1076.5 970.1 L1078.0 970.1 L1079.5 970.1 L1081.0 970.1 L1082.5 970.1 L1084.0 970.1 L1084.5 970.1 L1085.5 970.1 L1087.0 970.1 L1088.4 970.1 L1088.5 970.1 L1090.0 970.1 L1091.5 970.1 L1092.4 970.1 L1093.0 970.1 L1094.5 970.1 L1096.0 970.1 L1097.5 970.1 L1099.0 970.1 L1100.3 970.1 L1100.5 970.1 L1102.0 970.1 L1103.5 970.1 L1104.3 970.1 L1105.0 970.1 L1106.5 970.1 L1108.0 970.1 L1108.2 970.1 L1109.5 970.1 L1111.0 970.1 L1112.2 970.1 L1112.5 970.1 L1114.0 970.1 L1115.5 970.1 L1116.1 970.1 L1117.0 970.1 L1118.5 970.1 L1118.8 970.1 L1120.0 970.1 L1121.5 968.6 L1122.9 968.6 L1123.3 968.6 L1124.4 968.6 L1125.9 970.1 L1126.7 970.1 L1127.4 970.1 L1128.9 970.1 L1130.4 970.1 L1131.9 970.1 L1132.0 970.1 L1133.4 970.1 L1134.9 970.1 L1136.4 970.1 L1137.9 970.1 L1139.4 970.1 L1139.9 970.1 L1140.9 970.1 L1142.4 970.1 L1143.9 970.1 L1143.9 970.1 L1145.4 970.1 L1146.9 970.1 L1147.8 970.1 L1148.4 970.1 L1149.9 970.1 L1151.4 970.1 L1151.8 970.1 L1152.9 970.1 L1154.4 970.1 L1155.8 970.1 L1155.9 970.1 L1157.4 970.1 L1158.9 970.1 L1160.4 970.1 L1160.5 970.1 L1161.9 970.1 L1163.4 970.1 L1164.9 970.1 L1165.0 970.1 L1166.4 970.1 L1167.9 970.1 L1169.4 970.1 L1170.9 970.1 L1172.4 970.1 L1173.9 970.1 L1175.4 970.1 L1176.9 970.1 L1176.9 970.1 L1178.4 970.1 L1179.9 970.1 L1181.4 970.1 L1182.2 970.1 L1182.9 970.1 L1184.4 970.1 L1185.9 970.1 L1187.4 970.1 L1188.9 970.1 L1190.4 970.1 L1191.9 970.1 L1193.4 970.1 L1194.9 970.1 L1196.4 970.1 L1197.9 970.1 L1199.4 970.1 L1200.7 970.1 L1200.9 970.1 L1202.4 970.1 L1203.9 970.1 L1205.4 970.1 L1206.9 970.1 L1207.3 970.1 L1208.4 970.1 L1209.9 970.1 L1211.2 970.1 L1211.4 970.1 L1212.9 970.1 L1214.4 970.1 L1215.9 970.1 L1217.4 970.1 L1218.9 970.1 L1219.2 970.1 L1220.4 970.1 L1221.9 970.1 L1223.4 970.1 L1224.4 970.1 L1224.9 970.1 L1226.4 970.1 L1227.9 970.1 L1229.4 970.1 L1229.7 970.1 L1230.9 970.1 L1232.4 970.1 L1233.9 970.1 L1235.4 970.1 L1236.9 970.1 L1238.4 970.1 L1239.9 970.1 L1241.4 970.1 L1241.6 970.1 L1242.9 970.1 L1244.4 970.1 L1245.9 970.1 L1247.4 970.1 L1247.7 970.1 L1248.9 970.1 L1250.4 970.1 L1251.9 970.1 L1253.4 970.1 L1254.8 970.1 L1254.9 970.1 L1256.4 970.1 L1257.9 970.1 L1259.4 970.1 L1260.9 970.1 L1262.4 970.1 L1262.7 970.1 L1263.9 970.1 L1265.4 970.1 L1266.9 970.1 L1268.4 970.1 L1269.8 970.1 L1271.3 970.1 L1272.0 970.1 L1272.8 970.1 L1274.3 970.1 L1275.8 970.1 L1277.3 970.1 L1277.3 970.1 L1278.8 970.1 L1280.3 970.1 L1281.2 970.1 L1281.8 970.1 L1283.3 970.1 L1284.8 970.1 L1285.2 970.1 L1286.3 970.1 L1287.8 970.1 L1289.3 970.1 L1290.8 970.1 L1292.3 970.1 L1293.8 970.1 L1295.3 970.1 L1295.8 970.1 L1296.8 970.1 L1298.3 970.1 L1299.8 970.1 L1300.5 970.1 L1301.3 970.1 L1302.8 970.1 L1304.3 970.1 L1305.8 970.1 L1307.3 970.1 L1307.6 970.1 L1308.8 970.1 L1310.3 970.1 L1311.8 970.1 L1312.9 970.1 L1313.3 970.1 L1314.8 970.1 L1316.3 970.1 L1317.8 970.1 L1319.3 970.1 L1319.5 970.1 L1320.8 970.1 L1322.3 970.1 L1323.8 970.1 L1325.3 970.1 L1325.3 970.1 L1326.8 970.1 L1328.3 970.1 L1329.8 970.1 L1330.1 970.1 L1331.3 970.1 L1332.8 970.1 L1334.3 970.1 L1335.8 970.1 L1337.3 970.1 L1338.8 970.1 L1340.3 970.1 L1341.8 970.1 L1343.3 970.1 L1343.3 970.1 L1344.8 970.1 L1346.3 970.1 L1347.8 970.1 L1349.3 970.1 L1350.8 970.1 L1352.3 970.1 L1353.8 970.1 L1355.3 970.1 L1356.5 970.1 L1356.8 970.1 L1358.3 970.1 L1359.8 970.1 L1361.3 970.1 L1361.8 970.1 L1362.8 970.1 L1364.3 970.1 L1365.8 970.1 L1367.1 970.1 L1367.3 970.1 L1368.8 970.1 L1370.3 970.1 L1371.8 970.1 L1373.3 970.1 L1374.8 970.1 L1375.0 970.1 L1376.3 970.1 L1377.8 970.1 L1379.3 970.1 L1380.8 970.1 L1382.3 970.1 L1382.9 970.1 L1383.8 970.1 L1385.3 970.1 L1386.8 970.1 L1388.3 970.1 L1389.8 970.1 L1391.3 970.1 L1392.8 970.1 L1393.5 970.1 L1394.3 970.1 L1395.8 970.1 L1397.3 970.1 L1398.8 970.1 L1400.3 970.1 L1401.8 970.1 L1403.3 970.1 L1404.0 970.1 L1404.8 970.1 L1406.3 970.1 L1407.8 970.1 L1409.3 970.1 L1410.8 970.1 L1412.0 970.1 L1412.3 970.1 L1413.8 970.1 L1415.3 970.1 L1416.8 970.1 L1417.2 970.1 L1418.3 970.1 L1419.8 970.1 L1421.3 970.1 L1422.8 970.1 L1424.3 970.1 L1425.2 970.1 L1425.8 970.1 L1427.3 970.1 L1427.9 970.1 L1428.8 970.1 L1430.3 970.1 L1431.8 970.1 L1433.1 970.1 L1433.2 970.1 L1433.2 970.1 L1434.8 970.1 L1436.2 970.1 L1437.2 970.1 L1437.8 970.1 L1438.4 970.1 L1439.2 970.1 L1440.8 970.1 L1441.1 970.1 L1442.2 970.1 L1443.8 970.1 L1445.2 970.1 L1446.8 970.1 L1448.2 970.1 L1449.7 970.1 L1450.4 970.1 L1451.2 970.1 L1452.7 970.1 L1454.2 970.1 L1455.7 970.1 L1457.0 970.1 L1457.2 970.1 L1458.7 970.1 L1460.2 970.1 L1461.7 970.1 L1463.2 970.1 L1464.7 970.1 L1466.2 970.1 L1466.2 970.1 L1467.7 970.1 L1469.2 970.1 L1470.7 970.1 L1472.2 970.1 L1473.7 970.1 L1475.2 970.1 L1475.5 970.1 L1476.7 970.1 L1478.2 970.1 L1479.7 970.1 L1481.2 970.1 L1482.7 970.1 L1484.2 970.1 L1485.7 970.1 L1486.0 970.1 L1487.2 970.1 L1488.7 970.1 L1490.2 970.1 L1491.7 970.1 L1493.2 970.1 L1494.7 970.1 L1496.2 970.1 L1497.7 970.1 L1499.2 970.1 L1499.3 970.1 L1500.7 970.1 L1502.2 970.1 L1503.7 970.1 L1505.2 970.1 L1506.7 970.1 L1507.2 970.1 L1508.2 970.1 L1509.7 970.1 L1511.2 970.1 L1512.7 970.1 L1513.8 970.1 L1514.2 970.1 L1515.7 970.1 L1517.2 970.1 L1518.7 970.1 L1519.1 970.1 L1520.2 970.1 L1521.7 970.1 L1523.2 970.1 L1524.7 970.1 L1526.2 970.1 L1527.7 970.1 L1529.2 970.1 L1530.7 970.1 L1531.0 970.1 L1532.2 970.1 L1533.7 970.1 L1535.2 970.1 L1536.7 970.1 L1538.2 970.1 L1539.7 970.1 L1541.2 970.1 L1541.5 970.1 L1542.7 970.1 L1544.2 970.1 L1545.7 970.1 L1547.2 970.1 L1548.7 970.1 L1550.2 970.1 L1551.7 970.1 L1552.1 970.1 L1553.2 970.1 L1554.7 970.1 L1556.2 970.1 L1557.4 970.1 L1557.7 970.1 L1559.2 970.1 L1560.7 970.1 L1562.2 970.1 L1563.7 970.1 L1564.0 970.1 L1565.2 970.1 L1566.7 970.1 L1568.2 970.1 L1569.7 970.1 L1571.2 970.1 L1572.7 970.1 L1574.2 970.1 L1575.7 970.1 L1577.2 970.1 L1578.5 970.1 L1578.7 970.1 L1580.2 970.1 L1581.7 970.1 L1583.2 970.1 L1584.7 970.1 L1586.2 970.1 L1587.7 970.1 L1589.1 970.1 L1589.2 970.1 L1590.7 970.1 L1592.2 970.1 L1593.7 970.1 L1595.2 970.1 L1596.7 970.1 L1598.2 970.1 L1599.7 970.1 L1601.2 970.1 L1602.7 970.1 L1604.2 970.1 L1604.9 970.1 L1605.7 970.1 L1607.2 970.1 L1608.7 970.1 L1610.2 970.1 L1611.7 970.1 L1613.1 970.1 L1614.6 970.1 L1615.5 970.1 L1616.1 970.1 L1617.6 970.1 L1619.1 970.1 L1620.6 970.1 L1622.1 970.1 L1623.6 970.1 L1625.1 970.1 L1626.1 970.1 L1626.6 970.1 L1628.1 970.1 L1629.6 970.1 L1631.1 970.1 L1632.6 970.1 L1634.1 970.1 L1635.6 970.1 L1636.6 970.1 L1637.1 970.1 L1638.6 970.1 L1640.1 970.1 L1641.6 970.1 L1643.1 970.1 L1644.6 970.1 L1646.1 970.1 L1647.2 970.1 L1647.6 970.1 L1649.1 970.1 L1650.6 970.1 L1652.1 970.1 L1653.6 970.1 L1655.1 970.1 L1656.6 970.1 L1657.8 970.1 L1658.1 970.1 L1659.6 970.1 L1661.1 970.1 L1662.5 970.1 L1662.6 970.1 L1664.1 970.1 L1665.6 970.1 L1667.0 970.1 L1667.1 970.1 L1668.6 970.1 L1670.1 970.1 L1671.6 970.1 L1673.1 970.1 L1673.6 970.1 L1674.6 970.1 L1676.1 970.1 L1677.6 970.1 L1679.1 970.1 L1680.6 970.1 L1681.6 970.1 L1682.1 970.1 L1683.6 970.1 L1685.1 970.1 L1686.6 970.1 L1688.1 970.1 L1689.6 970.1 L1691.1 970.1 L1692.6 970.1 L1694.1 970.1 L1695.6 970.1 L1697.1 970.1 L1697.4 970.1 L1698.6 970.1 L1700.1 970.1 L1701.6 970.1 L1703.1 970.1 L1704.6 970.1 L1706.1 970.1 L1707.6 970.1 L1709.1 970.1 L1710.6 970.1 L1710.6 970.1 L1712.1 970.1 L1713.6 970.1 L1715.1 970.1 L1716.6 970.1 L1718.1 970.1 L1719.6 970.1 L1721.1 970.1 L1722.6 970.1 L1723.8 970.1 L1724.1 970.1 L1725.6 970.1 L1727.1 970.1 L1728.6 970.1 L1730.1 970.1 L1731.6 970.1 L1731.8 970.1 L1733.1 970.1 L1734.6 970.1 L1736.1 970.1 L1737.0 970.1 L1737.6 970.1 L1739.1 970.1 L1740.6 970.1 L1741.0 970.1 L1742.1 970.1 L1743.6 970.1 L1745.1 970.1 L1746.6 970.1 L1747.6 970.1 L1748.1 970.1 L1749.6 970.1 L1751.1 970.1 L1752.6 970.1 L1754.1 970.1 L1755.6 970.1 L1757.1 970.1 L1758.6 970.1 L1760.0 970.1 L1760.8 970.1 L1761.5 970.1 L1763.0 970.1 L1764.5 970.1 L1766.0 970.1 L1767.5 970.1 L1769.0 970.1 L1770.5 970.1 L1772.0 970.1 L1773.5 970.1 L1774.0 970.1 L1775.0 970.1 L1776.5 970.1 L1778.0 970.1 L1779.5 970.1 L1781.0 970.1 L1782.5 970.1 L1784.0 970.1 L1784.6 970.1 L1785.5 970.1 L1787.0 970.1 L1788.5 970.1 L1790.0 970.1 L1791.5 970.1 L1792.5 970.1 L1793.0 970.1 L1794.5 970.1 L1796.0 970.1 L1796.5 970.1 L1797.5 970.1 L1799.0 970.1 L1800.5 970.1 L1801.8 970.1 L1802.0 970.1 L1803.5 970.1 L1805.0 970.1 L1806.5 970.1 L1807.0 970.1 L1808.0 970.1 L1809.5 970.1 L1811.0 970.1 L1812.5 970.1 L1813.7 970.1 L1814.0 970.1 L1815.5 970.1 L1817.0 970.1 L1818.5 970.1 L1818.9 970.1 L1820.0 970.1 L1821.5 970.1 L1823.0 970.1 L1824.2 970.1 L1824.5 970.1 L1826.0 970.1 L1827.5 970.1 L1829.0 970.1 L1830.5 970.1 L1830.8 970.1 L1832.0 970.1 L1833.5 970.1 L1834.8 970.1 L1835.0 970.1 L1836.5 970.1 L1838.0 970.1 L1839.5 970.1 L1841.0 970.1 L1842.5 970.1 L1842.7 970.1 L1844.0 970.1 L1845.5 970.1 L1847.0 970.1 L1847.2 970.1 L1848.5 970.1" fill="none" stroke="#7EB26D" stroke-width="1.3" stroke-linejoin="round"/>
<path d="M1033.0 962.7 L1034.5 959.5 L1036.0 957.1 L1036.9 955.5 L1037.5 932.0 L1039.0 874.7 L1040.3 824.8 L1040.5 827.0 L1042.0 851.0 L1043.5 873.9 L1043.5 873.7 L1045.0 905.3 L1046.2 929.0 L1046.5 928.1 L1048.0 927.3 L1048.8 926.4 L1049.5 933.0 L1050.1 939.6 L1051.0 937.8 L1052.5 935.6 L1054.0 933.9 L1054.1 934.3 L1055.5 939.4 L1056.7 942.2 L1057.0 942.8 L1058.5 942.3 L1060.0 941.8 L1060.7 940.9 L1061.5 940.5 L1063.0 941.1 L1064.5 942.1 L1066.0 942.7 L1067.5 943.3 L1069.0 943.8 L1070.5 942.6 L1071.2 943.6 L1072.0 943.7 L1073.5 943.7 L1075.0 943.2 L1076.5 942.4 L1078.0 942.8 L1079.5 941.9 L1081.0 943.5 L1082.5 943.2 L1084.0 942.4 L1084.5 942.3 L1085.5 942.9 L1087.0 945.6 L1088.4 946.2 L1088.5 946.3 L1090.0 945.4 L1091.5 943.9 L1092.4 942.3 L1093.0 941.9 L1094.5 940.7 L1096.0 940.1 L1097.5 938.7 L1099.0 937.2 L1100.3 937.0 L1100.5 936.8 L1102.0 939.8 L1103.5 940.3 L1104.3 942.2 L1105.0 939.0 L1106.5 935.2 L1108.0 929.5 L1108.2 929.1 L1109.5 932.4 L1111.0 936.3 L1112.2 939.6 L1112.5 938.0 L1114.0 932.3 L1115.5 923.7 L1116.1 921.1 L1117.0 922.2 L1118.5 924.0 L1118.8 925.1 L1120.0 919.2 L1121.5 910.5 L1122.9 902.8 L1123.3 901.3 L1124.4 914.8 L1125.9 930.7 L1126.7 939.6 L1127.4 940.1 L1128.9 941.5 L1130.4 940.7 L1131.9 941.3 L1132.0 942.3 L1133.4 942.4 L1134.9 944.3 L1136.4 944.7 L1137.9 944.7 L1139.4 945.6 L1139.9 946.2 L1140.9 943.2 L1142.4 940.3 L1143.9 937.0 L1143.9 936.0 L1145.4 936.8 L1146.9 936.7 L1147.8 935.7 L1148.4 937.5 L1149.9 939.6 L1151.4 942.6 L1151.8 942.2 L1152.9 940.5 L1154.4 940.1 L1155.8 939.6 L1155.9 940.4 L1157.4 938.3 L1158.9 935.9 L1160.4 935.3 L1160.5 934.3 L1161.9 937.0 L1163.4 940.1 L1164.9 941.7 L1165.0 942.3 L1166.4 942.1 L1167.9 943.1 L1169.4 943.0 L1170.9 944.0 L1172.4 945.6 L1173.9 944.9 L1175.4 944.7 L1176.9 946.2 L1176.9 945.3 L1178.4 944.4 L1179.9 944.5 L1181.4 942.5 L1182.2 942.3 L1182.9 941.9 L1184.4 941.8 L1185.9 943.7 L1187.4 942.8 L1188.9 942.6 L1190.4 942.5 L1191.9 942.8 L1193.4 943.2 L1194.9 944.4 L1196.4 943.6 L1197.9 943.6 L1199.4 944.7 L1200.7 944.9 L1200.9 943.3 L1202.4 938.2 L1203.9 929.9 L1205.4 924.2 L1206.9 918.0 L1207.3 915.9 L1208.4 922.4 L1209.9 932.6 L1211.2 939.6 L1211.4 939.7 L1212.9 940.5 L1214.4 942.1 L1215.9 942.6 L1217.4 944.6 L1218.9 945.5 L1219.2 946.2 L1220.4 945.8 L1221.9 944.1 L1223.4 942.0 L1224.4 940.9 L1224.9 940.3 L1226.4 941.9 L1227.9 943.0 L1229.4 944.1 L1229.7 944.9 L1230.9 944.4 L1232.4 945.6 L1233.9 944.2 L1235.4 944.0 L1236.9 945.7 L1238.4 945.0 L1239.9 945.9 L1241.4 944.7 L1241.6 944.9 L1242.9 941.0 L1244.4 935.0 L1245.9 929.7 L1247.4 924.1 L1247.7 922.4 L1248.9 926.2 L1250.4 930.1 L1251.9 935.1 L1253.4 941.1 L1254.8 944.9 L1254.9 945.6 L1256.4 943.9 L1257.9 941.0 L1259.4 939.9 L1260.9 938.4 L1262.4 936.4 L1262.7 935.7 L1263.9 937.1 L1265.4 937.6 L1266.9 938.9 L1268.4 940.0 L1269.8 940.3 L1271.3 942.6 L1272.0 942.3 L1272.8 943.6 L1274.3 942.6 L1275.8 945.1 L1277.3 944.9 L1277.3 945.7 L1278.8 943.6 L1280.3 940.9 L1281.2 940.9 L1281.8 942.6 L1283.3 943.0 L1284.8 946.7 L1285.2 946.2 L1286.3 946.4 L1287.8 945.0 L1289.3 945.0 L1290.8 945.8 L1292.3 945.5 L1293.8 945.6 L1295.3 945.8 L1295.8 944.9 L1296.8 939.8 L1298.3 933.1 L1299.8 928.7 L1300.5 925.1 L1301.3 926.4 L1302.8 932.3 L1304.3 934.9 L1305.8 940.5 L1307.3 944.6 L1307.6 944.9 L1308.8 944.2 L1310.3 941.6 L1311.8 940.4 L1312.9 938.3 L1313.3 938.1 L1314.8 940.5 L1316.3 941.4 L1317.8 944.0 L1319.3 945.2 L1319.5 944.9 L1320.8 943.1 L1322.3 941.1 L1323.8 938.1 L1325.3 936.1 L1325.3 937.0 L1326.8 940.0 L1328.3 942.8 L1329.8 946.4 L1330.1 946.2 L1331.3 946.4 L1332.8 945.5 L1334.3 945.9 L1335.8 946.7 L1337.3 946.3 L1338.8 945.2 L1340.3 946.9 L1341.8 946.9 L1343.3 946.2 L1343.3 945.4 L1344.8 946.3 L1346.3 946.0 L1347.8 946.8 L1349.3 945.8 L1350.8 945.7 L1352.3 946.2 L1353.8 947.1 L1355.3 945.4 L1356.5 946.2 L1356.8 944.5 L1358.3 940.9 L1359.8 936.8 L1361.3 931.4 L1361.8 929.8 L1362.8 932.1 L1364.3 936.5 L1365.8 939.8 L1367.1 942.3 L1367.3 941.4 L1368.8 943.0 L1370.3 941.6 L1371.8 941.9 L1373.3 942.9 L1374.8 942.1 L1375.0 942.3 L1376.3 942.2 L1377.8 940.2 L1379.3 940.8 L1380.8 938.7 L1382.3 937.9 L1382.9 938.3 L1383.8 938.8 L1385.3 939.4 L1386.8 940.8 L1388.3 942.5 L1389.8 943.0 L1391.3 942.5 L1392.8 944.1 L1393.5 944.9 L1394.3 944.6 L1395.8 943.7 L1397.3 943.4 L1398.8 942.2 L1400.3 940.6 L1401.8 940.2 L1403.3 940.7 L1404.0 939.6 L1404.8 935.7 L1406.3 929.0 L1407.8 922.0 L1409.3 913.7 L1410.8 906.3 L1412.0 900.0 L1412.3 902.6 L1413.8 914.0 L1415.3 927.2 L1416.8 938.3 L1417.2 942.2 L1418.3 943.4 L1419.8 942.7 L1421.3 944.3 L1422.8 944.7 L1424.3 944.8 L1425.2 944.9 L1425.8 944.2 L1427.3 942.2 L1427.9 942.3 L1428.8 939.6 L1430.3 933.1 L1431.8 927.9 L1433.1 922.5 L1433.2 923.8 L1433.2 923.3 L1434.8 930.2 L1436.2 937.3 L1437.2 942.3 L1437.8 942.9 L1438.4 942.3 L1439.2 940.4 L1440.8 939.7 L1441.1 938.3 L1442.2 939.0 L1443.8 940.7 L1445.2 941.6 L1446.8 943.4 L1448.2 943.6 L1449.7 945.5 L1450.4 946.3 L1451.2 945.8 L1452.7 941.8 L1454.2 940.4 L1455.7 937.3 L1457.0 935.7 L1457.2 935.5 L1458.7 936.5 L1460.2 938.0 L1461.7 941.3 L1463.2 942.6 L1464.7 944.0 L1466.2 945.5 L1466.2 944.9 L1467.7 945.2 L1469.2 943.0 L1470.7 943.2 L1472.2 942.4 L1473.7 941.9 L1475.2 942.0 L1475.5 941.0 L1476.7 941.8 L1478.2 942.6 L1479.7 941.3 L1481.2 942.7 L1482.7 943.1 L1484.2 943.7 L1485.7 943.8 L1486.0 943.6 L1487.2 943.8 L1488.7 942.2 L1490.2 942.8 L1491.7 941.2 L1493.2 940.9 L1494.7 940.9 L1496.2 940.0 L1497.7 938.6 L1499.2 937.8 L1499.3 938.3 L1500.7 938.7 L1502.2 940.1 L1503.7 941.6 L1505.2 942.1 L1506.7 941.9 L1507.2 942.3 L1508.2 940.5 L1509.7 938.9 L1511.2 935.4 L1512.7 933.3 L1513.8 931.7 L1514.2 931.6 L1515.7 934.9 L1517.2 938.6 L1518.7 941.9 L1519.1 942.3 L1520.2 942.2 L1521.7 941.2 L1523.2 941.8 L1524.7 940.7 L1526.2 939.2 L1527.7 938.6 L1529.2 939.9 L1530.7 939.4 L1531.0 938.3 L1532.2 939.8 L1533.7 939.9 L1535.2 940.1 L1536.7 940.4 L1538.2 941.5 L1539.7 942.1 L1541.2 944.3 L1541.5 943.6 L1542.7 944.4 L1544.2 944.2 L1545.7 942.9 L1547.2 943.1 L1548.7 943.2 L1550.2 944.5 L1551.7 942.9 L1552.1 943.6 L1553.2 942.9 L1554.7 940.8 L1556.2 938.6 L1557.4 937.0 L1557.7 938.3 L1559.2 938.7 L1560.7 941.0 L1562.2 942.1 L1563.7 943.8 L1564.0 944.9 L1565.2 943.9 L1566.7 944.3 L1568.2 943.8 L1569.7 943.5 L1571.2 945.3 L1572.7 943.7 L1574.2 944.8 L1575.7 944.3 L1577.2 944.2 L1578.5 943.6 L1578.7 943.9 L1580.2 944.1 L1581.7 943.6 L1583.2 942.9 L1584.7 942.2 L1586.2 942.1 L1587.7 941.8 L1589.1 941.0 L1589.2 941.1 L1590.7 941.2 L1592.2 940.8 L1593.7 942.4 L1595.2 942.0 L1596.7 941.4 L1598.2 941.8 L1599.7 943.5 L1601.2 942.5 L1602.7 943.0 L1604.2 943.9 L1604.9 943.6 L1605.7 943.8 L1607.2 941.6 L1608.7 940.6 L1610.2 939.6 L1611.7 937.6 L1613.1 938.2 L1614.6 935.4 L1615.5 935.7 L1616.1 937.0 L1617.6 936.3 L1619.1 937.3 L1620.6 939.6 L1622.1 940.5 L1623.6 940.2 L1625.1 941.8 L1626.1 942.3 L1626.6 942.3 L1628.1 942.7 L1629.6 941.7 L1631.1 942.9 L1632.6 943.3 L1634.1 942.7 L1635.6 943.1 L1636.6 942.3 L1637.1 942.9 L1638.6 940.8 L1640.1 940.8 L1641.6 939.9 L1643.1 938.4 L1644.6 936.5 L1646.1 936.6 L1647.2 935.7 L1647.6 936.9 L1649.1 937.0 L1650.6 939.0 L1652.1 940.8 L1653.6 941.5 L1655.1 941.7 L1656.6 944.2 L1657.8 944.9 L1658.1 941.9 L1659.6 931.9 L1661.1 920.3 L1662.5 909.3 L1662.6 909.4 L1664.1 921.6 L1665.6 932.1 L1667.0 942.3 L1667.1 941.9 L1668.6 941.4 L1670.1 940.0 L1671.6 938.5 L1673.1 937.0 L1673.6 935.7 L1674.6 936.8 L1676.1 938.2 L1677.6 939.2 L1679.1 940.3 L1680.6 942.5 L1681.6 942.3 L1682.1 942.0 L1683.6 941.6 L1685.1 943.0 L1686.6 942.7 L1688.1 942.9 L1689.6 943.2 L1691.1 942.6 L1692.6 942.6 L1694.1 942.5 L1695.6 944.0 L1697.1 944.4 L1697.4 943.6 L1698.6 943.9 L1700.1 942.6 L1701.6 944.2 L1703.1 943.7 L1704.6 942.9 L1706.1 941.8 L1707.6 943.3 L1709.1 942.7 L1710.6 942.5 L1710.6 942.3 L1712.1 940.3 L1713.6 940.7 L1715.1 938.2 L1716.6 938.1 L1718.1 936.4 L1719.6 935.7 L1721.1 935.8 L1722.6 934.4 L1723.8 933.1 L1724.1 933.8 L1725.6 933.2 L1727.1 933.9 L1728.6 934.8 L1730.1 934.2 L1731.6 935.5 L1731.8 935.7 L1733.1 938.3 L1734.6 939.7 L1736.1 941.8 L1737.0 942.3 L1737.6 940.5 L1739.1 937.3 L1740.6 933.5 L1741.0 931.7 L1742.1 934.1 L1743.6 936.2 L1745.1 938.4 L1746.6 940.8 L1747.6 943.6 L1748.1 944.3 L1749.6 943.9 L1751.1 942.1 L1752.6 942.6 L1754.1 941.5 L1755.6 941.5 L1757.1 941.5 L1758.6 940.0 L1760.0 940.1 L1760.8 939.7 L1761.5 939.3 L1763.0 940.1 L1764.5 939.5 L1766.0 940.2 L1767.5 940.6 L1769.0 942.1 L1770.5 940.9 L1772.0 942.4 L1773.5 941.4 L1774.0 942.3 L1775.0 942.8 L1776.5 940.4 L1778.0 939.5 L1779.5 939.0 L1781.0 939.7 L1782.5 938.4 L1784.0 938.1 L1784.6 937.0 L1785.5 937.6 L1787.0 937.9 L1788.5 939.3 L1790.0 940.6 L1791.5 942.6 L1792.5 942.3 L1793.0 939.4 L1794.5 933.1 L1796.0 927.8 L1796.5 925.1 L1797.5 927.7 L1799.0 934.3 L1800.5 937.9 L1801.8 942.3 L1802.0 941.9 L1803.5 939.1 L1805.0 936.6 L1806.5 931.9 L1807.0 931.7 L1808.0 934.0 L1809.5 935.0 L1811.0 938.5 L1812.5 939.5 L1813.7 942.3 L1814.0 942.3 L1815.5 938.9 L1817.0 936.7 L1818.5 934.1 L1818.9 934.4 L1820.0 935.6 L1821.5 937.9 L1823.0 941.5 L1824.2 942.3 L1824.5 942.0 L1826.0 938.8 L1827.5 937.4 L1829.0 933.0 L1830.5 930.4 L1830.8 930.4 L1832.0 934.9 L1833.5 939.3 L1834.8 942.3 L1835.0 942.6 L1836.5 942.7 L1838.0 940.3 L1839.5 941.5 L1841.0 940.6 L1842.5 940.1 L1842.7 939.7 L1844.0 932.8 L1845.5 922.5 L1847.0 913.9 L1847.2 913.3 L1848.5 916.4" fill="none" stroke="#EAB839" stroke-width="1.3" stroke-linejoin="round"/>
<path d="M1033.0 970.3 L1034.5 970.3 L1036.0 970.3 L1036.9 970.3 L1037.5 970.3 L1039.0 970.3 L1040.3 970.3 L1040.5 970.3 L1042.0 970.3 L1043.5 970.3 L1043.5 970.3 L1045.0 970.3 L1046.2 970.3 L1046.5 970.3 L1048.0 970.3 L1048.8 970.3 L1049.5 970.3 L1050.1 970.3 L1051.0 970.3 L1052.5 970.3 L1054.0 970.3 L1054.1 970.3 L1055.5 970.3 L1056.7 970.3 L1057.0 970.3 L1058.5 970.3 L1060.0 970.3 L1060.7 970.3 L1061.5 970.3 L1063.0 970.3 L1064.5 970.3 L1066.0 970.3 L1067.5 970.3 L1069.0 970.3 L1070.5 970.3 L1071.2 970.3 L1072.0 970.3 L1073.5 970.3 L1075.0 970.3 L1076.5 970.3 L1078.0 970.3 L1079.5 970.3 L1081.0 970.3 L1082.5 970.3 L1084.0 970.3 L1084.5 970.3 L1085.5 970.3 L1087.0 970.3 L1088.4 970.3 L1088.5 970.3 L1090.0 970.3 L1091.5 970.3 L1092.4 970.3 L1093.0 970.3 L1094.5 970.3 L1096.0 970.3 L1097.5 970.3 L1099.0 970.3 L1100.3 970.3 L1100.5 970.3 L1102.0 970.3 L1103.5 970.3 L1104.3 970.3 L1105.0 970.3 L1106.5 970.3 L1108.0 970.3 L1108.2 970.3 L1109.5 970.3 L1111.0 970.3 L1112.2 970.3 L1112.5 970.3 L1114.0 970.3 L1115.5 970.3 L1116.1 970.3 L1117.0 970.3 L1118.5 970.3 L1118.8 970.3 L1120.0 970.3 L1121.5 970.3 L1122.9 970.3 L1123.3 970.3 L1124.4 970.3 L1125.9 970.3 L1126.7 970.3 L1127.4 970.3 L1128.9 970.3 L1130.4 970.3 L1131.9 970.3 L1132.0 970.3 L1133.4 970.3 L1134.9 970.3 L1136.4 970.3 L1137.9 970.3 L1139.4 970.3 L1139.9 970.3 L1140.9 970.3 L1142.4 970.3 L1143.9 970.3 L1143.9 970.3 L1145.4 970.3 L1146.9 970.3 L1147.8 970.3 L1148.4 970.3 L1149.9 970.3 L1151.4 970.3 L1151.8 970.3 L1152.9 970.3 L1154.4 970.3 L1155.8 970.3 L1155.9 970.3 L1157.4 970.3 L1158.9 970.3 L1160.4 970.3 L1160.5 970.3 L1161.9 970.3 L1163.4 970.3 L1164.9 970.3 L1165.0 970.3 L1166.4 970.3 L1167.9 970.3 L1169.4 970.3 L1170.9 970.3 L1172.4 970.3 L1173.9 970.3 L1175.4 970.3 L1176.9 970.3 L1176.9 970.3 L1178.4 970.3 L1179.9 970.3 L1181.4 970.3 L1182.2 970.3 L1182.9 970.3 L1184.4 970.3 L1185.9 970.3 L1187.4 970.3 L1188.9 970.3 L1190.4 970.3 L1191.9 970.3 L1193.4 970.3 L1194.9 970.3 L1196.4 970.3 L1197.9 970.3 L1199.4 970.3 L1200.7 970.3 L1200.9 970.3 L1202.4 970.3 L1203.9 970.3 L1205.4 970.3 L1206.9 970.3 L1207.3 970.3 L1208.4 970.3 L1209.9 970.3 L1211.2 970.3 L1211.4 970.3 L1212.9 970.3 L1214.4 970.3 L1215.9 970.3 L1217.4 970.3 L1218.9 970.3 L1219.2 970.3 L1220.4 970.3 L1221.9 970.3 L1223.4 970.3 L1224.4 970.3 L1224.9 970.3 L1226.4 970.3 L1227.9 970.3 L1229.4 970.3 L1229.7 970.3 L1230.9 970.3 L1232.4 970.3 L1233.9 970.3 L1235.4 970.3 L1236.9 970.3 L1238.4 970.3 L1239.9 970.3 L1241.4 970.3 L1241.6 970.3 L1242.9 970.3 L1244.4 970.3 L1245.9 970.3 L1247.4 970.3 L1247.7 970.3 L1248.9 970.3 L1250.4 970.3 L1251.9 970.3 L1253.4 970.3 L1254.8 970.3 L1254.9 970.3 L1256.4 970.3 L1257.9 970.3 L1259.4 970.3 L1260.9 970.3 L1262.4 970.3 L1262.7 970.3 L1263.9 970.3 L1265.4 970.3 L1266.9 970.3 L1268.4 970.3 L1269.8 970.3 L1271.3 970.3 L1272.0 970.3 L1272.8 970.3 L1274.3 970.3 L1275.8 970.3 L1277.3 970.3 L1277.3 970.3 L1278.8 970.3 L1280.3 970.3 L1281.2 970.3 L1281.8 970.3 L1283.3 970.3 L1284.8 970.3 L1285.2 970.3 L1286.3 970.3 L1287.8 970.3 L1289.3 970.3 L1290.8 970.3 L1292.3 970.3 L1293.8 970.3 L1295.3 970.3 L1295.8 970.3 L1296.8 970.3 L1298.3 970.3 L1299.8 970.3 L1300.5 970.3 L1301.3 970.3 L1302.8 970.3 L1304.3 970.3 L1305.8 970.3 L1307.3 970.3 L1307.6 970.3 L1308.8 970.3 L1310.3 970.3 L1311.8 970.3 L1312.9 970.3 L1313.3 970.3 L1314.8 970.3 L1316.3 970.3 L1317.8 970.3 L1319.3 970.3 L1319.5 970.3 L1320.8 970.3 L1322.3 970.3 L1323.8 970.3 L1325.3 970.3 L1325.3 970.3 L1326.8 970.3 L1328.3 970.3 L1329.8 970.3 L1330.1 970.3 L1331.3 970.3 L1332.8 970.3 L1334.3 970.3 L1335.8 970.3 L1337.3 970.3 L1338.8 970.3 L1340.3 970.3 L1341.8 970.3 L1343.3 970.3 L1343.3 970.3 L1344.8 970.3 L1346.3 970.3 L1347.8 970.3 L1349.3 970.3 L1350.8 970.3 L1352.3 970.3 L1353.8 970.3 L1355.3 970.3 L1356.5 970.3 L1356.8 970.3 L1358.3 970.3 L1359.8 970.3 L1361.3 970.3 L1361.8 970.3 L1362.8 970.3 L1364.3 970.3 L1365.8 970.3 L1367.1 970.3 L1367.3 970.3 L1368.8 970.3 L1370.3 970.3 L1371.8 970.3 L1373.3 970.3 L1374.8 970.3 L1375.0 970.3 L1376.3 970.3 L1377.8 970.3 L1379.3 970.3 L1380.8 970.3 L1382.3 970.3 L1382.9 970.3 L1383.8 970.3 L1385.3 970.3 L1386.8 970.3 L1388.3 970.3 L1389.8 970.3 L1391.3 970.3 L1392.8 970.3 L1393.5 970.3 L1394.3 970.3 L1395.8 970.3 L1397.3 970.3 L1398.8 970.3 L1400.3 970.3 L1401.8 970.3 L1403.3 970.3 L1404.0 970.3 L1404.8 970.3 L1406.3 970.3 L1407.8 970.3 L1409.3 970.3 L1410.8 970.3 L1412.0 970.3 L1412.3 970.3 L1413.8 970.3 L1415.3 970.3 L1416.8 970.3 L1417.2 970.3 L1418.3 970.3 L1419.8 970.3 L1421.3 970.3 L1422.8 970.3 L1424.3 970.3 L1425.2 970.3 L1425.8 970.3 L1427.3 970.3 L1427.9 970.3 L1428.8 970.3 L1430.3 970.3 L1431.8 970.3 L1433.1 970.3 L1433.2 970.3 L1433.2 970.3 L1434.8 970.3 L1436.2 970.3 L1437.2 970.3 L1437.8 970.3 L1438.4 970.3 L1439.2 970.3 L1440.8 970.3 L1441.1 970.3 L1442.2 970.3 L1443.8 970.3 L1445.2 970.3 L1446.8 970.3 L1448.2 970.3 L1449.7 970.3 L1450.4 970.3 L1451.2 970.3 L1452.7 970.3 L1454.2 970.3 L1455.7 970.3 L1457.0 970.3 L1457.2 970.3 L1458.7 970.3 L1460.2 970.3 L1461.7 970.3 L1463.2 970.3 L1464.7 970.3 L1466.2 970.3 L1466.2 970.3 L1467.7 970.3 L1469.2 970.3 L1470.7 970.3 L1472.2 970.3 L1473.7 970.3 L1475.2 970.3 L1475.5 970.3 L1476.7 970.3 L1478.2 970.3 L1479.7 970.3 L1481.2 970.3 L1482.7 970.3 L1484.2 970.3 L1485.7 970.3 L1486.0 970.3 L1487.2 970.3 L1488.7 970.3 L1490.2 970.3 L1491.7 970.3 L1493.2 970.3 L1494.7 970.3 L1496.2 970.3 L1497.7 970.3 L1499.2 970.3 L1499.3 970.3 L1500.7 970.3 L1502.2 970.3 L1503.7 970.3 L1505.2 970.3 L1506.7 970.3 L1507.2 970.3 L1508.2 970.3 L1509.7 970.3 L1511.2 970.3 L1512.7 970.3 L1513.8 970.3 L1514.2 970.3 L1515.7 970.3 L1517.2 970.3 L1518.7 970.3 L1519.1 970.3 L1520.2 970.3 L1521.7 970.3 L1523.2 970.3 L1524.7 970.3 L1526.2 970.3 L1527.7 970.3 L1529.2 970.3 L1530.7 970.3 L1531.0 970.3 L1532.2 970.3 L1533.7 970.3 L1535.2 970.3 L1536.7 970.3 L1538.2 970.3 L1539.7 970.3 L1541.2 970.3 L1541.5 970.3 L1542.7 970.3 L1544.2 970.3 L1545.7 970.3 L1547.2 970.3 L1548.7 970.3 L1550.2 970.3 L1551.7 970.3 L1552.1 970.3 L1553.2 970.3 L1554.7 970.3 L1556.2 970.3 L1557.4 970.3 L1557.7 970.3 L1559.2 970.3 L1560.7 970.3 L1562.2 970.3 L1563.7 970.3 L1564.0 970.3 L1565.2 970.3 L1566.7 970.3 L1568.2 970.3 L1569.7 970.3 L1571.2 970.3 L1572.7 970.3 L1574.2 970.3 L1575.7 970.3 L1577.2 970.3 L1578.5 970.3 L1578.7 970.3 L1580.2 970.3 L1581.7 970.3 L1583.2 970.3 L1584.7 970.3 L1586.2 970.3 L1587.7 970.3 L1589.1 970.3 L1589.2 970.3 L1590.7 970.3 L1592.2 970.3 L1593.7 970.3 L1595.2 970.3 L1596.7 970.3 L1598.2 970.3 L1599.7 970.3 L1601.2 970.3 L1602.7 970.3 L1604.2 970.3 L1604.9 970.3 L1605.7 970.3 L1607.2 970.3 L1608.7 970.3 L1610.2 970.3 L1611.7 970.3 L1613.1 970.3 L1614.6 970.3 L1615.5 970.3 L1616.1 970.3 L1617.6 970.3 L1619.1 970.3 L1620.6 970.3 L1622.1 970.3 L1623.6 970.3 L1625.1 970.3 L1626.1 970.3 L1626.6 970.3 L1628.1 970.3 L1629.6 970.3 L1631.1 970.3 L1632.6 970.3 L1634.1 970.3 L1635.6 970.3 L1636.6 970.3 L1637.1 970.3 L1638.6 970.3 L1640.1 970.3 L1641.6 970.3 L1643.1 970.3 L1644.6 970.3 L1646.1 970.3 L1647.2 970.3 L1647.6 970.3 L1649.1 970.3 L1650.6 970.3 L1652.1 970.3 L1653.6 970.3 L1655.1 970.3 L1656.6 970.3 L1657.8 970.3 L1658.1 970.3 L1659.6 970.3 L1661.1 970.3 L1662.5 970.3 L1662.6 970.3 L1664.1 970.3 L1665.6 970.3 L1667.0 970.3 L1667.1 970.3 L1668.6 970.3 L1670.1 970.3 L1671.6 970.3 L1673.1 970.3 L1673.6 970.3 L1674.6 970.3 L1676.1 970.3 L1677.6 970.3 L1679.1 970.3 L1680.6 970.3 L1681.6 970.3 L1682.1 970.3 L1683.6 970.3 L1685.1 970.3 L1686.6 970.3 L1688.1 970.3 L1689.6 970.3 L1691.1 970.3 L1692.6 970.3 L1694.1 970.3 L1695.6 970.3 L1697.1 970.3 L1697.4 970.3 L1698.6 970.3 L1700.1 970.3 L1701.6 970.3 L1703.1 970.3 L1704.6 970.3 L1706.1 970.3 L1707.6 970.3 L1709.1 970.3 L1710.6 970.3 L1710.6 970.3 L1712.1 970.3 L1713.6 970.3 L1715.1 970.3 L1716.6 970.3 L1718.1 970.3 L1719.6 970.3 L1721.1 970.3 L1722.6 970.3 L1723.8 970.3 L1724.1 970.3 L1725.6 970.3 L1727.1 970.3 L1728.6 970.3 L1730.1 970.3 L1731.6 970.3 L1731.8 970.3 L1733.1 970.3 L1734.6 970.3 L1736.1 970.3 L1737.0 970.3 L1737.6 970.3 L1739.1 970.3 L1740.6 970.3 L1741.0 970.3 L1742.1 970.3 L1743.6 970.3 L1745.1 970.3 L1746.6 970.3 L1747.6 970.3 L1748.1 970.3 L1749.6 970.3 L1751.1 970.3 L1752.6 970.3 L1754.1 970.3 L1755.6 970.3 L1757.1 970.3 L1758.6 970.3 L1760.0 970.3 L1760.8 970.3 L1761.5 970.3 L1763.0 970.3 L1764.5 970.3 L1766.0 970.3 L1767.5 970.3 L1769.0 970.3 L1770.5 970.3 L1772.0 970.3 L1773.5 970.3 L1774.0 970.3 L1775.0 970.3 L1776.5 970.3 L1778.0 970.3 L1779.5 970.3 L1781.0 970.3 L1782.5 970.3 L1784.0 970.3 L1784.6 970.3 L1785.5 970.3 L1787.0 970.3 L1788.5 970.3 L1790.0 970.3 L1791.5 970.3 L1792.5 970.3 L1793.0 970.3 L1794.5 970.3 L1796.0 970.3 L1796.5 970.3 L1797.5 970.3 L1799.0 970.3 L1800.5 970.3 L1801.8 970.3 L1802.0 970.3 L1803.5 970.3 L1805.0 970.3 L1806.5 970.3 L1807.0 970.3 L1808.0 970.3 L1809.5 970.3 L1811.0 970.3 L1812.5 970.3 L1813.7 970.3 L1814.0 970.3 L1815.5 970.3 L1817.0 970.3 L1818.5 970.3 L1818.9 970.3 L1820.0 970.3 L1821.5 970.3 L1823.0 970.3 L1824.2 970.3 L1824.5 970.3 L1826.0 970.3 L1827.5 970.3 L1829.0 970.3 L1830.5 970.3 L1830.8 970.3 L1832.0 970.3 L1833.5 970.3 L1834.8 970.3 L1835.0 970.3 L1836.5 970.3 L1838.0 970.3 L1839.5 970.3 L1841.0 970.3 L1842.5 970.3 L1842.7 970.3 L1844.0 970.3 L1845.5 970.3 L1847.0 970.3 L1847.2 970.3 L1848.5 970.3" fill="none" stroke="#6ED0E0" stroke-width="1.6"/>
<text x="1026.5" y="808.6" text-anchor="end" class="tk">100</text>
<text x="1026.5" y="850.2" text-anchor="end" class="tk">75</text>
<text x="1026.5" y="891.8" text-anchor="end" class="tk">50</text>
<text x="1026.5" y="933.4" text-anchor="end" class="tk">25</text>
<text x="1026.5" y="975.0" text-anchor="end" class="tk">0</text>
<text x="1082.3" y="990.9" text-anchor="middle" class="tk">09:00</text>
<text x="1197.1" y="990.9" text-anchor="middle" class="tk">10:00</text>
<text x="1311.9" y="990.9" text-anchor="middle" class="tk">11:00</text>
<text x="1426.7" y="990.9" text-anchor="middle" class="tk">12:00</text>
<text x="1541.5" y="990.9" text-anchor="middle" class="tk">13:00</text>
<text x="1656.3" y="990.9" text-anchor="middle" class="tk">14:00</text>
<text x="1771.1" y="990.9" text-anchor="middle" class="tk">15:00</text>
<rect x="1017" y="1014.5" width="14" height="4" fill="#7EB26D"/>
<text x="1036" y="1021" class="lg">gagarin_local.network.tcp.activeopens</text>
<rect x="1269" y="1014.5" width="14" height="4" fill="#EAB839"/>
<text x="1288" y="1021" class="lg">gagarin_local.network.tcp.currestab</text>
<rect x="1503" y="1014.5" width="14" height="4" fill="#6ED0E0"/>
<text x="1522" y="1021" class="lg">gagarin_local.network.tcp.inerrs</text>
</svg>
</body></html>
